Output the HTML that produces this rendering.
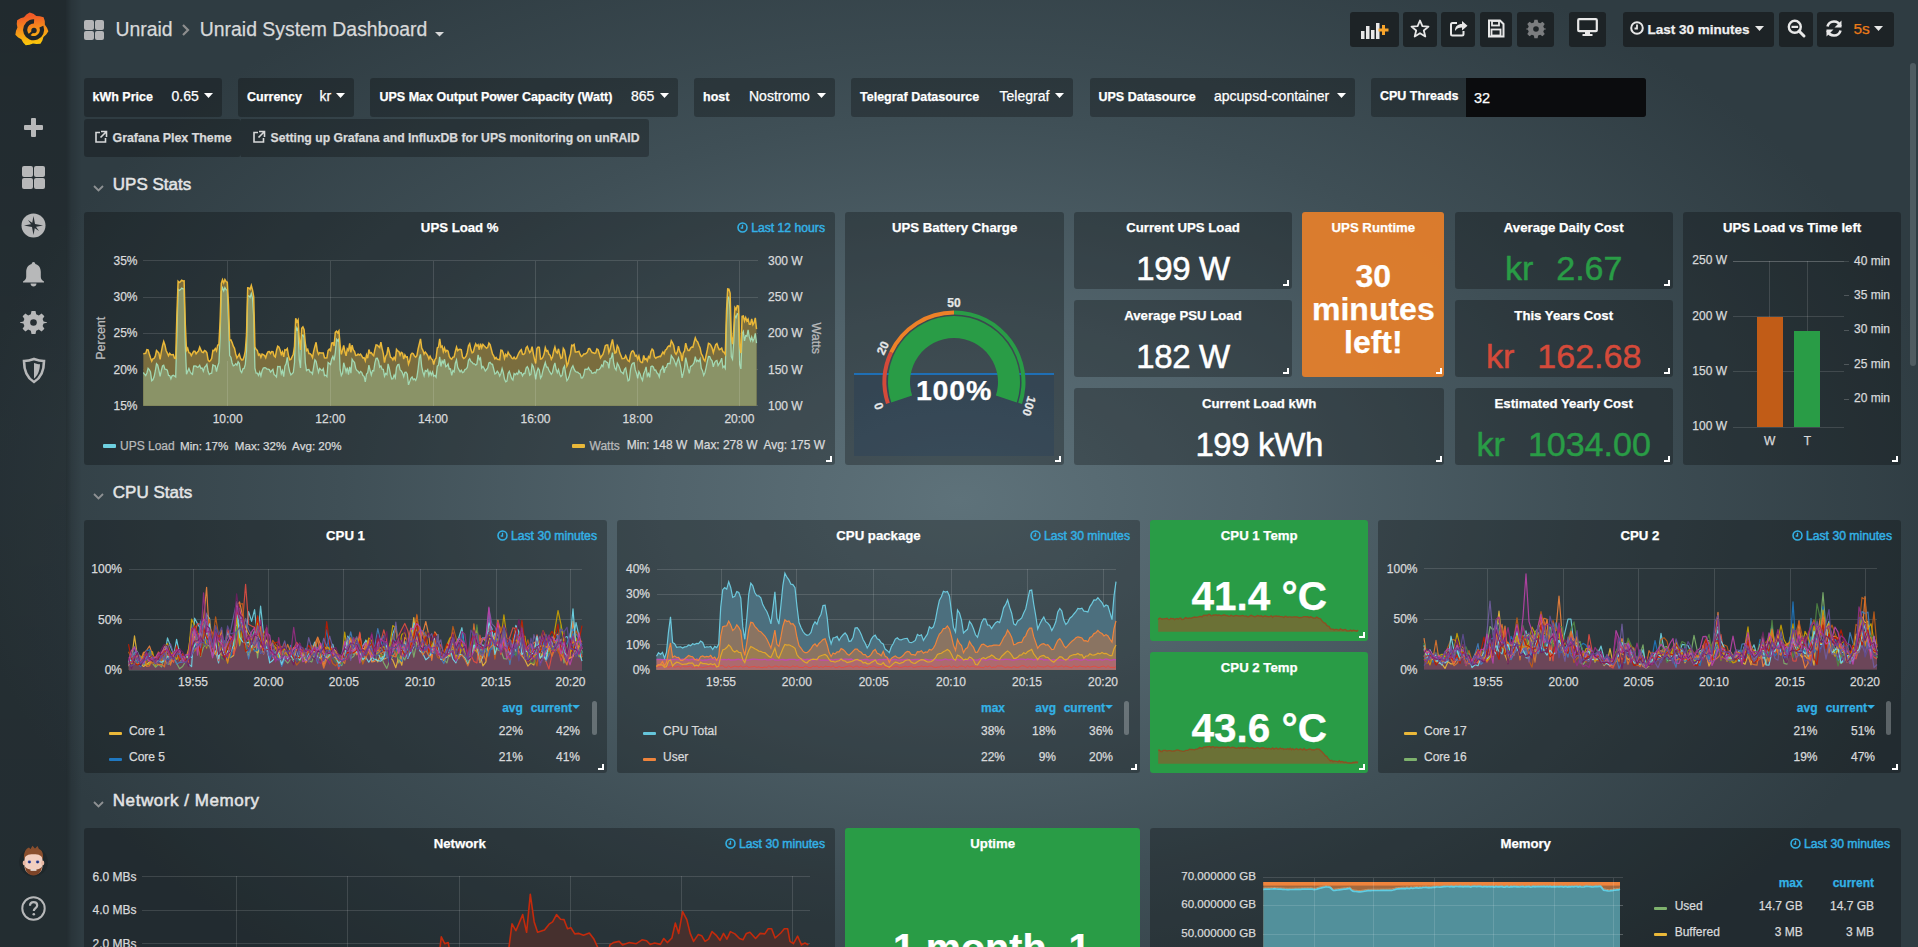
<!DOCTYPE html><html><head><meta charset="utf-8"><title>Unraid System Dashboard</title><style>
*{margin:0;padding:0;box-sizing:border-box}
html,body{width:1918px;height:947px;overflow:hidden}
body{font-family:"Liberation Sans",sans-serif;position:relative;
background:#2b353b;}
.bg{position:absolute;left:0;top:0;width:1918px;height:947px;
background:radial-gradient(ellipse 1000px 620px at 960px 500px,#5e727a 0%,#51636b 30%,#3f4f56 62%,#2f3c42 100%);}
.t{position:absolute;white-space:pre;line-height:1;-webkit-text-stroke:0.25px currentColor}
.b{position:absolute}
.p{position:absolute;border-radius:3px}
.rh{position:absolute;width:6px;height:6px;border-right:2px solid #fff;border-bottom:2px solid #fff}
svg{position:absolute;overflow:visible}
</style></head><body>
<div class="bg"></div>
<div class="b" style="left:0;top:0;width:66px;height:947px;background:linear-gradient(180deg,rgba(0,0,0,0.3) 0%,rgba(0,0,0,0.22) 45%,rgba(0,0,0,0.26) 100%)"></div>
<div class="b" style="left:66px;top:0;width:16px;height:947px;background:linear-gradient(90deg,rgba(0,0,0,0.28) 0%,rgba(0,0,0,0.12) 35%,rgba(0,0,0,0) 100%)"></div>
<svg style="left:0;top:0" width="66" height="60" viewBox="0 0 66 60">
<defs><linearGradient id="glg" x1="0" y1="0" x2="0" y2="1"><stop offset="0.1" stop-color="#f05a28"/><stop offset="1" stop-color="#fbca0a"/></linearGradient></defs>
<g transform="rotate(-6 31.5 29.5)"><path fill="url(#glg)" d="M31.5,12.3 L35.0,14.1 L37.7,16.5 L41.2,17.1 L44.8,18.7 L45.6,22.5 L45.3,26.1 L47.1,29.3 L48.1,33.1 L45.6,36.1 L42.6,38.2 L41.2,41.5 L38.9,44.6 L35.0,44.5 L31.5,43.5 L28.0,44.5 L24.1,44.6 L21.8,41.5 L20.4,38.2 L17.4,36.1 L14.9,33.1 L15.9,29.3 L17.7,26.1 L17.4,22.5 L18.2,18.7 L21.8,17.1 L25.3,16.5 L28.0,14.1Z"/></g>
<circle cx="33.6" cy="29.8" r="8.4" fill="none" stroke="#1f2529" stroke-width="4.2" stroke-dasharray="43 10" transform="rotate(-22 33.6 29.8)"/>
<circle cx="34" cy="30.5" r="2.7" fill="#1f2529"/>
<path d="M33,31.5 L29,35" stroke="#1f2529" stroke-width="2.2"/>
</svg>
<div class="b" style="left:24px;top:125px;width:19px;height:5px;background:#b7b8b9;border-radius:1px"></div>
<div class="b" style="left:31px;top:118px;width:5px;height:19px;background:#b7b8b9;border-radius:1px"></div>
<div class="b" style="left:22px;top:166px;width:11px;height:11px;background:#b7b8b9;border-radius:2px"></div>
<div class="b" style="left:22px;top:178px;width:11px;height:11px;background:#b7b8b9;border-radius:2px"></div>
<div class="b" style="left:34px;top:166px;width:11px;height:11px;background:#b7b8b9;border-radius:2px"></div>
<div class="b" style="left:34px;top:178px;width:11px;height:11px;background:#b7b8b9;border-radius:2px"></div>
<svg style="left:21px;top:213px" width="25" height="25" viewBox="0 0 25 25"><circle cx="12.5" cy="12.5" r="12" fill="#b7b8b9"/>
<path fill="#262e33" d="M12.5,3 L14,11 L22,12.5 L14,14 L12.5,22 L11,14 L3,12.5 L11,11 Z"/>
<path fill="#262e33" d="M7,7 L13,11 L18,18 L12,14 Z"/></svg>
<svg style="left:22px;top:261px" width="23" height="26" viewBox="0 0 23 26"><path fill="#b7b8b9" d="M11.5,1 C12.8,1 13.3,2 13.3,3 C17.3,4 18.8,7.5 18.8,11 L18.8,16 C18.8,18 20.5,19.5 22,20.5 L22,21.5 L1,21.5 L1,20.5 C2.5,19.5 4.2,18 4.2,16 L4.2,11 C4.2,7.5 5.7,4 9.7,3 C9.7,2 10.2,1 11.5,1 Z"/><path fill="#b7b8b9" d="M8.5,22.5 L14.5,22.5 C14.5,24.5 13,25.5 11.5,25.5 C10,25.5 8.5,24.5 8.5,22.5Z"/></svg>
<svg style="left:21px;top:310px" width="25" height="25" viewBox="0 0 25 25"><path fill="#b7b8b9" d="M10.5,1 L14.5,1 L15.2,4.3 L17.8,5.4 L20.6,3.5 L23.4,6.3 L21.6,9.1 L22.6,11.6 L26,12.3 L26,12.7 L22.6,13.4 L21.6,15.9 L23.4,18.7 L20.6,21.5 L17.8,19.6 L15.2,20.7 L14.5,24 L10.5,24 L9.8,20.7 L7.2,19.6 L4.4,21.5 L1.6,18.7 L3.4,15.9 L2.4,13.4 L-1,12.7 L-1,12.3 L2.4,11.6 L3.4,9.1 L1.6,6.3 L4.4,3.5 L7.2,5.4 L9.8,4.3 Z" transform="translate(0,0) scale(1)"/><circle cx="12.5" cy="12.5" r="3.3" fill="#262e33"/></svg>
<svg style="left:22px;top:357px" width="24" height="27" viewBox="0 0 24 27"><path fill="none" stroke="#b7b8b9" stroke-width="2.6" d="M12,2 C16,3.5 19.5,4 22,4 C22,14 18,21.5 12,25 C6,21.5 2,14 2,4 C4.5,4 8,3.5 12,2 Z"/><path fill="#b7b8b9" d="M12,6 C14.5,7 16.5,7.3 18,7.3 C17.8,14 15.5,19 12,21.5 Z"/></svg>
<svg style="left:13px;top:840px" width="41" height="44" viewBox="0 0 41 44">
<circle cx="20.5" cy="22" r="14.5" fill="rgba(0,0,0,0.13)"/>
<path fill="#f2cfc0" d="M11.5,20 C11.5,13 15,10.5 20.5,10.5 C26,10.5 29.5,13 29.5,20 L29.5,26 C29.5,31 26,34.5 20.5,34.5 C15,34.5 11.5,31 11.5,26 Z"/>
<ellipse cx="11.3" cy="23" rx="1.6" ry="2.4" fill="#e8b8a4"/><ellipse cx="29.7" cy="23" rx="1.6" ry="2.4" fill="#e8b8a4"/>
<path fill="#8a4f2e" d="M11,19.5 C10.5,12 13,8.5 16,7.5 L17.5,9 L19.5,5.8 L22,8.5 L24.5,6 L26,9 C29,10 30.5,13 30,19.5 C28.5,15.5 26.5,14.2 20.5,14.2 C14.5,14.2 12.5,15.5 11,19.5Z"/>
<path fill="#7d4428" d="M12,26.5 C12.5,32 15.5,35.5 20.5,35.5 C25.5,35.5 28.5,32 29,26.5 C27.5,29 25,29.5 20.5,29.5 C16,29.5 13.5,29 12,26.5Z"/>
<rect x="17.5" y="29.2" width="6" height="1.6" rx="0.6" fill="#f4f0ee"/>
<ellipse cx="16.4" cy="22" rx="1.7" ry="1.4" fill="#3a4fa8"/><ellipse cx="24.6" cy="22" rx="1.7" ry="1.4" fill="#3a4fa8"/>
<circle cx="16.4" cy="22" r="0.6" fill="#111"/><circle cx="24.6" cy="22" r="0.6" fill="#111"/>
</svg>
<svg style="left:21px;top:896px" width="25" height="25" viewBox="0 0 25 25"><circle cx="12.5" cy="12.5" r="11.2" fill="none" stroke="#b7b8b9" stroke-width="2"/>
<path fill="none" stroke="#b7b8b9" stroke-width="2.2" d="M9,9.8 C9,7.3 10.8,6.2 12.6,6.2 C14.6,6.2 16.2,7.5 16.2,9.4 C16.2,12 12.8,12.2 12.8,15"/><circle cx="12.8" cy="18.3" r="1.3" fill="#b7b8b9"/></svg>
<div class="b" style="left:1910px;top:63px;width:6px;height:303px;background:rgba(120,130,135,0.45);border-radius:3px"></div>
<div class="b" style="left:84.0px;top:20.0px;width:9.5px;height:9.5px;background:#b4b5b7;border-radius:2px"></div>
<div class="b" style="left:84.0px;top:30.5px;width:9.5px;height:9.5px;background:#b4b5b7;border-radius:2px"></div>
<div class="b" style="left:94.5px;top:20.0px;width:9.5px;height:9.5px;background:#b4b5b7;border-radius:2px"></div>
<div class="b" style="left:94.5px;top:30.5px;width:9.5px;height:9.5px;background:#b4b5b7;border-radius:2px"></div>
<div class="t" style="top:20.28px;font-size:19.4px;color:#d8d9da;left:115.50px;">Unraid</div>
<svg style="left:181px;top:23px" width="10" height="14" viewBox="0 0 10 14"><path d="M2,2 L7,7 L2,12" fill="none" stroke="#8e8e8e" stroke-width="2.2"/></svg>
<div class="t" style="top:20.28px;font-size:19.4px;color:#d8d9da;left:199.80px;">Unraid System Dashboard</div>
<svg style="left:435px;top:32px" width="9" height="5" viewBox="0 0 9 5"><path d="M0,0 L9,0 L4.5,4.5Z" fill="#d8d9da"/></svg>
<div class="b" style="left:1350px;top:12px;width:49px;height:34.5px;background:#1d2326;border-radius:3px;"></div>
<div class="b" style="left:1403px;top:12px;width:34px;height:34.5px;background:#1d2326;border-radius:3px;"></div>
<div class="b" style="left:1441px;top:12px;width:34px;height:34.5px;background:#1d2326;border-radius:3px;"></div>
<div class="b" style="left:1480px;top:12px;width:32px;height:34.5px;background:#1d2326;border-radius:3px;"></div>
<div class="b" style="left:1517px;top:12px;width:37px;height:34.5px;background:#1d2326;border-radius:3px;"></div>
<div class="b" style="left:1569px;top:12px;width:37px;height:34.5px;background:#1d2326;border-radius:3px;"></div>
<div class="b" style="left:1623px;top:12px;width:151px;height:34.5px;background:#1d2326;border-radius:3px;"></div>
<div class="b" style="left:1779px;top:12px;width:34px;height:34.5px;background:#1d2326;border-radius:3px;"></div>
<div class="b" style="left:1817px;top:12px;width:77px;height:34.5px;background:#1d2326;border-radius:3px;"></div>
<svg style="left:1360px;top:20px" width="30" height="20" viewBox="0 0 30 20">
<rect x="1" y="11" width="3.5" height="8" fill="#e8e8e8"/><rect x="6" y="6" width="3.5" height="13" fill="#e8e8e8"/><rect x="11" y="10" width="3.5" height="9" fill="#e8e8e8"/><rect x="16" y="3" width="3.5" height="16" fill="#e8e8e8"/>
<rect x="18.5" y="8.5" width="10" height="3" fill="#f7a42b"/><rect x="22" y="5" width="3" height="10" fill="#f7a42b"/></svg>
<svg style="left:1410px;top:19px" width="20" height="20" viewBox="0 0 20 20"><path d="M10,1.5 L12.4,7.2 L18.5,7.6 L13.8,11.5 L15.3,17.5 L10,14.2 L4.7,17.5 L6.2,11.5 L1.5,7.6 L7.6,7.2Z" fill="none" stroke="#e8e8e8" stroke-width="1.8" stroke-linejoin="round"/></svg>
<svg style="left:1449px;top:18px" width="20" height="20" viewBox="0 0 20 20"><path d="M8,5 L3.5,5 C2.5,5 2,5.5 2,6.5 L2,16 C2,17 2.5,17.5 3.5,17.5 L13,17.5 C14,17.5 14.5,17 14.5,16 L14.5,13" fill="none" stroke="#e8e8e8" stroke-width="2"/><path d="M6,13 C6,8 9,6 13,6 L13,3 L18.5,7.8 L13,12.5 L13,9.5 C10,9.5 7.5,10.5 6,13Z" fill="#e8e8e8"/></svg>
<svg style="left:1487px;top:19px" width="18" height="19" viewBox="0 0 18 19"><path d="M2,1.5 L13,1.5 L16.5,5 L16.5,17.5 L2,17.5Z" fill="none" stroke="#e8e8e8" stroke-width="2"/><rect x="5" y="2" width="7" height="4.5" fill="none" stroke="#e8e8e8" stroke-width="1.8"/><rect x="4.5" y="10.5" width="9" height="6" fill="none" stroke="#e8e8e8" stroke-width="1.8"/></svg>
<svg style="left:1526px;top:19px" width="20" height="20" viewBox="0 0 25 25"><path fill="#7b7d7f" d="M10.5,1 L14.5,1 L15.2,4.3 L17.8,5.4 L20.6,3.5 L23.4,6.3 L21.6,9.1 L22.6,11.6 L25,12.3 L25,12.7 L22.6,13.4 L21.6,15.9 L23.4,18.7 L20.6,21.5 L17.8,19.6 L15.2,20.7 L14.5,24 L10.5,24 L9.8,20.7 L7.2,19.6 L4.4,21.5 L1.6,18.7 L3.4,15.9 L2.4,13.4 L0,12.7 L0,12.3 L2.4,11.6 L3.4,9.1 L1.6,6.3 L4.4,3.5 L7.2,5.4 L9.8,4.3 Z"/><circle cx="12.5" cy="12.5" r="3.5" fill="#1d2326"/></svg>
<svg style="left:1577px;top:18px" width="21" height="19" viewBox="0 0 21 19"><rect x="1.2" y="1.2" width="18.6" height="12" rx="1" fill="none" stroke="#e8e8e8" stroke-width="2.2"/><rect x="8" y="14" width="5" height="2.5" fill="#e8e8e8"/><rect x="5.5" y="16" width="10" height="2" fill="#e8e8e8"/></svg>
<svg style="left:1630px;top:21px" width="14" height="14" viewBox="0 0 14 14"><circle cx="7" cy="7" r="5.8" fill="none" stroke="#e8e8e8" stroke-width="2"/><path d="M7,3.5 L7,7.5 L4.5,7.5" fill="none" stroke="#e8e8e8" stroke-width="1.8"/></svg>
<div class="t" style="top:22.57px;font-size:13.5px;color:#f0f0f0;font-weight:700;left:1647.50px;">Last 30 minutes</div>
<svg style="left:1755px;top:26px" width="9" height="6" viewBox="0 0 9 6"><path d="M0,0 L9,0 L4.5,5Z" fill="#e8e8e8"/></svg>
<svg style="left:1787px;top:19px" width="19" height="19" viewBox="0 0 19 19"><circle cx="7.8" cy="7.8" r="6" fill="none" stroke="#e8e8e8" stroke-width="2.4"/><path d="M12,12 L17,17" stroke="#e8e8e8" stroke-width="3" stroke-linecap="round"/><rect x="4.5" y="6.8" width="6.6" height="2.2" fill="#e8e8e8"/></svg>
<svg style="left:1825px;top:19px" width="18" height="19" viewBox="0 0 18 19"><path d="M15.5,7.5 C14.5,4.3 12,2.5 9,2.5 C5.5,2.5 3,5 2.5,7.5" fill="none" stroke="#e8e8e8" stroke-width="2.6"/><path d="M16.5,1.5 L16.5,8.5 L9.5,8.5Z" fill="#e8e8e8"/><path d="M2.5,11.5 C3.5,14.7 6,16.5 9,16.5 C12.5,16.5 15,14 15.5,11.5" fill="none" stroke="#e8e8e8" stroke-width="2.6"/><path d="M1.5,17.5 L1.5,10.5 L8.5,10.5Z" fill="#e8e8e8"/></svg>
<div class="t" style="top:20.88px;font-size:15.5px;color:#eb7b18;left:1853.50px;">5s</div>
<svg style="left:1874px;top:26px" width="9" height="6" viewBox="0 0 9 6"><path d="M0,0 L9,0 L4.5,5Z" fill="#e8e8e8"/></svg>
<div class="b" style="left:84px;top:78px;width:138px;height:38.5px;background:rgba(0,0,0,0.27);border-radius:3px;"></div>
<div class="t" style="top:90.92px;font-size:12.5px;color:#ffffff;font-weight:700;left:92.50px;">kWh Price</div>
<div class="t" style="top:88.75px;font-size:14px;color:#ffffff;left:171.50px;">0.65</div>
<svg style="left:204px;top:93px" width="9" height="6" viewBox="0 0 9 6"><path d="M0,0 L9,0 L4.5,5Z" fill="#ffffff"/></svg>
<div class="b" style="left:238px;top:78px;width:116px;height:38.5px;background:rgba(0,0,0,0.27);border-radius:3px;"></div>
<div class="t" style="top:90.92px;font-size:12.5px;color:#ffffff;font-weight:700;left:247.00px;">Currency</div>
<div class="t" style="top:88.75px;font-size:14px;color:#ffffff;left:319.50px;">kr</div>
<svg style="left:336px;top:93px" width="9" height="6" viewBox="0 0 9 6"><path d="M0,0 L9,0 L4.5,5Z" fill="#ffffff"/></svg>
<div class="b" style="left:370px;top:78px;width:308px;height:38.5px;background:rgba(0,0,0,0.27);border-radius:3px;"></div>
<div class="t" style="top:90.92px;font-size:12.5px;color:#ffffff;font-weight:700;left:379.50px;">UPS Max Output Power Capacity (Watt)</div>
<div class="t" style="top:88.75px;font-size:14px;color:#ffffff;left:631.00px;">865</div>
<svg style="left:660px;top:93px" width="9" height="6" viewBox="0 0 9 6"><path d="M0,0 L9,0 L4.5,5Z" fill="#ffffff"/></svg>
<div class="b" style="left:694px;top:78px;width:141px;height:38.5px;background:rgba(0,0,0,0.27);border-radius:3px;"></div>
<div class="t" style="top:90.92px;font-size:12.5px;color:#ffffff;font-weight:700;left:703.00px;">host</div>
<div class="t" style="top:88.75px;font-size:14px;color:#ffffff;left:749.00px;">Nostromo</div>
<svg style="left:817px;top:93px" width="9" height="6" viewBox="0 0 9 6"><path d="M0,0 L9,0 L4.5,5Z" fill="#ffffff"/></svg>
<div class="b" style="left:851px;top:78px;width:222px;height:38.5px;background:rgba(0,0,0,0.27);border-radius:3px;"></div>
<div class="t" style="top:90.92px;font-size:12.5px;color:#ffffff;font-weight:700;left:860.00px;">Telegraf Datasource</div>
<div class="t" style="top:88.75px;font-size:14px;color:#ffffff;left:999.50px;">Telegraf</div>
<svg style="left:1055px;top:93px" width="9" height="6" viewBox="0 0 9 6"><path d="M0,0 L9,0 L4.5,5Z" fill="#ffffff"/></svg>
<div class="b" style="left:1090px;top:78px;width:265px;height:38.5px;background:rgba(0,0,0,0.27);border-radius:3px;"></div>
<div class="t" style="top:90.92px;font-size:12.5px;color:#ffffff;font-weight:700;left:1098.50px;">UPS Datasource</div>
<div class="t" style="top:88.75px;font-size:14px;color:#ffffff;left:1214.00px;">apcupsd-container</div>
<svg style="left:1337px;top:93px" width="9" height="6" viewBox="0 0 9 6"><path d="M0,0 L9,0 L4.5,5Z" fill="#ffffff"/></svg>
<div class="b" style="left:1371px;top:78px;width:275px;height:38.5px;background:rgba(0,0,0,0.27);border-radius:3px;"></div>
<div class="b" style="left:1466px;top:78px;width:180px;height:38.5px;background:#0b0c0e;border-radius:0px;border-radius:0 3px 3px 0"></div>
<div class="t" style="top:90.42px;font-size:12.5px;color:#ffffff;font-weight:700;left:1380.00px;">CPU Threads</div>
<div class="t" style="top:90.73px;font-size:14.5px;color:#ffffff;left:1474.00px;">32</div>
<div class="b" style="left:84px;top:119px;width:157px;height:37.5px;background:rgba(0,0,0,0.27);border-radius:3px;"></div>
<div class="b" style="left:241px;top:119px;width:408px;height:37.5px;background:rgba(0,0,0,0.27);border-radius:0px;border-radius:0 3px 3px 0"></div>
<svg style="left:94px;top:130px" width="14" height="14" viewBox="0 0 14 14"><path d="M6,2.5 L2,2.5 L2,12 L11.5,12 L11.5,8" fill="none" stroke="#d8d9da" stroke-width="1.6"/><path d="M7,1.5 L12.5,1.5 L12.5,7 M12.5,1.5 L6.5,7.5" fill="none" stroke="#d8d9da" stroke-width="1.6"/></svg>
<div class="t" style="top:131.80px;font-size:12.4px;color:#d8d9da;font-weight:700;left:112.50px;">Grafana Plex Theme</div>
<svg style="left:252px;top:130px" width="14" height="14" viewBox="0 0 14 14"><path d="M6,2.5 L2,2.5 L2,12 L11.5,12 L11.5,8" fill="none" stroke="#d8d9da" stroke-width="1.6"/><path d="M7,1.5 L12.5,1.5 L12.5,7 M12.5,1.5 L6.5,7.5" fill="none" stroke="#d8d9da" stroke-width="1.6"/></svg>
<div class="t" style="top:131.97px;font-size:12.2px;color:#d8d9da;font-weight:700;left:270.50px;">Setting up Grafana and InfluxDB for UPS monitoring on unRAID</div>
<svg style="left:93px;top:184.8px" width="11" height="7" viewBox="0 0 11 7"><path d="M1,1 L5.5,5.5 L10,1" fill="none" stroke="#8e9193" stroke-width="1.8"/></svg>
<div class="t" style="top:176.41px;font-size:17px;color:#e3e4e5;letter-spacing:0px;left:112.80px;-webkit-text-stroke:0.5px #e3e4e5">UPS Stats</div>
<svg style="left:93px;top:492.8px" width="11" height="7" viewBox="0 0 11 7"><path d="M1,1 L5.5,5.5 L10,1" fill="none" stroke="#8e9193" stroke-width="1.8"/></svg>
<div class="t" style="top:484.41px;font-size:17px;color:#e3e4e5;letter-spacing:0px;left:112.80px;-webkit-text-stroke:0.5px #e3e4e5">CPU Stats</div>
<svg style="left:93px;top:800.8px" width="11" height="7" viewBox="0 0 11 7"><path d="M1,1 L5.5,5.5 L10,1" fill="none" stroke="#8e9193" stroke-width="1.8"/></svg>
<div class="t" style="top:792.41px;font-size:17px;color:#e3e4e5;letter-spacing:0.55px;left:112.80px;-webkit-text-stroke:0.5px #e3e4e5">Network / Memory</div>
<div class="p" style="left:1073.8px;top:212px;width:218.4px;height:76.6px;background:rgba(0,0,0,0.27)"></div>
<div class="t" style="top:221.13px;font-size:13.2px;color:#ffffff;font-weight:700;left:583.00px;width:1200px;text-align:center;">Current UPS Load</div>
<div class="t" style="top:252.07px;font-size:33px;color:#ffffff;letter-spacing:-0.4px;left:583.00px;width:1200px;text-align:center;-webkit-text-stroke:0.5px #fff">199 W</div>
<div class="rh" style="left:1283.2px;top:279.6px"></div>
<div class="p" style="left:1073.8px;top:300px;width:218.4px;height:76.6px;background:rgba(0,0,0,0.27)"></div>
<div class="t" style="top:309.13px;font-size:13.2px;color:#ffffff;font-weight:700;left:583.00px;width:1200px;text-align:center;">Average PSU Load</div>
<div class="t" style="top:340.07px;font-size:33px;color:#ffffff;letter-spacing:-0.4px;left:583.00px;width:1200px;text-align:center;-webkit-text-stroke:0.5px #fff">182 W</div>
<div class="rh" style="left:1283.2px;top:367.6px"></div>
<div class="p" style="left:1073.8px;top:388px;width:370.7px;height:76.6px;background:rgba(0,0,0,0.27)"></div>
<div class="t" style="top:397.13px;font-size:13.2px;color:#ffffff;font-weight:700;left:659.15px;width:1200px;text-align:center;">Current Load kWh</div>
<div class="t" style="top:428.07px;font-size:33px;color:#ffffff;letter-spacing:-0.4px;left:659.15px;width:1200px;text-align:center;-webkit-text-stroke:0.5px #fff">199 kWh</div>
<div class="rh" style="left:1435.5px;top:455.6px"></div>
<div class="p" style="left:1302.2px;top:212px;width:142.3px;height:164.6px;background:rgba(237,129,40,0.89)"></div>
<div class="t" style="top:221.13px;font-size:13.2px;color:#ffffff;font-weight:700;left:773.35px;width:1200px;text-align:center;">UPS Runtime</div>
<div class="t" style="top:259.91px;font-size:32px;color:#ffffff;font-weight:700;left:773.35px;width:1200px;text-align:center;">30</div>
<div class="t" style="top:292.91px;font-size:32px;color:#ffffff;font-weight:700;left:773.35px;width:1200px;text-align:center;">minutes</div>
<div class="t" style="top:325.91px;font-size:32px;color:#ffffff;font-weight:700;left:773.35px;width:1200px;text-align:center;">left!</div>
<div class="rh" style="left:1435.5px;top:367.6px"></div>
<div class="p" style="left:1454.5px;top:212px;width:218.4px;height:76.6px;background:rgba(0,0,0,0.27)"></div>
<div class="t" style="top:221.13px;font-size:13.2px;color:#ffffff;font-weight:700;left:963.70px;width:1200px;text-align:center;">Average Daily Cost</div>
<div class="t" style="left:963.7px;top:251.22px;width:1200px;text-align:center;font-size:34px;color:#299c46;-webkit-text-stroke:0.5px #299c46">kr<span style="display:inline-block;width:23px"></span>2.67</div>
<div class="rh" style="left:1663.9px;top:279.6px"></div>
<div class="p" style="left:1454.5px;top:300px;width:218.4px;height:76.6px;background:rgba(0,0,0,0.27)"></div>
<div class="t" style="top:309.13px;font-size:13.2px;color:#ffffff;font-weight:700;left:963.70px;width:1200px;text-align:center;">This Years Cost</div>
<div class="t" style="left:963.7px;top:339.22px;width:1200px;text-align:center;font-size:34px;color:#d44a3a;-webkit-text-stroke:0.5px #d44a3a">kr<span style="display:inline-block;width:23px"></span>162.68</div>
<div class="rh" style="left:1663.9px;top:367.6px"></div>
<div class="p" style="left:1454.5px;top:388px;width:218.4px;height:76.6px;background:rgba(0,0,0,0.27)"></div>
<div class="t" style="top:397.13px;font-size:13.2px;color:#ffffff;font-weight:700;left:963.70px;width:1200px;text-align:center;">Estimated Yearly Cost</div>
<div class="t" style="left:963.7px;top:427.22px;width:1200px;text-align:center;font-size:34px;color:#299c46;-webkit-text-stroke:0.5px #299c46">kr<span style="display:inline-block;width:23px"></span>1034.00</div>
<div class="rh" style="left:1663.9px;top:455.6px"></div>
<div class="p" style="left:84.0px;top:212px;width:751.4px;height:252.6px;background:rgba(0,0,0,0.27)"></div>
<div class="t" style="top:221.13px;font-size:13.2px;color:#ffffff;font-weight:700;left:-140.30px;width:1200px;text-align:center;">UPS Load %</div>
<div class="t" style="left:425.0px;top:221.87px;width:400px;text-align:right;font-size:12.2px;color:#33b1e5;-webkit-text-stroke:0.45px #33b1e5"><svg style="position:relative;display:inline-block;vertical-align:-1px;margin-right:3px" width="11" height="11" viewBox="0 0 12 12"><circle cx="6" cy="6" r="4.9" fill="none" stroke="#33b1e5" stroke-width="1.7"/><path d="M6,3 L6,6.6 L4,6.6" fill="none" stroke="#33b1e5" stroke-width="1.5"/></svg>Last 12 hours</div>
<div class="b" style="left:143.3px;top:260.2px;width:614.7px;height:1px;background:rgba(255,255,255,0.13)"></div>
<div class="b" style="left:143.3px;top:296.5px;width:614.7px;height:1px;background:rgba(255,255,255,0.13)"></div>
<div class="b" style="left:143.3px;top:332.8px;width:614.7px;height:1px;background:rgba(255,255,255,0.13)"></div>
<div class="b" style="left:143.3px;top:369.0px;width:614.7px;height:1px;background:rgba(255,255,255,0.13)"></div>
<div class="b" style="left:143.3px;top:405.3px;width:614.7px;height:1px;background:rgba(255,255,255,0.13)"></div>
<div class="b" style="left:227.2px;top:260.7px;width:1px;height:145.1px;background:rgba(255,255,255,0.13)"></div>
<div class="b" style="left:329.8px;top:260.7px;width:1px;height:145.1px;background:rgba(255,255,255,0.13)"></div>
<div class="b" style="left:432.5px;top:260.7px;width:1px;height:145.1px;background:rgba(255,255,255,0.13)"></div>
<div class="b" style="left:535.0px;top:260.7px;width:1px;height:145.1px;background:rgba(255,255,255,0.13)"></div>
<div class="b" style="left:637.1px;top:260.7px;width:1px;height:145.1px;background:rgba(255,255,255,0.13)"></div>
<div class="b" style="left:738.9px;top:260.7px;width:1px;height:145.1px;background:rgba(255,255,255,0.13)"></div>
<div class="t" style="top:254.84px;font-size:12px;color:#d8d9da;left:-1062.50px;width:1200px;text-align:right;">35%</div>
<div class="t" style="top:291.12px;font-size:12px;color:#d8d9da;left:-1062.50px;width:1200px;text-align:right;">30%</div>
<div class="t" style="top:327.39px;font-size:12px;color:#d8d9da;left:-1062.50px;width:1200px;text-align:right;">25%</div>
<div class="t" style="top:363.67px;font-size:12px;color:#d8d9da;left:-1062.50px;width:1200px;text-align:right;">20%</div>
<div class="t" style="top:399.94px;font-size:12px;color:#d8d9da;left:-1062.50px;width:1200px;text-align:right;">15%</div>
<div class="t" style="top:254.84px;font-size:12px;color:#d8d9da;left:768.00px;">300 W</div>
<div class="t" style="top:291.12px;font-size:12px;color:#d8d9da;left:768.00px;">250 W</div>
<div class="t" style="top:327.39px;font-size:12px;color:#d8d9da;left:768.00px;">200 W</div>
<div class="t" style="top:363.67px;font-size:12px;color:#d8d9da;left:768.00px;">150 W</div>
<div class="t" style="top:399.94px;font-size:12px;color:#d8d9da;left:768.00px;">100 W</div>
<div class="t" style="top:412.84px;font-size:12px;color:#d8d9da;left:-372.30px;width:1200px;text-align:center;">10:00</div>
<div class="t" style="top:412.84px;font-size:12px;color:#d8d9da;left:-269.70px;width:1200px;text-align:center;">12:00</div>
<div class="t" style="top:412.84px;font-size:12px;color:#d8d9da;left:-167.00px;width:1200px;text-align:center;">14:00</div>
<div class="t" style="top:412.84px;font-size:12px;color:#d8d9da;left:-64.50px;width:1200px;text-align:center;">16:00</div>
<div class="t" style="top:412.84px;font-size:12px;color:#d8d9da;left:37.60px;width:1200px;text-align:center;">18:00</div>
<div class="t" style="top:412.84px;font-size:12px;color:#d8d9da;left:139.40px;width:1200px;text-align:center;">20:00</div>
<div class="t" style="left:61px;top:332px;width:80px;text-align:center;font-size:12.5px;color:#b9babb;transform:rotate(-90deg)">Percent</div>
<div class="t" style="left:776px;top:332px;width:80px;text-align:center;font-size:12.5px;color:#b9babb;transform:rotate(90deg)">Watts</div>
<svg style="left:0;top:0" width="1918" height="947"><path d="M143.3,405.8 L143.3,353.8 L144.5,353.6 L145.7,353.4 L146.9,349.6 L148.1,349.8 L149.3,354.0 L150.5,357.8 L151.7,361.2 L152.9,358.8 L154.1,358.4 L155.3,356.2 L156.5,350.5 L157.7,351.8 L158.9,353.2 L160.1,359.3 L161.3,351.9 L162.5,345.9 L163.7,341.5 L164.9,344.9 L166.1,350.5 L167.3,353.0 L168.5,355.7 L169.7,353.3 L170.9,354.8 L172.1,354.8 L173.3,354.6 L174.5,358.2 L175.7,358.5 L176.9,314.6 L178.1,281.3 L179.3,282.5 L180.5,281.6 L181.7,280.2 L182.9,280.9 L184.1,280.8 L185.3,324.6 L186.5,350.4 L187.7,348.3 L188.9,352.6 L190.1,353.1 L191.3,355.6 L192.5,353.3 L193.7,351.3 L194.9,351.3 L196.1,353.8 L197.3,352.3 L198.5,351.0 L199.7,347.2 L200.9,349.9 L202.1,352.2 L203.3,352.6 L204.5,350.5 L205.7,351.2 L206.9,352.7 L208.1,359.9 L209.3,361.4 L210.5,360.6 L211.7,358.3 L212.9,350.4 L214.1,350.6 L215.3,348.6 L216.5,350.8 L217.7,345.3 L218.9,344.4 L220.1,321.5 L221.3,283.5 L222.5,279.8 L223.7,282.9 L224.9,279.6 L226.1,281.7 L227.3,282.2 L228.5,305.0 L229.7,340.3 L230.9,339.9 L232.1,342.6 L233.3,346.2 L234.5,348.3 L235.7,353.9 L236.9,358.0 L238.1,356.1 L239.3,354.1 L240.5,358.2 L241.7,359.9 L242.9,359.8 L244.1,356.9 L245.3,350.8 L246.5,334.9 L247.7,287.8 L248.9,287.9 L250.1,289.4 L251.3,285.5 L252.5,290.0 L253.7,296.5 L254.9,346.8 L256.1,349.3 L257.3,350.3 L258.5,355.2 L259.7,354.1 L260.9,357.4 L262.1,354.1 L263.3,354.6 L264.5,355.4 L265.7,357.7 L266.9,353.9 L268.1,351.6 L269.3,351.5 L270.5,353.5 L271.7,351.5 L272.9,351.6 L274.1,355.9 L275.3,357.0 L276.5,350.5 L277.7,346.2 L278.9,347.0 L280.1,350.0 L281.3,354.4 L282.5,352.0 L283.7,356.9 L284.9,349.7 L286.1,350.2 L287.3,348.6 L288.5,355.6 L289.7,359.8 L290.9,359.4 L292.1,356.7 L293.3,354.2 L294.5,346.3 L295.7,318.3 L296.9,322.0 L298.1,319.9 L299.3,339.0 L300.5,349.9 L301.7,328.2 L302.9,326.9 L304.1,329.7 L305.3,343.1 L306.5,350.5 L307.7,349.2 L308.9,353.5 L310.1,353.7 L311.3,354.9 L312.5,357.6 L313.7,351.1 L314.9,346.5 L316.1,342.3 L317.3,350.8 L318.5,354.4 L319.7,352.6 L320.9,353.1 L322.1,353.1 L323.3,353.0 L324.5,357.8 L325.7,357.9 L326.9,357.8 L328.1,350.6 L329.3,349.2 L330.5,350.6 L331.7,343.0 L332.9,342.7 L334.1,345.9 L335.3,332.3 L336.5,331.2 L337.7,332.9 L338.9,330.9 L340.1,344.9 L341.3,354.3 L342.5,350.4 L343.7,345.4 L344.9,351.8 L346.1,355.8 L347.3,348.9 L348.5,350.5 L349.7,343.3 L350.9,352.4 L352.1,345.1 L353.3,350.0 L354.5,351.3 L355.7,355.4 L356.9,355.3 L358.1,354.1 L359.3,355.0 L360.5,354.0 L361.7,355.8 L362.9,358.0 L364.1,357.7 L365.3,360.9 L366.5,354.9 L367.7,358.2 L368.9,349.6 L370.1,353.2 L371.3,352.6 L372.5,354.5 L373.7,355.7 L374.9,349.7 L376.1,344.8 L377.3,345.1 L378.5,346.4 L379.7,347.5 L380.9,342.2 L382.1,348.6 L383.3,353.7 L384.5,362.7 L385.7,356.3 L386.9,354.3 L388.1,347.2 L389.3,352.0 L390.5,357.2 L391.7,357.8 L392.9,359.9 L394.1,357.4 L395.3,359.6 L396.5,349.4 L397.7,350.9 L398.9,351.5 L400.1,355.1 L401.3,352.3 L402.5,353.2 L403.7,359.1 L404.9,354.9 L406.1,357.1 L407.3,356.9 L408.5,364.1 L409.7,360.8 L410.9,354.5 L412.1,353.2 L413.3,353.9 L414.5,356.0 L415.7,357.1 L416.9,355.7 L418.1,349.0 L419.3,343.9 L420.5,338.8 L421.7,348.1 L422.9,350.3 L424.1,354.1 L425.3,352.0 L426.5,353.6 L427.7,355.5 L428.9,358.9 L430.1,356.3 L431.3,358.8 L432.5,359.6 L433.7,364.5 L434.9,359.7 L436.1,357.9 L437.3,348.0 L438.5,347.0 L439.7,338.9 L440.9,347.1 L442.1,346.1 L443.3,351.6 L444.5,348.0 L445.7,351.7 L446.9,350.2 L448.1,351.1 L449.3,356.5 L450.5,358.4 L451.7,359.2 L452.9,357.2 L454.1,356.9 L455.3,351.7 L456.5,347.1 L457.7,350.6 L458.9,349.4 L460.1,349.3 L461.3,349.7 L462.5,356.9 L463.7,358.5 L464.9,357.8 L466.1,356.1 L467.3,352.5 L468.5,345.7 L469.7,343.7 L470.9,349.6 L472.1,352.9 L473.3,352.0 L474.5,347.2 L475.7,343.9 L476.9,346.0 L478.1,344.8 L479.3,349.7 L480.5,343.6 L481.7,347.8 L482.9,344.5 L484.1,345.8 L485.3,347.0 L486.5,348.2 L487.7,347.4 L488.9,343.1 L490.1,344.7 L491.3,349.3 L492.5,354.0 L493.7,355.9 L494.9,358.8 L496.1,357.4 L497.3,359.3 L498.5,359.4 L499.7,359.8 L500.9,350.1 L502.1,350.4 L503.3,353.2 L504.5,358.3 L505.7,354.5 L506.9,356.3 L508.1,352.2 L509.3,354.6 L510.5,355.7 L511.7,358.0 L512.9,358.8 L514.1,357.0 L515.3,358.8 L516.5,358.4 L517.7,355.5 L518.9,352.9 L520.1,351.0 L521.3,349.7 L522.5,354.3 L523.7,354.4 L524.9,353.2 L526.1,347.9 L527.3,346.4 L528.5,349.7 L529.7,352.6 L530.9,351.2 L532.1,346.6 L533.3,353.6 L534.5,359.1 L535.7,363.5 L536.9,348.5 L538.1,347.1 L539.3,347.3 L540.5,359.1 L541.7,358.8 L542.9,357.2 L544.1,354.1 L545.3,347.6 L546.5,351.1 L547.7,350.5 L548.9,354.3 L550.1,355.1 L551.3,359.3 L552.5,356.9 L553.7,350.9 L554.9,347.1 L556.1,351.8 L557.3,353.0 L558.5,348.8 L559.7,354.3 L560.9,358.4 L562.1,357.8 L563.3,348.4 L564.5,350.3 L565.7,356.5 L566.9,366.1 L568.1,363.4 L569.3,357.8 L570.5,353.9 L571.7,345.3 L572.9,345.6 L574.1,344.5 L575.3,351.9 L576.5,351.9 L577.7,351.8 L578.9,351.2 L580.1,354.5 L581.3,356.5 L582.5,355.8 L583.7,354.0 L584.9,354.0 L586.1,353.4 L587.3,352.2 L588.5,348.7 L589.7,348.5 L590.9,350.6 L592.1,352.5 L593.3,352.8 L594.5,353.5 L595.7,352.9 L596.9,348.9 L598.1,349.8 L599.3,353.8 L600.5,357.9 L601.7,356.0 L602.9,354.5 L604.1,350.6 L605.3,345.7 L606.5,344.9 L607.7,344.9 L608.9,352.3 L610.1,349.2 L611.3,344.0 L612.5,339.4 L613.7,346.6 L614.9,353.1 L616.1,352.5 L617.3,345.7 L618.5,347.7 L619.7,352.8 L620.9,355.6 L622.1,358.7 L623.3,358.6 L624.5,358.4 L625.7,355.7 L626.9,358.6 L628.1,360.8 L629.3,361.5 L630.5,354.5 L631.7,351.5 L632.9,350.8 L634.1,352.5 L635.3,356.2 L636.5,355.4 L637.7,359.4 L638.9,355.9 L640.1,361.2 L641.3,362.4 L642.5,362.4 L643.7,355.5 L644.9,359.5 L646.1,358.7 L647.3,361.0 L648.5,356.6 L649.7,357.9 L650.9,351.8 L652.1,349.1 L653.3,350.4 L654.5,356.8 L655.7,358.3 L656.9,357.3 L658.1,357.1 L659.3,356.3 L660.5,356.6 L661.7,354.3 L662.9,352.0 L664.1,353.8 L665.3,350.2 L666.5,349.3 L667.7,346.9 L668.9,345.9 L670.1,346.5 L671.3,340.8 L672.5,342.8 L673.7,345.5 L674.9,352.4 L676.1,354.3 L677.3,351.8 L678.5,346.1 L679.7,351.5 L680.9,353.5 L682.1,361.1 L683.3,353.0 L684.5,351.0 L685.7,343.1 L686.9,347.8 L688.1,350.6 L689.3,350.6 L690.5,348.3 L691.7,347.0 L692.9,347.2 L694.1,342.2 L695.3,337.8 L696.5,340.7 L697.7,342.0 L698.9,345.3 L700.1,348.0 L701.3,353.8 L702.5,355.8 L703.7,359.5 L704.9,361.1 L706.1,355.5 L707.3,349.9 L708.5,343.4 L709.7,343.9 L710.9,345.4 L712.1,348.1 L713.3,352.7 L714.5,348.5 L715.7,344.6 L716.9,343.6 L718.1,347.1 L719.3,349.7 L720.5,349.2 L721.7,348.1 L722.9,351.7 L724.1,352.3 L725.3,354.3 L726.5,311.1 L727.7,289.0 L728.9,289.2 L730.1,293.1 L731.3,336.7 L732.5,344.1 L733.7,329.8 L734.9,307.6 L736.1,309.5 L737.3,305.7 L738.5,306.1 L739.7,345.2 L740.9,353.1 L742.1,316.3 L743.3,316.0 L744.5,321.0 L745.7,317.5 L746.9,321.0 L748.1,319.1 L749.3,324.2 L750.5,324.2 L751.7,318.9 L752.9,324.7 L754.1,322.6 L755.3,317.9 L756.5,329.1 L756.5,405.8 Z" fill="#7a6d3e"/><path d="M143.3,405.8 L143.3,372.5 L144.5,374.1 L145.7,375.5 L146.9,373.0 L148.1,368.3 L149.3,369.6 L150.5,371.9 L151.7,380.7 L152.9,379.8 L154.1,376.8 L155.3,371.0 L156.5,363.7 L157.7,365.0 L158.9,370.2 L160.1,376.3 L161.3,370.7 L162.5,366.0 L163.7,365.2 L164.9,369.2 L166.1,369.3 L167.3,370.2 L168.5,375.5 L169.7,375.6 L170.9,378.8 L172.1,375.7 L173.3,375.3 L174.5,376.0 L175.7,377.0 L176.9,334.6 L178.1,289.3 L179.3,290.5 L180.5,289.6 L181.7,288.2 L182.9,288.9 L184.1,288.8 L185.3,346.5 L186.5,374.2 L187.7,371.2 L188.9,368.4 L190.1,371.5 L191.3,373.5 L192.5,374.3 L193.7,366.1 L194.9,365.9 L196.1,366.2 L197.3,367.2 L198.5,366.9 L199.7,365.3 L200.9,368.4 L202.1,368.1 L203.3,371.3 L204.5,367.3 L205.7,366.1 L206.9,364.3 L208.1,371.3 L209.3,374.4 L210.5,373.3 L211.7,373.2 L212.9,364.9 L214.1,365.6 L215.3,365.8 L216.5,371.7 L217.7,366.2 L218.9,362.7 L220.1,338.2 L221.3,291.5 L222.5,287.8 L223.7,290.9 L224.9,287.6 L226.1,289.7 L227.3,290.2 L228.5,321.5 L229.7,355.6 L230.9,357.2 L232.1,363.0 L233.3,365.8 L234.5,365.3 L235.7,363.7 L236.9,365.1 L238.1,361.7 L239.3,363.3 L240.5,370.9 L241.7,372.6 L242.9,368.8 L244.1,368.5 L245.3,364.5 L246.5,350.8 L247.7,295.8 L248.9,295.9 L250.1,297.4 L251.3,293.5 L252.5,298.0 L253.7,316.3 L254.9,368.1 L256.1,373.1 L257.3,373.2 L258.5,375.4 L259.7,372.0 L260.9,376.0 L262.1,370.8 L263.3,368.1 L264.5,367.7 L265.7,367.9 L266.9,369.1 L268.1,369.1 L269.3,369.6 L270.5,372.0 L271.7,370.7 L272.9,369.4 L274.1,374.6 L275.3,375.5 L276.5,376.9 L277.7,366.5 L278.9,366.7 L280.1,366.5 L281.3,373.7 L282.5,370.6 L283.7,376.7 L284.9,366.1 L286.1,363.8 L287.3,357.4 L288.5,366.2 L289.7,371.7 L290.9,374.8 L292.1,373.7 L293.3,372.5 L294.5,362.5 L295.7,326.3 L296.9,330.0 L298.1,327.9 L299.3,359.6 L300.5,368.0 L301.7,336.2 L302.9,334.9 L304.1,337.7 L305.3,362.5 L306.5,370.6 L307.7,369.7 L308.9,369.4 L310.1,372.1 L311.3,372.1 L312.5,373.9 L313.7,366.7 L314.9,359.9 L316.1,361.4 L317.3,367.2 L318.5,372.3 L319.7,368.5 L320.9,369.7 L322.1,370.5 L323.3,368.7 L324.5,375.6 L325.7,375.2 L326.9,376.6 L328.1,362.5 L329.3,363.4 L330.5,364.5 L331.7,358.9 L332.9,356.4 L334.1,360.4 L335.3,352.6 L336.5,339.2 L337.7,340.9 L338.9,338.9 L340.1,369.5 L341.3,375.5 L342.5,373.3 L343.7,362.7 L344.9,367.2 L346.1,372.0 L347.3,367.7 L348.5,374.6 L349.7,366.9 L350.9,373.1 L352.1,359.3 L353.3,361.2 L354.5,362.4 L355.7,368.2 L356.9,370.5 L358.1,371.3 L359.3,373.3 L360.5,371.5 L361.7,372.3 L362.9,375.5 L364.1,376.3 L365.3,381.8 L366.5,374.0 L367.7,372.7 L368.9,365.1 L370.1,370.3 L371.3,374.9 L372.5,370.6 L373.7,371.0 L374.9,362.8 L376.1,358.3 L377.3,358.2 L378.5,360.9 L379.7,367.1 L380.9,365.9 L382.1,369.2 L383.3,369.4 L384.5,376.2 L385.7,373.4 L386.9,374.6 L388.1,363.9 L389.3,368.4 L390.5,374.7 L391.7,379.0 L392.9,378.7 L394.1,375.1 L395.3,377.8 L396.5,367.5 L397.7,364.7 L398.9,364.4 L400.1,370.0 L401.3,371.0 L402.5,373.0 L403.7,376.7 L404.9,372.4 L406.1,372.2 L407.3,374.2 L408.5,384.9 L409.7,381.6 L410.9,378.3 L412.1,376.9 L413.3,379.7 L414.5,378.8 L415.7,380.4 L416.9,377.1 L418.1,368.9 L419.3,358.1 L420.5,354.4 L421.7,366.6 L422.9,372.0 L424.1,375.7 L425.3,370.5 L426.5,371.3 L427.7,369.6 L428.9,375.5 L430.1,371.8 L431.3,374.9 L432.5,372.0 L433.7,376.1 L434.9,375.3 L436.1,377.1 L437.3,366.2 L438.5,365.2 L439.7,356.8 L440.9,366.5 L442.1,360.8 L443.3,363.0 L444.5,359.3 L445.7,366.6 L446.9,365.9 L448.1,364.0 L449.3,369.2 L450.5,368.8 L451.7,375.4 L452.9,370.6 L454.1,371.9 L455.3,363.2 L456.5,359.9 L457.7,367.4 L458.9,369.6 L460.1,371.8 L461.3,370.2 L462.5,372.6 L463.7,372.0 L464.9,369.6 L466.1,369.0 L467.3,367.5 L468.5,360.3 L469.7,358.8 L470.9,361.6 L472.1,362.3 L473.3,363.9 L474.5,363.9 L475.7,365.1 L476.9,364.1 L478.1,354.8 L479.3,359.7 L480.5,358.0 L481.7,368.1 L482.9,366.4 L484.1,368.2 L485.3,371.0 L486.5,369.5 L487.7,367.9 L488.9,362.9 L490.1,362.3 L491.3,364.0 L492.5,364.3 L493.7,369.0 L494.9,373.9 L496.1,373.2 L497.3,371.2 L498.5,372.8 L499.7,376.0 L500.9,373.4 L502.1,368.5 L503.3,372.6 L504.5,379.0 L505.7,381.8 L506.9,381.0 L508.1,373.4 L509.3,371.4 L510.5,375.0 L511.7,378.7 L512.9,380.0 L514.1,373.5 L515.3,374.7 L516.5,373.2 L517.7,374.3 L518.9,370.7 L520.1,373.0 L521.3,372.7 L522.5,375.9 L523.7,373.4 L524.9,373.5 L526.1,368.1 L527.3,366.7 L528.5,368.9 L529.7,375.3 L530.9,374.2 L532.1,364.5 L533.3,366.5 L534.5,371.5 L535.7,379.3 L536.9,371.9 L538.1,368.2 L539.3,369.9 L540.5,378.2 L541.7,376.2 L542.9,370.7 L544.1,366.5 L545.3,362.4 L546.5,367.1 L547.7,367.2 L548.9,370.3 L550.1,372.3 L551.3,374.3 L552.5,372.5 L553.7,366.6 L554.9,362.9 L556.1,369.3 L557.3,372.6 L558.5,369.6 L559.7,374.2 L560.9,376.6 L562.1,375.3 L563.3,368.3 L564.5,366.1 L565.7,374.3 L566.9,380.7 L568.1,379.0 L569.3,375.7 L570.5,371.1 L571.7,367.7 L572.9,365.7 L574.1,369.2 L575.3,371.2 L576.5,372.2 L577.7,372.2 L578.9,373.3 L580.1,373.9 L581.3,378.0 L582.5,377.8 L583.7,375.4 L584.9,369.3 L586.1,369.2 L587.3,369.5 L588.5,367.6 L589.7,370.0 L590.9,370.8 L592.1,373.2 L593.3,373.1 L594.5,372.3 L595.7,372.9 L596.9,369.6 L598.1,369.9 L599.3,369.5 L600.5,367.9 L601.7,365.1 L602.9,366.6 L604.1,361.1 L605.3,360.9 L606.5,362.1 L607.7,362.6 L608.9,368.4 L610.1,358.5 L611.3,358.1 L612.5,352.6 L613.7,363.2 L614.9,368.2 L616.1,370.1 L617.3,363.2 L618.5,365.2 L619.7,368.1 L620.9,371.8 L622.1,372.5 L623.3,373.7 L624.5,369.3 L625.7,368.0 L626.9,374.6 L628.1,380.9 L629.3,380.0 L630.5,369.6 L631.7,364.6 L632.9,363.1 L634.1,362.8 L635.3,369.9 L636.5,373.2 L637.7,378.4 L638.9,371.6 L640.1,373.9 L641.3,378.1 L642.5,380.4 L643.7,373.7 L644.9,370.9 L646.1,366.9 L647.3,376.0 L648.5,373.5 L649.7,377.4 L650.9,366.7 L652.1,366.0 L653.3,367.0 L654.5,370.2 L655.7,369.9 L656.9,372.8 L658.1,373.9 L659.3,376.9 L660.5,370.4 L661.7,369.1 L662.9,365.6 L664.1,372.9 L665.3,367.6 L666.5,367.3 L667.7,363.6 L668.9,363.4 L670.1,363.7 L671.3,355.5 L672.5,357.4 L673.7,359.1 L674.9,362.4 L676.1,365.6 L677.3,361.2 L678.5,357.9 L679.7,362.7 L680.9,368.2 L682.1,377.9 L683.3,373.2 L684.5,367.4 L685.7,357.7 L686.9,363.0 L688.1,368.9 L689.3,373.4 L690.5,366.4 L691.7,365.9 L692.9,364.6 L694.1,362.7 L695.3,356.6 L696.5,361.5 L697.7,360.2 L698.9,361.5 L700.1,358.8 L701.3,368.3 L702.5,370.7 L703.7,375.3 L704.9,372.7 L706.1,367.6 L707.3,361.6 L708.5,356.4 L709.7,356.5 L710.9,359.4 L712.1,360.8 L713.3,366.8 L714.5,362.7 L715.7,361.0 L716.9,360.4 L718.1,365.5 L719.3,363.5 L720.5,361.4 L721.7,358.1 L722.9,367.5 L724.1,366.1 L725.3,368.3 L726.5,322.9 L727.7,297.0 L728.9,297.2 L730.1,310.6 L731.3,356.7 L732.5,359.2 L733.7,342.2 L734.9,315.6 L736.1,317.5 L737.3,313.7 L738.5,314.1 L739.7,364.4 L740.9,368.9 L742.1,333.7 L743.3,331.4 L744.5,340.8 L745.7,335.6 L746.9,336.2 L748.1,329.8 L749.3,336.9 L750.5,340.7 L751.7,337.0 L752.9,341.2 L754.1,338.5 L755.3,333.4 L756.5,343.2 L756.5,405.8 Z" fill="#8a9367"/><path d="M143.3,372.5 L144.5,374.1 L145.7,375.5 L146.9,373.0 L148.1,368.3 L149.3,369.6 L150.5,371.9 L151.7,380.7 L152.9,379.8 L154.1,376.8 L155.3,371.0 L156.5,363.7 L157.7,365.0 L158.9,370.2 L160.1,376.3 L161.3,370.7 L162.5,366.0 L163.7,365.2 L164.9,369.2 L166.1,369.3 L167.3,370.2 L168.5,375.5 L169.7,375.6 L170.9,378.8 L172.1,375.7 L173.3,375.3 L174.5,376.0 L175.7,377.0 L176.9,334.6 L178.1,289.3 L179.3,290.5 L180.5,289.6 L181.7,288.2 L182.9,288.9 L184.1,288.8 L185.3,346.5 L186.5,374.2 L187.7,371.2 L188.9,368.4 L190.1,371.5 L191.3,373.5 L192.5,374.3 L193.7,366.1 L194.9,365.9 L196.1,366.2 L197.3,367.2 L198.5,366.9 L199.7,365.3 L200.9,368.4 L202.1,368.1 L203.3,371.3 L204.5,367.3 L205.7,366.1 L206.9,364.3 L208.1,371.3 L209.3,374.4 L210.5,373.3 L211.7,373.2 L212.9,364.9 L214.1,365.6 L215.3,365.8 L216.5,371.7 L217.7,366.2 L218.9,362.7 L220.1,338.2 L221.3,291.5 L222.5,287.8 L223.7,290.9 L224.9,287.6 L226.1,289.7 L227.3,290.2 L228.5,321.5 L229.7,355.6 L230.9,357.2 L232.1,363.0 L233.3,365.8 L234.5,365.3 L235.7,363.7 L236.9,365.1 L238.1,361.7 L239.3,363.3 L240.5,370.9 L241.7,372.6 L242.9,368.8 L244.1,368.5 L245.3,364.5 L246.5,350.8 L247.7,295.8 L248.9,295.9 L250.1,297.4 L251.3,293.5 L252.5,298.0 L253.7,316.3 L254.9,368.1 L256.1,373.1 L257.3,373.2 L258.5,375.4 L259.7,372.0 L260.9,376.0 L262.1,370.8 L263.3,368.1 L264.5,367.7 L265.7,367.9 L266.9,369.1 L268.1,369.1 L269.3,369.6 L270.5,372.0 L271.7,370.7 L272.9,369.4 L274.1,374.6 L275.3,375.5 L276.5,376.9 L277.7,366.5 L278.9,366.7 L280.1,366.5 L281.3,373.7 L282.5,370.6 L283.7,376.7 L284.9,366.1 L286.1,363.8 L287.3,357.4 L288.5,366.2 L289.7,371.7 L290.9,374.8 L292.1,373.7 L293.3,372.5 L294.5,362.5 L295.7,326.3 L296.9,330.0 L298.1,327.9 L299.3,359.6 L300.5,368.0 L301.7,336.2 L302.9,334.9 L304.1,337.7 L305.3,362.5 L306.5,370.6 L307.7,369.7 L308.9,369.4 L310.1,372.1 L311.3,372.1 L312.5,373.9 L313.7,366.7 L314.9,359.9 L316.1,361.4 L317.3,367.2 L318.5,372.3 L319.7,368.5 L320.9,369.7 L322.1,370.5 L323.3,368.7 L324.5,375.6 L325.7,375.2 L326.9,376.6 L328.1,362.5 L329.3,363.4 L330.5,364.5 L331.7,358.9 L332.9,356.4 L334.1,360.4 L335.3,352.6 L336.5,339.2 L337.7,340.9 L338.9,338.9 L340.1,369.5 L341.3,375.5 L342.5,373.3 L343.7,362.7 L344.9,367.2 L346.1,372.0 L347.3,367.7 L348.5,374.6 L349.7,366.9 L350.9,373.1 L352.1,359.3 L353.3,361.2 L354.5,362.4 L355.7,368.2 L356.9,370.5 L358.1,371.3 L359.3,373.3 L360.5,371.5 L361.7,372.3 L362.9,375.5 L364.1,376.3 L365.3,381.8 L366.5,374.0 L367.7,372.7 L368.9,365.1 L370.1,370.3 L371.3,374.9 L372.5,370.6 L373.7,371.0 L374.9,362.8 L376.1,358.3 L377.3,358.2 L378.5,360.9 L379.7,367.1 L380.9,365.9 L382.1,369.2 L383.3,369.4 L384.5,376.2 L385.7,373.4 L386.9,374.6 L388.1,363.9 L389.3,368.4 L390.5,374.7 L391.7,379.0 L392.9,378.7 L394.1,375.1 L395.3,377.8 L396.5,367.5 L397.7,364.7 L398.9,364.4 L400.1,370.0 L401.3,371.0 L402.5,373.0 L403.7,376.7 L404.9,372.4 L406.1,372.2 L407.3,374.2 L408.5,384.9 L409.7,381.6 L410.9,378.3 L412.1,376.9 L413.3,379.7 L414.5,378.8 L415.7,380.4 L416.9,377.1 L418.1,368.9 L419.3,358.1 L420.5,354.4 L421.7,366.6 L422.9,372.0 L424.1,375.7 L425.3,370.5 L426.5,371.3 L427.7,369.6 L428.9,375.5 L430.1,371.8 L431.3,374.9 L432.5,372.0 L433.7,376.1 L434.9,375.3 L436.1,377.1 L437.3,366.2 L438.5,365.2 L439.7,356.8 L440.9,366.5 L442.1,360.8 L443.3,363.0 L444.5,359.3 L445.7,366.6 L446.9,365.9 L448.1,364.0 L449.3,369.2 L450.5,368.8 L451.7,375.4 L452.9,370.6 L454.1,371.9 L455.3,363.2 L456.5,359.9 L457.7,367.4 L458.9,369.6 L460.1,371.8 L461.3,370.2 L462.5,372.6 L463.7,372.0 L464.9,369.6 L466.1,369.0 L467.3,367.5 L468.5,360.3 L469.7,358.8 L470.9,361.6 L472.1,362.3 L473.3,363.9 L474.5,363.9 L475.7,365.1 L476.9,364.1 L478.1,354.8 L479.3,359.7 L480.5,358.0 L481.7,368.1 L482.9,366.4 L484.1,368.2 L485.3,371.0 L486.5,369.5 L487.7,367.9 L488.9,362.9 L490.1,362.3 L491.3,364.0 L492.5,364.3 L493.7,369.0 L494.9,373.9 L496.1,373.2 L497.3,371.2 L498.5,372.8 L499.7,376.0 L500.9,373.4 L502.1,368.5 L503.3,372.6 L504.5,379.0 L505.7,381.8 L506.9,381.0 L508.1,373.4 L509.3,371.4 L510.5,375.0 L511.7,378.7 L512.9,380.0 L514.1,373.5 L515.3,374.7 L516.5,373.2 L517.7,374.3 L518.9,370.7 L520.1,373.0 L521.3,372.7 L522.5,375.9 L523.7,373.4 L524.9,373.5 L526.1,368.1 L527.3,366.7 L528.5,368.9 L529.7,375.3 L530.9,374.2 L532.1,364.5 L533.3,366.5 L534.5,371.5 L535.7,379.3 L536.9,371.9 L538.1,368.2 L539.3,369.9 L540.5,378.2 L541.7,376.2 L542.9,370.7 L544.1,366.5 L545.3,362.4 L546.5,367.1 L547.7,367.2 L548.9,370.3 L550.1,372.3 L551.3,374.3 L552.5,372.5 L553.7,366.6 L554.9,362.9 L556.1,369.3 L557.3,372.6 L558.5,369.6 L559.7,374.2 L560.9,376.6 L562.1,375.3 L563.3,368.3 L564.5,366.1 L565.7,374.3 L566.9,380.7 L568.1,379.0 L569.3,375.7 L570.5,371.1 L571.7,367.7 L572.9,365.7 L574.1,369.2 L575.3,371.2 L576.5,372.2 L577.7,372.2 L578.9,373.3 L580.1,373.9 L581.3,378.0 L582.5,377.8 L583.7,375.4 L584.9,369.3 L586.1,369.2 L587.3,369.5 L588.5,367.6 L589.7,370.0 L590.9,370.8 L592.1,373.2 L593.3,373.1 L594.5,372.3 L595.7,372.9 L596.9,369.6 L598.1,369.9 L599.3,369.5 L600.5,367.9 L601.7,365.1 L602.9,366.6 L604.1,361.1 L605.3,360.9 L606.5,362.1 L607.7,362.6 L608.9,368.4 L610.1,358.5 L611.3,358.1 L612.5,352.6 L613.7,363.2 L614.9,368.2 L616.1,370.1 L617.3,363.2 L618.5,365.2 L619.7,368.1 L620.9,371.8 L622.1,372.5 L623.3,373.7 L624.5,369.3 L625.7,368.0 L626.9,374.6 L628.1,380.9 L629.3,380.0 L630.5,369.6 L631.7,364.6 L632.9,363.1 L634.1,362.8 L635.3,369.9 L636.5,373.2 L637.7,378.4 L638.9,371.6 L640.1,373.9 L641.3,378.1 L642.5,380.4 L643.7,373.7 L644.9,370.9 L646.1,366.9 L647.3,376.0 L648.5,373.5 L649.7,377.4 L650.9,366.7 L652.1,366.0 L653.3,367.0 L654.5,370.2 L655.7,369.9 L656.9,372.8 L658.1,373.9 L659.3,376.9 L660.5,370.4 L661.7,369.1 L662.9,365.6 L664.1,372.9 L665.3,367.6 L666.5,367.3 L667.7,363.6 L668.9,363.4 L670.1,363.7 L671.3,355.5 L672.5,357.4 L673.7,359.1 L674.9,362.4 L676.1,365.6 L677.3,361.2 L678.5,357.9 L679.7,362.7 L680.9,368.2 L682.1,377.9 L683.3,373.2 L684.5,367.4 L685.7,357.7 L686.9,363.0 L688.1,368.9 L689.3,373.4 L690.5,366.4 L691.7,365.9 L692.9,364.6 L694.1,362.7 L695.3,356.6 L696.5,361.5 L697.7,360.2 L698.9,361.5 L700.1,358.8 L701.3,368.3 L702.5,370.7 L703.7,375.3 L704.9,372.7 L706.1,367.6 L707.3,361.6 L708.5,356.4 L709.7,356.5 L710.9,359.4 L712.1,360.8 L713.3,366.8 L714.5,362.7 L715.7,361.0 L716.9,360.4 L718.1,365.5 L719.3,363.5 L720.5,361.4 L721.7,358.1 L722.9,367.5 L724.1,366.1 L725.3,368.3 L726.5,322.9 L727.7,297.0 L728.9,297.2 L730.1,310.6 L731.3,356.7 L732.5,359.2 L733.7,342.2 L734.9,315.6 L736.1,317.5 L737.3,313.7 L738.5,314.1 L739.7,364.4 L740.9,368.9 L742.1,333.7 L743.3,331.4 L744.5,340.8 L745.7,335.6 L746.9,336.2 L748.1,329.8 L749.3,336.9 L750.5,340.7 L751.7,337.0 L752.9,341.2 L754.1,338.5 L755.3,333.4 L756.5,343.2" fill="none" stroke="#a2d8b2" stroke-width="1.3"/><path d="M143.3,353.8 L144.5,353.6 L145.7,353.4 L146.9,349.6 L148.1,349.8 L149.3,354.0 L150.5,357.8 L151.7,361.2 L152.9,358.8 L154.1,358.4 L155.3,356.2 L156.5,350.5 L157.7,351.8 L158.9,353.2 L160.1,359.3 L161.3,351.9 L162.5,345.9 L163.7,341.5 L164.9,344.9 L166.1,350.5 L167.3,353.0 L168.5,355.7 L169.7,353.3 L170.9,354.8 L172.1,354.8 L173.3,354.6 L174.5,358.2 L175.7,358.5 L176.9,314.6 L178.1,281.3 L179.3,282.5 L180.5,281.6 L181.7,280.2 L182.9,280.9 L184.1,280.8 L185.3,324.6 L186.5,350.4 L187.7,348.3 L188.9,352.6 L190.1,353.1 L191.3,355.6 L192.5,353.3 L193.7,351.3 L194.9,351.3 L196.1,353.8 L197.3,352.3 L198.5,351.0 L199.7,347.2 L200.9,349.9 L202.1,352.2 L203.3,352.6 L204.5,350.5 L205.7,351.2 L206.9,352.7 L208.1,359.9 L209.3,361.4 L210.5,360.6 L211.7,358.3 L212.9,350.4 L214.1,350.6 L215.3,348.6 L216.5,350.8 L217.7,345.3 L218.9,344.4 L220.1,321.5 L221.3,283.5 L222.5,279.8 L223.7,282.9 L224.9,279.6 L226.1,281.7 L227.3,282.2 L228.5,305.0 L229.7,340.3 L230.9,339.9 L232.1,342.6 L233.3,346.2 L234.5,348.3 L235.7,353.9 L236.9,358.0 L238.1,356.1 L239.3,354.1 L240.5,358.2 L241.7,359.9 L242.9,359.8 L244.1,356.9 L245.3,350.8 L246.5,334.9 L247.7,287.8 L248.9,287.9 L250.1,289.4 L251.3,285.5 L252.5,290.0 L253.7,296.5 L254.9,346.8 L256.1,349.3 L257.3,350.3 L258.5,355.2 L259.7,354.1 L260.9,357.4 L262.1,354.1 L263.3,354.6 L264.5,355.4 L265.7,357.7 L266.9,353.9 L268.1,351.6 L269.3,351.5 L270.5,353.5 L271.7,351.5 L272.9,351.6 L274.1,355.9 L275.3,357.0 L276.5,350.5 L277.7,346.2 L278.9,347.0 L280.1,350.0 L281.3,354.4 L282.5,352.0 L283.7,356.9 L284.9,349.7 L286.1,350.2 L287.3,348.6 L288.5,355.6 L289.7,359.8 L290.9,359.4 L292.1,356.7 L293.3,354.2 L294.5,346.3 L295.7,318.3 L296.9,322.0 L298.1,319.9 L299.3,339.0 L300.5,349.9 L301.7,328.2 L302.9,326.9 L304.1,329.7 L305.3,343.1 L306.5,350.5 L307.7,349.2 L308.9,353.5 L310.1,353.7 L311.3,354.9 L312.5,357.6 L313.7,351.1 L314.9,346.5 L316.1,342.3 L317.3,350.8 L318.5,354.4 L319.7,352.6 L320.9,353.1 L322.1,353.1 L323.3,353.0 L324.5,357.8 L325.7,357.9 L326.9,357.8 L328.1,350.6 L329.3,349.2 L330.5,350.6 L331.7,343.0 L332.9,342.7 L334.1,345.9 L335.3,332.3 L336.5,331.2 L337.7,332.9 L338.9,330.9 L340.1,344.9 L341.3,354.3 L342.5,350.4 L343.7,345.4 L344.9,351.8 L346.1,355.8 L347.3,348.9 L348.5,350.5 L349.7,343.3 L350.9,352.4 L352.1,345.1 L353.3,350.0 L354.5,351.3 L355.7,355.4 L356.9,355.3 L358.1,354.1 L359.3,355.0 L360.5,354.0 L361.7,355.8 L362.9,358.0 L364.1,357.7 L365.3,360.9 L366.5,354.9 L367.7,358.2 L368.9,349.6 L370.1,353.2 L371.3,352.6 L372.5,354.5 L373.7,355.7 L374.9,349.7 L376.1,344.8 L377.3,345.1 L378.5,346.4 L379.7,347.5 L380.9,342.2 L382.1,348.6 L383.3,353.7 L384.5,362.7 L385.7,356.3 L386.9,354.3 L388.1,347.2 L389.3,352.0 L390.5,357.2 L391.7,357.8 L392.9,359.9 L394.1,357.4 L395.3,359.6 L396.5,349.4 L397.7,350.9 L398.9,351.5 L400.1,355.1 L401.3,352.3 L402.5,353.2 L403.7,359.1 L404.9,354.9 L406.1,357.1 L407.3,356.9 L408.5,364.1 L409.7,360.8 L410.9,354.5 L412.1,353.2 L413.3,353.9 L414.5,356.0 L415.7,357.1 L416.9,355.7 L418.1,349.0 L419.3,343.9 L420.5,338.8 L421.7,348.1 L422.9,350.3 L424.1,354.1 L425.3,352.0 L426.5,353.6 L427.7,355.5 L428.9,358.9 L430.1,356.3 L431.3,358.8 L432.5,359.6 L433.7,364.5 L434.9,359.7 L436.1,357.9 L437.3,348.0 L438.5,347.0 L439.7,338.9 L440.9,347.1 L442.1,346.1 L443.3,351.6 L444.5,348.0 L445.7,351.7 L446.9,350.2 L448.1,351.1 L449.3,356.5 L450.5,358.4 L451.7,359.2 L452.9,357.2 L454.1,356.9 L455.3,351.7 L456.5,347.1 L457.7,350.6 L458.9,349.4 L460.1,349.3 L461.3,349.7 L462.5,356.9 L463.7,358.5 L464.9,357.8 L466.1,356.1 L467.3,352.5 L468.5,345.7 L469.7,343.7 L470.9,349.6 L472.1,352.9 L473.3,352.0 L474.5,347.2 L475.7,343.9 L476.9,346.0 L478.1,344.8 L479.3,349.7 L480.5,343.6 L481.7,347.8 L482.9,344.5 L484.1,345.8 L485.3,347.0 L486.5,348.2 L487.7,347.4 L488.9,343.1 L490.1,344.7 L491.3,349.3 L492.5,354.0 L493.7,355.9 L494.9,358.8 L496.1,357.4 L497.3,359.3 L498.5,359.4 L499.7,359.8 L500.9,350.1 L502.1,350.4 L503.3,353.2 L504.5,358.3 L505.7,354.5 L506.9,356.3 L508.1,352.2 L509.3,354.6 L510.5,355.7 L511.7,358.0 L512.9,358.8 L514.1,357.0 L515.3,358.8 L516.5,358.4 L517.7,355.5 L518.9,352.9 L520.1,351.0 L521.3,349.7 L522.5,354.3 L523.7,354.4 L524.9,353.2 L526.1,347.9 L527.3,346.4 L528.5,349.7 L529.7,352.6 L530.9,351.2 L532.1,346.6 L533.3,353.6 L534.5,359.1 L535.7,363.5 L536.9,348.5 L538.1,347.1 L539.3,347.3 L540.5,359.1 L541.7,358.8 L542.9,357.2 L544.1,354.1 L545.3,347.6 L546.5,351.1 L547.7,350.5 L548.9,354.3 L550.1,355.1 L551.3,359.3 L552.5,356.9 L553.7,350.9 L554.9,347.1 L556.1,351.8 L557.3,353.0 L558.5,348.8 L559.7,354.3 L560.9,358.4 L562.1,357.8 L563.3,348.4 L564.5,350.3 L565.7,356.5 L566.9,366.1 L568.1,363.4 L569.3,357.8 L570.5,353.9 L571.7,345.3 L572.9,345.6 L574.1,344.5 L575.3,351.9 L576.5,351.9 L577.7,351.8 L578.9,351.2 L580.1,354.5 L581.3,356.5 L582.5,355.8 L583.7,354.0 L584.9,354.0 L586.1,353.4 L587.3,352.2 L588.5,348.7 L589.7,348.5 L590.9,350.6 L592.1,352.5 L593.3,352.8 L594.5,353.5 L595.7,352.9 L596.9,348.9 L598.1,349.8 L599.3,353.8 L600.5,357.9 L601.7,356.0 L602.9,354.5 L604.1,350.6 L605.3,345.7 L606.5,344.9 L607.7,344.9 L608.9,352.3 L610.1,349.2 L611.3,344.0 L612.5,339.4 L613.7,346.6 L614.9,353.1 L616.1,352.5 L617.3,345.7 L618.5,347.7 L619.7,352.8 L620.9,355.6 L622.1,358.7 L623.3,358.6 L624.5,358.4 L625.7,355.7 L626.9,358.6 L628.1,360.8 L629.3,361.5 L630.5,354.5 L631.7,351.5 L632.9,350.8 L634.1,352.5 L635.3,356.2 L636.5,355.4 L637.7,359.4 L638.9,355.9 L640.1,361.2 L641.3,362.4 L642.5,362.4 L643.7,355.5 L644.9,359.5 L646.1,358.7 L647.3,361.0 L648.5,356.6 L649.7,357.9 L650.9,351.8 L652.1,349.1 L653.3,350.4 L654.5,356.8 L655.7,358.3 L656.9,357.3 L658.1,357.1 L659.3,356.3 L660.5,356.6 L661.7,354.3 L662.9,352.0 L664.1,353.8 L665.3,350.2 L666.5,349.3 L667.7,346.9 L668.9,345.9 L670.1,346.5 L671.3,340.8 L672.5,342.8 L673.7,345.5 L674.9,352.4 L676.1,354.3 L677.3,351.8 L678.5,346.1 L679.7,351.5 L680.9,353.5 L682.1,361.1 L683.3,353.0 L684.5,351.0 L685.7,343.1 L686.9,347.8 L688.1,350.6 L689.3,350.6 L690.5,348.3 L691.7,347.0 L692.9,347.2 L694.1,342.2 L695.3,337.8 L696.5,340.7 L697.7,342.0 L698.9,345.3 L700.1,348.0 L701.3,353.8 L702.5,355.8 L703.7,359.5 L704.9,361.1 L706.1,355.5 L707.3,349.9 L708.5,343.4 L709.7,343.9 L710.9,345.4 L712.1,348.1 L713.3,352.7 L714.5,348.5 L715.7,344.6 L716.9,343.6 L718.1,347.1 L719.3,349.7 L720.5,349.2 L721.7,348.1 L722.9,351.7 L724.1,352.3 L725.3,354.3 L726.5,311.1 L727.7,289.0 L728.9,289.2 L730.1,293.1 L731.3,336.7 L732.5,344.1 L733.7,329.8 L734.9,307.6 L736.1,309.5 L737.3,305.7 L738.5,306.1 L739.7,345.2 L740.9,353.1 L742.1,316.3 L743.3,316.0 L744.5,321.0 L745.7,317.5 L746.9,321.0 L748.1,319.1 L749.3,324.2 L750.5,324.2 L751.7,318.9 L752.9,324.7 L754.1,322.6 L755.3,317.9 L756.5,329.1" fill="none" stroke="#eab839" stroke-width="1.5"/></svg>
<div class="b" style="left:227.2px;top:360.7px;width:1px;height:45.1px;background:rgba(255,255,255,0.13)"></div>
<div class="b" style="left:329.8px;top:360.7px;width:1px;height:45.1px;background:rgba(255,255,255,0.13)"></div>
<div class="b" style="left:432.5px;top:360.7px;width:1px;height:45.1px;background:rgba(255,255,255,0.13)"></div>
<div class="b" style="left:535.0px;top:360.7px;width:1px;height:45.1px;background:rgba(255,255,255,0.13)"></div>
<div class="b" style="left:637.1px;top:360.7px;width:1px;height:45.1px;background:rgba(255,255,255,0.13)"></div>
<div class="b" style="left:738.9px;top:360.7px;width:1px;height:45.1px;background:rgba(255,255,255,0.13)"></div>
<div class="b" style="left:103px;top:444.3px;width:13px;height:3.4px;background:#6ed0e0;border-radius:1px"></div>
<div class="t" style="top:440.14px;font-size:12px;color:#b9babb;left:120.00px;">UPS Load</div>
<div class="t" style="top:440.48px;font-size:11.6px;color:#d8d9da;left:180.00px;">Min: 17%  Max: 32%  Avg: 20%</div>
<div class="b" style="left:571.5px;top:444.3px;width:13px;height:3.4px;background:#eab839;border-radius:1px"></div>
<div class="t" style="top:440.14px;font-size:12px;color:#b9babb;left:589.50px;">Watts</div>
<div class="t" style="top:440.18px;font-size:11.95px;color:#d8d9da;left:626.80px;">Min: 148 W  Max: 278 W  Avg: 175 W</div>
<div class="rh" style="left:826.4px;top:455.6px"></div>
<div class="p" style="left:845.4px;top:212px;width:218.4px;height:252.6px;background:rgba(0,0,0,0.27)"></div>
<div class="t" style="top:221.13px;font-size:13.2px;color:#ffffff;font-weight:700;left:354.60px;width:1200px;text-align:center;">UPS Battery Charge</div>
<div class="b" style="left:854px;top:374px;width:200px;height:81.5px;background:rgba(0,40,100,0.15)"></div>
<div class="b" style="left:854px;top:373.3px;width:200px;height:1.6px;background:#1f6fb5"></div>
<svg style="left:0;top:0" width="1918" height="947"><path d="M891.23,402.40 A66,66 0 1 1 1016.77,402.40 L995.85,395.60 A44,44 0 1 0 912.15,395.60 Z" fill="#299c46"/><path d="M886.00,404.09 A71.5,71.5 0 0 1 889.30,351.56 L892.92,353.26 A67.5,67.5 0 0 0 889.80,402.86 Z" fill="#d44a3a"/><path d="M889.30,351.56 A71.5,71.5 0 0 1 954.00,310.50 L954.00,314.50 A67.5,67.5 0 0 0 892.92,353.26 Z" fill="#ed8128"/><path d="M954.00,310.50 A71.5,71.5 0 0 1 1022.00,404.09 L1018.20,402.86 A67.5,67.5 0 0 0 954.00,314.50 Z" fill="#299c46"/></svg>
<div class="t" style="left:858.9px;top:400.4px;width:40px;text-align:center;font-size:12px;font-weight:700;color:#e6e7e8;transform:rotate(-108.0deg)">0</div>
<div class="t" style="left:862.5px;top:342.4px;width:40px;text-align:center;font-size:12px;font-weight:700;color:#e6e7e8;transform:rotate(-64.8deg)">20</div>
<div class="t" style="left:934.0px;top:297.0px;width:40px;text-align:center;font-size:12px;font-weight:700;color:#e6e7e8;transform:rotate(0.0deg)">50</div>
<div class="t" style="left:1009.1px;top:400.4px;width:40px;text-align:center;font-size:12px;font-weight:700;color:#e6e7e8;transform:rotate(108.0deg)">100</div>
<div class="t" style="top:376.37px;font-size:28.5px;color:#ffffff;font-weight:700;letter-spacing:0.8px;left:354.00px;width:1200px;text-align:center;">100%</div>
<div class="rh" style="left:1054.8px;top:455.6px"></div>
<div class="p" style="left:1682.9px;top:212px;width:218.4px;height:252.6px;background:rgba(0,0,0,0.27)"></div>
<div class="t" style="top:221.13px;font-size:13.2px;color:#ffffff;font-weight:700;left:1192.10px;width:1200px;text-align:center;">UPS Load vs Time left</div>
<div class="b" style="left:1733px;top:260.9px;width:111.0px;height:1px;background:rgba(255,255,255,0.13)"></div>
<div class="b" style="left:1733px;top:316.0px;width:111.0px;height:1px;background:rgba(255,255,255,0.13)"></div>
<div class="b" style="left:1733px;top:371.0px;width:111.0px;height:1px;background:rgba(255,255,255,0.13)"></div>
<div class="b" style="left:1733px;top:426.5px;width:111.0px;height:1px;background:rgba(255,255,255,0.13)"></div>
<div class="b" style="left:1733px;top:260.9px;width:116px;height:1px;background:rgba(255,255,255,0.13)"></div>
<div class="b" style="left:1769.2px;top:261.4px;width:1px;height:165.6px;background:rgba(255,255,255,0.13)"></div>
<div class="b" style="left:1806.8px;top:261.4px;width:1px;height:165.6px;background:rgba(255,255,255,0.13)"></div>
<div class="t" style="top:254.44px;font-size:12px;color:#d8d9da;left:527.00px;width:1200px;text-align:right;">250 W</div>
<div class="t" style="top:309.54px;font-size:12px;color:#d8d9da;left:527.00px;width:1200px;text-align:right;">200 W</div>
<div class="t" style="top:364.54px;font-size:12px;color:#d8d9da;left:527.00px;width:1200px;text-align:right;">150 W</div>
<div class="t" style="top:420.04px;font-size:12px;color:#d8d9da;left:527.00px;width:1200px;text-align:right;">100 W</div>
<div class="t" style="top:254.54px;font-size:12px;color:#d8d9da;left:1854.00px;">40 min</div>
<div class="t" style="top:288.94px;font-size:12px;color:#d8d9da;left:1854.00px;">35 min</div>
<div class="b" style="left:1844px;top:295.3px;width:5px;height:1px;background:rgba(255,255,255,0.2)"></div>
<div class="t" style="top:323.34px;font-size:12px;color:#d8d9da;left:1854.00px;">30 min</div>
<div class="b" style="left:1844px;top:329.7px;width:5px;height:1px;background:rgba(255,255,255,0.2)"></div>
<div class="t" style="top:357.74px;font-size:12px;color:#d8d9da;left:1854.00px;">25 min</div>
<div class="b" style="left:1844px;top:364.1px;width:5px;height:1px;background:rgba(255,255,255,0.2)"></div>
<div class="t" style="top:392.14px;font-size:12px;color:#d8d9da;left:1854.00px;">20 min</div>
<div class="b" style="left:1844px;top:398.5px;width:5px;height:1px;background:rgba(255,255,255,0.2)"></div>
<div class="b" style="left:1756.6px;top:317px;width:26.200000000000045px;height:110px;background:#c15c17;border-radius:0px;"></div>
<div class="b" style="left:1794px;top:330.6px;width:26.200000000000045px;height:96.39999999999998px;background:#299c46;border-radius:0px;"></div>
<div class="t" style="top:434.84px;font-size:12px;color:#d8d9da;left:1169.70px;width:1200px;text-align:center;">W</div>
<div class="t" style="top:434.84px;font-size:12px;color:#d8d9da;left:1207.30px;width:1200px;text-align:center;">T</div>
<div class="rh" style="left:1892.3px;top:455.6px"></div>
<div class="p" style="left:84.0px;top:520px;width:523.0px;height:252.6px;background:rgba(0,0,0,0.27)"></div>
<div class="t" style="top:529.13px;font-size:13.2px;color:#ffffff;font-weight:700;left:-254.50px;width:1200px;text-align:center;">CPU 1</div>
<div class="t" style="left:197.0px;top:529.87px;width:400px;text-align:right;font-size:12.2px;color:#33b1e5;-webkit-text-stroke:0.45px #33b1e5"><svg style="position:relative;display:inline-block;vertical-align:-1px;margin-right:3px" width="11" height="11" viewBox="0 0 12 12"><circle cx="6" cy="6" r="4.9" fill="none" stroke="#33b1e5" stroke-width="1.7"/><path d="M6,3 L6,6.6 L4,6.6" fill="none" stroke="#33b1e5" stroke-width="1.5"/></svg>Last 30 minutes</div>
<div class="b" style="left:128.5px;top:568.8px;width:453.5px;height:1px;background:rgba(255,255,255,0.13)"></div>
<div class="b" style="left:128.5px;top:619.1px;width:453.5px;height:1px;background:rgba(255,255,255,0.13)"></div>
<div class="b" style="left:128.5px;top:669.5px;width:453.5px;height:1px;background:rgba(255,255,255,0.13)"></div>
<div class="b" style="left:192.5px;top:569.3px;width:1px;height:100.7px;background:rgba(255,255,255,0.13)"></div>
<div class="b" style="left:268.0px;top:569.3px;width:1px;height:100.7px;background:rgba(255,255,255,0.13)"></div>
<div class="b" style="left:343.3px;top:569.3px;width:1px;height:100.7px;background:rgba(255,255,255,0.13)"></div>
<div class="b" style="left:419.5px;top:569.3px;width:1px;height:100.7px;background:rgba(255,255,255,0.13)"></div>
<div class="b" style="left:495.5px;top:569.3px;width:1px;height:100.7px;background:rgba(255,255,255,0.13)"></div>
<div class="b" style="left:570.0px;top:569.3px;width:1px;height:100.7px;background:rgba(255,255,255,0.13)"></div>
<div class="t" style="top:563.44px;font-size:12px;color:#d8d9da;left:-1078.00px;width:1200px;text-align:right;">100%</div>
<div class="t" style="top:613.79px;font-size:12px;color:#d8d9da;left:-1078.00px;width:1200px;text-align:right;">50%</div>
<div class="t" style="top:664.14px;font-size:12px;color:#d8d9da;left:-1078.00px;width:1200px;text-align:right;">0%</div>
<svg style="left:0;top:0" width="1918" height="947"><path d="M128.5,670.0 L128.5,663.3 L131.5,661.9 L134.5,661.5 L137.5,660.1 L140.5,663.1 L143.5,662.0 L146.5,660.8 L149.5,659.9 L152.5,661.3 L155.5,663.3 L158.5,661.1 L161.5,660.1 L164.5,658.1 L167.5,656.0 L170.5,658.2 L173.5,658.7 L176.6,652.8 L179.6,659.0 L182.6,661.2 L185.6,661.3 L188.6,659.0 L191.6,652.9 L194.6,645.2 L197.6,642.3 L200.6,644.5 L203.6,637.6 L206.6,637.6 L209.6,639.7 L212.6,652.2 L215.6,641.4 L218.6,654.5 L221.6,651.4 L224.6,655.2 L227.6,654.0 L230.6,650.1 L233.6,645.2 L236.6,623.9 L239.6,624.6 L242.6,632.9 L245.6,643.4 L248.6,649.1 L251.6,643.0 L254.6,644.3 L257.6,643.1 L260.6,643.1 L263.6,650.0 L266.7,646.3 L269.7,654.8 L272.7,654.7 L275.7,658.1 L278.7,656.0 L281.7,656.9 L284.7,654.9 L287.7,657.2 L290.7,654.7 L293.7,659.0 L296.7,656.4 L299.7,657.1 L302.7,655.0 L305.7,657.8 L308.7,658.6 L311.7,655.4 L314.7,653.0 L317.7,657.4 L320.7,654.0 L323.7,660.1 L326.7,655.7 L329.7,654.6 L332.7,656.1 L335.7,657.7 L338.7,661.6 L341.7,661.4 L344.7,658.3 L347.7,651.3 L350.7,650.1 L353.7,651.1 L356.8,650.3 L359.8,653.1 L362.8,657.0 L365.8,655.2 L368.8,646.4 L371.8,653.8 L374.8,658.4 L377.8,653.5 L380.8,653.6 L383.8,654.5 L386.8,652.8 L389.8,657.0 L392.8,650.2 L395.8,648.5 L398.8,652.4 L401.8,650.5 L404.8,650.3 L407.8,654.4 L410.8,651.4 L413.8,643.9 L416.8,636.9 L419.8,645.3 L422.8,647.7 L425.8,646.4 L428.8,652.9 L431.8,652.2 L434.8,648.0 L437.8,651.3 L440.8,658.0 L443.8,658.3 L446.9,654.6 L449.9,651.3 L452.9,645.2 L455.9,654.5 L458.9,654.1 L461.9,648.6 L464.9,652.2 L467.9,660.5 L470.9,655.9 L473.9,645.3 L476.9,647.0 L479.9,653.3 L482.9,654.3 L485.9,648.8 L488.9,638.0 L491.9,640.1 L494.9,645.5 L497.9,643.9 L500.9,649.4 L503.9,638.2 L506.9,651.2 L509.9,651.9 L512.9,647.7 L515.9,647.6 L518.9,644.9 L521.9,644.2 L524.9,652.7 L527.9,658.6 L530.9,657.5 L533.9,656.0 L537.0,652.8 L540.0,651.6 L543.0,652.7 L546.0,651.8 L549.0,650.3 L552.0,648.8 L555.0,649.3 L558.0,644.1 L561.0,649.0 L564.0,652.1 L567.0,657.8 L570.0,648.5 L573.0,649.1 L576.0,647.1 L579.0,650.9 L582.0,653.3 L582.0,670.0 Z" fill="#553052"/><path d="M128.5,670.0 L128.5,662.3 L131.5,660.5 L134.5,657.8 L137.5,660.3 L140.5,663.1 L143.5,663.9 L146.5,665.5 L149.5,661.5 L152.5,663.4 L155.5,667.2 L158.5,664.4 L161.5,666.9 L164.5,657.2 L167.5,664.4 L170.5,663.7 L173.5,658.1 L176.6,663.2 L179.6,668.8 L182.6,666.5 L185.6,661.3 L188.6,657.4 L191.6,631.3 L194.6,650.9 L197.6,645.4 L200.6,656.6 L203.6,646.7 L206.6,644.4 L209.6,646.3 L212.6,655.2 L215.6,652.4 L218.6,654.7 L221.6,653.1 L224.6,645.9 L227.6,652.3 L230.6,652.5 L233.6,643.0 L236.6,614.1 L239.6,645.8 L242.6,632.9 L245.6,639.4 L248.6,653.0 L251.6,638.1 L254.6,630.4 L257.6,658.0 L260.6,630.8 L263.6,643.3 L266.7,650.7 L269.7,650.2 L272.7,657.0 L275.7,658.3 L278.7,656.0 L281.7,656.5 L284.7,659.7 L287.7,663.1 L290.7,658.9 L293.7,660.5 L296.7,650.9 L299.7,653.5 L302.7,656.3 L305.7,656.0 L308.7,660.6 L311.7,662.0 L314.7,653.4 L317.7,657.4 L320.7,652.8 L323.7,651.1 L326.7,658.5 L329.7,653.2 L332.7,651.3 L335.7,658.4 L338.7,661.4 L341.7,665.7 L344.7,657.5 L347.7,643.0 L350.7,658.5 L353.7,656.2 L356.8,650.8 L359.8,656.2 L362.8,662.9 L365.8,639.9 L368.8,642.9 L371.8,649.5 L374.8,655.7 L377.8,654.0 L380.8,655.7 L383.8,663.1 L386.8,668.4 L389.8,660.4 L392.8,656.5 L395.8,651.4 L398.8,663.0 L401.8,655.6 L404.8,660.0 L407.8,648.3 L410.8,639.5 L413.8,657.2 L416.8,642.6 L419.8,635.5 L422.8,631.5 L425.8,639.6 L428.8,649.5 L431.8,656.6 L434.8,643.2 L437.8,648.0 L440.8,655.5 L443.8,659.3 L446.9,662.9 L449.9,651.3 L452.9,649.0 L455.9,651.1 L458.9,637.4 L461.9,641.4 L464.9,651.6 L467.9,662.9 L470.9,648.9 L473.9,635.6 L476.9,642.5 L479.9,647.9 L482.9,656.1 L485.9,649.2 L488.9,638.9 L491.9,634.4 L494.9,640.1 L497.9,650.1 L500.9,650.5 L503.9,658.7 L506.9,658.8 L509.9,643.8 L512.9,643.7 L515.9,645.6 L518.9,646.0 L521.9,644.2 L524.9,654.9 L527.9,657.9 L530.9,653.5 L533.9,654.3 L537.0,647.4 L540.0,651.5 L543.0,657.9 L546.0,651.8 L549.0,650.3 L552.0,648.8 L555.0,651.2 L558.0,648.3 L561.0,640.2 L564.0,662.9 L567.0,648.5 L570.0,635.6 L573.0,642.4 L576.0,639.2 L579.0,648.6 L582.0,654.7 L582.0,670.0 Z" fill="#7eb26d" fill-opacity="0.035"/><path d="M128.5,670.0 L128.5,666.1 L131.5,660.6 L134.5,635.8 L137.5,656.6 L140.5,663.2 L143.5,666.5 L146.5,664.5 L149.5,661.9 L152.5,662.4 L155.5,658.8 L158.5,656.9 L161.5,661.0 L164.5,659.3 L167.5,663.6 L170.5,660.1 L173.5,661.1 L176.6,650.3 L179.6,656.2 L182.6,658.9 L185.6,656.2 L188.6,658.1 L191.6,652.9 L194.6,636.0 L197.6,641.1 L200.6,638.9 L203.6,637.6 L206.6,634.6 L209.6,627.5 L212.6,649.9 L215.6,639.8 L218.6,656.5 L221.6,652.1 L224.6,647.1 L227.6,646.0 L230.6,657.6 L233.6,655.4 L236.6,623.9 L239.6,624.6 L242.6,634.4 L245.6,647.7 L248.6,656.2 L251.6,647.0 L254.6,650.4 L257.6,652.9 L260.6,645.8 L263.6,648.0 L266.7,640.1 L269.7,649.0 L272.7,652.8 L275.7,658.5 L278.7,648.9 L281.7,651.6 L284.7,650.4 L287.7,657.5 L290.7,656.4 L293.7,661.6 L296.7,658.0 L299.7,657.1 L302.7,656.2 L305.7,657.8 L308.7,661.7 L311.7,655.4 L314.7,657.2 L317.7,659.3 L320.7,645.7 L323.7,652.4 L326.7,647.9 L329.7,647.9 L332.7,655.9 L335.7,656.0 L338.7,663.2 L341.7,663.0 L344.7,658.1 L347.7,639.3 L350.7,646.4 L353.7,649.6 L356.8,653.4 L359.8,654.7 L362.8,648.7 L365.8,647.8 L368.8,653.0 L371.8,651.1 L374.8,656.7 L377.8,661.9 L380.8,653.6 L383.8,659.2 L386.8,657.7 L389.8,657.0 L392.8,660.2 L395.8,667.7 L398.8,656.8 L401.8,665.2 L404.8,643.9 L407.8,644.5 L410.8,641.2 L413.8,617.6 L416.8,642.4 L419.8,647.3 L422.8,645.4 L425.8,644.0 L428.8,652.9 L431.8,647.4 L434.8,649.3 L437.8,649.9 L440.8,650.9 L443.8,660.5 L446.9,654.6 L449.9,656.3 L452.9,635.5 L455.9,655.1 L458.9,656.8 L461.9,647.7 L464.9,649.0 L467.9,656.6 L470.9,648.4 L473.9,650.7 L476.9,627.9 L479.9,654.2 L482.9,665.9 L485.9,661.8 L488.9,638.0 L491.9,640.1 L494.9,637.2 L497.9,634.0 L500.9,648.0 L503.9,646.2 L506.9,650.2 L509.9,648.5 L512.9,647.0 L515.9,651.5 L518.9,651.3 L521.9,655.7 L524.9,659.8 L527.9,666.2 L530.9,663.0 L533.9,665.0 L537.0,642.9 L540.0,658.4 L543.0,653.1 L546.0,661.3 L549.0,648.1 L552.0,640.8 L555.0,642.7 L558.0,639.0 L561.0,645.5 L564.0,649.5 L567.0,659.7 L570.0,657.9 L573.0,656.6 L576.0,647.1 L579.0,646.5 L582.0,651.6 L582.0,670.0 Z" fill="#eab839" fill-opacity="0.035"/><path d="M128.5,670.0 L128.5,662.5 L131.5,660.4 L134.5,653.0 L137.5,651.9 L140.5,658.5 L143.5,661.9 L146.5,655.2 L149.5,656.1 L152.5,661.7 L155.5,661.9 L158.5,656.7 L161.5,659.8 L164.5,656.6 L167.5,637.9 L170.5,646.3 L173.5,654.1 L176.6,650.9 L179.6,660.8 L182.6,660.4 L185.6,658.9 L188.6,663.9 L191.6,666.6 L194.6,618.2 L197.6,623.9 L200.6,628.6 L203.6,633.1 L206.6,614.5 L209.6,618.7 L212.6,655.7 L215.6,650.8 L218.6,663.0 L221.6,639.0 L224.6,646.6 L227.6,632.2 L230.6,638.9 L233.6,644.2 L236.6,625.1 L239.6,615.7 L242.6,625.5 L245.6,637.9 L248.6,611.6 L251.6,621.4 L254.6,609.6 L257.6,639.8 L260.6,606.1 L263.6,634.7 L266.7,643.8 L269.7,656.1 L272.7,654.2 L275.7,651.9 L278.7,652.5 L281.7,651.1 L284.7,644.7 L287.7,655.6 L290.7,651.5 L293.7,655.8 L296.7,655.5 L299.7,660.5 L302.7,651.7 L305.7,660.7 L308.7,653.5 L311.7,650.5 L314.7,642.1 L317.7,653.9 L320.7,651.3 L323.7,661.6 L326.7,655.9 L329.7,653.3 L332.7,644.2 L335.7,654.1 L338.7,654.5 L341.7,655.9 L344.7,649.6 L347.7,643.7 L350.7,642.7 L353.7,654.2 L356.8,643.4 L359.8,651.9 L362.8,645.7 L365.8,640.5 L368.8,645.5 L371.8,661.4 L374.8,659.1 L377.8,652.6 L380.8,659.3 L383.8,655.9 L386.8,654.8 L389.8,651.6 L392.8,633.6 L395.8,626.0 L398.8,648.0 L401.8,647.8 L404.8,641.3 L407.8,655.3 L410.8,651.4 L413.8,623.0 L416.8,625.6 L419.8,640.8 L422.8,640.4 L425.8,640.6 L428.8,651.7 L431.8,652.2 L434.8,653.2 L437.8,634.6 L440.8,657.4 L443.8,656.3 L446.9,648.6 L449.9,640.0 L452.9,644.8 L455.9,642.6 L458.9,637.3 L461.9,627.7 L464.9,650.7 L467.9,656.2 L470.9,648.7 L473.9,649.2 L476.9,636.4 L479.9,652.4 L482.9,644.7 L485.9,650.7 L488.9,630.8 L491.9,642.3 L494.9,633.0 L497.9,643.7 L500.9,648.1 L503.9,625.8 L506.9,650.8 L509.9,647.0 L512.9,646.9 L515.9,650.5 L518.9,648.2 L521.9,640.1 L524.9,644.5 L527.9,651.9 L530.9,650.7 L533.9,654.8 L537.0,644.3 L540.0,648.6 L543.0,652.7 L546.0,653.9 L549.0,649.9 L552.0,643.7 L555.0,648.5 L558.0,636.1 L561.0,627.4 L564.0,637.7 L567.0,636.5 L570.0,642.2 L573.0,642.0 L576.0,622.5 L579.0,636.2 L582.0,653.3 L582.0,670.0 Z" fill="#6ed0e0" fill-opacity="0.035"/><path d="M128.5,670.0 L128.5,658.4 L131.5,657.1 L134.5,653.5 L137.5,657.8 L140.5,663.0 L143.5,653.2 L146.5,650.5 L149.5,646.0 L152.5,654.6 L155.5,659.2 L158.5,655.3 L161.5,652.4 L164.5,649.4 L167.5,655.9 L170.5,658.2 L173.5,658.7 L176.6,652.9 L179.6,657.8 L182.6,653.8 L185.6,659.3 L188.6,648.7 L191.6,629.3 L194.6,633.1 L197.6,638.8 L200.6,633.8 L203.6,618.9 L206.6,587.4 L209.6,640.4 L212.6,646.1 L215.6,645.7 L218.6,642.8 L221.6,630.1 L224.6,652.0 L227.6,655.5 L230.6,640.8 L233.6,648.9 L236.6,605.7 L239.6,601.9 L242.6,615.9 L245.6,627.3 L248.6,634.0 L251.6,638.9 L254.6,647.5 L257.6,643.1 L260.6,639.8 L263.6,653.9 L266.7,642.6 L269.7,651.5 L272.7,654.7 L275.7,653.9 L278.7,646.7 L281.7,655.5 L284.7,651.7 L287.7,652.3 L290.7,653.7 L293.7,647.6 L296.7,650.1 L299.7,651.6 L302.7,652.2 L305.7,653.0 L308.7,651.0 L311.7,653.2 L314.7,644.4 L317.7,637.0 L320.7,645.2 L323.7,665.8 L326.7,655.7 L329.7,654.6 L332.7,649.5 L335.7,650.5 L338.7,655.5 L341.7,655.6 L344.7,652.9 L347.7,652.7 L350.7,648.3 L353.7,639.0 L356.8,654.9 L359.8,633.6 L362.8,653.0 L365.8,644.1 L368.8,648.1 L371.8,662.0 L374.8,661.3 L377.8,647.7 L380.8,647.9 L383.8,651.4 L386.8,651.8 L389.8,655.3 L392.8,651.5 L395.8,642.5 L398.8,652.4 L401.8,660.1 L404.8,637.3 L407.8,640.6 L410.8,636.6 L413.8,634.5 L416.8,615.7 L419.8,638.9 L422.8,632.8 L425.8,621.5 L428.8,634.8 L431.8,660.3 L434.8,631.8 L437.8,636.3 L440.8,654.6 L443.8,655.5 L446.9,647.5 L449.9,644.7 L452.9,643.1 L455.9,642.8 L458.9,647.6 L461.9,650.3 L464.9,645.4 L467.9,655.5 L470.9,652.8 L473.9,633.7 L476.9,638.7 L479.9,640.3 L482.9,637.8 L485.9,641.5 L488.9,623.8 L491.9,635.9 L494.9,638.1 L497.9,620.0 L500.9,633.1 L503.9,637.2 L506.9,651.2 L509.9,645.7 L512.9,646.7 L515.9,628.1 L518.9,644.1 L521.9,635.7 L524.9,650.5 L527.9,649.0 L530.9,646.0 L533.9,642.7 L537.0,641.8 L540.0,646.7 L543.0,633.0 L546.0,636.3 L549.0,650.4 L552.0,649.9 L555.0,635.3 L558.0,634.4 L561.0,643.0 L564.0,632.8 L567.0,659.0 L570.0,658.0 L573.0,621.3 L576.0,641.4 L579.0,650.9 L582.0,647.8 L582.0,670.0 Z" fill="#ef843c" fill-opacity="0.035"/><path d="M128.5,670.0 L128.5,665.0 L131.5,654.1 L134.5,657.4 L137.5,658.0 L140.5,659.6 L143.5,656.8 L146.5,655.9 L149.5,653.3 L152.5,658.1 L155.5,657.8 L158.5,659.1 L161.5,660.1 L164.5,656.1 L167.5,648.4 L170.5,655.0 L173.5,662.5 L176.6,650.4 L179.6,656.4 L182.6,661.1 L185.6,661.8 L188.6,659.0 L191.6,641.3 L194.6,632.9 L197.6,623.6 L200.6,624.4 L203.6,623.3 L206.6,644.7 L209.6,626.7 L212.6,633.0 L215.6,645.9 L218.6,660.6 L221.6,647.1 L224.6,649.7 L227.6,628.6 L230.6,639.2 L233.6,654.7 L236.6,645.7 L239.6,622.3 L242.6,621.2 L245.6,584.4 L248.6,624.2 L251.6,626.0 L254.6,627.4 L257.6,631.5 L260.6,640.7 L263.6,649.6 L266.7,628.4 L269.7,647.2 L272.7,651.2 L275.7,647.0 L278.7,650.6 L281.7,652.1 L284.7,654.1 L287.7,652.7 L290.7,652.0 L293.7,648.7 L296.7,642.3 L299.7,648.6 L302.7,650.4 L305.7,657.4 L308.7,649.4 L311.7,652.5 L314.7,648.4 L317.7,651.2 L320.7,654.0 L323.7,654.9 L326.7,655.4 L329.7,649.8 L332.7,647.8 L335.7,656.1 L338.7,669.0 L341.7,659.4 L344.7,659.3 L347.7,649.7 L350.7,639.7 L353.7,641.0 L356.8,648.2 L359.8,632.2 L362.8,656.2 L365.8,646.2 L368.8,639.0 L371.8,647.6 L374.8,658.2 L377.8,638.8 L380.8,641.8 L383.8,629.9 L386.8,641.0 L389.8,660.4 L392.8,642.4 L395.8,656.2 L398.8,635.5 L401.8,629.3 L404.8,623.5 L407.8,630.5 L410.8,643.9 L413.8,631.9 L416.8,641.1 L419.8,627.5 L422.8,635.0 L425.8,643.1 L428.8,648.8 L431.8,650.3 L434.8,645.8 L437.8,651.3 L440.8,644.6 L443.8,652.8 L446.9,652.7 L449.9,639.9 L452.9,632.0 L455.9,650.5 L458.9,641.6 L461.9,643.2 L464.9,655.5 L467.9,656.0 L470.9,654.7 L473.9,661.4 L476.9,663.0 L479.9,635.2 L482.9,652.1 L485.9,640.7 L488.9,616.4 L491.9,645.0 L494.9,647.2 L497.9,640.4 L500.9,654.6 L503.9,635.0 L506.9,642.2 L509.9,637.1 L512.9,627.8 L515.9,628.7 L518.9,653.9 L521.9,656.1 L524.9,645.3 L527.9,650.2 L530.9,645.1 L533.9,649.0 L537.0,634.9 L540.0,643.8 L543.0,652.3 L546.0,661.2 L549.0,669.0 L552.0,654.5 L555.0,646.3 L558.0,646.6 L561.0,661.0 L564.0,652.9 L567.0,654.2 L570.0,642.7 L573.0,642.4 L576.0,640.5 L579.0,642.2 L582.0,657.0 L582.0,670.0 Z" fill="#e24d42" fill-opacity="0.035"/><path d="M128.5,670.0 L128.5,663.3 L131.5,660.0 L134.5,653.9 L137.5,663.3 L140.5,666.7 L143.5,659.8 L146.5,651.0 L149.5,649.7 L152.5,656.5 L155.5,664.4 L158.5,661.1 L161.5,659.1 L164.5,658.6 L167.5,659.2 L170.5,658.0 L173.5,657.9 L176.6,651.9 L179.6,655.6 L182.6,660.9 L185.6,661.2 L188.6,658.3 L191.6,651.9 L194.6,640.4 L197.6,634.0 L200.6,646.5 L203.6,634.5 L206.6,642.8 L209.6,627.5 L212.6,650.8 L215.6,626.9 L218.6,650.1 L221.6,654.2 L224.6,655.2 L227.6,657.8 L230.6,656.9 L233.6,645.2 L236.6,632.2 L239.6,621.5 L242.6,635.7 L245.6,644.6 L248.6,651.7 L251.6,639.9 L254.6,651.3 L257.6,650.0 L260.6,638.1 L263.6,644.3 L266.7,648.7 L269.7,659.8 L272.7,650.2 L275.7,656.1 L278.7,659.4 L281.7,657.6 L284.7,644.3 L287.7,657.4 L290.7,652.8 L293.7,661.3 L296.7,651.6 L299.7,652.0 L302.7,652.8 L305.7,648.3 L308.7,650.2 L311.7,650.8 L314.7,647.3 L317.7,649.7 L320.7,653.7 L323.7,646.8 L326.7,629.9 L329.7,651.2 L332.7,654.2 L335.7,658.3 L338.7,661.8 L341.7,660.6 L344.7,659.3 L347.7,654.3 L350.7,647.7 L353.7,647.2 L356.8,651.0 L359.8,647.2 L362.8,658.6 L365.8,653.0 L368.8,641.3 L371.8,646.7 L374.8,659.3 L377.8,653.5 L380.8,640.5 L383.8,652.2 L386.8,652.8 L389.8,663.4 L392.8,650.2 L395.8,647.8 L398.8,658.2 L401.8,661.4 L404.8,649.0 L407.8,650.3 L410.8,652.6 L413.8,639.1 L416.8,629.0 L419.8,644.1 L422.8,653.5 L425.8,646.2 L428.8,656.5 L431.8,647.5 L434.8,653.8 L437.8,650.8 L440.8,654.5 L443.8,656.2 L446.9,653.9 L449.9,649.6 L452.9,651.3 L455.9,654.1 L458.9,648.3 L461.9,633.2 L464.9,646.9 L467.9,660.5 L470.9,655.9 L473.9,636.4 L476.9,651.6 L479.9,653.3 L482.9,650.9 L485.9,649.0 L488.9,656.1 L491.9,642.4 L494.9,648.6 L497.9,647.5 L500.9,651.8 L503.9,638.2 L506.9,650.0 L509.9,653.8 L512.9,655.3 L515.9,653.8 L518.9,631.1 L521.9,640.8 L524.9,647.8 L527.9,653.4 L530.9,645.4 L533.9,653.0 L537.0,658.8 L540.0,650.7 L543.0,650.6 L546.0,648.2 L549.0,648.0 L552.0,647.7 L555.0,650.5 L558.0,647.3 L561.0,642.3 L564.0,650.5 L567.0,660.2 L570.0,643.5 L573.0,633.9 L576.0,649.9 L579.0,657.1 L582.0,651.2 L582.0,670.0 Z" fill="#1f78c1" fill-opacity="0.035"/><path d="M128.5,670.0 L128.5,664.5 L131.5,656.0 L134.5,652.0 L137.5,653.0 L140.5,658.8 L143.5,656.3 L146.5,660.0 L149.5,651.9 L152.5,661.8 L155.5,663.6 L158.5,659.5 L161.5,659.8 L164.5,657.8 L167.5,656.0 L170.5,661.1 L173.5,654.1 L176.6,664.1 L179.6,662.4 L182.6,662.3 L185.6,661.3 L188.6,659.1 L191.6,624.4 L194.6,645.2 L197.6,645.0 L200.6,620.8 L203.6,632.4 L206.6,625.0 L209.6,638.0 L212.6,649.7 L215.6,641.4 L218.6,634.0 L221.6,649.5 L224.6,641.8 L227.6,644.1 L230.6,646.4 L233.6,632.6 L236.6,621.2 L239.6,618.0 L242.6,634.4 L245.6,641.8 L248.6,659.0 L251.6,642.9 L254.6,631.0 L257.6,644.6 L260.6,653.3 L263.6,650.0 L266.7,643.8 L269.7,651.7 L272.7,650.5 L275.7,658.1 L278.7,656.1 L281.7,666.3 L284.7,658.7 L287.7,654.7 L290.7,645.3 L293.7,654.9 L296.7,645.6 L299.7,645.5 L302.7,655.0 L305.7,649.1 L308.7,649.7 L311.7,651.1 L314.7,653.3 L317.7,663.3 L320.7,649.7 L323.7,648.1 L326.7,655.1 L329.7,648.9 L332.7,657.0 L335.7,654.2 L338.7,666.7 L341.7,663.8 L344.7,657.8 L347.7,645.5 L350.7,631.9 L353.7,645.2 L356.8,646.5 L359.8,648.9 L362.8,653.9 L365.8,658.4 L368.8,641.6 L371.8,646.2 L374.8,646.2 L377.8,628.6 L380.8,641.8 L383.8,654.5 L386.8,642.0 L389.8,663.1 L392.8,635.9 L395.8,642.5 L398.8,648.0 L401.8,644.8 L404.8,652.6 L407.8,654.4 L410.8,652.6 L413.8,640.7 L416.8,630.6 L419.8,631.1 L422.8,645.8 L425.8,638.3 L428.8,653.1 L431.8,648.4 L434.8,643.4 L437.8,642.1 L440.8,658.3 L443.8,663.5 L446.9,654.4 L449.9,654.1 L452.9,636.5 L455.9,648.9 L458.9,643.0 L461.9,644.6 L464.9,646.5 L467.9,661.3 L470.9,653.4 L473.9,628.9 L476.9,635.7 L479.9,648.0 L482.9,637.5 L485.9,638.1 L488.9,614.5 L491.9,649.5 L494.9,641.7 L497.9,640.1 L500.9,642.2 L503.9,631.4 L506.9,646.6 L509.9,664.4 L512.9,645.5 L515.9,634.3 L518.9,635.0 L521.9,633.2 L524.9,649.9 L527.9,649.6 L530.9,659.6 L533.9,657.8 L537.0,643.9 L540.0,644.6 L543.0,640.4 L546.0,660.9 L549.0,655.3 L552.0,639.5 L555.0,632.3 L558.0,637.8 L561.0,649.0 L564.0,646.1 L567.0,643.2 L570.0,633.3 L573.0,629.0 L576.0,634.2 L579.0,637.8 L582.0,648.6 L582.0,670.0 Z" fill="#447ebc" fill-opacity="0.035"/><path d="M128.5,670.0 L128.5,651.8 L131.5,658.8 L134.5,656.4 L137.5,653.4 L140.5,661.8 L143.5,661.8 L146.5,661.7 L149.5,658.8 L152.5,663.7 L155.5,657.9 L158.5,651.8 L161.5,661.2 L164.5,650.8 L167.5,652.6 L170.5,654.8 L173.5,651.8 L176.6,648.9 L179.6,652.3 L182.6,661.3 L185.6,662.5 L188.6,657.0 L191.6,639.8 L194.6,651.0 L197.6,648.1 L200.6,650.7 L203.6,636.5 L206.6,631.3 L209.6,619.3 L212.6,642.3 L215.6,616.8 L218.6,635.2 L221.6,644.7 L224.6,643.6 L227.6,644.3 L230.6,641.2 L233.6,647.5 L236.6,615.1 L239.6,604.3 L242.6,603.6 L245.6,643.0 L248.6,636.4 L251.6,651.0 L254.6,644.3 L257.6,616.2 L260.6,644.7 L263.6,634.1 L266.7,627.7 L269.7,653.6 L272.7,640.4 L275.7,644.7 L278.7,647.3 L281.7,646.6 L284.7,651.7 L287.7,657.2 L290.7,647.5 L293.7,659.0 L296.7,665.1 L299.7,661.3 L302.7,650.7 L305.7,655.5 L308.7,652.3 L311.7,645.3 L314.7,651.8 L317.7,654.3 L320.7,657.6 L323.7,660.3 L326.7,644.8 L329.7,655.7 L332.7,663.5 L335.7,665.8 L338.7,661.6 L341.7,654.3 L344.7,649.1 L347.7,653.4 L350.7,650.1 L353.7,644.3 L356.8,648.7 L359.8,647.1 L362.8,664.1 L365.8,656.6 L368.8,653.0 L371.8,650.4 L374.8,651.0 L377.8,641.3 L380.8,656.3 L383.8,653.7 L386.8,649.8 L389.8,649.1 L392.8,638.7 L395.8,628.8 L398.8,649.1 L401.8,648.2 L404.8,651.4 L407.8,640.2 L410.8,650.3 L413.8,639.4 L416.8,614.3 L419.8,638.4 L422.8,646.4 L425.8,631.8 L428.8,654.2 L431.8,644.1 L434.8,650.0 L437.8,657.6 L440.8,658.4 L443.8,659.3 L446.9,651.1 L449.9,648.0 L452.9,626.3 L455.9,637.4 L458.9,650.3 L461.9,650.1 L464.9,650.9 L467.9,656.8 L470.9,654.4 L473.9,636.7 L476.9,635.4 L479.9,657.1 L482.9,658.6 L485.9,648.3 L488.9,644.5 L491.9,638.0 L494.9,659.1 L497.9,641.1 L500.9,626.8 L503.9,647.1 L506.9,653.4 L509.9,659.9 L512.9,638.1 L515.9,641.1 L518.9,644.3 L521.9,648.2 L524.9,649.3 L527.9,639.8 L530.9,652.1 L533.9,656.0 L537.0,666.0 L540.0,640.7 L543.0,630.6 L546.0,636.6 L549.0,651.8 L552.0,640.9 L555.0,642.1 L558.0,651.5 L561.0,656.5 L564.0,652.8 L567.0,652.9 L570.0,648.5 L573.0,640.1 L576.0,630.8 L579.0,637.2 L582.0,642.2 L582.0,670.0 Z" fill="#c15c17" fill-opacity="0.035"/><path d="M128.5,670.0 L128.5,661.4 L131.5,662.7 L134.5,663.1 L137.5,660.1 L140.5,660.5 L143.5,661.1 L146.5,660.8 L149.5,651.8 L152.5,661.3 L155.5,661.7 L158.5,656.0 L161.5,656.7 L164.5,658.1 L167.5,647.6 L170.5,654.5 L173.5,656.5 L176.6,652.5 L179.6,659.6 L182.6,654.5 L185.6,659.7 L188.6,658.5 L191.6,655.8 L194.6,645.2 L197.6,634.0 L200.6,633.0 L203.6,646.3 L206.6,634.6 L209.6,629.2 L212.6,642.0 L215.6,640.1 L218.6,642.8 L221.6,658.1 L224.6,660.1 L227.6,641.6 L230.6,644.2 L233.6,646.4 L236.6,626.6 L239.6,637.4 L242.6,626.8 L245.6,651.6 L248.6,640.6 L251.6,636.1 L254.6,638.7 L257.6,624.3 L260.6,638.0 L263.6,641.7 L266.7,647.4 L269.7,651.3 L272.7,655.8 L275.7,654.9 L278.7,655.1 L281.7,655.9 L284.7,654.9 L287.7,655.9 L290.7,658.4 L293.7,657.8 L296.7,659.4 L299.7,660.6 L302.7,660.9 L305.7,657.8 L308.7,660.8 L311.7,657.8 L314.7,652.7 L317.7,654.7 L320.7,652.7 L323.7,660.1 L326.7,650.7 L329.7,660.2 L332.7,657.1 L335.7,662.2 L338.7,654.1 L341.7,664.2 L344.7,655.4 L347.7,650.1 L350.7,655.7 L353.7,652.8 L356.8,649.8 L359.8,643.1 L362.8,658.8 L365.8,649.6 L368.8,642.1 L371.8,653.8 L374.8,658.9 L377.8,653.4 L380.8,654.9 L383.8,655.6 L386.8,656.2 L389.8,643.5 L392.8,649.8 L395.8,651.3 L398.8,659.1 L401.8,638.2 L404.8,648.5 L407.8,654.7 L410.8,649.9 L413.8,647.1 L416.8,628.5 L419.8,637.7 L422.8,641.5 L425.8,646.4 L428.8,649.3 L431.8,640.8 L434.8,635.8 L437.8,646.0 L440.8,657.0 L443.8,652.5 L446.9,648.7 L449.9,650.2 L452.9,646.9 L455.9,654.5 L458.9,655.4 L461.9,639.4 L464.9,652.2 L467.9,663.9 L470.9,656.7 L473.9,645.3 L476.9,624.9 L479.9,651.9 L482.9,654.3 L485.9,648.8 L488.9,636.5 L491.9,634.2 L494.9,649.0 L497.9,646.0 L500.9,635.7 L503.9,629.3 L506.9,658.0 L509.9,651.6 L512.9,647.3 L515.9,655.9 L518.9,644.9 L521.9,622.3 L524.9,655.9 L527.9,654.2 L530.9,662.7 L533.9,663.0 L537.0,653.7 L540.0,648.2 L543.0,648.4 L546.0,651.1 L549.0,653.0 L552.0,647.1 L555.0,652.3 L558.0,640.1 L561.0,624.8 L564.0,643.1 L567.0,657.8 L570.0,639.9 L573.0,648.8 L576.0,638.8 L579.0,645.2 L582.0,653.5 L582.0,670.0 Z" fill="#508642" fill-opacity="0.035"/><path d="M128.5,670.0 L128.5,659.8 L131.5,663.3 L134.5,664.0 L137.5,655.5 L140.5,656.0 L143.5,658.3 L146.5,664.5 L149.5,664.4 L152.5,651.6 L155.5,665.8 L158.5,657.4 L161.5,656.6 L164.5,646.7 L167.5,643.7 L170.5,653.4 L173.5,652.8 L176.6,659.5 L179.6,653.4 L182.6,661.2 L185.6,657.6 L188.6,652.6 L191.6,619.1 L194.6,625.7 L197.6,633.3 L200.6,635.8 L203.6,634.2 L206.6,648.1 L209.6,633.2 L212.6,651.4 L215.6,634.1 L218.6,645.6 L221.6,651.4 L224.6,647.9 L227.6,663.1 L230.6,649.4 L233.6,638.8 L236.6,618.2 L239.6,644.1 L242.6,625.8 L245.6,638.8 L248.6,634.1 L251.6,646.5 L254.6,643.3 L257.6,623.1 L260.6,628.6 L263.6,640.5 L266.7,631.9 L269.7,645.9 L272.7,643.2 L275.7,648.3 L278.7,657.3 L281.7,657.5 L284.7,648.8 L287.7,655.2 L290.7,653.1 L293.7,654.2 L296.7,656.4 L299.7,656.7 L302.7,649.3 L305.7,651.0 L308.7,650.2 L311.7,655.8 L314.7,647.6 L317.7,657.4 L320.7,658.3 L323.7,649.7 L326.7,646.3 L329.7,649.3 L332.7,650.1 L335.7,652.6 L338.7,656.9 L341.7,661.0 L344.7,632.2 L347.7,651.3 L350.7,646.5 L353.7,644.3 L356.8,638.0 L359.8,641.7 L362.8,650.0 L365.8,650.5 L368.8,637.9 L371.8,640.6 L374.8,654.8 L377.8,653.7 L380.8,650.5 L383.8,646.3 L386.8,651.7 L389.8,644.7 L392.8,625.5 L395.8,628.0 L398.8,648.1 L401.8,634.6 L404.8,632.5 L407.8,642.7 L410.8,628.8 L413.8,639.0 L416.8,636.9 L419.8,632.9 L422.8,647.2 L425.8,636.2 L428.8,650.7 L431.8,645.7 L434.8,638.5 L437.8,653.2 L440.8,658.6 L443.8,655.0 L446.9,645.1 L449.9,638.1 L452.9,636.5 L455.9,656.6 L458.9,658.8 L461.9,643.4 L464.9,653.5 L467.9,655.4 L470.9,641.9 L473.9,648.9 L476.9,652.0 L479.9,643.8 L482.9,639.4 L485.9,637.1 L488.9,635.3 L491.9,635.6 L494.9,639.0 L497.9,639.0 L500.9,640.5 L503.9,614.8 L506.9,637.8 L509.9,640.7 L512.9,641.5 L515.9,639.8 L518.9,642.3 L521.9,637.0 L524.9,636.2 L527.9,658.6 L530.9,654.5 L533.9,650.8 L537.0,638.4 L540.0,646.2 L543.0,645.7 L546.0,646.0 L549.0,649.5 L552.0,647.0 L555.0,628.9 L558.0,610.5 L561.0,624.3 L564.0,643.0 L567.0,649.8 L570.0,651.9 L573.0,649.6 L576.0,638.0 L579.0,656.1 L582.0,657.5 L582.0,670.0 Z" fill="#cca300" fill-opacity="0.035"/><path d="M128.5,670.0 L128.5,661.5 L131.5,659.8 L134.5,661.7 L137.5,659.9 L140.5,662.4 L143.5,663.7 L146.5,656.8 L149.5,656.6 L152.5,659.2 L155.5,662.0 L158.5,661.1 L161.5,662.3 L164.5,660.6 L167.5,656.6 L170.5,656.7 L173.5,657.5 L176.6,639.4 L179.6,653.8 L182.6,656.3 L185.6,657.6 L188.6,656.2 L191.6,657.4 L194.6,645.3 L197.6,641.1 L200.6,633.0 L203.6,641.4 L206.6,635.0 L209.6,623.9 L212.6,653.6 L215.6,640.8 L218.6,658.7 L221.6,647.8 L224.6,656.0 L227.6,650.9 L230.6,651.8 L233.6,644.9 L236.6,603.9 L239.6,637.1 L242.6,641.8 L245.6,643.4 L248.6,642.2 L251.6,647.2 L254.6,631.5 L257.6,636.7 L260.6,640.1 L263.6,650.6 L266.7,646.3 L269.7,662.8 L272.7,660.5 L275.7,656.2 L278.7,652.8 L281.7,664.3 L284.7,655.7 L287.7,659.2 L290.7,655.6 L293.7,659.1 L296.7,651.8 L299.7,659.9 L302.7,654.3 L305.7,661.5 L308.7,658.6 L311.7,652.6 L314.7,650.9 L317.7,657.2 L320.7,657.6 L323.7,653.4 L326.7,659.8 L329.7,654.6 L332.7,656.1 L335.7,657.7 L338.7,663.1 L341.7,660.6 L344.7,658.3 L347.7,636.0 L350.7,641.1 L353.7,647.3 L356.8,652.3 L359.8,653.1 L362.8,659.6 L365.8,657.3 L368.8,662.2 L371.8,657.5 L374.8,659.0 L377.8,660.6 L380.8,661.2 L383.8,658.0 L386.8,645.3 L389.8,653.8 L392.8,647.0 L395.8,648.5 L398.8,648.8 L401.8,650.5 L404.8,649.7 L407.8,658.5 L410.8,651.7 L413.8,646.8 L416.8,631.5 L419.8,650.7 L422.8,653.6 L425.8,659.8 L428.8,657.4 L431.8,652.6 L434.8,638.6 L437.8,642.6 L440.8,659.4 L443.8,658.3 L446.9,657.3 L449.9,648.5 L452.9,659.2 L455.9,662.8 L458.9,654.4 L461.9,654.9 L464.9,658.0 L467.9,664.6 L470.9,656.3 L473.9,645.0 L476.9,647.0 L479.9,662.7 L482.9,656.2 L485.9,643.6 L488.9,622.9 L491.9,628.4 L494.9,654.4 L497.9,644.4 L500.9,649.4 L503.9,633.9 L506.9,650.0 L509.9,654.7 L512.9,647.7 L515.9,625.4 L518.9,632.1 L521.9,654.6 L524.9,651.2 L527.9,651.7 L530.9,652.9 L533.9,654.0 L537.0,636.2 L540.0,658.1 L543.0,655.4 L546.0,659.4 L549.0,642.3 L552.0,641.9 L555.0,649.9 L558.0,644.9 L561.0,639.7 L564.0,652.1 L567.0,655.5 L570.0,640.8 L573.0,608.8 L576.0,648.5 L579.0,651.1 L582.0,661.2 L582.0,670.0 Z" fill="#70dbed" fill-opacity="0.035"/><path d="M128.5,670.0 L128.5,663.3 L131.5,661.9 L134.5,661.5 L137.5,664.6 L140.5,661.5 L143.5,652.2 L146.5,666.3 L149.5,665.8 L152.5,658.4 L155.5,662.6 L158.5,664.7 L161.5,664.3 L164.5,666.8 L167.5,646.2 L170.5,665.1 L173.5,653.8 L176.6,652.8 L179.6,659.0 L182.6,658.0 L185.6,659.7 L188.6,662.6 L191.6,631.4 L194.6,641.1 L197.6,642.3 L200.6,644.5 L203.6,630.1 L206.6,636.4 L209.6,639.7 L212.6,647.0 L215.6,654.6 L218.6,647.4 L221.6,655.1 L224.6,655.6 L227.6,661.7 L230.6,650.1 L233.6,638.6 L236.6,602.8 L239.6,611.1 L242.6,618.8 L245.6,644.5 L248.6,646.9 L251.6,636.9 L254.6,647.5 L257.6,632.8 L260.6,626.6 L263.6,654.4 L266.7,641.9 L269.7,652.8 L272.7,652.4 L275.7,658.2 L278.7,650.2 L281.7,656.0 L284.7,653.6 L287.7,644.4 L290.7,652.8 L293.7,655.7 L296.7,649.3 L299.7,649.1 L302.7,654.2 L305.7,662.9 L308.7,658.9 L311.7,653.9 L314.7,651.9 L317.7,638.6 L320.7,657.1 L323.7,668.2 L326.7,659.2 L329.7,656.4 L332.7,653.6 L335.7,658.7 L338.7,660.3 L341.7,659.5 L344.7,663.5 L347.7,647.4 L350.7,637.7 L353.7,653.4 L356.8,645.9 L359.8,649.0 L362.8,650.1 L365.8,659.3 L368.8,640.7 L371.8,654.6 L374.8,654.4 L377.8,649.3 L380.8,653.6 L383.8,651.4 L386.8,648.0 L389.8,655.0 L392.8,655.9 L395.8,656.9 L398.8,649.0 L401.8,647.7 L404.8,647.6 L407.8,655.7 L410.8,644.3 L413.8,643.9 L416.8,629.8 L419.8,645.3 L422.8,655.0 L425.8,650.0 L428.8,655.9 L431.8,657.6 L434.8,640.2 L437.8,654.3 L440.8,657.3 L443.8,659.0 L446.9,655.6 L449.9,652.5 L452.9,645.2 L455.9,659.6 L458.9,657.2 L461.9,655.0 L464.9,659.6 L467.9,665.9 L470.9,657.8 L473.9,623.8 L476.9,650.9 L479.9,662.3 L482.9,652.3 L485.9,660.5 L488.9,649.2 L491.9,645.7 L494.9,643.7 L497.9,643.9 L500.9,638.4 L503.9,642.7 L506.9,651.3 L509.9,646.2 L512.9,640.6 L515.9,644.9 L518.9,638.9 L521.9,642.8 L524.9,652.7 L527.9,661.5 L530.9,659.0 L533.9,656.1 L537.0,654.0 L540.0,651.6 L543.0,646.5 L546.0,647.1 L549.0,647.1 L552.0,656.3 L555.0,648.0 L558.0,641.2 L561.0,654.0 L564.0,658.6 L567.0,665.0 L570.0,645.5 L573.0,642.2 L576.0,644.6 L579.0,646.0 L582.0,648.7 L582.0,670.0 Z" fill="#e0752d" fill-opacity="0.035"/><path d="M128.5,670.0 L128.5,644.1 L131.5,659.1 L134.5,663.0 L137.5,664.9 L140.5,664.2 L143.5,662.0 L146.5,654.0 L149.5,658.3 L152.5,655.4 L155.5,661.4 L158.5,658.0 L161.5,654.2 L164.5,651.6 L167.5,649.2 L170.5,653.8 L173.5,659.4 L176.6,645.5 L179.6,661.0 L182.6,654.1 L185.6,660.9 L188.6,659.8 L191.6,632.2 L194.6,625.7 L197.6,633.1 L200.6,655.8 L203.6,627.6 L206.6,637.6 L209.6,641.8 L212.6,652.2 L215.6,640.7 L218.6,632.6 L221.6,650.8 L224.6,657.8 L227.6,646.8 L230.6,640.9 L233.6,633.9 L236.6,610.0 L239.6,619.6 L242.6,634.8 L245.6,651.3 L248.6,649.1 L251.6,643.0 L254.6,634.8 L257.6,616.1 L260.6,639.3 L263.6,650.5 L266.7,649.5 L269.7,649.9 L272.7,644.7 L275.7,642.6 L278.7,641.7 L281.7,651.1 L284.7,643.4 L287.7,652.5 L290.7,649.9 L293.7,658.3 L296.7,657.0 L299.7,658.1 L302.7,647.5 L305.7,651.2 L308.7,645.3 L311.7,650.9 L314.7,650.1 L317.7,650.4 L320.7,651.7 L323.7,654.6 L326.7,621.7 L329.7,644.2 L332.7,657.2 L335.7,654.2 L338.7,659.9 L341.7,654.4 L344.7,657.8 L347.7,652.0 L350.7,653.6 L353.7,652.4 L356.8,650.3 L359.8,640.6 L362.8,652.1 L365.8,655.5 L368.8,646.4 L371.8,644.0 L374.8,653.2 L377.8,636.6 L380.8,644.5 L383.8,650.7 L386.8,650.6 L389.8,651.2 L392.8,645.8 L395.8,648.5 L398.8,643.0 L401.8,649.4 L404.8,655.2 L407.8,651.5 L410.8,645.9 L413.8,636.4 L416.8,622.6 L419.8,643.6 L422.8,644.3 L425.8,636.8 L428.8,652.0 L431.8,638.7 L434.8,633.4 L437.8,651.9 L440.8,656.0 L443.8,651.9 L446.9,643.8 L449.9,648.4 L452.9,639.1 L455.9,653.3 L458.9,649.6 L461.9,641.0 L464.9,644.6 L467.9,652.2 L470.9,640.6 L473.9,634.3 L476.9,643.1 L479.9,648.2 L482.9,648.0 L485.9,645.6 L488.9,632.4 L491.9,630.5 L494.9,632.3 L497.9,621.8 L500.9,648.0 L503.9,633.3 L506.9,642.3 L509.9,651.9 L512.9,638.2 L515.9,627.5 L518.9,640.3 L521.9,620.3 L524.9,642.5 L527.9,651.3 L530.9,653.7 L533.9,649.9 L537.0,647.1 L540.0,652.8 L543.0,641.4 L546.0,637.6 L549.0,636.5 L552.0,631.3 L555.0,637.5 L558.0,624.2 L561.0,652.4 L564.0,641.4 L567.0,654.9 L570.0,640.3 L573.0,651.7 L576.0,641.9 L579.0,640.2 L582.0,625.6 L582.0,670.0 Z" fill="#bf1b00" fill-opacity="0.035"/><path d="M128.5,670.0 L128.5,660.4 L131.5,657.1 L134.5,646.7 L137.5,653.0 L140.5,658.5 L143.5,663.7 L146.5,656.4 L149.5,659.9 L152.5,657.5 L155.5,659.9 L158.5,661.7 L161.5,655.2 L164.5,660.5 L167.5,648.0 L170.5,643.9 L173.5,653.7 L176.6,652.3 L179.6,655.1 L182.6,657.1 L185.6,655.2 L188.6,655.6 L191.6,633.7 L194.6,628.4 L197.6,638.7 L200.6,647.8 L203.6,625.0 L206.6,613.2 L209.6,643.4 L212.6,657.3 L215.6,633.7 L218.6,652.6 L221.6,637.3 L224.6,641.6 L227.6,637.9 L230.6,630.8 L233.6,616.3 L236.6,601.6 L239.6,618.3 L242.6,631.3 L245.6,618.3 L248.6,629.5 L251.6,634.8 L254.6,643.9 L257.6,625.7 L260.6,633.9 L263.6,645.4 L266.7,651.1 L269.7,657.2 L272.7,643.1 L275.7,655.1 L278.7,650.5 L281.7,648.9 L284.7,640.9 L287.7,653.9 L290.7,654.7 L293.7,653.2 L296.7,644.7 L299.7,654.4 L302.7,657.7 L305.7,655.7 L308.7,637.6 L311.7,648.4 L314.7,658.1 L317.7,647.2 L320.7,652.0 L323.7,638.3 L326.7,646.7 L329.7,636.2 L332.7,647.4 L335.7,655.9 L338.7,659.3 L341.7,653.6 L344.7,643.7 L347.7,637.2 L350.7,660.5 L353.7,641.6 L356.8,636.7 L359.8,656.9 L362.8,653.7 L365.8,650.7 L368.8,645.4 L371.8,649.9 L374.8,658.4 L377.8,643.7 L380.8,641.3 L383.8,635.6 L386.8,658.1 L389.8,648.7 L392.8,648.7 L395.8,622.0 L398.8,651.4 L401.8,647.9 L404.8,650.3 L407.8,638.2 L410.8,641.9 L413.8,640.4 L416.8,635.2 L419.8,629.9 L422.8,630.9 L425.8,635.2 L428.8,637.3 L431.8,633.6 L434.8,644.7 L437.8,646.1 L440.8,639.8 L443.8,657.0 L446.9,649.6 L449.9,649.0 L452.9,638.6 L455.9,645.5 L458.9,638.1 L461.9,640.9 L464.9,649.6 L467.9,657.6 L470.9,649.1 L473.9,639.5 L476.9,636.5 L479.9,654.0 L482.9,655.6 L485.9,642.1 L488.9,608.4 L491.9,623.9 L494.9,626.9 L497.9,635.2 L500.9,651.8 L503.9,631.9 L506.9,648.9 L509.9,639.0 L512.9,648.6 L515.9,632.9 L518.9,637.2 L521.9,644.6 L524.9,659.1 L527.9,659.4 L530.9,657.7 L533.9,634.6 L537.0,644.4 L540.0,636.1 L543.0,650.5 L546.0,644.7 L549.0,635.0 L552.0,644.8 L555.0,645.8 L558.0,635.3 L561.0,644.1 L564.0,644.3 L567.0,652.7 L570.0,643.4 L573.0,646.4 L576.0,641.9 L579.0,641.4 L582.0,645.1 L582.0,670.0 Z" fill="#705da0" fill-opacity="0.035"/><path d="M128.5,670.0 L128.5,661.1 L131.5,650.3 L134.5,647.3 L137.5,658.2 L140.5,661.4 L143.5,662.4 L146.5,658.6 L149.5,661.4 L152.5,658.1 L155.5,657.4 L158.5,652.9 L161.5,653.1 L164.5,646.8 L167.5,649.6 L170.5,654.3 L173.5,655.1 L176.6,651.0 L179.6,648.9 L182.6,662.5 L185.6,655.0 L188.6,654.2 L191.6,653.8 L194.6,628.6 L197.6,655.1 L200.6,626.5 L203.6,618.9 L206.6,621.7 L209.6,643.1 L212.6,657.8 L215.6,636.9 L218.6,641.0 L221.6,643.4 L224.6,650.7 L227.6,642.3 L230.6,636.2 L233.6,639.6 L236.6,605.7 L239.6,608.8 L242.6,623.5 L245.6,632.3 L248.6,640.0 L251.6,631.8 L254.6,627.5 L257.6,647.9 L260.6,648.1 L263.6,644.9 L266.7,632.9 L269.7,635.2 L272.7,656.6 L275.7,659.9 L278.7,659.3 L281.7,656.9 L284.7,658.3 L287.7,656.8 L290.7,654.4 L293.7,648.7 L296.7,647.1 L299.7,643.2 L302.7,661.7 L305.7,660.3 L308.7,657.4 L311.7,651.0 L314.7,647.2 L317.7,650.7 L320.7,643.2 L323.7,653.9 L326.7,653.8 L329.7,651.9 L332.7,653.1 L335.7,655.2 L338.7,657.5 L341.7,661.4 L344.7,641.6 L347.7,651.2 L350.7,650.5 L353.7,651.1 L356.8,645.8 L359.8,662.8 L362.8,646.4 L365.8,642.8 L368.8,649.8 L371.8,657.4 L374.8,651.9 L377.8,643.0 L380.8,638.8 L383.8,641.6 L386.8,641.8 L389.8,654.7 L392.8,651.3 L395.8,641.0 L398.8,653.3 L401.8,640.6 L404.8,649.8 L407.8,646.9 L410.8,628.1 L413.8,629.5 L416.8,623.6 L419.8,626.7 L422.8,647.7 L425.8,647.7 L428.8,647.1 L431.8,652.1 L434.8,648.0 L437.8,651.1 L440.8,658.0 L443.8,656.2 L446.9,650.6 L449.9,644.3 L452.9,637.2 L455.9,645.5 L458.9,638.8 L461.9,641.0 L464.9,644.1 L467.9,659.8 L470.9,657.1 L473.9,651.3 L476.9,642.9 L479.9,645.9 L482.9,638.9 L485.9,637.6 L488.9,607.0 L491.9,637.6 L494.9,643.8 L497.9,622.3 L500.9,648.4 L503.9,638.2 L506.9,658.9 L509.9,651.9 L512.9,644.5 L515.9,647.7 L518.9,638.1 L521.9,633.6 L524.9,651.3 L527.9,646.5 L530.9,643.5 L533.9,653.8 L537.0,652.8 L540.0,663.5 L543.0,658.2 L546.0,651.3 L549.0,645.3 L552.0,636.8 L555.0,640.8 L558.0,639.6 L561.0,653.8 L564.0,642.0 L567.0,656.7 L570.0,664.8 L573.0,654.6 L576.0,653.5 L579.0,632.9 L582.0,648.9 L582.0,670.0 Z" fill="#ba43a9" fill-opacity="0.035"/><path d="M128.5,670.0 L128.5,657.8 L131.5,668.7 L134.5,658.8 L137.5,652.3 L140.5,665.4 L143.5,660.6 L146.5,651.2 L149.5,659.0 L152.5,661.3 L155.5,658.8 L158.5,659.4 L161.5,648.8 L164.5,644.4 L167.5,646.1 L170.5,654.2 L173.5,659.8 L176.6,652.3 L179.6,649.1 L182.6,651.9 L185.6,656.7 L188.6,666.1 L191.6,648.2 L194.6,641.0 L197.6,640.8 L200.6,637.3 L203.6,642.6 L206.6,625.6 L209.6,628.3 L212.6,642.4 L215.6,630.2 L218.6,654.5 L221.6,650.3 L224.6,659.8 L227.6,654.0 L230.6,651.5 L233.6,633.8 L236.6,593.8 L239.6,614.1 L242.6,617.4 L245.6,641.3 L248.6,634.8 L251.6,644.6 L254.6,634.8 L257.6,636.2 L260.6,643.1 L263.6,647.4 L266.7,625.2 L269.7,649.6 L272.7,652.7 L275.7,655.7 L278.7,648.8 L281.7,649.1 L284.7,647.1 L287.7,652.6 L290.7,658.4 L293.7,664.8 L296.7,652.8 L299.7,643.2 L302.7,648.9 L305.7,651.5 L308.7,649.6 L311.7,657.0 L314.7,659.1 L317.7,651.2 L320.7,651.9 L323.7,647.5 L326.7,652.6 L329.7,653.7 L332.7,649.5 L335.7,647.4 L338.7,654.7 L341.7,654.7 L344.7,648.5 L347.7,650.9 L350.7,643.0 L353.7,644.0 L356.8,644.4 L359.8,650.9 L362.8,649.8 L365.8,652.0 L368.8,646.3 L371.8,632.6 L374.8,657.9 L377.8,634.6 L380.8,646.0 L383.8,645.2 L386.8,631.7 L389.8,663.7 L392.8,640.1 L395.8,642.7 L398.8,636.0 L401.8,645.3 L404.8,627.8 L407.8,641.7 L410.8,651.5 L413.8,644.8 L416.8,631.6 L419.8,645.6 L422.8,650.5 L425.8,639.4 L428.8,632.8 L431.8,640.5 L434.8,636.0 L437.8,644.0 L440.8,651.6 L443.8,652.8 L446.9,655.5 L449.9,644.0 L452.9,634.4 L455.9,648.5 L458.9,642.4 L461.9,648.6 L464.9,646.4 L467.9,659.5 L470.9,657.2 L473.9,630.1 L476.9,642.9 L479.9,645.0 L482.9,647.0 L485.9,648.0 L488.9,636.8 L491.9,638.0 L494.9,644.5 L497.9,647.3 L500.9,635.0 L503.9,625.2 L506.9,632.6 L509.9,647.7 L512.9,649.6 L515.9,636.8 L518.9,619.5 L521.9,637.2 L524.9,652.7 L527.9,661.3 L530.9,657.5 L533.9,653.3 L537.0,646.6 L540.0,645.0 L543.0,631.1 L546.0,644.0 L549.0,636.0 L552.0,638.7 L555.0,649.3 L558.0,642.3 L561.0,643.9 L564.0,633.0 L567.0,653.4 L570.0,637.9 L573.0,649.8 L576.0,649.1 L579.0,653.5 L582.0,646.5 L582.0,670.0 Z" fill="#6d1f62" fill-opacity="0.035"/><path d="M128.5,670.0 L128.5,663.6 L131.5,662.3 L134.5,655.5 L137.5,660.4 L140.5,661.8 L143.5,658.8 L146.5,653.0 L149.5,658.7 L152.5,659.0 L155.5,663.3 L158.5,654.2 L161.5,657.6 L164.5,650.4 L167.5,650.0 L170.5,658.4 L173.5,653.2 L176.6,649.3 L179.6,652.2 L182.6,657.0 L185.6,662.1 L188.6,658.8 L191.6,628.3 L194.6,628.3 L197.6,634.2 L200.6,642.0 L203.6,592.9 L206.6,632.3 L209.6,631.4 L212.6,647.7 L215.6,631.7 L218.6,639.8 L221.6,635.1 L224.6,653.2 L227.6,656.6 L230.6,641.3 L233.6,638.2 L236.6,607.7 L239.6,619.0 L242.6,620.3 L245.6,638.5 L248.6,637.5 L251.6,637.8 L254.6,633.6 L257.6,634.6 L260.6,620.0 L263.6,647.2 L266.7,627.5 L269.7,655.1 L272.7,651.2 L275.7,662.0 L278.7,637.6 L281.7,656.8 L284.7,655.2 L287.7,661.4 L290.7,654.1 L293.7,627.3 L296.7,648.0 L299.7,650.1 L302.7,651.6 L305.7,650.9 L308.7,650.0 L311.7,653.6 L314.7,647.3 L317.7,660.8 L320.7,663.5 L323.7,657.5 L326.7,658.9 L329.7,664.0 L332.7,649.5 L335.7,654.0 L338.7,654.8 L341.7,661.7 L344.7,659.6 L347.7,659.1 L350.7,649.8 L353.7,637.4 L356.8,648.4 L359.8,656.9 L362.8,657.0 L365.8,650.2 L368.8,645.3 L371.8,634.4 L374.8,651.5 L377.8,648.7 L380.8,640.4 L383.8,641.3 L386.8,642.7 L389.8,653.1 L392.8,644.3 L395.8,643.5 L398.8,641.0 L401.8,655.7 L404.8,656.5 L407.8,643.7 L410.8,651.9 L413.8,641.5 L416.8,640.4 L419.8,649.3 L422.8,650.1 L425.8,650.3 L428.8,646.3 L431.8,648.1 L434.8,647.2 L437.8,655.2 L440.8,653.2 L443.8,657.4 L446.9,655.1 L449.9,653.0 L452.9,650.8 L455.9,661.3 L458.9,654.1 L461.9,631.5 L464.9,634.1 L467.9,657.9 L470.9,646.6 L473.9,632.6 L476.9,648.0 L479.9,648.2 L482.9,648.7 L485.9,644.9 L488.9,646.0 L491.9,637.7 L494.9,645.5 L497.9,641.8 L500.9,652.4 L503.9,646.6 L506.9,648.6 L509.9,658.5 L512.9,649.3 L515.9,647.6 L518.9,644.8 L521.9,627.9 L524.9,645.1 L527.9,650.4 L530.9,656.2 L533.9,659.1 L537.0,657.5 L540.0,643.7 L543.0,637.3 L546.0,645.5 L549.0,636.1 L552.0,650.2 L555.0,651.9 L558.0,644.1 L561.0,642.0 L564.0,653.5 L567.0,661.0 L570.0,648.6 L573.0,635.8 L576.0,646.2 L579.0,654.6 L582.0,646.6 L582.0,670.0 Z" fill="#962d82" fill-opacity="0.035"/><path d="M128.5,670.0 L128.5,665.4 L131.5,666.1 L134.5,664.0 L137.5,657.2 L140.5,663.4 L143.5,661.0 L146.5,659.3 L149.5,653.1 L152.5,656.5 L155.5,663.9 L158.5,662.1 L161.5,655.9 L164.5,653.4 L167.5,664.5 L170.5,656.4 L173.5,659.1 L176.6,654.3 L179.6,653.9 L182.6,662.2 L185.6,662.6 L188.6,658.6 L191.6,655.7 L194.6,648.0 L197.6,645.7 L200.6,642.4 L203.6,642.6 L206.6,646.0 L209.6,636.7 L212.6,647.8 L215.6,625.6 L218.6,634.7 L221.6,627.4 L224.6,646.7 L227.6,625.9 L230.6,633.9 L233.6,632.9 L236.6,632.2 L239.6,627.0 L242.6,631.2 L245.6,641.4 L248.6,650.5 L251.6,641.8 L254.6,646.2 L257.6,638.4 L260.6,652.5 L263.6,654.0 L266.7,642.5 L269.7,654.8 L272.7,656.2 L275.7,655.5 L278.7,660.5 L281.7,659.0 L284.7,650.6 L287.7,652.2 L290.7,650.1 L293.7,655.2 L296.7,661.3 L299.7,646.4 L302.7,648.0 L305.7,654.2 L308.7,662.6 L311.7,656.2 L314.7,653.0 L317.7,660.3 L320.7,649.5 L323.7,660.8 L326.7,650.2 L329.7,651.6 L332.7,658.0 L335.7,654.1 L338.7,659.8 L341.7,661.0 L344.7,658.3 L347.7,646.5 L350.7,644.1 L353.7,648.1 L356.8,640.9 L359.8,647.3 L362.8,655.7 L365.8,655.2 L368.8,645.8 L371.8,651.4 L374.8,655.6 L377.8,654.9 L380.8,651.6 L383.8,642.0 L386.8,651.8 L389.8,647.0 L392.8,647.5 L395.8,647.5 L398.8,644.0 L401.8,645.0 L404.8,644.6 L407.8,657.9 L410.8,632.2 L413.8,644.3 L416.8,649.2 L419.8,646.8 L422.8,639.7 L425.8,648.1 L428.8,644.3 L431.8,653.3 L434.8,653.5 L437.8,634.7 L440.8,658.2 L443.8,658.2 L446.9,648.6 L449.9,652.1 L452.9,637.5 L455.9,654.3 L458.9,644.7 L461.9,648.9 L464.9,654.6 L467.9,659.4 L470.9,630.0 L473.9,635.4 L476.9,633.5 L479.9,650.6 L482.9,653.8 L485.9,640.7 L488.9,632.3 L491.9,639.0 L494.9,645.1 L497.9,627.9 L500.9,643.3 L503.9,626.9 L506.9,644.4 L509.9,641.1 L512.9,657.2 L515.9,642.9 L518.9,660.8 L521.9,637.3 L524.9,651.4 L527.9,659.7 L530.9,638.0 L533.9,648.6 L537.0,647.4 L540.0,665.7 L543.0,658.1 L546.0,634.3 L549.0,643.6 L552.0,649.2 L555.0,646.6 L558.0,644.0 L561.0,628.9 L564.0,631.9 L567.0,627.2 L570.0,648.3 L573.0,649.1 L576.0,656.8 L579.0,649.7 L582.0,644.0 L582.0,670.0 Z" fill="#614d93" fill-opacity="0.035"/><path d="M128.5,662.3 L131.5,660.5 L134.5,657.8 L137.5,660.3 L140.5,663.1 L143.5,663.9 L146.5,665.5 L149.5,661.5 L152.5,663.4 L155.5,667.2 L158.5,664.4 L161.5,666.9 L164.5,657.2 L167.5,664.4 L170.5,663.7 L173.5,658.1 L176.6,663.2 L179.6,668.8 L182.6,666.5 L185.6,661.3 L188.6,657.4 L191.6,631.3 L194.6,650.9 L197.6,645.4 L200.6,656.6 L203.6,646.7 L206.6,644.4 L209.6,646.3 L212.6,655.2 L215.6,652.4 L218.6,654.7 L221.6,653.1 L224.6,645.9 L227.6,652.3 L230.6,652.5 L233.6,643.0 L236.6,614.1 L239.6,645.8 L242.6,632.9 L245.6,639.4 L248.6,653.0 L251.6,638.1 L254.6,630.4 L257.6,658.0 L260.6,630.8 L263.6,643.3 L266.7,650.7 L269.7,650.2 L272.7,657.0 L275.7,658.3 L278.7,656.0 L281.7,656.5 L284.7,659.7 L287.7,663.1 L290.7,658.9 L293.7,660.5 L296.7,650.9 L299.7,653.5 L302.7,656.3 L305.7,656.0 L308.7,660.6 L311.7,662.0 L314.7,653.4 L317.7,657.4 L320.7,652.8 L323.7,651.1 L326.7,658.5 L329.7,653.2 L332.7,651.3 L335.7,658.4 L338.7,661.4 L341.7,665.7 L344.7,657.5 L347.7,643.0 L350.7,658.5 L353.7,656.2 L356.8,650.8 L359.8,656.2 L362.8,662.9 L365.8,639.9 L368.8,642.9 L371.8,649.5 L374.8,655.7 L377.8,654.0 L380.8,655.7 L383.8,663.1 L386.8,668.4 L389.8,660.4 L392.8,656.5 L395.8,651.4 L398.8,663.0 L401.8,655.6 L404.8,660.0 L407.8,648.3 L410.8,639.5 L413.8,657.2 L416.8,642.6 L419.8,635.5 L422.8,631.5 L425.8,639.6 L428.8,649.5 L431.8,656.6 L434.8,643.2 L437.8,648.0 L440.8,655.5 L443.8,659.3 L446.9,662.9 L449.9,651.3 L452.9,649.0 L455.9,651.1 L458.9,637.4 L461.9,641.4 L464.9,651.6 L467.9,662.9 L470.9,648.9 L473.9,635.6 L476.9,642.5 L479.9,647.9 L482.9,656.1 L485.9,649.2 L488.9,638.9 L491.9,634.4 L494.9,640.1 L497.9,650.1 L500.9,650.5 L503.9,658.7 L506.9,658.8 L509.9,643.8 L512.9,643.7 L515.9,645.6 L518.9,646.0 L521.9,644.2 L524.9,654.9 L527.9,657.9 L530.9,653.5 L533.9,654.3 L537.0,647.4 L540.0,651.5 L543.0,657.9 L546.0,651.8 L549.0,650.3 L552.0,648.8 L555.0,651.2 L558.0,648.3 L561.0,640.2 L564.0,662.9 L567.0,648.5 L570.0,635.6 L573.0,642.4 L576.0,639.2 L579.0,648.6 L582.0,654.7" fill="none" stroke="#7eb26d" stroke-width="1.2" stroke-opacity="0.9" stroke-linejoin="round"/><path d="M128.5,666.1 L131.5,660.6 L134.5,635.8 L137.5,656.6 L140.5,663.2 L143.5,666.5 L146.5,664.5 L149.5,661.9 L152.5,662.4 L155.5,658.8 L158.5,656.9 L161.5,661.0 L164.5,659.3 L167.5,663.6 L170.5,660.1 L173.5,661.1 L176.6,650.3 L179.6,656.2 L182.6,658.9 L185.6,656.2 L188.6,658.1 L191.6,652.9 L194.6,636.0 L197.6,641.1 L200.6,638.9 L203.6,637.6 L206.6,634.6 L209.6,627.5 L212.6,649.9 L215.6,639.8 L218.6,656.5 L221.6,652.1 L224.6,647.1 L227.6,646.0 L230.6,657.6 L233.6,655.4 L236.6,623.9 L239.6,624.6 L242.6,634.4 L245.6,647.7 L248.6,656.2 L251.6,647.0 L254.6,650.4 L257.6,652.9 L260.6,645.8 L263.6,648.0 L266.7,640.1 L269.7,649.0 L272.7,652.8 L275.7,658.5 L278.7,648.9 L281.7,651.6 L284.7,650.4 L287.7,657.5 L290.7,656.4 L293.7,661.6 L296.7,658.0 L299.7,657.1 L302.7,656.2 L305.7,657.8 L308.7,661.7 L311.7,655.4 L314.7,657.2 L317.7,659.3 L320.7,645.7 L323.7,652.4 L326.7,647.9 L329.7,647.9 L332.7,655.9 L335.7,656.0 L338.7,663.2 L341.7,663.0 L344.7,658.1 L347.7,639.3 L350.7,646.4 L353.7,649.6 L356.8,653.4 L359.8,654.7 L362.8,648.7 L365.8,647.8 L368.8,653.0 L371.8,651.1 L374.8,656.7 L377.8,661.9 L380.8,653.6 L383.8,659.2 L386.8,657.7 L389.8,657.0 L392.8,660.2 L395.8,667.7 L398.8,656.8 L401.8,665.2 L404.8,643.9 L407.8,644.5 L410.8,641.2 L413.8,617.6 L416.8,642.4 L419.8,647.3 L422.8,645.4 L425.8,644.0 L428.8,652.9 L431.8,647.4 L434.8,649.3 L437.8,649.9 L440.8,650.9 L443.8,660.5 L446.9,654.6 L449.9,656.3 L452.9,635.5 L455.9,655.1 L458.9,656.8 L461.9,647.7 L464.9,649.0 L467.9,656.6 L470.9,648.4 L473.9,650.7 L476.9,627.9 L479.9,654.2 L482.9,665.9 L485.9,661.8 L488.9,638.0 L491.9,640.1 L494.9,637.2 L497.9,634.0 L500.9,648.0 L503.9,646.2 L506.9,650.2 L509.9,648.5 L512.9,647.0 L515.9,651.5 L518.9,651.3 L521.9,655.7 L524.9,659.8 L527.9,666.2 L530.9,663.0 L533.9,665.0 L537.0,642.9 L540.0,658.4 L543.0,653.1 L546.0,661.3 L549.0,648.1 L552.0,640.8 L555.0,642.7 L558.0,639.0 L561.0,645.5 L564.0,649.5 L567.0,659.7 L570.0,657.9 L573.0,656.6 L576.0,647.1 L579.0,646.5 L582.0,651.6" fill="none" stroke="#eab839" stroke-width="1.2" stroke-opacity="0.9" stroke-linejoin="round"/><path d="M128.5,662.5 L131.5,660.4 L134.5,653.0 L137.5,651.9 L140.5,658.5 L143.5,661.9 L146.5,655.2 L149.5,656.1 L152.5,661.7 L155.5,661.9 L158.5,656.7 L161.5,659.8 L164.5,656.6 L167.5,637.9 L170.5,646.3 L173.5,654.1 L176.6,650.9 L179.6,660.8 L182.6,660.4 L185.6,658.9 L188.6,663.9 L191.6,666.6 L194.6,618.2 L197.6,623.9 L200.6,628.6 L203.6,633.1 L206.6,614.5 L209.6,618.7 L212.6,655.7 L215.6,650.8 L218.6,663.0 L221.6,639.0 L224.6,646.6 L227.6,632.2 L230.6,638.9 L233.6,644.2 L236.6,625.1 L239.6,615.7 L242.6,625.5 L245.6,637.9 L248.6,611.6 L251.6,621.4 L254.6,609.6 L257.6,639.8 L260.6,606.1 L263.6,634.7 L266.7,643.8 L269.7,656.1 L272.7,654.2 L275.7,651.9 L278.7,652.5 L281.7,651.1 L284.7,644.7 L287.7,655.6 L290.7,651.5 L293.7,655.8 L296.7,655.5 L299.7,660.5 L302.7,651.7 L305.7,660.7 L308.7,653.5 L311.7,650.5 L314.7,642.1 L317.7,653.9 L320.7,651.3 L323.7,661.6 L326.7,655.9 L329.7,653.3 L332.7,644.2 L335.7,654.1 L338.7,654.5 L341.7,655.9 L344.7,649.6 L347.7,643.7 L350.7,642.7 L353.7,654.2 L356.8,643.4 L359.8,651.9 L362.8,645.7 L365.8,640.5 L368.8,645.5 L371.8,661.4 L374.8,659.1 L377.8,652.6 L380.8,659.3 L383.8,655.9 L386.8,654.8 L389.8,651.6 L392.8,633.6 L395.8,626.0 L398.8,648.0 L401.8,647.8 L404.8,641.3 L407.8,655.3 L410.8,651.4 L413.8,623.0 L416.8,625.6 L419.8,640.8 L422.8,640.4 L425.8,640.6 L428.8,651.7 L431.8,652.2 L434.8,653.2 L437.8,634.6 L440.8,657.4 L443.8,656.3 L446.9,648.6 L449.9,640.0 L452.9,644.8 L455.9,642.6 L458.9,637.3 L461.9,627.7 L464.9,650.7 L467.9,656.2 L470.9,648.7 L473.9,649.2 L476.9,636.4 L479.9,652.4 L482.9,644.7 L485.9,650.7 L488.9,630.8 L491.9,642.3 L494.9,633.0 L497.9,643.7 L500.9,648.1 L503.9,625.8 L506.9,650.8 L509.9,647.0 L512.9,646.9 L515.9,650.5 L518.9,648.2 L521.9,640.1 L524.9,644.5 L527.9,651.9 L530.9,650.7 L533.9,654.8 L537.0,644.3 L540.0,648.6 L543.0,652.7 L546.0,653.9 L549.0,649.9 L552.0,643.7 L555.0,648.5 L558.0,636.1 L561.0,627.4 L564.0,637.7 L567.0,636.5 L570.0,642.2 L573.0,642.0 L576.0,622.5 L579.0,636.2 L582.0,653.3" fill="none" stroke="#6ed0e0" stroke-width="1.2" stroke-opacity="0.9" stroke-linejoin="round"/><path d="M128.5,658.4 L131.5,657.1 L134.5,653.5 L137.5,657.8 L140.5,663.0 L143.5,653.2 L146.5,650.5 L149.5,646.0 L152.5,654.6 L155.5,659.2 L158.5,655.3 L161.5,652.4 L164.5,649.4 L167.5,655.9 L170.5,658.2 L173.5,658.7 L176.6,652.9 L179.6,657.8 L182.6,653.8 L185.6,659.3 L188.6,648.7 L191.6,629.3 L194.6,633.1 L197.6,638.8 L200.6,633.8 L203.6,618.9 L206.6,587.4 L209.6,640.4 L212.6,646.1 L215.6,645.7 L218.6,642.8 L221.6,630.1 L224.6,652.0 L227.6,655.5 L230.6,640.8 L233.6,648.9 L236.6,605.7 L239.6,601.9 L242.6,615.9 L245.6,627.3 L248.6,634.0 L251.6,638.9 L254.6,647.5 L257.6,643.1 L260.6,639.8 L263.6,653.9 L266.7,642.6 L269.7,651.5 L272.7,654.7 L275.7,653.9 L278.7,646.7 L281.7,655.5 L284.7,651.7 L287.7,652.3 L290.7,653.7 L293.7,647.6 L296.7,650.1 L299.7,651.6 L302.7,652.2 L305.7,653.0 L308.7,651.0 L311.7,653.2 L314.7,644.4 L317.7,637.0 L320.7,645.2 L323.7,665.8 L326.7,655.7 L329.7,654.6 L332.7,649.5 L335.7,650.5 L338.7,655.5 L341.7,655.6 L344.7,652.9 L347.7,652.7 L350.7,648.3 L353.7,639.0 L356.8,654.9 L359.8,633.6 L362.8,653.0 L365.8,644.1 L368.8,648.1 L371.8,662.0 L374.8,661.3 L377.8,647.7 L380.8,647.9 L383.8,651.4 L386.8,651.8 L389.8,655.3 L392.8,651.5 L395.8,642.5 L398.8,652.4 L401.8,660.1 L404.8,637.3 L407.8,640.6 L410.8,636.6 L413.8,634.5 L416.8,615.7 L419.8,638.9 L422.8,632.8 L425.8,621.5 L428.8,634.8 L431.8,660.3 L434.8,631.8 L437.8,636.3 L440.8,654.6 L443.8,655.5 L446.9,647.5 L449.9,644.7 L452.9,643.1 L455.9,642.8 L458.9,647.6 L461.9,650.3 L464.9,645.4 L467.9,655.5 L470.9,652.8 L473.9,633.7 L476.9,638.7 L479.9,640.3 L482.9,637.8 L485.9,641.5 L488.9,623.8 L491.9,635.9 L494.9,638.1 L497.9,620.0 L500.9,633.1 L503.9,637.2 L506.9,651.2 L509.9,645.7 L512.9,646.7 L515.9,628.1 L518.9,644.1 L521.9,635.7 L524.9,650.5 L527.9,649.0 L530.9,646.0 L533.9,642.7 L537.0,641.8 L540.0,646.7 L543.0,633.0 L546.0,636.3 L549.0,650.4 L552.0,649.9 L555.0,635.3 L558.0,634.4 L561.0,643.0 L564.0,632.8 L567.0,659.0 L570.0,658.0 L573.0,621.3 L576.0,641.4 L579.0,650.9 L582.0,647.8" fill="none" stroke="#ef843c" stroke-width="1.2" stroke-opacity="0.9" stroke-linejoin="round"/><path d="M128.5,665.0 L131.5,654.1 L134.5,657.4 L137.5,658.0 L140.5,659.6 L143.5,656.8 L146.5,655.9 L149.5,653.3 L152.5,658.1 L155.5,657.8 L158.5,659.1 L161.5,660.1 L164.5,656.1 L167.5,648.4 L170.5,655.0 L173.5,662.5 L176.6,650.4 L179.6,656.4 L182.6,661.1 L185.6,661.8 L188.6,659.0 L191.6,641.3 L194.6,632.9 L197.6,623.6 L200.6,624.4 L203.6,623.3 L206.6,644.7 L209.6,626.7 L212.6,633.0 L215.6,645.9 L218.6,660.6 L221.6,647.1 L224.6,649.7 L227.6,628.6 L230.6,639.2 L233.6,654.7 L236.6,645.7 L239.6,622.3 L242.6,621.2 L245.6,584.4 L248.6,624.2 L251.6,626.0 L254.6,627.4 L257.6,631.5 L260.6,640.7 L263.6,649.6 L266.7,628.4 L269.7,647.2 L272.7,651.2 L275.7,647.0 L278.7,650.6 L281.7,652.1 L284.7,654.1 L287.7,652.7 L290.7,652.0 L293.7,648.7 L296.7,642.3 L299.7,648.6 L302.7,650.4 L305.7,657.4 L308.7,649.4 L311.7,652.5 L314.7,648.4 L317.7,651.2 L320.7,654.0 L323.7,654.9 L326.7,655.4 L329.7,649.8 L332.7,647.8 L335.7,656.1 L338.7,669.0 L341.7,659.4 L344.7,659.3 L347.7,649.7 L350.7,639.7 L353.7,641.0 L356.8,648.2 L359.8,632.2 L362.8,656.2 L365.8,646.2 L368.8,639.0 L371.8,647.6 L374.8,658.2 L377.8,638.8 L380.8,641.8 L383.8,629.9 L386.8,641.0 L389.8,660.4 L392.8,642.4 L395.8,656.2 L398.8,635.5 L401.8,629.3 L404.8,623.5 L407.8,630.5 L410.8,643.9 L413.8,631.9 L416.8,641.1 L419.8,627.5 L422.8,635.0 L425.8,643.1 L428.8,648.8 L431.8,650.3 L434.8,645.8 L437.8,651.3 L440.8,644.6 L443.8,652.8 L446.9,652.7 L449.9,639.9 L452.9,632.0 L455.9,650.5 L458.9,641.6 L461.9,643.2 L464.9,655.5 L467.9,656.0 L470.9,654.7 L473.9,661.4 L476.9,663.0 L479.9,635.2 L482.9,652.1 L485.9,640.7 L488.9,616.4 L491.9,645.0 L494.9,647.2 L497.9,640.4 L500.9,654.6 L503.9,635.0 L506.9,642.2 L509.9,637.1 L512.9,627.8 L515.9,628.7 L518.9,653.9 L521.9,656.1 L524.9,645.3 L527.9,650.2 L530.9,645.1 L533.9,649.0 L537.0,634.9 L540.0,643.8 L543.0,652.3 L546.0,661.2 L549.0,669.0 L552.0,654.5 L555.0,646.3 L558.0,646.6 L561.0,661.0 L564.0,652.9 L567.0,654.2 L570.0,642.7 L573.0,642.4 L576.0,640.5 L579.0,642.2 L582.0,657.0" fill="none" stroke="#e24d42" stroke-width="1.2" stroke-opacity="0.9" stroke-linejoin="round"/><path d="M128.5,663.3 L131.5,660.0 L134.5,653.9 L137.5,663.3 L140.5,666.7 L143.5,659.8 L146.5,651.0 L149.5,649.7 L152.5,656.5 L155.5,664.4 L158.5,661.1 L161.5,659.1 L164.5,658.6 L167.5,659.2 L170.5,658.0 L173.5,657.9 L176.6,651.9 L179.6,655.6 L182.6,660.9 L185.6,661.2 L188.6,658.3 L191.6,651.9 L194.6,640.4 L197.6,634.0 L200.6,646.5 L203.6,634.5 L206.6,642.8 L209.6,627.5 L212.6,650.8 L215.6,626.9 L218.6,650.1 L221.6,654.2 L224.6,655.2 L227.6,657.8 L230.6,656.9 L233.6,645.2 L236.6,632.2 L239.6,621.5 L242.6,635.7 L245.6,644.6 L248.6,651.7 L251.6,639.9 L254.6,651.3 L257.6,650.0 L260.6,638.1 L263.6,644.3 L266.7,648.7 L269.7,659.8 L272.7,650.2 L275.7,656.1 L278.7,659.4 L281.7,657.6 L284.7,644.3 L287.7,657.4 L290.7,652.8 L293.7,661.3 L296.7,651.6 L299.7,652.0 L302.7,652.8 L305.7,648.3 L308.7,650.2 L311.7,650.8 L314.7,647.3 L317.7,649.7 L320.7,653.7 L323.7,646.8 L326.7,629.9 L329.7,651.2 L332.7,654.2 L335.7,658.3 L338.7,661.8 L341.7,660.6 L344.7,659.3 L347.7,654.3 L350.7,647.7 L353.7,647.2 L356.8,651.0 L359.8,647.2 L362.8,658.6 L365.8,653.0 L368.8,641.3 L371.8,646.7 L374.8,659.3 L377.8,653.5 L380.8,640.5 L383.8,652.2 L386.8,652.8 L389.8,663.4 L392.8,650.2 L395.8,647.8 L398.8,658.2 L401.8,661.4 L404.8,649.0 L407.8,650.3 L410.8,652.6 L413.8,639.1 L416.8,629.0 L419.8,644.1 L422.8,653.5 L425.8,646.2 L428.8,656.5 L431.8,647.5 L434.8,653.8 L437.8,650.8 L440.8,654.5 L443.8,656.2 L446.9,653.9 L449.9,649.6 L452.9,651.3 L455.9,654.1 L458.9,648.3 L461.9,633.2 L464.9,646.9 L467.9,660.5 L470.9,655.9 L473.9,636.4 L476.9,651.6 L479.9,653.3 L482.9,650.9 L485.9,649.0 L488.9,656.1 L491.9,642.4 L494.9,648.6 L497.9,647.5 L500.9,651.8 L503.9,638.2 L506.9,650.0 L509.9,653.8 L512.9,655.3 L515.9,653.8 L518.9,631.1 L521.9,640.8 L524.9,647.8 L527.9,653.4 L530.9,645.4 L533.9,653.0 L537.0,658.8 L540.0,650.7 L543.0,650.6 L546.0,648.2 L549.0,648.0 L552.0,647.7 L555.0,650.5 L558.0,647.3 L561.0,642.3 L564.0,650.5 L567.0,660.2 L570.0,643.5 L573.0,633.9 L576.0,649.9 L579.0,657.1 L582.0,651.2" fill="none" stroke="#1f78c1" stroke-width="1.2" stroke-opacity="0.9" stroke-linejoin="round"/><path d="M128.5,664.5 L131.5,656.0 L134.5,652.0 L137.5,653.0 L140.5,658.8 L143.5,656.3 L146.5,660.0 L149.5,651.9 L152.5,661.8 L155.5,663.6 L158.5,659.5 L161.5,659.8 L164.5,657.8 L167.5,656.0 L170.5,661.1 L173.5,654.1 L176.6,664.1 L179.6,662.4 L182.6,662.3 L185.6,661.3 L188.6,659.1 L191.6,624.4 L194.6,645.2 L197.6,645.0 L200.6,620.8 L203.6,632.4 L206.6,625.0 L209.6,638.0 L212.6,649.7 L215.6,641.4 L218.6,634.0 L221.6,649.5 L224.6,641.8 L227.6,644.1 L230.6,646.4 L233.6,632.6 L236.6,621.2 L239.6,618.0 L242.6,634.4 L245.6,641.8 L248.6,659.0 L251.6,642.9 L254.6,631.0 L257.6,644.6 L260.6,653.3 L263.6,650.0 L266.7,643.8 L269.7,651.7 L272.7,650.5 L275.7,658.1 L278.7,656.1 L281.7,666.3 L284.7,658.7 L287.7,654.7 L290.7,645.3 L293.7,654.9 L296.7,645.6 L299.7,645.5 L302.7,655.0 L305.7,649.1 L308.7,649.7 L311.7,651.1 L314.7,653.3 L317.7,663.3 L320.7,649.7 L323.7,648.1 L326.7,655.1 L329.7,648.9 L332.7,657.0 L335.7,654.2 L338.7,666.7 L341.7,663.8 L344.7,657.8 L347.7,645.5 L350.7,631.9 L353.7,645.2 L356.8,646.5 L359.8,648.9 L362.8,653.9 L365.8,658.4 L368.8,641.6 L371.8,646.2 L374.8,646.2 L377.8,628.6 L380.8,641.8 L383.8,654.5 L386.8,642.0 L389.8,663.1 L392.8,635.9 L395.8,642.5 L398.8,648.0 L401.8,644.8 L404.8,652.6 L407.8,654.4 L410.8,652.6 L413.8,640.7 L416.8,630.6 L419.8,631.1 L422.8,645.8 L425.8,638.3 L428.8,653.1 L431.8,648.4 L434.8,643.4 L437.8,642.1 L440.8,658.3 L443.8,663.5 L446.9,654.4 L449.9,654.1 L452.9,636.5 L455.9,648.9 L458.9,643.0 L461.9,644.6 L464.9,646.5 L467.9,661.3 L470.9,653.4 L473.9,628.9 L476.9,635.7 L479.9,648.0 L482.9,637.5 L485.9,638.1 L488.9,614.5 L491.9,649.5 L494.9,641.7 L497.9,640.1 L500.9,642.2 L503.9,631.4 L506.9,646.6 L509.9,664.4 L512.9,645.5 L515.9,634.3 L518.9,635.0 L521.9,633.2 L524.9,649.9 L527.9,649.6 L530.9,659.6 L533.9,657.8 L537.0,643.9 L540.0,644.6 L543.0,640.4 L546.0,660.9 L549.0,655.3 L552.0,639.5 L555.0,632.3 L558.0,637.8 L561.0,649.0 L564.0,646.1 L567.0,643.2 L570.0,633.3 L573.0,629.0 L576.0,634.2 L579.0,637.8 L582.0,648.6" fill="none" stroke="#447ebc" stroke-width="1.2" stroke-opacity="0.9" stroke-linejoin="round"/><path d="M128.5,651.8 L131.5,658.8 L134.5,656.4 L137.5,653.4 L140.5,661.8 L143.5,661.8 L146.5,661.7 L149.5,658.8 L152.5,663.7 L155.5,657.9 L158.5,651.8 L161.5,661.2 L164.5,650.8 L167.5,652.6 L170.5,654.8 L173.5,651.8 L176.6,648.9 L179.6,652.3 L182.6,661.3 L185.6,662.5 L188.6,657.0 L191.6,639.8 L194.6,651.0 L197.6,648.1 L200.6,650.7 L203.6,636.5 L206.6,631.3 L209.6,619.3 L212.6,642.3 L215.6,616.8 L218.6,635.2 L221.6,644.7 L224.6,643.6 L227.6,644.3 L230.6,641.2 L233.6,647.5 L236.6,615.1 L239.6,604.3 L242.6,603.6 L245.6,643.0 L248.6,636.4 L251.6,651.0 L254.6,644.3 L257.6,616.2 L260.6,644.7 L263.6,634.1 L266.7,627.7 L269.7,653.6 L272.7,640.4 L275.7,644.7 L278.7,647.3 L281.7,646.6 L284.7,651.7 L287.7,657.2 L290.7,647.5 L293.7,659.0 L296.7,665.1 L299.7,661.3 L302.7,650.7 L305.7,655.5 L308.7,652.3 L311.7,645.3 L314.7,651.8 L317.7,654.3 L320.7,657.6 L323.7,660.3 L326.7,644.8 L329.7,655.7 L332.7,663.5 L335.7,665.8 L338.7,661.6 L341.7,654.3 L344.7,649.1 L347.7,653.4 L350.7,650.1 L353.7,644.3 L356.8,648.7 L359.8,647.1 L362.8,664.1 L365.8,656.6 L368.8,653.0 L371.8,650.4 L374.8,651.0 L377.8,641.3 L380.8,656.3 L383.8,653.7 L386.8,649.8 L389.8,649.1 L392.8,638.7 L395.8,628.8 L398.8,649.1 L401.8,648.2 L404.8,651.4 L407.8,640.2 L410.8,650.3 L413.8,639.4 L416.8,614.3 L419.8,638.4 L422.8,646.4 L425.8,631.8 L428.8,654.2 L431.8,644.1 L434.8,650.0 L437.8,657.6 L440.8,658.4 L443.8,659.3 L446.9,651.1 L449.9,648.0 L452.9,626.3 L455.9,637.4 L458.9,650.3 L461.9,650.1 L464.9,650.9 L467.9,656.8 L470.9,654.4 L473.9,636.7 L476.9,635.4 L479.9,657.1 L482.9,658.6 L485.9,648.3 L488.9,644.5 L491.9,638.0 L494.9,659.1 L497.9,641.1 L500.9,626.8 L503.9,647.1 L506.9,653.4 L509.9,659.9 L512.9,638.1 L515.9,641.1 L518.9,644.3 L521.9,648.2 L524.9,649.3 L527.9,639.8 L530.9,652.1 L533.9,656.0 L537.0,666.0 L540.0,640.7 L543.0,630.6 L546.0,636.6 L549.0,651.8 L552.0,640.9 L555.0,642.1 L558.0,651.5 L561.0,656.5 L564.0,652.8 L567.0,652.9 L570.0,648.5 L573.0,640.1 L576.0,630.8 L579.0,637.2 L582.0,642.2" fill="none" stroke="#c15c17" stroke-width="1.2" stroke-opacity="0.9" stroke-linejoin="round"/><path d="M128.5,661.4 L131.5,662.7 L134.5,663.1 L137.5,660.1 L140.5,660.5 L143.5,661.1 L146.5,660.8 L149.5,651.8 L152.5,661.3 L155.5,661.7 L158.5,656.0 L161.5,656.7 L164.5,658.1 L167.5,647.6 L170.5,654.5 L173.5,656.5 L176.6,652.5 L179.6,659.6 L182.6,654.5 L185.6,659.7 L188.6,658.5 L191.6,655.8 L194.6,645.2 L197.6,634.0 L200.6,633.0 L203.6,646.3 L206.6,634.6 L209.6,629.2 L212.6,642.0 L215.6,640.1 L218.6,642.8 L221.6,658.1 L224.6,660.1 L227.6,641.6 L230.6,644.2 L233.6,646.4 L236.6,626.6 L239.6,637.4 L242.6,626.8 L245.6,651.6 L248.6,640.6 L251.6,636.1 L254.6,638.7 L257.6,624.3 L260.6,638.0 L263.6,641.7 L266.7,647.4 L269.7,651.3 L272.7,655.8 L275.7,654.9 L278.7,655.1 L281.7,655.9 L284.7,654.9 L287.7,655.9 L290.7,658.4 L293.7,657.8 L296.7,659.4 L299.7,660.6 L302.7,660.9 L305.7,657.8 L308.7,660.8 L311.7,657.8 L314.7,652.7 L317.7,654.7 L320.7,652.7 L323.7,660.1 L326.7,650.7 L329.7,660.2 L332.7,657.1 L335.7,662.2 L338.7,654.1 L341.7,664.2 L344.7,655.4 L347.7,650.1 L350.7,655.7 L353.7,652.8 L356.8,649.8 L359.8,643.1 L362.8,658.8 L365.8,649.6 L368.8,642.1 L371.8,653.8 L374.8,658.9 L377.8,653.4 L380.8,654.9 L383.8,655.6 L386.8,656.2 L389.8,643.5 L392.8,649.8 L395.8,651.3 L398.8,659.1 L401.8,638.2 L404.8,648.5 L407.8,654.7 L410.8,649.9 L413.8,647.1 L416.8,628.5 L419.8,637.7 L422.8,641.5 L425.8,646.4 L428.8,649.3 L431.8,640.8 L434.8,635.8 L437.8,646.0 L440.8,657.0 L443.8,652.5 L446.9,648.7 L449.9,650.2 L452.9,646.9 L455.9,654.5 L458.9,655.4 L461.9,639.4 L464.9,652.2 L467.9,663.9 L470.9,656.7 L473.9,645.3 L476.9,624.9 L479.9,651.9 L482.9,654.3 L485.9,648.8 L488.9,636.5 L491.9,634.2 L494.9,649.0 L497.9,646.0 L500.9,635.7 L503.9,629.3 L506.9,658.0 L509.9,651.6 L512.9,647.3 L515.9,655.9 L518.9,644.9 L521.9,622.3 L524.9,655.9 L527.9,654.2 L530.9,662.7 L533.9,663.0 L537.0,653.7 L540.0,648.2 L543.0,648.4 L546.0,651.1 L549.0,653.0 L552.0,647.1 L555.0,652.3 L558.0,640.1 L561.0,624.8 L564.0,643.1 L567.0,657.8 L570.0,639.9 L573.0,648.8 L576.0,638.8 L579.0,645.2 L582.0,653.5" fill="none" stroke="#508642" stroke-width="1.2" stroke-opacity="0.9" stroke-linejoin="round"/><path d="M128.5,659.8 L131.5,663.3 L134.5,664.0 L137.5,655.5 L140.5,656.0 L143.5,658.3 L146.5,664.5 L149.5,664.4 L152.5,651.6 L155.5,665.8 L158.5,657.4 L161.5,656.6 L164.5,646.7 L167.5,643.7 L170.5,653.4 L173.5,652.8 L176.6,659.5 L179.6,653.4 L182.6,661.2 L185.6,657.6 L188.6,652.6 L191.6,619.1 L194.6,625.7 L197.6,633.3 L200.6,635.8 L203.6,634.2 L206.6,648.1 L209.6,633.2 L212.6,651.4 L215.6,634.1 L218.6,645.6 L221.6,651.4 L224.6,647.9 L227.6,663.1 L230.6,649.4 L233.6,638.8 L236.6,618.2 L239.6,644.1 L242.6,625.8 L245.6,638.8 L248.6,634.1 L251.6,646.5 L254.6,643.3 L257.6,623.1 L260.6,628.6 L263.6,640.5 L266.7,631.9 L269.7,645.9 L272.7,643.2 L275.7,648.3 L278.7,657.3 L281.7,657.5 L284.7,648.8 L287.7,655.2 L290.7,653.1 L293.7,654.2 L296.7,656.4 L299.7,656.7 L302.7,649.3 L305.7,651.0 L308.7,650.2 L311.7,655.8 L314.7,647.6 L317.7,657.4 L320.7,658.3 L323.7,649.7 L326.7,646.3 L329.7,649.3 L332.7,650.1 L335.7,652.6 L338.7,656.9 L341.7,661.0 L344.7,632.2 L347.7,651.3 L350.7,646.5 L353.7,644.3 L356.8,638.0 L359.8,641.7 L362.8,650.0 L365.8,650.5 L368.8,637.9 L371.8,640.6 L374.8,654.8 L377.8,653.7 L380.8,650.5 L383.8,646.3 L386.8,651.7 L389.8,644.7 L392.8,625.5 L395.8,628.0 L398.8,648.1 L401.8,634.6 L404.8,632.5 L407.8,642.7 L410.8,628.8 L413.8,639.0 L416.8,636.9 L419.8,632.9 L422.8,647.2 L425.8,636.2 L428.8,650.7 L431.8,645.7 L434.8,638.5 L437.8,653.2 L440.8,658.6 L443.8,655.0 L446.9,645.1 L449.9,638.1 L452.9,636.5 L455.9,656.6 L458.9,658.8 L461.9,643.4 L464.9,653.5 L467.9,655.4 L470.9,641.9 L473.9,648.9 L476.9,652.0 L479.9,643.8 L482.9,639.4 L485.9,637.1 L488.9,635.3 L491.9,635.6 L494.9,639.0 L497.9,639.0 L500.9,640.5 L503.9,614.8 L506.9,637.8 L509.9,640.7 L512.9,641.5 L515.9,639.8 L518.9,642.3 L521.9,637.0 L524.9,636.2 L527.9,658.6 L530.9,654.5 L533.9,650.8 L537.0,638.4 L540.0,646.2 L543.0,645.7 L546.0,646.0 L549.0,649.5 L552.0,647.0 L555.0,628.9 L558.0,610.5 L561.0,624.3 L564.0,643.0 L567.0,649.8 L570.0,651.9 L573.0,649.6 L576.0,638.0 L579.0,656.1 L582.0,657.5" fill="none" stroke="#cca300" stroke-width="1.2" stroke-opacity="0.9" stroke-linejoin="round"/><path d="M128.5,661.5 L131.5,659.8 L134.5,661.7 L137.5,659.9 L140.5,662.4 L143.5,663.7 L146.5,656.8 L149.5,656.6 L152.5,659.2 L155.5,662.0 L158.5,661.1 L161.5,662.3 L164.5,660.6 L167.5,656.6 L170.5,656.7 L173.5,657.5 L176.6,639.4 L179.6,653.8 L182.6,656.3 L185.6,657.6 L188.6,656.2 L191.6,657.4 L194.6,645.3 L197.6,641.1 L200.6,633.0 L203.6,641.4 L206.6,635.0 L209.6,623.9 L212.6,653.6 L215.6,640.8 L218.6,658.7 L221.6,647.8 L224.6,656.0 L227.6,650.9 L230.6,651.8 L233.6,644.9 L236.6,603.9 L239.6,637.1 L242.6,641.8 L245.6,643.4 L248.6,642.2 L251.6,647.2 L254.6,631.5 L257.6,636.7 L260.6,640.1 L263.6,650.6 L266.7,646.3 L269.7,662.8 L272.7,660.5 L275.7,656.2 L278.7,652.8 L281.7,664.3 L284.7,655.7 L287.7,659.2 L290.7,655.6 L293.7,659.1 L296.7,651.8 L299.7,659.9 L302.7,654.3 L305.7,661.5 L308.7,658.6 L311.7,652.6 L314.7,650.9 L317.7,657.2 L320.7,657.6 L323.7,653.4 L326.7,659.8 L329.7,654.6 L332.7,656.1 L335.7,657.7 L338.7,663.1 L341.7,660.6 L344.7,658.3 L347.7,636.0 L350.7,641.1 L353.7,647.3 L356.8,652.3 L359.8,653.1 L362.8,659.6 L365.8,657.3 L368.8,662.2 L371.8,657.5 L374.8,659.0 L377.8,660.6 L380.8,661.2 L383.8,658.0 L386.8,645.3 L389.8,653.8 L392.8,647.0 L395.8,648.5 L398.8,648.8 L401.8,650.5 L404.8,649.7 L407.8,658.5 L410.8,651.7 L413.8,646.8 L416.8,631.5 L419.8,650.7 L422.8,653.6 L425.8,659.8 L428.8,657.4 L431.8,652.6 L434.8,638.6 L437.8,642.6 L440.8,659.4 L443.8,658.3 L446.9,657.3 L449.9,648.5 L452.9,659.2 L455.9,662.8 L458.9,654.4 L461.9,654.9 L464.9,658.0 L467.9,664.6 L470.9,656.3 L473.9,645.0 L476.9,647.0 L479.9,662.7 L482.9,656.2 L485.9,643.6 L488.9,622.9 L491.9,628.4 L494.9,654.4 L497.9,644.4 L500.9,649.4 L503.9,633.9 L506.9,650.0 L509.9,654.7 L512.9,647.7 L515.9,625.4 L518.9,632.1 L521.9,654.6 L524.9,651.2 L527.9,651.7 L530.9,652.9 L533.9,654.0 L537.0,636.2 L540.0,658.1 L543.0,655.4 L546.0,659.4 L549.0,642.3 L552.0,641.9 L555.0,649.9 L558.0,644.9 L561.0,639.7 L564.0,652.1 L567.0,655.5 L570.0,640.8 L573.0,608.8 L576.0,648.5 L579.0,651.1 L582.0,661.2" fill="none" stroke="#70dbed" stroke-width="1.2" stroke-opacity="0.9" stroke-linejoin="round"/><path d="M128.5,663.3 L131.5,661.9 L134.5,661.5 L137.5,664.6 L140.5,661.5 L143.5,652.2 L146.5,666.3 L149.5,665.8 L152.5,658.4 L155.5,662.6 L158.5,664.7 L161.5,664.3 L164.5,666.8 L167.5,646.2 L170.5,665.1 L173.5,653.8 L176.6,652.8 L179.6,659.0 L182.6,658.0 L185.6,659.7 L188.6,662.6 L191.6,631.4 L194.6,641.1 L197.6,642.3 L200.6,644.5 L203.6,630.1 L206.6,636.4 L209.6,639.7 L212.6,647.0 L215.6,654.6 L218.6,647.4 L221.6,655.1 L224.6,655.6 L227.6,661.7 L230.6,650.1 L233.6,638.6 L236.6,602.8 L239.6,611.1 L242.6,618.8 L245.6,644.5 L248.6,646.9 L251.6,636.9 L254.6,647.5 L257.6,632.8 L260.6,626.6 L263.6,654.4 L266.7,641.9 L269.7,652.8 L272.7,652.4 L275.7,658.2 L278.7,650.2 L281.7,656.0 L284.7,653.6 L287.7,644.4 L290.7,652.8 L293.7,655.7 L296.7,649.3 L299.7,649.1 L302.7,654.2 L305.7,662.9 L308.7,658.9 L311.7,653.9 L314.7,651.9 L317.7,638.6 L320.7,657.1 L323.7,668.2 L326.7,659.2 L329.7,656.4 L332.7,653.6 L335.7,658.7 L338.7,660.3 L341.7,659.5 L344.7,663.5 L347.7,647.4 L350.7,637.7 L353.7,653.4 L356.8,645.9 L359.8,649.0 L362.8,650.1 L365.8,659.3 L368.8,640.7 L371.8,654.6 L374.8,654.4 L377.8,649.3 L380.8,653.6 L383.8,651.4 L386.8,648.0 L389.8,655.0 L392.8,655.9 L395.8,656.9 L398.8,649.0 L401.8,647.7 L404.8,647.6 L407.8,655.7 L410.8,644.3 L413.8,643.9 L416.8,629.8 L419.8,645.3 L422.8,655.0 L425.8,650.0 L428.8,655.9 L431.8,657.6 L434.8,640.2 L437.8,654.3 L440.8,657.3 L443.8,659.0 L446.9,655.6 L449.9,652.5 L452.9,645.2 L455.9,659.6 L458.9,657.2 L461.9,655.0 L464.9,659.6 L467.9,665.9 L470.9,657.8 L473.9,623.8 L476.9,650.9 L479.9,662.3 L482.9,652.3 L485.9,660.5 L488.9,649.2 L491.9,645.7 L494.9,643.7 L497.9,643.9 L500.9,638.4 L503.9,642.7 L506.9,651.3 L509.9,646.2 L512.9,640.6 L515.9,644.9 L518.9,638.9 L521.9,642.8 L524.9,652.7 L527.9,661.5 L530.9,659.0 L533.9,656.1 L537.0,654.0 L540.0,651.6 L543.0,646.5 L546.0,647.1 L549.0,647.1 L552.0,656.3 L555.0,648.0 L558.0,641.2 L561.0,654.0 L564.0,658.6 L567.0,665.0 L570.0,645.5 L573.0,642.2 L576.0,644.6 L579.0,646.0 L582.0,648.7" fill="none" stroke="#e0752d" stroke-width="1.2" stroke-opacity="0.9" stroke-linejoin="round"/><path d="M128.5,644.1 L131.5,659.1 L134.5,663.0 L137.5,664.9 L140.5,664.2 L143.5,662.0 L146.5,654.0 L149.5,658.3 L152.5,655.4 L155.5,661.4 L158.5,658.0 L161.5,654.2 L164.5,651.6 L167.5,649.2 L170.5,653.8 L173.5,659.4 L176.6,645.5 L179.6,661.0 L182.6,654.1 L185.6,660.9 L188.6,659.8 L191.6,632.2 L194.6,625.7 L197.6,633.1 L200.6,655.8 L203.6,627.6 L206.6,637.6 L209.6,641.8 L212.6,652.2 L215.6,640.7 L218.6,632.6 L221.6,650.8 L224.6,657.8 L227.6,646.8 L230.6,640.9 L233.6,633.9 L236.6,610.0 L239.6,619.6 L242.6,634.8 L245.6,651.3 L248.6,649.1 L251.6,643.0 L254.6,634.8 L257.6,616.1 L260.6,639.3 L263.6,650.5 L266.7,649.5 L269.7,649.9 L272.7,644.7 L275.7,642.6 L278.7,641.7 L281.7,651.1 L284.7,643.4 L287.7,652.5 L290.7,649.9 L293.7,658.3 L296.7,657.0 L299.7,658.1 L302.7,647.5 L305.7,651.2 L308.7,645.3 L311.7,650.9 L314.7,650.1 L317.7,650.4 L320.7,651.7 L323.7,654.6 L326.7,621.7 L329.7,644.2 L332.7,657.2 L335.7,654.2 L338.7,659.9 L341.7,654.4 L344.7,657.8 L347.7,652.0 L350.7,653.6 L353.7,652.4 L356.8,650.3 L359.8,640.6 L362.8,652.1 L365.8,655.5 L368.8,646.4 L371.8,644.0 L374.8,653.2 L377.8,636.6 L380.8,644.5 L383.8,650.7 L386.8,650.6 L389.8,651.2 L392.8,645.8 L395.8,648.5 L398.8,643.0 L401.8,649.4 L404.8,655.2 L407.8,651.5 L410.8,645.9 L413.8,636.4 L416.8,622.6 L419.8,643.6 L422.8,644.3 L425.8,636.8 L428.8,652.0 L431.8,638.7 L434.8,633.4 L437.8,651.9 L440.8,656.0 L443.8,651.9 L446.9,643.8 L449.9,648.4 L452.9,639.1 L455.9,653.3 L458.9,649.6 L461.9,641.0 L464.9,644.6 L467.9,652.2 L470.9,640.6 L473.9,634.3 L476.9,643.1 L479.9,648.2 L482.9,648.0 L485.9,645.6 L488.9,632.4 L491.9,630.5 L494.9,632.3 L497.9,621.8 L500.9,648.0 L503.9,633.3 L506.9,642.3 L509.9,651.9 L512.9,638.2 L515.9,627.5 L518.9,640.3 L521.9,620.3 L524.9,642.5 L527.9,651.3 L530.9,653.7 L533.9,649.9 L537.0,647.1 L540.0,652.8 L543.0,641.4 L546.0,637.6 L549.0,636.5 L552.0,631.3 L555.0,637.5 L558.0,624.2 L561.0,652.4 L564.0,641.4 L567.0,654.9 L570.0,640.3 L573.0,651.7 L576.0,641.9 L579.0,640.2 L582.0,625.6" fill="none" stroke="#bf1b00" stroke-width="1.2" stroke-opacity="0.9" stroke-linejoin="round"/><path d="M128.5,660.4 L131.5,657.1 L134.5,646.7 L137.5,653.0 L140.5,658.5 L143.5,663.7 L146.5,656.4 L149.5,659.9 L152.5,657.5 L155.5,659.9 L158.5,661.7 L161.5,655.2 L164.5,660.5 L167.5,648.0 L170.5,643.9 L173.5,653.7 L176.6,652.3 L179.6,655.1 L182.6,657.1 L185.6,655.2 L188.6,655.6 L191.6,633.7 L194.6,628.4 L197.6,638.7 L200.6,647.8 L203.6,625.0 L206.6,613.2 L209.6,643.4 L212.6,657.3 L215.6,633.7 L218.6,652.6 L221.6,637.3 L224.6,641.6 L227.6,637.9 L230.6,630.8 L233.6,616.3 L236.6,601.6 L239.6,618.3 L242.6,631.3 L245.6,618.3 L248.6,629.5 L251.6,634.8 L254.6,643.9 L257.6,625.7 L260.6,633.9 L263.6,645.4 L266.7,651.1 L269.7,657.2 L272.7,643.1 L275.7,655.1 L278.7,650.5 L281.7,648.9 L284.7,640.9 L287.7,653.9 L290.7,654.7 L293.7,653.2 L296.7,644.7 L299.7,654.4 L302.7,657.7 L305.7,655.7 L308.7,637.6 L311.7,648.4 L314.7,658.1 L317.7,647.2 L320.7,652.0 L323.7,638.3 L326.7,646.7 L329.7,636.2 L332.7,647.4 L335.7,655.9 L338.7,659.3 L341.7,653.6 L344.7,643.7 L347.7,637.2 L350.7,660.5 L353.7,641.6 L356.8,636.7 L359.8,656.9 L362.8,653.7 L365.8,650.7 L368.8,645.4 L371.8,649.9 L374.8,658.4 L377.8,643.7 L380.8,641.3 L383.8,635.6 L386.8,658.1 L389.8,648.7 L392.8,648.7 L395.8,622.0 L398.8,651.4 L401.8,647.9 L404.8,650.3 L407.8,638.2 L410.8,641.9 L413.8,640.4 L416.8,635.2 L419.8,629.9 L422.8,630.9 L425.8,635.2 L428.8,637.3 L431.8,633.6 L434.8,644.7 L437.8,646.1 L440.8,639.8 L443.8,657.0 L446.9,649.6 L449.9,649.0 L452.9,638.6 L455.9,645.5 L458.9,638.1 L461.9,640.9 L464.9,649.6 L467.9,657.6 L470.9,649.1 L473.9,639.5 L476.9,636.5 L479.9,654.0 L482.9,655.6 L485.9,642.1 L488.9,608.4 L491.9,623.9 L494.9,626.9 L497.9,635.2 L500.9,651.8 L503.9,631.9 L506.9,648.9 L509.9,639.0 L512.9,648.6 L515.9,632.9 L518.9,637.2 L521.9,644.6 L524.9,659.1 L527.9,659.4 L530.9,657.7 L533.9,634.6 L537.0,644.4 L540.0,636.1 L543.0,650.5 L546.0,644.7 L549.0,635.0 L552.0,644.8 L555.0,645.8 L558.0,635.3 L561.0,644.1 L564.0,644.3 L567.0,652.7 L570.0,643.4 L573.0,646.4 L576.0,641.9 L579.0,641.4 L582.0,645.1" fill="none" stroke="#705da0" stroke-width="1.2" stroke-opacity="0.9" stroke-linejoin="round"/><path d="M128.5,661.1 L131.5,650.3 L134.5,647.3 L137.5,658.2 L140.5,661.4 L143.5,662.4 L146.5,658.6 L149.5,661.4 L152.5,658.1 L155.5,657.4 L158.5,652.9 L161.5,653.1 L164.5,646.8 L167.5,649.6 L170.5,654.3 L173.5,655.1 L176.6,651.0 L179.6,648.9 L182.6,662.5 L185.6,655.0 L188.6,654.2 L191.6,653.8 L194.6,628.6 L197.6,655.1 L200.6,626.5 L203.6,618.9 L206.6,621.7 L209.6,643.1 L212.6,657.8 L215.6,636.9 L218.6,641.0 L221.6,643.4 L224.6,650.7 L227.6,642.3 L230.6,636.2 L233.6,639.6 L236.6,605.7 L239.6,608.8 L242.6,623.5 L245.6,632.3 L248.6,640.0 L251.6,631.8 L254.6,627.5 L257.6,647.9 L260.6,648.1 L263.6,644.9 L266.7,632.9 L269.7,635.2 L272.7,656.6 L275.7,659.9 L278.7,659.3 L281.7,656.9 L284.7,658.3 L287.7,656.8 L290.7,654.4 L293.7,648.7 L296.7,647.1 L299.7,643.2 L302.7,661.7 L305.7,660.3 L308.7,657.4 L311.7,651.0 L314.7,647.2 L317.7,650.7 L320.7,643.2 L323.7,653.9 L326.7,653.8 L329.7,651.9 L332.7,653.1 L335.7,655.2 L338.7,657.5 L341.7,661.4 L344.7,641.6 L347.7,651.2 L350.7,650.5 L353.7,651.1 L356.8,645.8 L359.8,662.8 L362.8,646.4 L365.8,642.8 L368.8,649.8 L371.8,657.4 L374.8,651.9 L377.8,643.0 L380.8,638.8 L383.8,641.6 L386.8,641.8 L389.8,654.7 L392.8,651.3 L395.8,641.0 L398.8,653.3 L401.8,640.6 L404.8,649.8 L407.8,646.9 L410.8,628.1 L413.8,629.5 L416.8,623.6 L419.8,626.7 L422.8,647.7 L425.8,647.7 L428.8,647.1 L431.8,652.1 L434.8,648.0 L437.8,651.1 L440.8,658.0 L443.8,656.2 L446.9,650.6 L449.9,644.3 L452.9,637.2 L455.9,645.5 L458.9,638.8 L461.9,641.0 L464.9,644.1 L467.9,659.8 L470.9,657.1 L473.9,651.3 L476.9,642.9 L479.9,645.9 L482.9,638.9 L485.9,637.6 L488.9,607.0 L491.9,637.6 L494.9,643.8 L497.9,622.3 L500.9,648.4 L503.9,638.2 L506.9,658.9 L509.9,651.9 L512.9,644.5 L515.9,647.7 L518.9,638.1 L521.9,633.6 L524.9,651.3 L527.9,646.5 L530.9,643.5 L533.9,653.8 L537.0,652.8 L540.0,663.5 L543.0,658.2 L546.0,651.3 L549.0,645.3 L552.0,636.8 L555.0,640.8 L558.0,639.6 L561.0,653.8 L564.0,642.0 L567.0,656.7 L570.0,664.8 L573.0,654.6 L576.0,653.5 L579.0,632.9 L582.0,648.9" fill="none" stroke="#ba43a9" stroke-width="1.2" stroke-opacity="0.9" stroke-linejoin="round"/><path d="M128.5,657.8 L131.5,668.7 L134.5,658.8 L137.5,652.3 L140.5,665.4 L143.5,660.6 L146.5,651.2 L149.5,659.0 L152.5,661.3 L155.5,658.8 L158.5,659.4 L161.5,648.8 L164.5,644.4 L167.5,646.1 L170.5,654.2 L173.5,659.8 L176.6,652.3 L179.6,649.1 L182.6,651.9 L185.6,656.7 L188.6,666.1 L191.6,648.2 L194.6,641.0 L197.6,640.8 L200.6,637.3 L203.6,642.6 L206.6,625.6 L209.6,628.3 L212.6,642.4 L215.6,630.2 L218.6,654.5 L221.6,650.3 L224.6,659.8 L227.6,654.0 L230.6,651.5 L233.6,633.8 L236.6,593.8 L239.6,614.1 L242.6,617.4 L245.6,641.3 L248.6,634.8 L251.6,644.6 L254.6,634.8 L257.6,636.2 L260.6,643.1 L263.6,647.4 L266.7,625.2 L269.7,649.6 L272.7,652.7 L275.7,655.7 L278.7,648.8 L281.7,649.1 L284.7,647.1 L287.7,652.6 L290.7,658.4 L293.7,664.8 L296.7,652.8 L299.7,643.2 L302.7,648.9 L305.7,651.5 L308.7,649.6 L311.7,657.0 L314.7,659.1 L317.7,651.2 L320.7,651.9 L323.7,647.5 L326.7,652.6 L329.7,653.7 L332.7,649.5 L335.7,647.4 L338.7,654.7 L341.7,654.7 L344.7,648.5 L347.7,650.9 L350.7,643.0 L353.7,644.0 L356.8,644.4 L359.8,650.9 L362.8,649.8 L365.8,652.0 L368.8,646.3 L371.8,632.6 L374.8,657.9 L377.8,634.6 L380.8,646.0 L383.8,645.2 L386.8,631.7 L389.8,663.7 L392.8,640.1 L395.8,642.7 L398.8,636.0 L401.8,645.3 L404.8,627.8 L407.8,641.7 L410.8,651.5 L413.8,644.8 L416.8,631.6 L419.8,645.6 L422.8,650.5 L425.8,639.4 L428.8,632.8 L431.8,640.5 L434.8,636.0 L437.8,644.0 L440.8,651.6 L443.8,652.8 L446.9,655.5 L449.9,644.0 L452.9,634.4 L455.9,648.5 L458.9,642.4 L461.9,648.6 L464.9,646.4 L467.9,659.5 L470.9,657.2 L473.9,630.1 L476.9,642.9 L479.9,645.0 L482.9,647.0 L485.9,648.0 L488.9,636.8 L491.9,638.0 L494.9,644.5 L497.9,647.3 L500.9,635.0 L503.9,625.2 L506.9,632.6 L509.9,647.7 L512.9,649.6 L515.9,636.8 L518.9,619.5 L521.9,637.2 L524.9,652.7 L527.9,661.3 L530.9,657.5 L533.9,653.3 L537.0,646.6 L540.0,645.0 L543.0,631.1 L546.0,644.0 L549.0,636.0 L552.0,638.7 L555.0,649.3 L558.0,642.3 L561.0,643.9 L564.0,633.0 L567.0,653.4 L570.0,637.9 L573.0,649.8 L576.0,649.1 L579.0,653.5 L582.0,646.5" fill="none" stroke="#6d1f62" stroke-width="1.2" stroke-opacity="0.9" stroke-linejoin="round"/><path d="M128.5,663.6 L131.5,662.3 L134.5,655.5 L137.5,660.4 L140.5,661.8 L143.5,658.8 L146.5,653.0 L149.5,658.7 L152.5,659.0 L155.5,663.3 L158.5,654.2 L161.5,657.6 L164.5,650.4 L167.5,650.0 L170.5,658.4 L173.5,653.2 L176.6,649.3 L179.6,652.2 L182.6,657.0 L185.6,662.1 L188.6,658.8 L191.6,628.3 L194.6,628.3 L197.6,634.2 L200.6,642.0 L203.6,592.9 L206.6,632.3 L209.6,631.4 L212.6,647.7 L215.6,631.7 L218.6,639.8 L221.6,635.1 L224.6,653.2 L227.6,656.6 L230.6,641.3 L233.6,638.2 L236.6,607.7 L239.6,619.0 L242.6,620.3 L245.6,638.5 L248.6,637.5 L251.6,637.8 L254.6,633.6 L257.6,634.6 L260.6,620.0 L263.6,647.2 L266.7,627.5 L269.7,655.1 L272.7,651.2 L275.7,662.0 L278.7,637.6 L281.7,656.8 L284.7,655.2 L287.7,661.4 L290.7,654.1 L293.7,627.3 L296.7,648.0 L299.7,650.1 L302.7,651.6 L305.7,650.9 L308.7,650.0 L311.7,653.6 L314.7,647.3 L317.7,660.8 L320.7,663.5 L323.7,657.5 L326.7,658.9 L329.7,664.0 L332.7,649.5 L335.7,654.0 L338.7,654.8 L341.7,661.7 L344.7,659.6 L347.7,659.1 L350.7,649.8 L353.7,637.4 L356.8,648.4 L359.8,656.9 L362.8,657.0 L365.8,650.2 L368.8,645.3 L371.8,634.4 L374.8,651.5 L377.8,648.7 L380.8,640.4 L383.8,641.3 L386.8,642.7 L389.8,653.1 L392.8,644.3 L395.8,643.5 L398.8,641.0 L401.8,655.7 L404.8,656.5 L407.8,643.7 L410.8,651.9 L413.8,641.5 L416.8,640.4 L419.8,649.3 L422.8,650.1 L425.8,650.3 L428.8,646.3 L431.8,648.1 L434.8,647.2 L437.8,655.2 L440.8,653.2 L443.8,657.4 L446.9,655.1 L449.9,653.0 L452.9,650.8 L455.9,661.3 L458.9,654.1 L461.9,631.5 L464.9,634.1 L467.9,657.9 L470.9,646.6 L473.9,632.6 L476.9,648.0 L479.9,648.2 L482.9,648.7 L485.9,644.9 L488.9,646.0 L491.9,637.7 L494.9,645.5 L497.9,641.8 L500.9,652.4 L503.9,646.6 L506.9,648.6 L509.9,658.5 L512.9,649.3 L515.9,647.6 L518.9,644.8 L521.9,627.9 L524.9,645.1 L527.9,650.4 L530.9,656.2 L533.9,659.1 L537.0,657.5 L540.0,643.7 L543.0,637.3 L546.0,645.5 L549.0,636.1 L552.0,650.2 L555.0,651.9 L558.0,644.1 L561.0,642.0 L564.0,653.5 L567.0,661.0 L570.0,648.6 L573.0,635.8 L576.0,646.2 L579.0,654.6 L582.0,646.6" fill="none" stroke="#962d82" stroke-width="1.2" stroke-opacity="0.9" stroke-linejoin="round"/><path d="M128.5,665.4 L131.5,666.1 L134.5,664.0 L137.5,657.2 L140.5,663.4 L143.5,661.0 L146.5,659.3 L149.5,653.1 L152.5,656.5 L155.5,663.9 L158.5,662.1 L161.5,655.9 L164.5,653.4 L167.5,664.5 L170.5,656.4 L173.5,659.1 L176.6,654.3 L179.6,653.9 L182.6,662.2 L185.6,662.6 L188.6,658.6 L191.6,655.7 L194.6,648.0 L197.6,645.7 L200.6,642.4 L203.6,642.6 L206.6,646.0 L209.6,636.7 L212.6,647.8 L215.6,625.6 L218.6,634.7 L221.6,627.4 L224.6,646.7 L227.6,625.9 L230.6,633.9 L233.6,632.9 L236.6,632.2 L239.6,627.0 L242.6,631.2 L245.6,641.4 L248.6,650.5 L251.6,641.8 L254.6,646.2 L257.6,638.4 L260.6,652.5 L263.6,654.0 L266.7,642.5 L269.7,654.8 L272.7,656.2 L275.7,655.5 L278.7,660.5 L281.7,659.0 L284.7,650.6 L287.7,652.2 L290.7,650.1 L293.7,655.2 L296.7,661.3 L299.7,646.4 L302.7,648.0 L305.7,654.2 L308.7,662.6 L311.7,656.2 L314.7,653.0 L317.7,660.3 L320.7,649.5 L323.7,660.8 L326.7,650.2 L329.7,651.6 L332.7,658.0 L335.7,654.1 L338.7,659.8 L341.7,661.0 L344.7,658.3 L347.7,646.5 L350.7,644.1 L353.7,648.1 L356.8,640.9 L359.8,647.3 L362.8,655.7 L365.8,655.2 L368.8,645.8 L371.8,651.4 L374.8,655.6 L377.8,654.9 L380.8,651.6 L383.8,642.0 L386.8,651.8 L389.8,647.0 L392.8,647.5 L395.8,647.5 L398.8,644.0 L401.8,645.0 L404.8,644.6 L407.8,657.9 L410.8,632.2 L413.8,644.3 L416.8,649.2 L419.8,646.8 L422.8,639.7 L425.8,648.1 L428.8,644.3 L431.8,653.3 L434.8,653.5 L437.8,634.7 L440.8,658.2 L443.8,658.2 L446.9,648.6 L449.9,652.1 L452.9,637.5 L455.9,654.3 L458.9,644.7 L461.9,648.9 L464.9,654.6 L467.9,659.4 L470.9,630.0 L473.9,635.4 L476.9,633.5 L479.9,650.6 L482.9,653.8 L485.9,640.7 L488.9,632.3 L491.9,639.0 L494.9,645.1 L497.9,627.9 L500.9,643.3 L503.9,626.9 L506.9,644.4 L509.9,641.1 L512.9,657.2 L515.9,642.9 L518.9,660.8 L521.9,637.3 L524.9,651.4 L527.9,659.7 L530.9,638.0 L533.9,648.6 L537.0,647.4 L540.0,665.7 L543.0,658.1 L546.0,634.3 L549.0,643.6 L552.0,649.2 L555.0,646.6 L558.0,644.0 L561.0,628.9 L564.0,631.9 L567.0,627.2 L570.0,648.3 L573.0,649.1 L576.0,656.8 L579.0,649.7 L582.0,644.0" fill="none" stroke="#614d93" stroke-width="1.2" stroke-opacity="0.9" stroke-linejoin="round"/></svg>
<div class="t" style="top:676.34px;font-size:12px;color:#d8d9da;left:-407.00px;width:1200px;text-align:center;">19:55</div>
<div class="t" style="top:676.34px;font-size:12px;color:#d8d9da;left:-331.50px;width:1200px;text-align:center;">20:00</div>
<div class="t" style="top:676.34px;font-size:12px;color:#d8d9da;left:-256.20px;width:1200px;text-align:center;">20:05</div>
<div class="t" style="top:676.34px;font-size:12px;color:#d8d9da;left:-180.00px;width:1200px;text-align:center;">20:10</div>
<div class="t" style="top:676.34px;font-size:12px;color:#d8d9da;left:-104.00px;width:1200px;text-align:center;">20:15</div>
<div class="t" style="top:676.34px;font-size:12px;color:#d8d9da;left:-29.50px;width:1200px;text-align:center;">20:20</div>
<div class="t" style="top:701.84px;font-size:12px;color:#33b1e5;font-weight:700;left:-677.20px;width:1200px;text-align:right;">avg</div>
<div class="t" style="top:701.84px;font-size:12px;color:#33b1e5;font-weight:700;left:-628.00px;width:1200px;text-align:right;">current</div>
<svg style="left:572px;top:705px" width="8" height="5" viewBox="0 0 8 5"><path d="M0,0 L8,0 L4,4Z" fill="#33b1e5"/></svg>
<div class="b" style="left:109px;top:731.7px;width:13px;height:3.4px;background:#eab839;border-radius:1px"></div>
<div class="t" style="top:724.84px;font-size:12px;color:#d8d9da;left:129.00px;">Core 1</div>
<div class="t" style="top:724.84px;font-size:12px;color:#d8d9da;left:-677.20px;width:1200px;text-align:right;">22%</div>
<div class="t" style="top:724.84px;font-size:12px;color:#d8d9da;left:-620.00px;width:1200px;text-align:right;">42%</div>
<div class="b" style="left:109px;top:757.7px;width:13px;height:3.4px;background:#1f78c1;border-radius:1px"></div>
<div class="t" style="top:750.84px;font-size:12px;color:#d8d9da;left:129.00px;">Core 5</div>
<div class="t" style="top:750.84px;font-size:12px;color:#d8d9da;left:-677.20px;width:1200px;text-align:right;">21%</div>
<div class="t" style="top:750.84px;font-size:12px;color:#d8d9da;left:-620.00px;width:1200px;text-align:right;">41%</div>
<div class="b" style="left:592px;top:701px;width:5px;height:34px;background:rgba(200,205,210,0.35);border-radius:3px"></div>
<div class="rh" style="left:598.0px;top:763.6px"></div>
<div class="p" style="left:617.0px;top:520px;width:523.0px;height:252.6px;background:rgba(0,0,0,0.27)"></div>
<div class="t" style="top:529.13px;font-size:13.2px;color:#ffffff;font-weight:700;left:278.50px;width:1200px;text-align:center;">CPU package</div>
<div class="t" style="left:730.0px;top:529.87px;width:400px;text-align:right;font-size:12.2px;color:#33b1e5;-webkit-text-stroke:0.45px #33b1e5"><svg style="position:relative;display:inline-block;vertical-align:-1px;margin-right:3px" width="11" height="11" viewBox="0 0 12 12"><circle cx="6" cy="6" r="4.9" fill="none" stroke="#33b1e5" stroke-width="1.7"/><path d="M6,3 L6,6.6 L4,6.6" fill="none" stroke="#33b1e5" stroke-width="1.5"/></svg>Last 30 minutes</div>
<div class="b" style="left:656.5px;top:568.5px;width:459.5px;height:1px;background:rgba(255,255,255,0.13)"></div>
<div class="b" style="left:656.5px;top:593.7px;width:459.5px;height:1px;background:rgba(255,255,255,0.13)"></div>
<div class="b" style="left:656.5px;top:618.9px;width:459.5px;height:1px;background:rgba(255,255,255,0.13)"></div>
<div class="b" style="left:656.5px;top:644.0px;width:459.5px;height:1px;background:rgba(255,255,255,0.13)"></div>
<div class="b" style="left:656.5px;top:669.2px;width:459.5px;height:1px;background:rgba(255,255,255,0.13)"></div>
<div class="b" style="left:720.5px;top:569px;width:1px;height:100.7px;background:rgba(255,255,255,0.13)"></div>
<div class="b" style="left:796.3px;top:569px;width:1px;height:100.7px;background:rgba(255,255,255,0.13)"></div>
<div class="b" style="left:873.2px;top:569px;width:1px;height:100.7px;background:rgba(255,255,255,0.13)"></div>
<div class="b" style="left:950.5px;top:569px;width:1px;height:100.7px;background:rgba(255,255,255,0.13)"></div>
<div class="b" style="left:1026.5px;top:569px;width:1px;height:100.7px;background:rgba(255,255,255,0.13)"></div>
<div class="b" style="left:1102.5px;top:569px;width:1px;height:100.7px;background:rgba(255,255,255,0.13)"></div>
<div class="t" style="top:563.14px;font-size:12px;color:#d8d9da;left:-550.00px;width:1200px;text-align:right;">40%</div>
<div class="t" style="top:588.32px;font-size:12px;color:#d8d9da;left:-550.00px;width:1200px;text-align:right;">30%</div>
<div class="t" style="top:613.49px;font-size:12px;color:#d8d9da;left:-550.00px;width:1200px;text-align:right;">20%</div>
<div class="t" style="top:638.67px;font-size:12px;color:#d8d9da;left:-550.00px;width:1200px;text-align:right;">10%</div>
<div class="t" style="top:663.84px;font-size:12px;color:#d8d9da;left:-550.00px;width:1200px;text-align:right;">0%</div>
<svg style="left:0;top:0" width="1918" height="947"><path d="M656.5,669.7 L656.5,656.2 L658.5,652.6 L660.5,654.5 L662.5,652.4 L664.5,658.1 L666.5,652.1 L668.5,631.8 L670.5,616.9 L672.6,642.4 L674.6,643.7 L676.6,647.3 L678.6,647.0 L680.6,646.8 L682.6,648.0 L684.6,646.9 L686.6,646.6 L688.6,645.0 L690.6,645.8 L692.6,643.8 L694.6,644.6 L696.6,643.3 L698.6,643.6 L700.6,641.1 L702.7,642.5 L704.7,647.5 L706.7,646.8 L708.7,647.0 L710.7,646.5 L712.7,649.5 L714.7,646.4 L716.7,647.6 L718.7,644.2 L720.7,607.4 L722.7,589.7 L724.7,587.5 L726.7,589.1 L728.7,581.7 L730.7,587.5 L732.7,597.3 L734.8,596.3 L736.8,591.5 L738.8,592.5 L740.8,598.2 L742.8,626.9 L744.8,639.3 L746.8,618.3 L748.8,593.8 L750.8,583.1 L752.8,585.8 L754.8,592.5 L756.8,595.7 L758.8,595.8 L760.8,597.9 L762.8,604.6 L764.9,608.5 L766.9,611.8 L768.9,616.9 L770.9,623.8 L772.9,608.6 L774.9,591.8 L776.9,618.3 L778.9,624.1 L780.9,605.4 L782.9,585.3 L784.9,573.1 L786.9,577.2 L788.9,579.9 L790.9,584.2 L792.9,584.6 L795.0,587.6 L797.0,606.8 L799.0,622.6 L801.0,627.5 L803.0,631.5 L805.0,634.0 L807.0,635.3 L809.0,634.8 L811.0,632.5 L813.0,625.4 L815.0,621.8 L817.0,624.2 L819.0,617.9 L821.0,614.2 L823.0,605.5 L825.1,605.1 L827.1,617.0 L829.1,636.5 L831.1,644.0 L833.1,638.0 L835.1,637.5 L837.1,636.4 L839.1,640.4 L841.1,637.0 L843.1,634.8 L845.1,633.0 L847.1,635.6 L849.1,641.5 L851.1,640.9 L853.1,637.2 L855.1,628.1 L857.2,627.6 L859.2,630.3 L861.2,634.4 L863.2,639.8 L865.2,643.3 L867.2,647.9 L869.2,644.8 L871.2,639.4 L873.2,636.5 L875.2,635.2 L877.2,638.8 L879.2,639.8 L881.2,642.9 L883.2,644.0 L885.2,649.1 L887.3,650.7 L889.3,652.7 L891.3,646.8 L893.3,643.5 L895.3,639.1 L897.3,637.8 L899.3,639.6 L901.3,639.8 L903.3,639.0 L905.3,638.5 L907.3,638.4 L909.3,642.3 L911.3,642.7 L913.3,641.8 L915.3,640.4 L917.4,634.5 L919.4,635.7 L921.4,634.9 L923.4,640.4 L925.4,637.1 L927.4,634.2 L929.4,626.8 L931.4,628.4 L933.4,626.8 L935.4,620.2 L937.4,609.4 L939.4,600.3 L941.4,596.8 L943.4,591.3 L945.4,592.0 L947.4,591.4 L949.5,596.2 L951.5,612.4 L953.5,627.5 L955.5,631.9 L957.5,610.0 L959.5,613.1 L961.5,620.1 L963.5,633.0 L965.5,631.0 L967.5,629.3 L969.5,621.4 L971.5,624.1 L973.5,628.8 L975.5,634.8 L977.5,637.2 L979.6,629.8 L981.6,622.4 L983.6,618.9 L985.6,619.1 L987.6,624.9 L989.6,625.2 L991.6,628.5 L993.6,625.4 L995.6,622.7 L997.6,621.5 L999.6,622.6 L1001.6,616.3 L1003.6,607.8 L1005.6,604.7 L1007.6,599.9 L1009.7,607.5 L1011.7,613.3 L1013.7,623.8 L1015.7,625.2 L1017.7,620.9 L1019.7,619.7 L1021.7,617.9 L1023.7,613.1 L1025.7,608.9 L1027.7,599.4 L1029.7,590.6 L1031.7,590.1 L1033.7,604.0 L1035.7,615.5 L1037.7,629.0 L1039.8,623.9 L1041.8,620.1 L1043.8,617.0 L1045.8,621.7 L1047.8,623.1 L1049.8,625.6 L1051.8,630.6 L1053.8,626.8 L1055.8,621.8 L1057.8,611.9 L1059.8,608.5 L1061.8,611.0 L1063.8,620.1 L1065.8,624.5 L1067.8,622.3 L1069.8,618.2 L1071.9,616.5 L1073.9,614.0 L1075.9,611.7 L1077.9,608.4 L1079.9,608.8 L1081.9,608.2 L1083.9,611.1 L1085.9,611.4 L1087.9,612.0 L1089.9,606.6 L1091.9,603.6 L1093.9,599.9 L1095.9,600.2 L1097.9,597.7 L1099.9,600.1 L1102.0,602.5 L1104.0,606.8 L1106.0,605.0 L1108.0,606.0 L1110.0,612.9 L1112.0,619.6 L1114.0,596.0 L1116.0,581.6 L1116.0,669.7 Z" fill="#4c6f7e"/><path d="M656.5,669.7 L656.5,665.9 L658.5,664.6 L660.5,664.3 L662.5,661.4 L664.5,665.9 L666.5,662.4 L668.5,651.4 L670.5,643.0 L672.6,657.3 L674.6,655.9 L676.6,657.5 L678.6,657.4 L680.6,660.4 L682.6,660.3 L684.6,659.0 L686.6,657.3 L688.6,655.5 L690.6,656.4 L692.6,656.7 L694.6,659.4 L696.6,659.8 L698.6,660.3 L700.6,656.8 L702.7,655.9 L704.7,657.0 L706.7,656.4 L708.7,656.9 L710.7,655.3 L712.7,658.4 L714.7,657.1 L716.7,660.4 L718.7,656.8 L720.7,636.1 L722.7,626.7 L724.7,626.2 L726.7,625.8 L728.7,621.1 L730.7,625.0 L732.7,630.4 L734.8,628.7 L736.8,624.8 L738.8,627.3 L740.8,631.1 L742.8,647.6 L744.8,655.4 L746.8,642.9 L748.8,629.7 L750.8,622.3 L752.8,622.7 L754.8,626.4 L756.8,628.5 L758.8,631.0 L760.8,631.7 L762.8,633.8 L764.9,636.0 L766.9,639.2 L768.9,643.6 L770.9,648.2 L772.9,640.0 L774.9,630.0 L776.9,644.3 L778.9,646.3 L780.9,636.9 L782.9,626.2 L784.9,619.7 L786.9,621.5 L788.9,621.0 L790.9,624.0 L792.9,623.7 L795.0,626.6 L797.0,637.5 L799.0,645.7 L801.0,648.2 L803.0,651.2 L805.0,652.7 L807.0,652.6 L809.0,651.0 L811.0,648.6 L813.0,645.5 L815.0,643.9 L817.0,646.4 L819.0,643.5 L821.0,641.6 L823.0,639.6 L825.1,638.8 L827.1,644.7 L829.1,652.6 L831.1,656.5 L833.1,653.0 L835.1,654.0 L837.1,651.9 L839.1,651.8 L841.1,648.6 L843.1,649.6 L845.1,651.4 L847.1,654.0 L849.1,655.2 L851.1,653.3 L853.1,651.2 L855.1,649.2 L857.2,649.2 L859.2,651.3 L861.2,652.3 L863.2,654.6 L865.2,654.5 L867.2,657.0 L869.2,656.4 L871.2,654.3 L873.2,650.9 L875.2,649.5 L877.2,653.2 L879.2,654.0 L881.2,655.8 L883.2,651.4 L885.2,656.3 L887.3,657.5 L889.3,662.5 L891.3,658.4 L893.3,657.1 L895.3,655.9 L897.3,657.5 L899.3,658.0 L901.3,657.1 L903.3,655.3 L905.3,652.7 L907.3,651.4 L909.3,651.8 L911.3,654.7 L913.3,654.7 L915.3,655.2 L917.4,651.7 L919.4,651.9 L921.4,650.7 L923.4,653.2 L925.4,651.9 L927.4,652.4 L929.4,649.5 L931.4,650.1 L933.4,648.1 L935.4,644.5 L937.4,638.6 L939.4,634.1 L941.4,632.1 L943.4,628.6 L945.4,628.4 L947.4,625.9 L949.5,628.9 L951.5,636.6 L953.5,645.2 L955.5,650.4 L957.5,639.3 L959.5,643.4 L961.5,645.6 L963.5,652.7 L965.5,649.0 L967.5,647.6 L969.5,641.5 L971.5,644.8 L973.5,647.4 L975.5,652.3 L977.5,652.1 L979.6,648.0 L981.6,644.6 L983.6,644.1 L985.6,645.5 L987.6,646.8 L989.6,645.9 L991.6,645.8 L993.6,645.1 L995.6,645.0 L997.6,645.2 L999.6,645.3 L1001.6,642.0 L1003.6,637.7 L1005.6,635.2 L1007.6,630.1 L1009.7,633.3 L1011.7,637.5 L1013.7,644.7 L1015.7,644.3 L1017.7,642.9 L1019.7,642.4 L1021.7,642.4 L1023.7,637.8 L1025.7,635.8 L1027.7,630.8 L1029.7,628.0 L1031.7,628.1 L1033.7,636.7 L1035.7,642.4 L1037.7,648.3 L1039.8,645.5 L1041.8,644.1 L1043.8,643.7 L1045.8,645.2 L1047.8,644.6 L1049.8,646.9 L1051.8,649.6 L1053.8,649.3 L1055.8,644.5 L1057.8,640.4 L1059.8,638.7 L1061.8,641.5 L1063.8,645.6 L1065.8,647.9 L1067.8,645.7 L1069.8,643.3 L1071.9,641.3 L1073.9,639.8 L1075.9,637.8 L1077.9,636.8 L1079.9,637.3 L1081.9,637.9 L1083.9,640.8 L1085.9,640.6 L1087.9,641.7 L1089.9,637.4 L1091.9,636.5 L1093.9,633.6 L1095.9,632.7 L1097.9,630.4 L1099.9,632.6 L1102.0,633.5 L1104.0,635.9 L1106.0,634.6 L1108.0,635.9 L1110.0,639.3 L1112.0,642.2 L1114.0,628.5 L1116.0,620.8 L1116.0,669.7 Z" fill="#8a7462"/><path d="M656.5,669.7 L656.5,666.6 L658.5,664.9 L660.5,664.6 L662.5,665.0 L664.5,667.2 L666.5,666.5 L668.5,661.1 L670.5,659.8 L672.6,666.0 L674.6,663.7 L676.6,662.2 L678.6,662.6 L680.6,663.8 L682.6,664.5 L684.6,664.0 L686.6,664.1 L688.6,663.1 L690.6,663.1 L692.6,663.0 L694.6,665.9 L696.6,665.1 L698.6,666.0 L700.6,662.4 L702.7,663.6 L704.7,663.6 L706.7,663.9 L708.7,664.6 L710.7,663.7 L712.7,664.7 L714.7,663.7 L716.7,667.0 L718.7,666.1 L720.7,656.0 L722.7,650.0 L724.7,649.3 L726.7,647.5 L728.7,644.9 L730.7,646.9 L732.7,650.5 L734.8,652.0 L736.8,650.6 L738.8,652.5 L740.8,652.5 L742.8,659.5 L744.8,662.5 L746.8,655.9 L748.8,650.2 L750.8,646.6 L752.8,647.5 L754.8,648.8 L756.8,649.8 L758.8,651.1 L760.8,651.3 L762.8,652.5 L764.9,652.7 L766.9,654.5 L768.9,656.4 L770.9,657.5 L772.9,653.1 L774.9,648.2 L776.9,656.0 L778.9,658.1 L780.9,653.4 L782.9,648.5 L784.9,644.4 L786.9,645.1 L788.9,644.8 L790.9,645.8 L792.9,646.7 L795.0,648.3 L797.0,654.8 L799.0,657.4 L801.0,658.8 L803.0,660.8 L805.0,662.2 L807.0,663.0 L809.0,660.7 L811.0,659.8 L813.0,659.1 L815.0,659.3 L817.0,659.5 L819.0,656.5 L821.0,655.7 L823.0,655.0 L825.1,654.5 L827.1,655.9 L829.1,659.5 L831.1,661.5 L833.1,661.4 L835.1,662.2 L837.1,661.3 L839.1,660.7 L841.1,659.1 L843.1,660.6 L845.1,661.0 L847.1,662.6 L849.1,662.1 L851.1,661.7 L853.1,660.9 L855.1,659.9 L857.2,659.4 L859.2,660.4 L861.2,660.8 L863.2,663.0 L865.2,662.4 L867.2,663.8 L869.2,663.9 L871.2,662.4 L873.2,661.4 L875.2,659.8 L877.2,663.2 L879.2,664.1 L881.2,664.6 L883.2,662.6 L885.2,665.2 L887.3,666.3 L889.3,667.2 L891.3,665.6 L893.3,663.6 L895.3,662.2 L897.3,662.6 L899.3,663.7 L901.3,662.9 L903.3,662.3 L905.3,660.5 L907.3,660.0 L909.3,659.9 L911.3,662.2 L913.3,663.1 L915.3,663.3 L917.4,661.7 L919.4,660.5 L921.4,659.6 L923.4,659.8 L925.4,660.9 L927.4,662.0 L929.4,661.9 L931.4,661.5 L933.4,660.0 L935.4,658.0 L937.4,654.4 L939.4,653.7 L941.4,653.3 L943.4,651.7 L945.4,650.8 L947.4,649.4 L949.5,650.9 L951.5,654.5 L953.5,658.9 L955.5,660.2 L957.5,655.1 L959.5,656.0 L961.5,657.7 L963.5,660.1 L965.5,659.1 L967.5,659.5 L969.5,656.9 L971.5,657.9 L973.5,660.1 L975.5,664.5 L977.5,664.9 L979.6,661.7 L981.6,658.5 L983.6,657.6 L985.6,658.7 L987.6,657.3 L989.6,656.6 L991.6,655.0 L993.6,656.3 L995.6,658.2 L997.6,659.0 L999.6,659.6 L1001.6,656.3 L1003.6,654.5 L1005.6,652.5 L1007.6,650.9 L1009.7,652.6 L1011.7,655.1 L1013.7,658.4 L1015.7,658.3 L1017.7,657.2 L1019.7,655.2 L1021.7,655.0 L1023.7,652.7 L1025.7,653.8 L1027.7,651.6 L1029.7,650.5 L1031.7,649.4 L1033.7,653.9 L1035.7,656.5 L1037.7,659.6 L1039.8,656.7 L1041.8,655.8 L1043.8,655.4 L1045.8,657.2 L1047.8,657.4 L1049.8,659.4 L1051.8,661.0 L1053.8,662.2 L1055.8,660.3 L1057.8,658.6 L1059.8,656.6 L1061.8,657.0 L1063.8,659.0 L1065.8,660.1 L1067.8,658.9 L1069.8,656.2 L1071.9,655.2 L1073.9,654.7 L1075.9,654.6 L1077.9,653.4 L1079.9,654.8 L1081.9,654.7 L1083.9,658.2 L1085.9,656.0 L1087.9,656.0 L1089.9,653.8 L1091.9,654.9 L1093.9,655.1 L1095.9,654.4 L1097.9,653.2 L1099.9,653.9 L1102.0,652.5 L1104.0,653.7 L1106.0,653.3 L1108.0,654.6 L1110.0,655.7 L1112.0,655.7 L1114.0,648.8 L1116.0,644.9 L1116.0,669.7 Z" fill="#9a7d52"/><path d="M656.5,669.7 L656.5,659.5 L658.5,659.3 L660.5,659.4 L662.5,659.9 L664.5,659.1 L666.5,659.9 L668.5,659.4 L670.5,660.2 L672.6,659.3 L674.6,659.4 L676.6,659.1 L678.6,659.1 L680.6,659.4 L682.6,659.2 L684.6,659.3 L686.6,659.5 L688.6,660.0 L690.6,659.6 L692.6,659.1 L694.6,660.0 L696.6,659.0 L698.6,659.6 L700.6,659.8 L702.7,660.3 L704.7,659.8 L706.7,660.0 L708.7,659.4 L710.7,659.1 L712.7,659.1 L714.7,659.5 L716.7,659.8 L718.7,660.1 L720.7,659.4 L722.7,659.6 L724.7,659.4 L726.7,659.8 L728.7,659.1 L730.7,660.0 L732.7,659.9 L734.8,659.9 L736.8,659.5 L738.8,659.1 L740.8,660.0 L742.8,659.5 L744.8,659.3 L746.8,660.0 L748.8,660.2 L750.8,659.5 L752.8,659.2 L754.8,659.2 L756.8,659.3 L758.8,659.7 L760.8,659.7 L762.8,659.6 L764.9,659.1 L766.9,659.9 L768.9,659.9 L770.9,659.5 L772.9,659.0 L774.9,660.0 L776.9,660.2 L778.9,660.1 L780.9,659.6 L782.9,659.5 L784.9,660.0 L786.9,660.0 L788.9,659.5 L790.9,659.4 L792.9,659.4 L795.0,659.3 L797.0,660.2 L799.0,659.6 L801.0,659.2 L803.0,659.1 L805.0,659.9 L807.0,659.2 L809.0,659.4 L811.0,659.1 L813.0,660.0 L815.0,659.4 L817.0,659.2 L819.0,659.7 L821.0,660.1 L823.0,660.0 L825.1,660.1 L827.1,660.1 L829.1,660.1 L831.1,659.5 L833.1,660.1 L835.1,659.3 L837.1,659.3 L839.1,659.2 L841.1,659.2 L843.1,659.4 L845.1,659.1 L847.1,659.1 L849.1,659.5 L851.1,659.0 L853.1,660.1 L855.1,660.1 L857.2,660.2 L859.2,660.0 L861.2,659.8 L863.2,659.7 L865.2,659.4 L867.2,659.3 L869.2,660.2 L871.2,659.8 L873.2,659.6 L875.2,659.8 L877.2,660.1 L879.2,659.5 L881.2,659.8 L883.2,659.4 L885.2,659.6 L887.3,659.0 L889.3,659.1 L891.3,660.2 L893.3,659.3 L895.3,659.4 L897.3,659.9 L899.3,660.1 L901.3,659.7 L903.3,659.8 L905.3,659.3 L907.3,659.1 L909.3,659.8 L911.3,659.9 L913.3,659.6 L915.3,659.4 L917.4,659.3 L919.4,659.5 L921.4,659.9 L923.4,659.8 L925.4,659.2 L927.4,659.6 L929.4,660.2 L931.4,659.7 L933.4,660.0 L935.4,659.4 L937.4,660.2 L939.4,659.9 L941.4,660.1 L943.4,659.7 L945.4,659.0 L947.4,659.6 L949.5,659.8 L951.5,659.1 L953.5,660.1 L955.5,659.8 L957.5,659.2 L959.5,660.3 L961.5,659.3 L963.5,659.8 L965.5,660.2 L967.5,659.9 L969.5,659.7 L971.5,659.8 L973.5,659.6 L975.5,660.2 L977.5,660.0 L979.6,659.0 L981.6,659.7 L983.6,659.7 L985.6,660.2 L987.6,659.9 L989.6,659.1 L991.6,659.4 L993.6,659.6 L995.6,660.2 L997.6,659.8 L999.6,659.3 L1001.6,659.7 L1003.6,659.5 L1005.6,659.1 L1007.6,659.4 L1009.7,659.5 L1011.7,660.2 L1013.7,660.2 L1015.7,659.3 L1017.7,659.7 L1019.7,659.2 L1021.7,659.2 L1023.7,659.1 L1025.7,659.8 L1027.7,659.0 L1029.7,659.3 L1031.7,659.1 L1033.7,660.1 L1035.7,659.3 L1037.7,659.7 L1039.8,659.0 L1041.8,659.0 L1043.8,660.0 L1045.8,659.7 L1047.8,659.9 L1049.8,659.7 L1051.8,659.9 L1053.8,659.4 L1055.8,660.1 L1057.8,660.0 L1059.8,659.7 L1061.8,660.2 L1063.8,659.8 L1065.8,659.1 L1067.8,659.1 L1069.8,660.0 L1071.9,660.2 L1073.9,659.2 L1075.9,659.0 L1077.9,659.5 L1079.9,660.1 L1081.9,660.0 L1083.9,659.1 L1085.9,659.1 L1087.9,660.2 L1089.9,660.0 L1091.9,659.7 L1093.9,659.9 L1095.9,659.3 L1097.9,659.8 L1099.9,659.3 L1102.0,660.1 L1104.0,659.6 L1106.0,659.0 L1108.0,659.4 L1110.0,660.1 L1112.0,660.1 L1114.0,659.4 L1116.0,659.8 L1116.0,669.7 Z" fill="#ad6a6f"/><path d="M656.5,666.9 L658.5,666.7 L660.5,666.5 L662.5,665.7 L664.5,667.2 L666.5,666.5 L668.5,667.2 L670.5,666.6 L672.6,666.2 L674.6,667.4 L676.6,666.7 L678.6,666.3 L680.6,667.7 L682.6,666.1 L684.6,666.8 L686.6,666.7 L688.6,666.5 L690.6,666.1 L692.6,667.6 L694.6,666.7 L696.6,667.6 L698.6,666.9 L700.6,667.0 L702.7,667.6 L704.7,667.1 L706.7,666.8 L708.7,666.4 L710.7,665.8 L712.7,666.9 L714.7,666.6 L716.7,666.2 L718.7,665.8 L720.7,665.8 L722.7,665.7 L724.7,667.1 L726.7,667.4 L728.7,665.8 L730.7,667.5 L732.7,666.8 L734.8,666.2 L736.8,666.6 L738.8,666.9 L740.8,665.8 L742.8,667.1 L744.8,666.6 L746.8,666.0 L748.8,667.4 L750.8,667.0 L752.8,666.7 L754.8,666.5 L756.8,667.3 L758.8,666.8 L760.8,667.6 L762.8,667.5 L764.9,667.0 L766.9,667.4 L768.9,665.7 L770.9,667.2 L772.9,667.1 L774.9,666.1 L776.9,666.2 L778.9,667.2 L780.9,666.0 L782.9,666.4 L784.9,666.9 L786.9,666.4 L788.9,667.2 L790.9,667.2 L792.9,665.9 L795.0,666.8 L797.0,665.9 L799.0,667.3 L801.0,667.4 L803.0,667.6 L805.0,666.2 L807.0,666.6 L809.0,667.7 L811.0,667.6 L813.0,666.0 L815.0,666.7 L817.0,665.9 L819.0,667.6 L821.0,666.5 L823.0,667.4 L825.1,666.2 L827.1,666.5 L829.1,666.5 L831.1,667.2 L833.1,665.8 L835.1,667.5 L837.1,667.6 L839.1,666.3 L841.1,667.5 L843.1,667.6 L845.1,666.8 L847.1,666.4 L849.1,665.9 L851.1,666.2 L853.1,667.5 L855.1,666.4 L857.2,666.0 L859.2,667.4 L861.2,666.2 L863.2,667.2 L865.2,667.1 L867.2,667.7 L869.2,666.2 L871.2,666.6 L873.2,665.9 L875.2,666.7 L877.2,667.4 L879.2,667.3 L881.2,667.2 L883.2,665.8 L885.2,667.3 L887.3,667.5 L889.3,667.0 L891.3,667.5 L893.3,666.8 L895.3,666.4 L897.3,666.4 L899.3,667.3 L901.3,667.4 L903.3,666.7 L905.3,666.3 L907.3,666.8 L909.3,666.5 L911.3,665.8 L913.3,667.4 L915.3,667.1 L917.4,666.7 L919.4,666.6 L921.4,665.9 L923.4,666.6 L925.4,666.4 L927.4,666.8 L929.4,666.1 L931.4,666.0 L933.4,667.1 L935.4,667.5 L937.4,667.2 L939.4,667.0 L941.4,665.9 L943.4,667.2 L945.4,666.4 L947.4,666.4 L949.5,665.8 L951.5,667.5 L953.5,666.1 L955.5,667.0 L957.5,667.5 L959.5,666.4 L961.5,666.0 L963.5,666.5 L965.5,667.6 L967.5,665.7 L969.5,666.9 L971.5,666.4 L973.5,666.2 L975.5,667.2 L977.5,666.9 L979.6,667.0 L981.6,667.5 L983.6,667.6 L985.6,666.2 L987.6,666.9 L989.6,665.9 L991.6,667.6 L993.6,667.1 L995.6,667.3 L997.6,665.8 L999.6,666.1 L1001.6,665.9 L1003.6,666.7 L1005.6,667.5 L1007.6,666.8 L1009.7,667.2 L1011.7,667.6 L1013.7,666.5 L1015.7,667.1 L1017.7,667.5 L1019.7,666.7 L1021.7,665.8 L1023.7,665.8 L1025.7,666.7 L1027.7,667.5 L1029.7,666.1 L1031.7,667.5 L1033.7,666.6 L1035.7,667.5 L1037.7,665.7 L1039.8,666.6 L1041.8,666.8 L1043.8,667.1 L1045.8,666.6 L1047.8,665.7 L1049.8,666.8 L1051.8,667.3 L1053.8,666.6 L1055.8,665.8 L1057.8,666.9 L1059.8,666.4 L1061.8,665.8 L1063.8,667.0 L1065.8,666.1 L1067.8,666.6 L1069.8,667.4 L1071.9,667.6 L1073.9,665.8 L1075.9,666.7 L1077.9,666.8 L1079.9,665.8 L1081.9,666.5 L1083.9,666.7 L1085.9,667.1 L1087.9,666.2 L1089.9,667.2 L1091.9,666.7 L1093.9,666.2 L1095.9,666.5 L1097.9,667.4 L1099.9,667.3 L1102.0,666.3 L1104.0,666.2 L1106.0,667.5 L1108.0,665.7 L1110.0,667.4 L1112.0,667.3 L1114.0,667.5 L1116.0,666.8" fill="none" stroke="#e24d42" stroke-width="1"/><path d="M656.5,659.5 L658.5,659.3 L660.5,659.4 L662.5,659.9 L664.5,659.1 L666.5,659.9 L668.5,659.4 L670.5,660.2 L672.6,659.3 L674.6,659.4 L676.6,659.1 L678.6,659.1 L680.6,659.4 L682.6,659.2 L684.6,659.3 L686.6,659.5 L688.6,660.0 L690.6,659.6 L692.6,659.1 L694.6,660.0 L696.6,659.0 L698.6,659.6 L700.6,659.8 L702.7,660.3 L704.7,659.8 L706.7,660.0 L708.7,659.4 L710.7,659.1 L712.7,659.1 L714.7,659.5 L716.7,659.8 L718.7,660.1 L720.7,659.4 L722.7,659.6 L724.7,659.4 L726.7,659.8 L728.7,659.1 L730.7,660.0 L732.7,659.9 L734.8,659.9 L736.8,659.5 L738.8,659.1 L740.8,660.0 L742.8,659.5 L744.8,659.3 L746.8,660.0 L748.8,660.2 L750.8,659.5 L752.8,659.2 L754.8,659.2 L756.8,659.3 L758.8,659.7 L760.8,659.7 L762.8,659.6 L764.9,659.1 L766.9,659.9 L768.9,659.9 L770.9,659.5 L772.9,659.0 L774.9,660.0 L776.9,660.2 L778.9,660.1 L780.9,659.6 L782.9,659.5 L784.9,660.0 L786.9,660.0 L788.9,659.5 L790.9,659.4 L792.9,659.4 L795.0,659.3 L797.0,660.2 L799.0,659.6 L801.0,659.2 L803.0,659.1 L805.0,659.9 L807.0,659.2 L809.0,659.4 L811.0,659.1 L813.0,660.0 L815.0,659.4 L817.0,659.2 L819.0,659.7 L821.0,660.1 L823.0,660.0 L825.1,660.1 L827.1,660.1 L829.1,660.1 L831.1,659.5 L833.1,660.1 L835.1,659.3 L837.1,659.3 L839.1,659.2 L841.1,659.2 L843.1,659.4 L845.1,659.1 L847.1,659.1 L849.1,659.5 L851.1,659.0 L853.1,660.1 L855.1,660.1 L857.2,660.2 L859.2,660.0 L861.2,659.8 L863.2,659.7 L865.2,659.4 L867.2,659.3 L869.2,660.2 L871.2,659.8 L873.2,659.6 L875.2,659.8 L877.2,660.1 L879.2,659.5 L881.2,659.8 L883.2,659.4 L885.2,659.6 L887.3,659.0 L889.3,659.1 L891.3,660.2 L893.3,659.3 L895.3,659.4 L897.3,659.9 L899.3,660.1 L901.3,659.7 L903.3,659.8 L905.3,659.3 L907.3,659.1 L909.3,659.8 L911.3,659.9 L913.3,659.6 L915.3,659.4 L917.4,659.3 L919.4,659.5 L921.4,659.9 L923.4,659.8 L925.4,659.2 L927.4,659.6 L929.4,660.2 L931.4,659.7 L933.4,660.0 L935.4,659.4 L937.4,660.2 L939.4,659.9 L941.4,660.1 L943.4,659.7 L945.4,659.0 L947.4,659.6 L949.5,659.8 L951.5,659.1 L953.5,660.1 L955.5,659.8 L957.5,659.2 L959.5,660.3 L961.5,659.3 L963.5,659.8 L965.5,660.2 L967.5,659.9 L969.5,659.7 L971.5,659.8 L973.5,659.6 L975.5,660.2 L977.5,660.0 L979.6,659.0 L981.6,659.7 L983.6,659.7 L985.6,660.2 L987.6,659.9 L989.6,659.1 L991.6,659.4 L993.6,659.6 L995.6,660.2 L997.6,659.8 L999.6,659.3 L1001.6,659.7 L1003.6,659.5 L1005.6,659.1 L1007.6,659.4 L1009.7,659.5 L1011.7,660.2 L1013.7,660.2 L1015.7,659.3 L1017.7,659.7 L1019.7,659.2 L1021.7,659.2 L1023.7,659.1 L1025.7,659.8 L1027.7,659.0 L1029.7,659.3 L1031.7,659.1 L1033.7,660.1 L1035.7,659.3 L1037.7,659.7 L1039.8,659.0 L1041.8,659.0 L1043.8,660.0 L1045.8,659.7 L1047.8,659.9 L1049.8,659.7 L1051.8,659.9 L1053.8,659.4 L1055.8,660.1 L1057.8,660.0 L1059.8,659.7 L1061.8,660.2 L1063.8,659.8 L1065.8,659.1 L1067.8,659.1 L1069.8,660.0 L1071.9,660.2 L1073.9,659.2 L1075.9,659.0 L1077.9,659.5 L1079.9,660.1 L1081.9,660.0 L1083.9,659.1 L1085.9,659.1 L1087.9,660.2 L1089.9,660.0 L1091.9,659.7 L1093.9,659.9 L1095.9,659.3 L1097.9,659.8 L1099.9,659.3 L1102.0,660.1 L1104.0,659.6 L1106.0,659.0 L1108.0,659.4 L1110.0,660.1 L1112.0,660.1 L1114.0,659.4 L1116.0,659.8" fill="none" stroke="#c24bb0" stroke-width="1.3"/><path d="M656.5,666.6 L658.5,664.9 L660.5,664.6 L662.5,665.0 L664.5,667.2 L666.5,666.5 L668.5,661.1 L670.5,659.8 L672.6,666.0 L674.6,663.7 L676.6,662.2 L678.6,662.6 L680.6,663.8 L682.6,664.5 L684.6,664.0 L686.6,664.1 L688.6,663.1 L690.6,663.1 L692.6,663.0 L694.6,665.9 L696.6,665.1 L698.6,666.0 L700.6,662.4 L702.7,663.6 L704.7,663.6 L706.7,663.9 L708.7,664.6 L710.7,663.7 L712.7,664.7 L714.7,663.7 L716.7,667.0 L718.7,666.1 L720.7,656.0 L722.7,650.0 L724.7,649.3 L726.7,647.5 L728.7,644.9 L730.7,646.9 L732.7,650.5 L734.8,652.0 L736.8,650.6 L738.8,652.5 L740.8,652.5 L742.8,659.5 L744.8,662.5 L746.8,655.9 L748.8,650.2 L750.8,646.6 L752.8,647.5 L754.8,648.8 L756.8,649.8 L758.8,651.1 L760.8,651.3 L762.8,652.5 L764.9,652.7 L766.9,654.5 L768.9,656.4 L770.9,657.5 L772.9,653.1 L774.9,648.2 L776.9,656.0 L778.9,658.1 L780.9,653.4 L782.9,648.5 L784.9,644.4 L786.9,645.1 L788.9,644.8 L790.9,645.8 L792.9,646.7 L795.0,648.3 L797.0,654.8 L799.0,657.4 L801.0,658.8 L803.0,660.8 L805.0,662.2 L807.0,663.0 L809.0,660.7 L811.0,659.8 L813.0,659.1 L815.0,659.3 L817.0,659.5 L819.0,656.5 L821.0,655.7 L823.0,655.0 L825.1,654.5 L827.1,655.9 L829.1,659.5 L831.1,661.5 L833.1,661.4 L835.1,662.2 L837.1,661.3 L839.1,660.7 L841.1,659.1 L843.1,660.6 L845.1,661.0 L847.1,662.6 L849.1,662.1 L851.1,661.7 L853.1,660.9 L855.1,659.9 L857.2,659.4 L859.2,660.4 L861.2,660.8 L863.2,663.0 L865.2,662.4 L867.2,663.8 L869.2,663.9 L871.2,662.4 L873.2,661.4 L875.2,659.8 L877.2,663.2 L879.2,664.1 L881.2,664.6 L883.2,662.6 L885.2,665.2 L887.3,666.3 L889.3,667.2 L891.3,665.6 L893.3,663.6 L895.3,662.2 L897.3,662.6 L899.3,663.7 L901.3,662.9 L903.3,662.3 L905.3,660.5 L907.3,660.0 L909.3,659.9 L911.3,662.2 L913.3,663.1 L915.3,663.3 L917.4,661.7 L919.4,660.5 L921.4,659.6 L923.4,659.8 L925.4,660.9 L927.4,662.0 L929.4,661.9 L931.4,661.5 L933.4,660.0 L935.4,658.0 L937.4,654.4 L939.4,653.7 L941.4,653.3 L943.4,651.7 L945.4,650.8 L947.4,649.4 L949.5,650.9 L951.5,654.5 L953.5,658.9 L955.5,660.2 L957.5,655.1 L959.5,656.0 L961.5,657.7 L963.5,660.1 L965.5,659.1 L967.5,659.5 L969.5,656.9 L971.5,657.9 L973.5,660.1 L975.5,664.5 L977.5,664.9 L979.6,661.7 L981.6,658.5 L983.6,657.6 L985.6,658.7 L987.6,657.3 L989.6,656.6 L991.6,655.0 L993.6,656.3 L995.6,658.2 L997.6,659.0 L999.6,659.6 L1001.6,656.3 L1003.6,654.5 L1005.6,652.5 L1007.6,650.9 L1009.7,652.6 L1011.7,655.1 L1013.7,658.4 L1015.7,658.3 L1017.7,657.2 L1019.7,655.2 L1021.7,655.0 L1023.7,652.7 L1025.7,653.8 L1027.7,651.6 L1029.7,650.5 L1031.7,649.4 L1033.7,653.9 L1035.7,656.5 L1037.7,659.6 L1039.8,656.7 L1041.8,655.8 L1043.8,655.4 L1045.8,657.2 L1047.8,657.4 L1049.8,659.4 L1051.8,661.0 L1053.8,662.2 L1055.8,660.3 L1057.8,658.6 L1059.8,656.6 L1061.8,657.0 L1063.8,659.0 L1065.8,660.1 L1067.8,658.9 L1069.8,656.2 L1071.9,655.2 L1073.9,654.7 L1075.9,654.6 L1077.9,653.4 L1079.9,654.8 L1081.9,654.7 L1083.9,658.2 L1085.9,656.0 L1087.9,656.0 L1089.9,653.8 L1091.9,654.9 L1093.9,655.1 L1095.9,654.4 L1097.9,653.2 L1099.9,653.9 L1102.0,652.5 L1104.0,653.7 L1106.0,653.3 L1108.0,654.6 L1110.0,655.7 L1112.0,655.7 L1114.0,648.8 L1116.0,644.9" fill="none" stroke="#e0a52c" stroke-width="1.2"/><path d="M656.5,665.9 L658.5,664.6 L660.5,664.3 L662.5,661.4 L664.5,665.9 L666.5,662.4 L668.5,651.4 L670.5,643.0 L672.6,657.3 L674.6,655.9 L676.6,657.5 L678.6,657.4 L680.6,660.4 L682.6,660.3 L684.6,659.0 L686.6,657.3 L688.6,655.5 L690.6,656.4 L692.6,656.7 L694.6,659.4 L696.6,659.8 L698.6,660.3 L700.6,656.8 L702.7,655.9 L704.7,657.0 L706.7,656.4 L708.7,656.9 L710.7,655.3 L712.7,658.4 L714.7,657.1 L716.7,660.4 L718.7,656.8 L720.7,636.1 L722.7,626.7 L724.7,626.2 L726.7,625.8 L728.7,621.1 L730.7,625.0 L732.7,630.4 L734.8,628.7 L736.8,624.8 L738.8,627.3 L740.8,631.1 L742.8,647.6 L744.8,655.4 L746.8,642.9 L748.8,629.7 L750.8,622.3 L752.8,622.7 L754.8,626.4 L756.8,628.5 L758.8,631.0 L760.8,631.7 L762.8,633.8 L764.9,636.0 L766.9,639.2 L768.9,643.6 L770.9,648.2 L772.9,640.0 L774.9,630.0 L776.9,644.3 L778.9,646.3 L780.9,636.9 L782.9,626.2 L784.9,619.7 L786.9,621.5 L788.9,621.0 L790.9,624.0 L792.9,623.7 L795.0,626.6 L797.0,637.5 L799.0,645.7 L801.0,648.2 L803.0,651.2 L805.0,652.7 L807.0,652.6 L809.0,651.0 L811.0,648.6 L813.0,645.5 L815.0,643.9 L817.0,646.4 L819.0,643.5 L821.0,641.6 L823.0,639.6 L825.1,638.8 L827.1,644.7 L829.1,652.6 L831.1,656.5 L833.1,653.0 L835.1,654.0 L837.1,651.9 L839.1,651.8 L841.1,648.6 L843.1,649.6 L845.1,651.4 L847.1,654.0 L849.1,655.2 L851.1,653.3 L853.1,651.2 L855.1,649.2 L857.2,649.2 L859.2,651.3 L861.2,652.3 L863.2,654.6 L865.2,654.5 L867.2,657.0 L869.2,656.4 L871.2,654.3 L873.2,650.9 L875.2,649.5 L877.2,653.2 L879.2,654.0 L881.2,655.8 L883.2,651.4 L885.2,656.3 L887.3,657.5 L889.3,662.5 L891.3,658.4 L893.3,657.1 L895.3,655.9 L897.3,657.5 L899.3,658.0 L901.3,657.1 L903.3,655.3 L905.3,652.7 L907.3,651.4 L909.3,651.8 L911.3,654.7 L913.3,654.7 L915.3,655.2 L917.4,651.7 L919.4,651.9 L921.4,650.7 L923.4,653.2 L925.4,651.9 L927.4,652.4 L929.4,649.5 L931.4,650.1 L933.4,648.1 L935.4,644.5 L937.4,638.6 L939.4,634.1 L941.4,632.1 L943.4,628.6 L945.4,628.4 L947.4,625.9 L949.5,628.9 L951.5,636.6 L953.5,645.2 L955.5,650.4 L957.5,639.3 L959.5,643.4 L961.5,645.6 L963.5,652.7 L965.5,649.0 L967.5,647.6 L969.5,641.5 L971.5,644.8 L973.5,647.4 L975.5,652.3 L977.5,652.1 L979.6,648.0 L981.6,644.6 L983.6,644.1 L985.6,645.5 L987.6,646.8 L989.6,645.9 L991.6,645.8 L993.6,645.1 L995.6,645.0 L997.6,645.2 L999.6,645.3 L1001.6,642.0 L1003.6,637.7 L1005.6,635.2 L1007.6,630.1 L1009.7,633.3 L1011.7,637.5 L1013.7,644.7 L1015.7,644.3 L1017.7,642.9 L1019.7,642.4 L1021.7,642.4 L1023.7,637.8 L1025.7,635.8 L1027.7,630.8 L1029.7,628.0 L1031.7,628.1 L1033.7,636.7 L1035.7,642.4 L1037.7,648.3 L1039.8,645.5 L1041.8,644.1 L1043.8,643.7 L1045.8,645.2 L1047.8,644.6 L1049.8,646.9 L1051.8,649.6 L1053.8,649.3 L1055.8,644.5 L1057.8,640.4 L1059.8,638.7 L1061.8,641.5 L1063.8,645.6 L1065.8,647.9 L1067.8,645.7 L1069.8,643.3 L1071.9,641.3 L1073.9,639.8 L1075.9,637.8 L1077.9,636.8 L1079.9,637.3 L1081.9,637.9 L1083.9,640.8 L1085.9,640.6 L1087.9,641.7 L1089.9,637.4 L1091.9,636.5 L1093.9,633.6 L1095.9,632.7 L1097.9,630.4 L1099.9,632.6 L1102.0,633.5 L1104.0,635.9 L1106.0,634.6 L1108.0,635.9 L1110.0,639.3 L1112.0,642.2 L1114.0,628.5 L1116.0,620.8" fill="none" stroke="#ef843c" stroke-width="1.2"/><path d="M656.5,656.2 L658.5,652.6 L660.5,654.5 L662.5,652.4 L664.5,658.1 L666.5,652.1 L668.5,631.8 L670.5,616.9 L672.6,642.4 L674.6,643.7 L676.6,647.3 L678.6,647.0 L680.6,646.8 L682.6,648.0 L684.6,646.9 L686.6,646.6 L688.6,645.0 L690.6,645.8 L692.6,643.8 L694.6,644.6 L696.6,643.3 L698.6,643.6 L700.6,641.1 L702.7,642.5 L704.7,647.5 L706.7,646.8 L708.7,647.0 L710.7,646.5 L712.7,649.5 L714.7,646.4 L716.7,647.6 L718.7,644.2 L720.7,607.4 L722.7,589.7 L724.7,587.5 L726.7,589.1 L728.7,581.7 L730.7,587.5 L732.7,597.3 L734.8,596.3 L736.8,591.5 L738.8,592.5 L740.8,598.2 L742.8,626.9 L744.8,639.3 L746.8,618.3 L748.8,593.8 L750.8,583.1 L752.8,585.8 L754.8,592.5 L756.8,595.7 L758.8,595.8 L760.8,597.9 L762.8,604.6 L764.9,608.5 L766.9,611.8 L768.9,616.9 L770.9,623.8 L772.9,608.6 L774.9,591.8 L776.9,618.3 L778.9,624.1 L780.9,605.4 L782.9,585.3 L784.9,573.1 L786.9,577.2 L788.9,579.9 L790.9,584.2 L792.9,584.6 L795.0,587.6 L797.0,606.8 L799.0,622.6 L801.0,627.5 L803.0,631.5 L805.0,634.0 L807.0,635.3 L809.0,634.8 L811.0,632.5 L813.0,625.4 L815.0,621.8 L817.0,624.2 L819.0,617.9 L821.0,614.2 L823.0,605.5 L825.1,605.1 L827.1,617.0 L829.1,636.5 L831.1,644.0 L833.1,638.0 L835.1,637.5 L837.1,636.4 L839.1,640.4 L841.1,637.0 L843.1,634.8 L845.1,633.0 L847.1,635.6 L849.1,641.5 L851.1,640.9 L853.1,637.2 L855.1,628.1 L857.2,627.6 L859.2,630.3 L861.2,634.4 L863.2,639.8 L865.2,643.3 L867.2,647.9 L869.2,644.8 L871.2,639.4 L873.2,636.5 L875.2,635.2 L877.2,638.8 L879.2,639.8 L881.2,642.9 L883.2,644.0 L885.2,649.1 L887.3,650.7 L889.3,652.7 L891.3,646.8 L893.3,643.5 L895.3,639.1 L897.3,637.8 L899.3,639.6 L901.3,639.8 L903.3,639.0 L905.3,638.5 L907.3,638.4 L909.3,642.3 L911.3,642.7 L913.3,641.8 L915.3,640.4 L917.4,634.5 L919.4,635.7 L921.4,634.9 L923.4,640.4 L925.4,637.1 L927.4,634.2 L929.4,626.8 L931.4,628.4 L933.4,626.8 L935.4,620.2 L937.4,609.4 L939.4,600.3 L941.4,596.8 L943.4,591.3 L945.4,592.0 L947.4,591.4 L949.5,596.2 L951.5,612.4 L953.5,627.5 L955.5,631.9 L957.5,610.0 L959.5,613.1 L961.5,620.1 L963.5,633.0 L965.5,631.0 L967.5,629.3 L969.5,621.4 L971.5,624.1 L973.5,628.8 L975.5,634.8 L977.5,637.2 L979.6,629.8 L981.6,622.4 L983.6,618.9 L985.6,619.1 L987.6,624.9 L989.6,625.2 L991.6,628.5 L993.6,625.4 L995.6,622.7 L997.6,621.5 L999.6,622.6 L1001.6,616.3 L1003.6,607.8 L1005.6,604.7 L1007.6,599.9 L1009.7,607.5 L1011.7,613.3 L1013.7,623.8 L1015.7,625.2 L1017.7,620.9 L1019.7,619.7 L1021.7,617.9 L1023.7,613.1 L1025.7,608.9 L1027.7,599.4 L1029.7,590.6 L1031.7,590.1 L1033.7,604.0 L1035.7,615.5 L1037.7,629.0 L1039.8,623.9 L1041.8,620.1 L1043.8,617.0 L1045.8,621.7 L1047.8,623.1 L1049.8,625.6 L1051.8,630.6 L1053.8,626.8 L1055.8,621.8 L1057.8,611.9 L1059.8,608.5 L1061.8,611.0 L1063.8,620.1 L1065.8,624.5 L1067.8,622.3 L1069.8,618.2 L1071.9,616.5 L1073.9,614.0 L1075.9,611.7 L1077.9,608.4 L1079.9,608.8 L1081.9,608.2 L1083.9,611.1 L1085.9,611.4 L1087.9,612.0 L1089.9,606.6 L1091.9,603.6 L1093.9,599.9 L1095.9,600.2 L1097.9,597.7 L1099.9,600.1 L1102.0,602.5 L1104.0,606.8 L1106.0,605.0 L1108.0,606.0 L1110.0,612.9 L1112.0,619.6 L1114.0,596.0 L1116.0,581.6" fill="none" stroke="#6cc8dc" stroke-width="1.2"/></svg>
<div class="t" style="top:676.34px;font-size:12px;color:#d8d9da;left:121.00px;width:1200px;text-align:center;">19:55</div>
<div class="t" style="top:676.34px;font-size:12px;color:#d8d9da;left:196.80px;width:1200px;text-align:center;">20:00</div>
<div class="t" style="top:676.34px;font-size:12px;color:#d8d9da;left:273.70px;width:1200px;text-align:center;">20:05</div>
<div class="t" style="top:676.34px;font-size:12px;color:#d8d9da;left:351.00px;width:1200px;text-align:center;">20:10</div>
<div class="t" style="top:676.34px;font-size:12px;color:#d8d9da;left:427.00px;width:1200px;text-align:center;">20:15</div>
<div class="t" style="top:676.34px;font-size:12px;color:#d8d9da;left:503.00px;width:1200px;text-align:center;">20:20</div>
<div class="t" style="top:701.84px;font-size:12px;color:#33b1e5;font-weight:700;left:-195.00px;width:1200px;text-align:right;">max</div>
<div class="t" style="top:701.84px;font-size:12px;color:#33b1e5;font-weight:700;left:-144.00px;width:1200px;text-align:right;">avg</div>
<div class="t" style="top:701.84px;font-size:12px;color:#33b1e5;font-weight:700;left:-95.00px;width:1200px;text-align:right;">current</div>
<svg style="left:1105px;top:705px" width="8" height="5" viewBox="0 0 8 5"><path d="M0,0 L8,0 L4,4Z" fill="#33b1e5"/></svg>
<div class="b" style="left:643px;top:731.7px;width:13px;height:3.4px;background:#65c5db;border-radius:1px"></div>
<div class="t" style="top:724.84px;font-size:12px;color:#d8d9da;left:663.00px;">CPU Total</div>
<div class="t" style="top:724.84px;font-size:12px;color:#d8d9da;left:-195.00px;width:1200px;text-align:right;">38%</div>
<div class="t" style="top:724.84px;font-size:12px;color:#d8d9da;left:-144.00px;width:1200px;text-align:right;">18%</div>
<div class="t" style="top:724.84px;font-size:12px;color:#d8d9da;left:-87.00px;width:1200px;text-align:right;">36%</div>
<div class="b" style="left:643px;top:757.7px;width:13px;height:3.4px;background:#ef843c;border-radius:1px"></div>
<div class="t" style="top:750.84px;font-size:12px;color:#d8d9da;left:663.00px;">User</div>
<div class="t" style="top:750.84px;font-size:12px;color:#d8d9da;left:-195.00px;width:1200px;text-align:right;">22%</div>
<div class="t" style="top:750.84px;font-size:12px;color:#d8d9da;left:-144.00px;width:1200px;text-align:right;">9%</div>
<div class="t" style="top:750.84px;font-size:12px;color:#d8d9da;left:-87.00px;width:1200px;text-align:right;">20%</div>
<div class="b" style="left:1124px;top:701px;width:5px;height:34px;background:rgba(200,205,210,0.35);border-radius:3px"></div>
<div class="rh" style="left:1131.0px;top:763.6px"></div>
<div class="p" style="left:1150.0px;top:520px;width:218.4px;height:120.6px;background:#299c46"></div>
<div class="t" style="top:529.13px;font-size:13.2px;color:#ffffff;font-weight:700;left:659.20px;width:1200px;text-align:center;">CPU 1 Temp</div>
<svg style="left:0;top:0" width="1918" height="947"><path d="M1158.2,631.8 L1158.2,619.4 L1159.5,618.2 L1160.7,618.4 L1162.0,619.2 L1163.2,618.8 L1164.5,618.9 L1165.7,618.6 L1167.0,618.3 L1168.3,619.4 L1169.5,619.6 L1170.8,618.3 L1172.0,618.9 L1173.3,618.4 L1174.5,619.6 L1175.8,618.9 L1177.1,618.4 L1178.3,619.2 L1179.6,618.1 L1180.8,618.2 L1182.1,619.6 L1183.3,619.4 L1184.6,618.4 L1185.9,617.6 L1187.1,618.3 L1188.4,618.4 L1189.6,617.9 L1190.9,618.3 L1192.1,617.8 L1193.4,617.3 L1194.7,617.0 L1195.9,617.3 L1197.2,617.1 L1198.4,616.9 L1199.7,616.4 L1200.9,616.5 L1202.2,616.7 L1203.5,615.2 L1204.7,615.5 L1206.0,615.2 L1207.2,615.7 L1208.5,614.3 L1209.7,614.3 L1211.0,615.9 L1212.3,615.6 L1213.5,615.0 L1214.8,615.1 L1216.0,614.7 L1217.3,615.6 L1218.5,614.9 L1219.8,615.2 L1221.1,615.8 L1222.3,615.4 L1223.6,615.0 L1224.8,615.0 L1226.1,615.6 L1227.3,615.5 L1228.6,616.4 L1229.9,616.1 L1231.1,615.2 L1232.4,615.9 L1233.6,616.3 L1234.9,615.7 L1236.1,615.5 L1237.4,615.6 L1238.7,616.1 L1239.9,616.0 L1241.2,615.9 L1242.4,615.5 L1243.7,615.9 L1244.9,616.2 L1246.2,616.0 L1247.5,616.8 L1248.7,616.8 L1250.0,615.8 L1251.2,615.3 L1252.5,616.0 L1253.7,616.3 L1255.0,616.7 L1256.3,616.2 L1257.5,615.5 L1258.8,615.8 L1260.0,616.2 L1261.3,615.7 L1262.6,616.8 L1263.8,616.4 L1265.1,615.7 L1266.3,616.3 L1267.6,616.5 L1268.8,616.8 L1270.1,616.4 L1271.4,615.8 L1272.6,617.3 L1273.9,616.1 L1275.1,616.1 L1276.4,616.0 L1277.6,616.3 L1278.9,616.2 L1280.2,616.7 L1281.4,616.6 L1282.7,616.9 L1283.9,617.5 L1285.2,616.2 L1286.4,616.7 L1287.7,617.3 L1289.0,616.9 L1290.2,616.9 L1291.5,617.2 L1292.7,617.2 L1294.0,616.9 L1295.2,616.8 L1296.5,616.8 L1297.8,617.1 L1299.0,617.8 L1300.3,617.5 L1301.5,617.6 L1302.8,617.0 L1304.0,616.6 L1305.3,616.7 L1306.6,616.8 L1307.8,616.7 L1309.1,617.7 L1310.3,616.8 L1311.6,617.1 L1312.8,618.0 L1314.1,618.2 L1315.4,618.2 L1316.6,617.0 L1317.9,617.9 L1319.1,618.3 L1320.4,618.7 L1321.6,620.3 L1322.9,621.9 L1324.2,622.9 L1325.4,623.4 L1326.7,625.2 L1327.9,626.2 L1329.2,626.6 L1330.4,628.9 L1331.7,629.2 L1333.0,629.1 L1334.2,629.9 L1335.5,629.4 L1336.7,629.4 L1338.0,629.9 L1339.2,630.1 L1340.5,628.9 L1341.8,629.7 L1343.0,630.2 L1344.3,629.7 L1345.5,629.4 L1346.8,630.8 L1348.0,630.9 L1349.3,630.8 L1350.6,630.0 L1351.8,631.0 L1353.1,630.2 L1354.3,630.3 L1355.6,630.6 L1356.8,631.3 L1358.1,630.1 L1358.1,631.8 Z" fill="#6b7136"/><path d="M1158.2,619.4 L1159.5,618.2 L1160.7,618.4 L1162.0,619.2 L1163.2,618.8 L1164.5,618.9 L1165.7,618.6 L1167.0,618.3 L1168.3,619.4 L1169.5,619.6 L1170.8,618.3 L1172.0,618.9 L1173.3,618.4 L1174.5,619.6 L1175.8,618.9 L1177.1,618.4 L1178.3,619.2 L1179.6,618.1 L1180.8,618.2 L1182.1,619.6 L1183.3,619.4 L1184.6,618.4 L1185.9,617.6 L1187.1,618.3 L1188.4,618.4 L1189.6,617.9 L1190.9,618.3 L1192.1,617.8 L1193.4,617.3 L1194.7,617.0 L1195.9,617.3 L1197.2,617.1 L1198.4,616.9 L1199.7,616.4 L1200.9,616.5 L1202.2,616.7 L1203.5,615.2 L1204.7,615.5 L1206.0,615.2 L1207.2,615.7 L1208.5,614.3 L1209.7,614.3 L1211.0,615.9 L1212.3,615.6 L1213.5,615.0 L1214.8,615.1 L1216.0,614.7 L1217.3,615.6 L1218.5,614.9 L1219.8,615.2 L1221.1,615.8 L1222.3,615.4 L1223.6,615.0 L1224.8,615.0 L1226.1,615.6 L1227.3,615.5 L1228.6,616.4 L1229.9,616.1 L1231.1,615.2 L1232.4,615.9 L1233.6,616.3 L1234.9,615.7 L1236.1,615.5 L1237.4,615.6 L1238.7,616.1 L1239.9,616.0 L1241.2,615.9 L1242.4,615.5 L1243.7,615.9 L1244.9,616.2 L1246.2,616.0 L1247.5,616.8 L1248.7,616.8 L1250.0,615.8 L1251.2,615.3 L1252.5,616.0 L1253.7,616.3 L1255.0,616.7 L1256.3,616.2 L1257.5,615.5 L1258.8,615.8 L1260.0,616.2 L1261.3,615.7 L1262.6,616.8 L1263.8,616.4 L1265.1,615.7 L1266.3,616.3 L1267.6,616.5 L1268.8,616.8 L1270.1,616.4 L1271.4,615.8 L1272.6,617.3 L1273.9,616.1 L1275.1,616.1 L1276.4,616.0 L1277.6,616.3 L1278.9,616.2 L1280.2,616.7 L1281.4,616.6 L1282.7,616.9 L1283.9,617.5 L1285.2,616.2 L1286.4,616.7 L1287.7,617.3 L1289.0,616.9 L1290.2,616.9 L1291.5,617.2 L1292.7,617.2 L1294.0,616.9 L1295.2,616.8 L1296.5,616.8 L1297.8,617.1 L1299.0,617.8 L1300.3,617.5 L1301.5,617.6 L1302.8,617.0 L1304.0,616.6 L1305.3,616.7 L1306.6,616.8 L1307.8,616.7 L1309.1,617.7 L1310.3,616.8 L1311.6,617.1 L1312.8,618.0 L1314.1,618.2 L1315.4,618.2 L1316.6,617.0 L1317.9,617.9 L1319.1,618.3 L1320.4,618.7 L1321.6,620.3 L1322.9,621.9 L1324.2,622.9 L1325.4,623.4 L1326.7,625.2 L1327.9,626.2 L1329.2,626.6 L1330.4,628.9 L1331.7,629.2 L1333.0,629.1 L1334.2,629.9 L1335.5,629.4 L1336.7,629.4 L1338.0,629.9 L1339.2,630.1 L1340.5,628.9 L1341.8,629.7 L1343.0,630.2 L1344.3,629.7 L1345.5,629.4 L1346.8,630.8 L1348.0,630.9 L1349.3,630.8 L1350.6,630.0 L1351.8,631.0 L1353.1,630.2 L1354.3,630.3 L1355.6,630.6 L1356.8,631.3 L1358.1,630.1" fill="none" stroke="#8e4f22" stroke-width="1.3"/></svg>
<div class="t" style="top:575.52px;font-size:40.5px;color:#ffffff;font-weight:700;left:659.20px;width:1200px;text-align:center;">41.4 °C</div>
<div class="rh" style="left:1359.4px;top:631.6px"></div>
<div class="p" style="left:1150.0px;top:652px;width:218.4px;height:120.6px;background:#299c46"></div>
<div class="t" style="top:661.13px;font-size:13.2px;color:#ffffff;font-weight:700;left:659.20px;width:1200px;text-align:center;">CPU 2 Temp</div>
<svg style="left:0;top:0" width="1918" height="947"><path d="M1158.2,763.8 L1158.2,750.1 L1159.5,750.1 L1160.7,751.5 L1162.0,751.5 L1163.2,750.3 L1164.5,750.4 L1165.7,750.5 L1167.0,751.1 L1168.3,750.6 L1169.5,750.6 L1170.8,750.7 L1172.0,751.3 L1173.3,750.9 L1174.5,751.0 L1175.8,750.4 L1177.1,750.0 L1178.3,750.1 L1179.6,750.7 L1180.8,750.9 L1182.1,751.2 L1183.3,751.4 L1184.6,751.2 L1185.9,750.3 L1187.1,750.4 L1188.4,750.1 L1189.6,749.1 L1190.9,749.5 L1192.1,749.3 L1193.4,749.6 L1194.7,749.8 L1195.9,749.1 L1197.2,749.2 L1198.4,748.5 L1199.7,747.5 L1200.9,747.8 L1202.2,748.4 L1203.5,747.1 L1204.7,747.1 L1206.0,747.0 L1207.2,746.6 L1208.5,746.6 L1209.7,746.4 L1211.0,747.6 L1212.3,746.6 L1213.5,746.6 L1214.8,747.9 L1216.0,747.0 L1217.3,747.1 L1218.5,747.5 L1219.8,747.4 L1221.1,747.5 L1222.3,746.9 L1223.6,747.6 L1224.8,747.1 L1226.1,747.9 L1227.3,747.0 L1228.6,747.0 L1229.9,747.8 L1231.1,747.6 L1232.4,747.1 L1233.6,747.4 L1234.9,747.8 L1236.1,748.3 L1237.4,748.1 L1238.7,747.6 L1239.9,748.4 L1241.2,747.3 L1242.4,748.3 L1243.7,747.3 L1244.9,748.3 L1246.2,747.3 L1247.5,747.7 L1248.7,748.1 L1250.0,748.1 L1251.2,747.9 L1252.5,748.0 L1253.7,748.5 L1255.0,748.7 L1256.3,748.2 L1257.5,747.6 L1258.8,748.1 L1260.0,749.0 L1261.3,747.8 L1262.6,748.0 L1263.8,747.7 L1265.1,748.9 L1266.3,748.0 L1267.6,749.2 L1268.8,748.2 L1270.1,748.9 L1271.4,749.0 L1272.6,747.9 L1273.9,749.2 L1275.1,748.6 L1276.4,748.1 L1277.6,749.1 L1278.9,749.1 L1280.2,748.1 L1281.4,748.8 L1282.7,748.4 L1283.9,749.5 L1285.2,749.0 L1286.4,749.4 L1287.7,748.6 L1289.0,749.5 L1290.2,748.2 L1291.5,749.7 L1292.7,748.6 L1294.0,749.7 L1295.2,749.4 L1296.5,748.5 L1297.8,749.6 L1299.0,749.6 L1300.3,748.8 L1301.5,749.3 L1302.8,749.9 L1304.0,748.4 L1305.3,749.8 L1306.6,750.0 L1307.8,749.5 L1309.1,749.1 L1310.3,748.9 L1311.6,749.9 L1312.8,749.6 L1314.1,750.1 L1315.4,749.5 L1316.6,749.0 L1317.9,749.1 L1319.1,749.1 L1320.4,750.5 L1321.6,751.4 L1322.9,752.9 L1324.2,754.4 L1325.4,755.9 L1326.7,756.4 L1327.9,758.1 L1329.2,759.6 L1330.4,760.9 L1331.7,760.3 L1333.0,761.6 L1334.2,761.0 L1335.5,761.4 L1336.7,761.3 L1338.0,762.0 L1339.2,760.7 L1340.5,762.0 L1341.8,761.5 L1343.0,761.9 L1344.3,762.6 L1345.5,761.9 L1346.8,762.6 L1348.0,762.9 L1349.3,763.0 L1350.6,762.9 L1351.8,763.1 L1353.1,762.3 L1354.3,762.6 L1355.6,761.9 L1356.8,762.1 L1358.1,762.1 L1358.1,763.8 Z" fill="#6b7136"/><path d="M1158.2,750.1 L1159.5,750.1 L1160.7,751.5 L1162.0,751.5 L1163.2,750.3 L1164.5,750.4 L1165.7,750.5 L1167.0,751.1 L1168.3,750.6 L1169.5,750.6 L1170.8,750.7 L1172.0,751.3 L1173.3,750.9 L1174.5,751.0 L1175.8,750.4 L1177.1,750.0 L1178.3,750.1 L1179.6,750.7 L1180.8,750.9 L1182.1,751.2 L1183.3,751.4 L1184.6,751.2 L1185.9,750.3 L1187.1,750.4 L1188.4,750.1 L1189.6,749.1 L1190.9,749.5 L1192.1,749.3 L1193.4,749.6 L1194.7,749.8 L1195.9,749.1 L1197.2,749.2 L1198.4,748.5 L1199.7,747.5 L1200.9,747.8 L1202.2,748.4 L1203.5,747.1 L1204.7,747.1 L1206.0,747.0 L1207.2,746.6 L1208.5,746.6 L1209.7,746.4 L1211.0,747.6 L1212.3,746.6 L1213.5,746.6 L1214.8,747.9 L1216.0,747.0 L1217.3,747.1 L1218.5,747.5 L1219.8,747.4 L1221.1,747.5 L1222.3,746.9 L1223.6,747.6 L1224.8,747.1 L1226.1,747.9 L1227.3,747.0 L1228.6,747.0 L1229.9,747.8 L1231.1,747.6 L1232.4,747.1 L1233.6,747.4 L1234.9,747.8 L1236.1,748.3 L1237.4,748.1 L1238.7,747.6 L1239.9,748.4 L1241.2,747.3 L1242.4,748.3 L1243.7,747.3 L1244.9,748.3 L1246.2,747.3 L1247.5,747.7 L1248.7,748.1 L1250.0,748.1 L1251.2,747.9 L1252.5,748.0 L1253.7,748.5 L1255.0,748.7 L1256.3,748.2 L1257.5,747.6 L1258.8,748.1 L1260.0,749.0 L1261.3,747.8 L1262.6,748.0 L1263.8,747.7 L1265.1,748.9 L1266.3,748.0 L1267.6,749.2 L1268.8,748.2 L1270.1,748.9 L1271.4,749.0 L1272.6,747.9 L1273.9,749.2 L1275.1,748.6 L1276.4,748.1 L1277.6,749.1 L1278.9,749.1 L1280.2,748.1 L1281.4,748.8 L1282.7,748.4 L1283.9,749.5 L1285.2,749.0 L1286.4,749.4 L1287.7,748.6 L1289.0,749.5 L1290.2,748.2 L1291.5,749.7 L1292.7,748.6 L1294.0,749.7 L1295.2,749.4 L1296.5,748.5 L1297.8,749.6 L1299.0,749.6 L1300.3,748.8 L1301.5,749.3 L1302.8,749.9 L1304.0,748.4 L1305.3,749.8 L1306.6,750.0 L1307.8,749.5 L1309.1,749.1 L1310.3,748.9 L1311.6,749.9 L1312.8,749.6 L1314.1,750.1 L1315.4,749.5 L1316.6,749.0 L1317.9,749.1 L1319.1,749.1 L1320.4,750.5 L1321.6,751.4 L1322.9,752.9 L1324.2,754.4 L1325.4,755.9 L1326.7,756.4 L1327.9,758.1 L1329.2,759.6 L1330.4,760.9 L1331.7,760.3 L1333.0,761.6 L1334.2,761.0 L1335.5,761.4 L1336.7,761.3 L1338.0,762.0 L1339.2,760.7 L1340.5,762.0 L1341.8,761.5 L1343.0,761.9 L1344.3,762.6 L1345.5,761.9 L1346.8,762.6 L1348.0,762.9 L1349.3,763.0 L1350.6,762.9 L1351.8,763.1 L1353.1,762.3 L1354.3,762.6 L1355.6,761.9 L1356.8,762.1 L1358.1,762.1" fill="none" stroke="#8e4f22" stroke-width="1.3"/></svg>
<div class="t" style="top:707.52px;font-size:40.5px;color:#ffffff;font-weight:700;left:659.20px;width:1200px;text-align:center;">43.6 °C</div>
<div class="rh" style="left:1359.4px;top:763.6px"></div>
<div class="p" style="left:1378.4px;top:520px;width:523.0px;height:252.6px;background:rgba(0,0,0,0.27)"></div>
<div class="t" style="top:529.13px;font-size:13.2px;color:#ffffff;font-weight:700;left:1039.90px;width:1200px;text-align:center;">CPU 2</div>
<div class="t" style="left:1492.0px;top:529.87px;width:400px;text-align:right;font-size:12.2px;color:#33b1e5;-webkit-text-stroke:0.45px #33b1e5"><svg style="position:relative;display:inline-block;vertical-align:-1px;margin-right:3px" width="11" height="11" viewBox="0 0 12 12"><circle cx="6" cy="6" r="4.9" fill="none" stroke="#33b1e5" stroke-width="1.7"/><path d="M6,3 L6,6.6 L4,6.6" fill="none" stroke="#33b1e5" stroke-width="1.5"/></svg>Last 30 minutes</div>
<div class="b" style="left:1424px;top:568.3px;width:453.0px;height:1px;background:rgba(255,255,255,0.13)"></div>
<div class="b" style="left:1424px;top:618.6px;width:453.0px;height:1px;background:rgba(255,255,255,0.13)"></div>
<div class="b" style="left:1424px;top:668.9px;width:453.0px;height:1px;background:rgba(255,255,255,0.13)"></div>
<div class="b" style="left:1487.2px;top:568.8px;width:1px;height:100.6px;background:rgba(255,255,255,0.13)"></div>
<div class="b" style="left:1563.0px;top:568.8px;width:1px;height:100.6px;background:rgba(255,255,255,0.13)"></div>
<div class="b" style="left:1638.1px;top:568.8px;width:1px;height:100.6px;background:rgba(255,255,255,0.13)"></div>
<div class="b" style="left:1713.5px;top:568.8px;width:1px;height:100.6px;background:rgba(255,255,255,0.13)"></div>
<div class="b" style="left:1789.5px;top:568.8px;width:1px;height:100.6px;background:rgba(255,255,255,0.13)"></div>
<div class="b" style="left:1864.5px;top:568.8px;width:1px;height:100.6px;background:rgba(255,255,255,0.13)"></div>
<div class="t" style="top:562.94px;font-size:12px;color:#d8d9da;left:217.50px;width:1200px;text-align:right;">100%</div>
<div class="t" style="top:613.24px;font-size:12px;color:#d8d9da;left:217.50px;width:1200px;text-align:right;">50%</div>
<div class="t" style="top:663.54px;font-size:12px;color:#d8d9da;left:217.50px;width:1200px;text-align:right;">0%</div>
<svg style="left:0;top:0" width="1918" height="947"><path d="M1424.0,669.4 L1424.0,656.4 L1427.0,659.2 L1430.0,656.2 L1433.0,658.2 L1436.0,659.2 L1439.0,661.4 L1442.0,659.8 L1445.0,660.3 L1448.0,659.0 L1451.0,657.7 L1454.0,658.8 L1457.0,655.4 L1460.0,657.9 L1463.0,655.7 L1466.0,657.3 L1469.0,660.7 L1472.0,662.5 L1475.0,661.1 L1478.0,658.6 L1481.0,658.7 L1484.0,658.1 L1487.0,656.4 L1490.0,647.7 L1493.0,654.4 L1496.0,637.3 L1499.0,640.9 L1502.0,645.3 L1505.0,647.4 L1508.0,655.5 L1511.0,654.0 L1514.0,651.6 L1517.0,643.6 L1520.0,654.8 L1523.0,648.9 L1526.0,647.6 L1529.0,649.1 L1532.0,649.2 L1535.0,649.3 L1538.0,643.8 L1541.0,645.9 L1544.0,643.0 L1547.0,643.1 L1550.0,642.7 L1553.0,640.0 L1556.0,641.3 L1559.0,640.3 L1562.0,647.9 L1565.0,653.1 L1568.0,648.3 L1571.0,640.5 L1574.0,648.3 L1577.0,651.0 L1580.0,657.8 L1583.0,659.3 L1586.0,658.9 L1589.0,656.3 L1592.0,655.7 L1595.0,659.4 L1598.0,657.4 L1601.0,659.3 L1604.0,662.8 L1607.0,662.2 L1610.0,664.4 L1613.0,664.0 L1616.0,658.4 L1619.0,653.0 L1622.0,653.2 L1625.0,654.2 L1628.0,649.7 L1631.0,656.4 L1634.0,660.3 L1637.0,663.6 L1640.0,659.6 L1643.0,662.2 L1646.0,667.6 L1649.0,664.3 L1652.0,661.1 L1655.0,660.0 L1658.0,656.5 L1661.0,655.5 L1664.0,655.9 L1667.0,656.2 L1670.0,658.7 L1673.0,659.4 L1676.0,655.7 L1679.0,656.2 L1682.0,658.7 L1685.0,658.4 L1688.0,658.7 L1691.0,653.4 L1694.0,663.0 L1697.0,660.6 L1700.0,658.6 L1703.0,654.0 L1706.0,653.5 L1709.0,654.0 L1712.0,659.2 L1715.0,649.6 L1718.0,645.3 L1721.0,653.5 L1724.0,653.6 L1727.0,658.0 L1730.0,656.2 L1733.0,658.8 L1736.0,658.6 L1739.0,658.1 L1742.0,657.9 L1745.0,651.8 L1748.0,651.9 L1751.0,655.1 L1754.0,661.5 L1757.0,657.8 L1760.0,652.0 L1763.0,651.5 L1766.0,658.4 L1769.0,652.3 L1772.0,645.8 L1775.0,650.3 L1778.0,648.7 L1781.0,650.7 L1784.0,656.6 L1787.0,656.1 L1790.0,650.7 L1793.0,646.3 L1796.0,650.9 L1799.0,649.7 L1802.0,650.3 L1805.0,652.8 L1808.0,654.5 L1811.0,651.6 L1814.0,647.8 L1817.0,641.1 L1820.0,641.4 L1823.0,641.3 L1826.0,638.2 L1829.0,642.1 L1832.0,646.2 L1835.0,649.8 L1838.0,648.9 L1841.0,653.5 L1844.0,654.2 L1847.0,657.0 L1850.0,658.8 L1853.0,655.7 L1856.0,651.8 L1859.0,638.5 L1862.0,636.0 L1865.0,640.7 L1868.0,642.0 L1871.0,649.6 L1874.0,651.0 L1877.0,655.1 L1877.0,669.4 Z" fill="#553052"/><path d="M1424.0,669.4 L1424.0,651.3 L1427.0,652.8 L1430.0,650.2 L1433.0,655.7 L1436.0,656.7 L1439.0,661.5 L1442.0,659.8 L1445.0,656.4 L1448.0,652.3 L1451.0,656.5 L1454.0,650.5 L1457.0,646.1 L1460.0,651.7 L1463.0,644.9 L1466.0,654.0 L1469.0,658.8 L1472.0,662.5 L1475.0,658.1 L1478.0,658.0 L1481.0,660.2 L1484.0,648.3 L1487.0,645.7 L1490.0,626.5 L1493.0,630.0 L1496.0,625.2 L1499.0,623.0 L1502.0,647.6 L1505.0,651.6 L1508.0,655.5 L1511.0,652.7 L1514.0,642.2 L1517.0,642.8 L1520.0,654.8 L1523.0,651.2 L1526.0,654.8 L1529.0,640.6 L1532.0,648.9 L1535.0,631.8 L1538.0,628.7 L1541.0,623.2 L1544.0,622.0 L1547.0,635.6 L1550.0,642.7 L1553.0,640.0 L1556.0,639.3 L1559.0,627.6 L1562.0,650.4 L1565.0,647.2 L1568.0,650.6 L1571.0,640.1 L1574.0,638.7 L1577.0,647.6 L1580.0,662.0 L1583.0,664.7 L1586.0,660.4 L1589.0,655.6 L1592.0,655.7 L1595.0,658.8 L1598.0,649.9 L1601.0,656.9 L1604.0,662.6 L1607.0,659.2 L1610.0,665.1 L1613.0,664.9 L1616.0,652.2 L1619.0,644.3 L1622.0,650.9 L1625.0,644.4 L1628.0,649.7 L1631.0,651.9 L1634.0,656.4 L1637.0,661.0 L1640.0,654.6 L1643.0,644.9 L1646.0,668.4 L1649.0,666.0 L1652.0,655.9 L1655.0,660.0 L1658.0,652.3 L1661.0,654.6 L1664.0,647.1 L1667.0,646.7 L1670.0,657.4 L1673.0,659.1 L1676.0,640.2 L1679.0,652.7 L1682.0,654.1 L1685.0,660.8 L1688.0,655.9 L1691.0,652.4 L1694.0,635.4 L1697.0,649.6 L1700.0,657.7 L1703.0,654.1 L1706.0,640.5 L1709.0,640.5 L1712.0,661.5 L1715.0,647.7 L1718.0,634.3 L1721.0,648.1 L1724.0,648.0 L1727.0,655.6 L1730.0,652.7 L1733.0,657.1 L1736.0,658.6 L1739.0,659.1 L1742.0,660.8 L1745.0,651.8 L1748.0,645.2 L1751.0,661.6 L1754.0,657.9 L1757.0,661.5 L1760.0,645.1 L1763.0,637.0 L1766.0,664.7 L1769.0,649.8 L1772.0,645.8 L1775.0,643.1 L1778.0,639.8 L1781.0,638.4 L1784.0,663.3 L1787.0,664.1 L1790.0,648.4 L1793.0,632.9 L1796.0,648.9 L1799.0,645.8 L1802.0,646.7 L1805.0,654.3 L1808.0,649.3 L1811.0,637.4 L1814.0,647.8 L1817.0,629.0 L1820.0,627.7 L1823.0,592.7 L1826.0,629.0 L1829.0,649.0 L1832.0,644.3 L1835.0,654.5 L1838.0,659.6 L1841.0,663.5 L1844.0,661.0 L1847.0,657.0 L1850.0,660.2 L1853.0,658.8 L1856.0,654.0 L1859.0,652.1 L1862.0,636.6 L1865.0,633.1 L1868.0,624.5 L1871.0,637.5 L1874.0,638.6 L1877.0,658.1 L1877.0,669.4 Z" fill="#7eb26d" fill-opacity="0.035"/><path d="M1424.0,669.4 L1424.0,656.1 L1427.0,660.4 L1430.0,656.2 L1433.0,659.7 L1436.0,661.4 L1439.0,662.8 L1442.0,664.1 L1445.0,668.4 L1448.0,661.8 L1451.0,663.9 L1454.0,663.8 L1457.0,659.0 L1460.0,659.4 L1463.0,655.5 L1466.0,656.2 L1469.0,659.5 L1472.0,661.6 L1475.0,662.1 L1478.0,662.3 L1481.0,655.7 L1484.0,657.4 L1487.0,661.5 L1490.0,644.2 L1493.0,655.9 L1496.0,637.3 L1499.0,611.1 L1502.0,640.2 L1505.0,655.1 L1508.0,662.3 L1511.0,653.2 L1514.0,653.1 L1517.0,643.6 L1520.0,651.3 L1523.0,644.5 L1526.0,635.7 L1529.0,634.4 L1532.0,642.5 L1535.0,651.6 L1538.0,651.7 L1541.0,649.1 L1544.0,628.9 L1547.0,639.4 L1550.0,638.4 L1553.0,645.0 L1556.0,640.1 L1559.0,630.0 L1562.0,646.5 L1565.0,649.4 L1568.0,643.7 L1571.0,640.5 L1574.0,644.4 L1577.0,637.5 L1580.0,658.5 L1583.0,657.9 L1586.0,656.9 L1589.0,658.9 L1592.0,655.5 L1595.0,659.8 L1598.0,657.4 L1601.0,658.5 L1604.0,665.6 L1607.0,662.9 L1610.0,648.7 L1613.0,663.1 L1616.0,657.0 L1619.0,652.1 L1622.0,653.8 L1625.0,655.2 L1628.0,659.5 L1631.0,658.1 L1634.0,657.5 L1637.0,665.4 L1640.0,656.8 L1643.0,665.5 L1646.0,668.0 L1649.0,665.5 L1652.0,661.1 L1655.0,656.0 L1658.0,658.4 L1661.0,655.0 L1664.0,655.8 L1667.0,654.0 L1670.0,659.1 L1673.0,656.7 L1676.0,647.3 L1679.0,654.8 L1682.0,653.1 L1685.0,662.8 L1688.0,657.0 L1691.0,652.1 L1694.0,658.8 L1697.0,660.3 L1700.0,654.9 L1703.0,658.5 L1706.0,653.5 L1709.0,666.1 L1712.0,659.6 L1715.0,650.2 L1718.0,645.3 L1721.0,651.6 L1724.0,648.0 L1727.0,657.3 L1730.0,654.1 L1733.0,655.7 L1736.0,660.5 L1739.0,657.2 L1742.0,662.2 L1745.0,664.2 L1748.0,655.0 L1751.0,664.8 L1754.0,649.6 L1757.0,654.1 L1760.0,644.1 L1763.0,652.0 L1766.0,645.1 L1769.0,643.1 L1772.0,645.7 L1775.0,645.2 L1778.0,650.8 L1781.0,647.4 L1784.0,657.1 L1787.0,650.5 L1790.0,652.2 L1793.0,641.5 L1796.0,650.0 L1799.0,653.0 L1802.0,657.2 L1805.0,655.6 L1808.0,659.5 L1811.0,654.2 L1814.0,665.1 L1817.0,626.1 L1820.0,643.1 L1823.0,644.3 L1826.0,634.5 L1829.0,633.3 L1832.0,646.2 L1835.0,653.7 L1838.0,649.6 L1841.0,657.9 L1844.0,654.2 L1847.0,662.4 L1850.0,660.1 L1853.0,653.1 L1856.0,634.0 L1859.0,636.2 L1862.0,616.9 L1865.0,622.8 L1868.0,621.3 L1871.0,655.7 L1874.0,640.6 L1877.0,651.9 L1877.0,669.4 Z" fill="#eab839" fill-opacity="0.035"/><path d="M1424.0,669.4 L1424.0,648.5 L1427.0,651.7 L1430.0,650.0 L1433.0,658.2 L1436.0,660.1 L1439.0,661.6 L1442.0,665.2 L1445.0,655.2 L1448.0,650.9 L1451.0,658.4 L1454.0,657.9 L1457.0,659.9 L1460.0,646.9 L1463.0,655.3 L1466.0,653.5 L1469.0,653.1 L1472.0,662.5 L1475.0,654.2 L1478.0,658.3 L1481.0,657.4 L1484.0,656.4 L1487.0,658.9 L1490.0,656.3 L1493.0,651.6 L1496.0,645.5 L1499.0,651.4 L1502.0,653.9 L1505.0,641.1 L1508.0,647.2 L1511.0,643.8 L1514.0,647.9 L1517.0,631.2 L1520.0,651.1 L1523.0,639.3 L1526.0,630.8 L1529.0,647.0 L1532.0,649.2 L1535.0,650.7 L1538.0,632.3 L1541.0,649.5 L1544.0,635.7 L1547.0,648.7 L1550.0,626.9 L1553.0,637.9 L1556.0,644.9 L1559.0,640.3 L1562.0,644.3 L1565.0,631.9 L1568.0,619.1 L1571.0,619.2 L1574.0,645.5 L1577.0,642.5 L1580.0,641.9 L1583.0,652.6 L1586.0,657.5 L1589.0,659.7 L1592.0,655.7 L1595.0,656.5 L1598.0,653.4 L1601.0,646.0 L1604.0,658.3 L1607.0,658.9 L1610.0,661.6 L1613.0,663.6 L1616.0,658.4 L1619.0,645.5 L1622.0,643.1 L1625.0,644.3 L1628.0,642.9 L1631.0,647.0 L1634.0,649.3 L1637.0,663.1 L1640.0,658.0 L1643.0,649.7 L1646.0,666.4 L1649.0,662.6 L1652.0,658.2 L1655.0,659.8 L1658.0,656.4 L1661.0,633.3 L1664.0,649.4 L1667.0,660.7 L1670.0,660.5 L1673.0,659.4 L1676.0,645.4 L1679.0,656.2 L1682.0,644.3 L1685.0,644.9 L1688.0,645.5 L1691.0,652.1 L1694.0,663.0 L1697.0,658.6 L1700.0,650.5 L1703.0,649.9 L1706.0,645.9 L1709.0,653.0 L1712.0,651.1 L1715.0,633.9 L1718.0,626.5 L1721.0,652.2 L1724.0,651.2 L1727.0,659.2 L1730.0,656.2 L1733.0,658.8 L1736.0,656.4 L1739.0,650.2 L1742.0,657.1 L1745.0,645.3 L1748.0,641.6 L1751.0,650.5 L1754.0,644.9 L1757.0,655.3 L1760.0,647.5 L1763.0,658.7 L1766.0,646.7 L1769.0,639.7 L1772.0,625.9 L1775.0,646.0 L1778.0,647.5 L1781.0,650.7 L1784.0,657.3 L1787.0,654.0 L1790.0,651.2 L1793.0,637.8 L1796.0,648.1 L1799.0,646.6 L1802.0,641.6 L1805.0,649.6 L1808.0,656.6 L1811.0,653.6 L1814.0,644.7 L1817.0,628.2 L1820.0,641.4 L1823.0,627.0 L1826.0,629.3 L1829.0,621.2 L1832.0,643.5 L1835.0,649.1 L1838.0,646.2 L1841.0,653.4 L1844.0,651.3 L1847.0,655.8 L1850.0,663.1 L1853.0,657.1 L1856.0,649.2 L1859.0,638.5 L1862.0,640.8 L1865.0,643.5 L1868.0,642.0 L1871.0,649.6 L1874.0,652.0 L1877.0,652.0 L1877.0,669.4 Z" fill="#6ed0e0" fill-opacity="0.035"/><path d="M1424.0,669.4 L1424.0,638.1 L1427.0,657.9 L1430.0,657.7 L1433.0,658.2 L1436.0,656.0 L1439.0,658.4 L1442.0,659.9 L1445.0,660.1 L1448.0,658.1 L1451.0,654.2 L1454.0,655.9 L1457.0,646.2 L1460.0,646.7 L1463.0,647.0 L1466.0,656.0 L1469.0,663.9 L1472.0,661.8 L1475.0,655.2 L1478.0,651.2 L1481.0,653.0 L1484.0,653.2 L1487.0,655.2 L1490.0,638.7 L1493.0,655.8 L1496.0,640.0 L1499.0,636.5 L1502.0,647.9 L1505.0,626.0 L1508.0,657.1 L1511.0,653.6 L1514.0,655.3 L1517.0,640.4 L1520.0,644.3 L1523.0,650.4 L1526.0,634.5 L1529.0,648.6 L1532.0,635.2 L1535.0,649.3 L1538.0,640.6 L1541.0,626.6 L1544.0,630.0 L1547.0,619.9 L1550.0,660.5 L1553.0,639.2 L1556.0,629.0 L1559.0,596.0 L1562.0,632.7 L1565.0,655.4 L1568.0,645.5 L1571.0,636.0 L1574.0,647.8 L1577.0,641.9 L1580.0,655.0 L1583.0,654.8 L1586.0,651.8 L1589.0,650.9 L1592.0,652.9 L1595.0,662.5 L1598.0,654.8 L1601.0,659.4 L1604.0,660.6 L1607.0,662.2 L1610.0,666.4 L1613.0,660.6 L1616.0,661.1 L1619.0,650.2 L1622.0,638.5 L1625.0,648.0 L1628.0,645.2 L1631.0,646.2 L1634.0,661.1 L1637.0,663.4 L1640.0,659.6 L1643.0,666.5 L1646.0,667.6 L1649.0,663.4 L1652.0,654.1 L1655.0,659.3 L1658.0,659.7 L1661.0,653.4 L1664.0,655.2 L1667.0,658.2 L1670.0,656.4 L1673.0,660.6 L1676.0,655.7 L1679.0,652.4 L1682.0,656.9 L1685.0,656.2 L1688.0,658.8 L1691.0,653.4 L1694.0,658.8 L1697.0,656.9 L1700.0,662.7 L1703.0,645.7 L1706.0,655.1 L1709.0,664.0 L1712.0,644.8 L1715.0,637.3 L1718.0,612.4 L1721.0,651.1 L1724.0,658.0 L1727.0,659.3 L1730.0,650.7 L1733.0,658.0 L1736.0,650.5 L1739.0,660.0 L1742.0,660.9 L1745.0,649.6 L1748.0,649.6 L1751.0,653.8 L1754.0,659.6 L1757.0,656.9 L1760.0,646.9 L1763.0,666.5 L1766.0,661.1 L1769.0,644.6 L1772.0,643.5 L1775.0,649.3 L1778.0,634.1 L1781.0,653.4 L1784.0,653.3 L1787.0,648.5 L1790.0,644.8 L1793.0,632.5 L1796.0,651.9 L1799.0,620.7 L1802.0,655.7 L1805.0,668.2 L1808.0,663.4 L1811.0,651.6 L1814.0,646.0 L1817.0,641.1 L1820.0,618.7 L1823.0,624.5 L1826.0,640.1 L1829.0,623.0 L1832.0,636.9 L1835.0,636.1 L1838.0,638.2 L1841.0,652.1 L1844.0,645.4 L1847.0,646.6 L1850.0,653.9 L1853.0,647.9 L1856.0,651.6 L1859.0,633.4 L1862.0,637.6 L1865.0,596.6 L1868.0,636.2 L1871.0,644.9 L1874.0,646.1 L1877.0,655.1 L1877.0,669.4 Z" fill="#ef843c" fill-opacity="0.035"/><path d="M1424.0,669.4 L1424.0,656.4 L1427.0,652.2 L1430.0,653.1 L1433.0,654.3 L1436.0,655.1 L1439.0,659.3 L1442.0,657.4 L1445.0,657.9 L1448.0,659.7 L1451.0,654.5 L1454.0,663.2 L1457.0,655.4 L1460.0,653.7 L1463.0,655.7 L1466.0,662.4 L1469.0,660.7 L1472.0,662.1 L1475.0,657.5 L1478.0,663.3 L1481.0,658.4 L1484.0,656.7 L1487.0,662.3 L1490.0,657.4 L1493.0,650.8 L1496.0,633.4 L1499.0,642.9 L1502.0,645.3 L1505.0,628.8 L1508.0,651.2 L1511.0,648.9 L1514.0,650.2 L1517.0,646.2 L1520.0,656.7 L1523.0,646.1 L1526.0,645.0 L1529.0,654.1 L1532.0,647.0 L1535.0,646.8 L1538.0,653.2 L1541.0,617.1 L1544.0,620.8 L1547.0,637.1 L1550.0,646.2 L1553.0,660.9 L1556.0,635.6 L1559.0,638.0 L1562.0,640.4 L1565.0,644.3 L1568.0,639.7 L1571.0,630.8 L1574.0,641.2 L1577.0,639.1 L1580.0,652.2 L1583.0,657.9 L1586.0,660.7 L1589.0,634.5 L1592.0,650.4 L1595.0,658.8 L1598.0,658.9 L1601.0,662.1 L1604.0,663.5 L1607.0,658.1 L1610.0,666.3 L1613.0,668.1 L1616.0,660.9 L1619.0,653.3 L1622.0,659.6 L1625.0,656.4 L1628.0,648.2 L1631.0,645.4 L1634.0,657.1 L1637.0,661.4 L1640.0,654.7 L1643.0,662.3 L1646.0,666.9 L1649.0,660.1 L1652.0,653.3 L1655.0,658.4 L1658.0,650.7 L1661.0,650.6 L1664.0,649.6 L1667.0,648.9 L1670.0,660.2 L1673.0,655.1 L1676.0,640.5 L1679.0,658.5 L1682.0,651.9 L1685.0,651.9 L1688.0,660.6 L1691.0,654.9 L1694.0,665.3 L1697.0,660.9 L1700.0,657.0 L1703.0,646.1 L1706.0,639.1 L1709.0,651.7 L1712.0,648.9 L1715.0,638.1 L1718.0,649.3 L1721.0,634.6 L1724.0,654.9 L1727.0,652.3 L1730.0,651.9 L1733.0,656.2 L1736.0,657.5 L1739.0,655.6 L1742.0,653.9 L1745.0,648.5 L1748.0,641.0 L1751.0,649.0 L1754.0,659.0 L1757.0,661.1 L1760.0,659.1 L1763.0,655.0 L1766.0,659.0 L1769.0,641.7 L1772.0,640.9 L1775.0,653.0 L1778.0,648.5 L1781.0,652.7 L1784.0,654.8 L1787.0,643.2 L1790.0,645.0 L1793.0,660.8 L1796.0,661.1 L1799.0,646.2 L1802.0,639.8 L1805.0,641.9 L1808.0,645.8 L1811.0,661.0 L1814.0,632.1 L1817.0,628.4 L1820.0,631.2 L1823.0,617.2 L1826.0,639.4 L1829.0,633.6 L1832.0,638.6 L1835.0,651.0 L1838.0,646.8 L1841.0,644.2 L1844.0,648.2 L1847.0,649.0 L1850.0,652.3 L1853.0,655.7 L1856.0,658.9 L1859.0,648.3 L1862.0,629.7 L1865.0,632.7 L1868.0,649.0 L1871.0,651.5 L1874.0,657.3 L1877.0,658.9 L1877.0,669.4 Z" fill="#e24d42" fill-opacity="0.035"/><path d="M1424.0,669.4 L1424.0,659.6 L1427.0,656.1 L1430.0,658.3 L1433.0,662.0 L1436.0,656.0 L1439.0,657.8 L1442.0,655.3 L1445.0,660.3 L1448.0,658.8 L1451.0,649.2 L1454.0,656.8 L1457.0,659.1 L1460.0,655.6 L1463.0,650.0 L1466.0,658.5 L1469.0,656.0 L1472.0,659.6 L1475.0,655.2 L1478.0,653.5 L1481.0,651.3 L1484.0,658.1 L1487.0,648.1 L1490.0,645.3 L1493.0,653.5 L1496.0,626.1 L1499.0,635.2 L1502.0,641.1 L1505.0,645.8 L1508.0,651.0 L1511.0,636.4 L1514.0,641.7 L1517.0,637.6 L1520.0,657.5 L1523.0,650.7 L1526.0,642.3 L1529.0,634.9 L1532.0,655.4 L1535.0,661.0 L1538.0,643.8 L1541.0,651.3 L1544.0,646.3 L1547.0,640.7 L1550.0,643.5 L1553.0,638.4 L1556.0,639.9 L1559.0,652.2 L1562.0,652.1 L1565.0,646.7 L1568.0,651.3 L1571.0,653.7 L1574.0,652.7 L1577.0,651.0 L1580.0,646.5 L1583.0,643.3 L1586.0,645.0 L1589.0,651.5 L1592.0,655.9 L1595.0,662.2 L1598.0,657.3 L1601.0,658.2 L1604.0,664.6 L1607.0,657.0 L1610.0,660.9 L1613.0,663.0 L1616.0,658.0 L1619.0,655.9 L1622.0,651.5 L1625.0,654.2 L1628.0,641.7 L1631.0,652.5 L1634.0,658.3 L1637.0,662.9 L1640.0,656.4 L1643.0,660.7 L1646.0,667.2 L1649.0,661.1 L1652.0,657.4 L1655.0,640.5 L1658.0,653.8 L1661.0,650.5 L1664.0,652.5 L1667.0,658.7 L1670.0,651.6 L1673.0,660.3 L1676.0,652.6 L1679.0,648.8 L1682.0,658.8 L1685.0,661.6 L1688.0,659.2 L1691.0,650.1 L1694.0,660.8 L1697.0,661.8 L1700.0,665.5 L1703.0,654.0 L1706.0,653.5 L1709.0,659.6 L1712.0,648.4 L1715.0,649.6 L1718.0,639.0 L1721.0,651.9 L1724.0,652.6 L1727.0,656.9 L1730.0,653.0 L1733.0,657.5 L1736.0,653.7 L1739.0,656.1 L1742.0,650.3 L1745.0,659.6 L1748.0,653.2 L1751.0,654.2 L1754.0,663.0 L1757.0,656.1 L1760.0,639.3 L1763.0,644.7 L1766.0,648.2 L1769.0,642.5 L1772.0,648.6 L1775.0,655.9 L1778.0,651.9 L1781.0,651.6 L1784.0,658.5 L1787.0,648.8 L1790.0,647.3 L1793.0,601.9 L1796.0,648.6 L1799.0,655.6 L1802.0,650.3 L1805.0,651.1 L1808.0,649.6 L1811.0,636.7 L1814.0,652.7 L1817.0,648.2 L1820.0,634.3 L1823.0,606.5 L1826.0,628.2 L1829.0,640.3 L1832.0,645.2 L1835.0,649.2 L1838.0,660.3 L1841.0,659.0 L1844.0,652.9 L1847.0,659.2 L1850.0,656.9 L1853.0,650.7 L1856.0,649.3 L1859.0,634.4 L1862.0,632.6 L1865.0,636.7 L1868.0,648.2 L1871.0,650.0 L1874.0,644.2 L1877.0,653.4 L1877.0,669.4 Z" fill="#1f78c1" fill-opacity="0.035"/><path d="M1424.0,669.4 L1424.0,648.6 L1427.0,658.0 L1430.0,651.4 L1433.0,655.6 L1436.0,658.3 L1439.0,660.7 L1442.0,658.6 L1445.0,656.9 L1448.0,654.8 L1451.0,655.9 L1454.0,650.7 L1457.0,650.8 L1460.0,653.2 L1463.0,657.3 L1466.0,663.4 L1469.0,662.2 L1472.0,661.2 L1475.0,654.2 L1478.0,643.6 L1481.0,664.3 L1484.0,661.7 L1487.0,645.9 L1490.0,639.0 L1493.0,638.6 L1496.0,620.8 L1499.0,634.2 L1502.0,631.5 L1505.0,647.4 L1508.0,656.7 L1511.0,659.6 L1514.0,653.8 L1517.0,649.6 L1520.0,650.7 L1523.0,641.6 L1526.0,653.7 L1529.0,649.1 L1532.0,645.2 L1535.0,645.6 L1538.0,653.7 L1541.0,647.3 L1544.0,636.9 L1547.0,643.7 L1550.0,631.4 L1553.0,638.6 L1556.0,622.5 L1559.0,635.8 L1562.0,647.9 L1565.0,648.9 L1568.0,657.2 L1571.0,639.4 L1574.0,645.6 L1577.0,649.6 L1580.0,659.9 L1583.0,659.9 L1586.0,653.8 L1589.0,649.3 L1592.0,650.9 L1595.0,658.6 L1598.0,650.8 L1601.0,658.7 L1604.0,664.7 L1607.0,662.2 L1610.0,663.8 L1613.0,659.7 L1616.0,656.3 L1619.0,668.4 L1622.0,662.1 L1625.0,662.8 L1628.0,644.2 L1631.0,651.1 L1634.0,661.1 L1637.0,662.4 L1640.0,652.3 L1643.0,660.4 L1646.0,667.1 L1649.0,665.0 L1652.0,656.5 L1655.0,656.6 L1658.0,658.6 L1661.0,658.4 L1664.0,655.9 L1667.0,652.4 L1670.0,657.3 L1673.0,659.4 L1676.0,667.3 L1679.0,650.4 L1682.0,659.3 L1685.0,646.2 L1688.0,658.0 L1691.0,652.5 L1694.0,660.9 L1697.0,656.8 L1700.0,651.9 L1703.0,653.1 L1706.0,647.0 L1709.0,658.6 L1712.0,657.1 L1715.0,656.6 L1718.0,645.3 L1721.0,652.7 L1724.0,653.6 L1727.0,655.7 L1730.0,650.6 L1733.0,656.5 L1736.0,655.0 L1739.0,658.7 L1742.0,644.1 L1745.0,643.7 L1748.0,652.2 L1751.0,655.1 L1754.0,661.5 L1757.0,657.5 L1760.0,657.7 L1763.0,649.2 L1766.0,658.5 L1769.0,647.2 L1772.0,641.8 L1775.0,650.4 L1778.0,644.7 L1781.0,645.3 L1784.0,649.6 L1787.0,654.0 L1790.0,637.2 L1793.0,647.1 L1796.0,650.2 L1799.0,647.1 L1802.0,650.2 L1805.0,652.8 L1808.0,649.0 L1811.0,618.3 L1814.0,649.4 L1817.0,643.5 L1820.0,649.2 L1823.0,644.2 L1826.0,638.2 L1829.0,642.6 L1832.0,640.1 L1835.0,638.4 L1838.0,645.5 L1841.0,650.8 L1844.0,643.2 L1847.0,653.0 L1850.0,632.5 L1853.0,643.1 L1856.0,651.8 L1859.0,629.8 L1862.0,611.4 L1865.0,613.6 L1868.0,612.1 L1871.0,644.0 L1874.0,650.9 L1877.0,649.5 L1877.0,669.4 Z" fill="#447ebc" fill-opacity="0.035"/><path d="M1424.0,669.4 L1424.0,658.8 L1427.0,663.5 L1430.0,660.3 L1433.0,656.7 L1436.0,659.5 L1439.0,655.9 L1442.0,656.9 L1445.0,654.7 L1448.0,646.8 L1451.0,639.7 L1454.0,639.7 L1457.0,642.5 L1460.0,650.1 L1463.0,655.7 L1466.0,657.0 L1469.0,650.5 L1472.0,660.9 L1475.0,661.7 L1478.0,655.9 L1481.0,650.1 L1484.0,662.1 L1487.0,652.3 L1490.0,645.7 L1493.0,657.2 L1496.0,627.7 L1499.0,644.7 L1502.0,630.0 L1505.0,642.3 L1508.0,642.2 L1511.0,652.2 L1514.0,638.0 L1517.0,617.8 L1520.0,639.4 L1523.0,639.6 L1526.0,636.7 L1529.0,660.7 L1532.0,667.2 L1535.0,648.5 L1538.0,628.0 L1541.0,611.7 L1544.0,625.1 L1547.0,634.1 L1550.0,642.0 L1553.0,620.6 L1556.0,629.9 L1559.0,631.1 L1562.0,649.6 L1565.0,654.6 L1568.0,648.3 L1571.0,645.8 L1574.0,662.5 L1577.0,658.2 L1580.0,656.1 L1583.0,652.6 L1586.0,662.2 L1589.0,650.2 L1592.0,659.5 L1595.0,658.5 L1598.0,661.0 L1601.0,659.3 L1604.0,660.7 L1607.0,661.7 L1610.0,661.5 L1613.0,658.7 L1616.0,652.0 L1619.0,653.0 L1622.0,664.7 L1625.0,650.6 L1628.0,640.6 L1631.0,646.2 L1634.0,648.1 L1637.0,663.7 L1640.0,656.3 L1643.0,660.6 L1646.0,667.6 L1649.0,661.8 L1652.0,652.2 L1655.0,654.0 L1658.0,654.5 L1661.0,639.5 L1664.0,637.7 L1667.0,641.1 L1670.0,653.4 L1673.0,650.5 L1676.0,650.7 L1679.0,652.1 L1682.0,648.5 L1685.0,656.3 L1688.0,650.7 L1691.0,648.5 L1694.0,652.8 L1697.0,655.7 L1700.0,655.3 L1703.0,650.5 L1706.0,647.3 L1709.0,642.5 L1712.0,647.5 L1715.0,640.4 L1718.0,632.7 L1721.0,647.4 L1724.0,644.8 L1727.0,646.2 L1730.0,657.4 L1733.0,661.2 L1736.0,651.0 L1739.0,653.1 L1742.0,652.6 L1745.0,653.1 L1748.0,637.0 L1751.0,645.4 L1754.0,652.9 L1757.0,657.9 L1760.0,644.7 L1763.0,640.3 L1766.0,643.0 L1769.0,637.0 L1772.0,634.6 L1775.0,645.5 L1778.0,654.7 L1781.0,640.5 L1784.0,644.3 L1787.0,645.5 L1790.0,647.2 L1793.0,647.1 L1796.0,632.4 L1799.0,621.7 L1802.0,634.6 L1805.0,646.2 L1808.0,636.2 L1811.0,626.6 L1814.0,619.9 L1817.0,634.8 L1820.0,634.7 L1823.0,623.1 L1826.0,636.1 L1829.0,631.8 L1832.0,625.0 L1835.0,633.3 L1838.0,640.9 L1841.0,653.5 L1844.0,660.1 L1847.0,652.7 L1850.0,654.5 L1853.0,651.6 L1856.0,624.4 L1859.0,626.2 L1862.0,597.4 L1865.0,599.5 L1868.0,642.5 L1871.0,638.9 L1874.0,611.9 L1877.0,646.8 L1877.0,669.4 Z" fill="#c15c17" fill-opacity="0.035"/><path d="M1424.0,669.4 L1424.0,642.8 L1427.0,660.3 L1430.0,655.3 L1433.0,653.3 L1436.0,652.9 L1439.0,654.8 L1442.0,659.7 L1445.0,657.3 L1448.0,652.1 L1451.0,657.8 L1454.0,653.7 L1457.0,652.1 L1460.0,660.0 L1463.0,652.4 L1466.0,646.7 L1469.0,655.6 L1472.0,665.6 L1475.0,660.4 L1478.0,656.8 L1481.0,658.7 L1484.0,656.7 L1487.0,653.8 L1490.0,646.6 L1493.0,651.2 L1496.0,632.6 L1499.0,629.7 L1502.0,636.7 L1505.0,644.3 L1508.0,649.9 L1511.0,648.4 L1514.0,651.6 L1517.0,642.7 L1520.0,648.4 L1523.0,625.6 L1526.0,636.6 L1529.0,646.6 L1532.0,648.1 L1535.0,639.0 L1538.0,634.9 L1541.0,640.9 L1544.0,648.0 L1547.0,638.0 L1550.0,628.5 L1553.0,646.6 L1556.0,639.3 L1559.0,626.4 L1562.0,626.9 L1565.0,643.0 L1568.0,644.8 L1571.0,629.2 L1574.0,621.9 L1577.0,641.9 L1580.0,641.4 L1583.0,651.6 L1586.0,654.9 L1589.0,650.7 L1592.0,655.6 L1595.0,659.4 L1598.0,652.0 L1601.0,659.4 L1604.0,661.8 L1607.0,659.6 L1610.0,663.7 L1613.0,662.1 L1616.0,652.0 L1619.0,647.7 L1622.0,641.3 L1625.0,653.9 L1628.0,638.1 L1631.0,644.8 L1634.0,657.4 L1637.0,664.4 L1640.0,660.4 L1643.0,661.4 L1646.0,667.9 L1649.0,662.5 L1652.0,661.5 L1655.0,659.8 L1658.0,652.5 L1661.0,641.6 L1664.0,651.2 L1667.0,662.4 L1670.0,658.5 L1673.0,649.9 L1676.0,652.9 L1679.0,649.5 L1682.0,641.4 L1685.0,643.1 L1688.0,654.5 L1691.0,652.5 L1694.0,662.4 L1697.0,659.9 L1700.0,655.2 L1703.0,652.1 L1706.0,642.9 L1709.0,634.4 L1712.0,650.5 L1715.0,635.4 L1718.0,628.4 L1721.0,660.6 L1724.0,648.7 L1727.0,655.1 L1730.0,662.5 L1733.0,660.6 L1736.0,658.7 L1739.0,660.1 L1742.0,654.9 L1745.0,649.9 L1748.0,656.3 L1751.0,651.2 L1754.0,657.1 L1757.0,651.2 L1760.0,643.6 L1763.0,634.1 L1766.0,658.4 L1769.0,652.3 L1772.0,620.4 L1775.0,650.3 L1778.0,642.6 L1781.0,643.3 L1784.0,651.3 L1787.0,648.1 L1790.0,641.5 L1793.0,657.5 L1796.0,647.1 L1799.0,641.5 L1802.0,636.7 L1805.0,635.9 L1808.0,651.0 L1811.0,650.4 L1814.0,637.1 L1817.0,603.7 L1820.0,617.2 L1823.0,635.9 L1826.0,635.3 L1829.0,634.1 L1832.0,646.5 L1835.0,649.5 L1838.0,666.0 L1841.0,655.2 L1844.0,655.3 L1847.0,660.9 L1850.0,661.0 L1853.0,652.2 L1856.0,642.9 L1859.0,640.4 L1862.0,635.3 L1865.0,634.3 L1868.0,637.5 L1871.0,635.2 L1874.0,641.5 L1877.0,657.5 L1877.0,669.4 Z" fill="#508642" fill-opacity="0.035"/><path d="M1424.0,669.4 L1424.0,649.4 L1427.0,658.3 L1430.0,664.9 L1433.0,654.5 L1436.0,656.4 L1439.0,655.7 L1442.0,654.2 L1445.0,656.7 L1448.0,656.8 L1451.0,653.2 L1454.0,649.8 L1457.0,633.4 L1460.0,645.3 L1463.0,654.5 L1466.0,665.7 L1469.0,659.6 L1472.0,660.9 L1475.0,660.3 L1478.0,654.3 L1481.0,660.0 L1484.0,657.2 L1487.0,660.7 L1490.0,657.5 L1493.0,644.1 L1496.0,634.2 L1499.0,638.7 L1502.0,647.1 L1505.0,648.4 L1508.0,658.7 L1511.0,654.6 L1514.0,642.8 L1517.0,635.5 L1520.0,647.3 L1523.0,646.9 L1526.0,647.0 L1529.0,642.1 L1532.0,627.0 L1535.0,633.1 L1538.0,637.9 L1541.0,629.3 L1544.0,633.4 L1547.0,634.3 L1550.0,637.0 L1553.0,636.8 L1556.0,637.0 L1559.0,632.4 L1562.0,650.2 L1565.0,653.5 L1568.0,646.3 L1571.0,639.4 L1574.0,642.4 L1577.0,650.2 L1580.0,658.6 L1583.0,656.8 L1586.0,648.6 L1589.0,648.7 L1592.0,652.9 L1595.0,661.7 L1598.0,657.5 L1601.0,657.8 L1604.0,661.5 L1607.0,662.5 L1610.0,662.4 L1613.0,661.4 L1616.0,661.6 L1619.0,642.7 L1622.0,641.7 L1625.0,648.3 L1628.0,648.0 L1631.0,656.4 L1634.0,650.5 L1637.0,661.0 L1640.0,651.8 L1643.0,657.1 L1646.0,667.0 L1649.0,665.4 L1652.0,661.6 L1655.0,661.5 L1658.0,650.5 L1661.0,655.5 L1664.0,653.2 L1667.0,652.1 L1670.0,658.4 L1673.0,647.2 L1676.0,642.1 L1679.0,652.2 L1682.0,653.1 L1685.0,659.9 L1688.0,657.7 L1691.0,648.2 L1694.0,660.2 L1697.0,661.7 L1700.0,652.2 L1703.0,653.6 L1706.0,642.9 L1709.0,650.0 L1712.0,654.2 L1715.0,643.6 L1718.0,642.4 L1721.0,659.8 L1724.0,653.0 L1727.0,661.3 L1730.0,658.3 L1733.0,662.9 L1736.0,661.6 L1739.0,652.8 L1742.0,653.0 L1745.0,645.3 L1748.0,626.9 L1751.0,653.9 L1754.0,661.9 L1757.0,657.8 L1760.0,657.6 L1763.0,650.1 L1766.0,651.4 L1769.0,639.1 L1772.0,630.3 L1775.0,647.4 L1778.0,639.8 L1781.0,625.1 L1784.0,639.5 L1787.0,645.3 L1790.0,641.3 L1793.0,623.9 L1796.0,653.8 L1799.0,645.7 L1802.0,651.2 L1805.0,631.4 L1808.0,637.1 L1811.0,645.8 L1814.0,625.8 L1817.0,638.7 L1820.0,638.5 L1823.0,610.1 L1826.0,628.3 L1829.0,623.2 L1832.0,650.5 L1835.0,656.1 L1838.0,648.9 L1841.0,643.2 L1844.0,641.5 L1847.0,645.5 L1850.0,657.1 L1853.0,645.5 L1856.0,655.2 L1859.0,632.9 L1862.0,617.7 L1865.0,646.2 L1868.0,628.7 L1871.0,623.7 L1874.0,640.6 L1877.0,645.4 L1877.0,669.4 Z" fill="#cca300" fill-opacity="0.035"/><path d="M1424.0,669.4 L1424.0,645.4 L1427.0,657.6 L1430.0,650.3 L1433.0,659.7 L1436.0,654.5 L1439.0,663.4 L1442.0,656.9 L1445.0,662.9 L1448.0,660.8 L1451.0,636.0 L1454.0,650.7 L1457.0,650.5 L1460.0,658.9 L1463.0,656.3 L1466.0,655.3 L1469.0,657.3 L1472.0,667.6 L1475.0,664.7 L1478.0,665.7 L1481.0,658.3 L1484.0,652.1 L1487.0,651.7 L1490.0,647.7 L1493.0,649.2 L1496.0,653.8 L1499.0,640.1 L1502.0,634.4 L1505.0,648.9 L1508.0,644.1 L1511.0,654.1 L1514.0,643.9 L1517.0,648.5 L1520.0,654.1 L1523.0,648.9 L1526.0,657.6 L1529.0,658.2 L1532.0,649.3 L1535.0,645.7 L1538.0,638.8 L1541.0,626.9 L1544.0,651.0 L1547.0,655.1 L1550.0,650.2 L1553.0,654.1 L1556.0,652.6 L1559.0,640.5 L1562.0,646.7 L1565.0,653.1 L1568.0,641.1 L1571.0,637.8 L1574.0,643.0 L1577.0,647.1 L1580.0,654.1 L1583.0,658.2 L1586.0,652.7 L1589.0,651.4 L1592.0,659.6 L1595.0,659.0 L1598.0,659.2 L1601.0,656.0 L1604.0,661.8 L1607.0,663.8 L1610.0,665.3 L1613.0,664.0 L1616.0,658.4 L1619.0,655.0 L1622.0,642.4 L1625.0,651.5 L1628.0,651.9 L1631.0,652.8 L1634.0,663.3 L1637.0,661.9 L1640.0,664.8 L1643.0,662.2 L1646.0,667.5 L1649.0,663.2 L1652.0,661.1 L1655.0,653.6 L1658.0,654.0 L1661.0,657.3 L1664.0,657.5 L1667.0,656.4 L1670.0,659.1 L1673.0,653.0 L1676.0,656.1 L1679.0,654.7 L1682.0,650.0 L1685.0,653.8 L1688.0,658.7 L1691.0,653.4 L1694.0,663.2 L1697.0,663.7 L1700.0,655.0 L1703.0,650.0 L1706.0,654.8 L1709.0,653.2 L1712.0,656.4 L1715.0,644.1 L1718.0,629.9 L1721.0,641.0 L1724.0,647.0 L1727.0,658.0 L1730.0,657.9 L1733.0,658.5 L1736.0,655.1 L1739.0,661.3 L1742.0,657.9 L1745.0,643.9 L1748.0,647.4 L1751.0,655.9 L1754.0,656.7 L1757.0,657.0 L1760.0,644.5 L1763.0,650.2 L1766.0,665.0 L1769.0,665.1 L1772.0,651.4 L1775.0,651.1 L1778.0,641.6 L1781.0,651.7 L1784.0,654.1 L1787.0,655.8 L1790.0,648.9 L1793.0,638.1 L1796.0,650.9 L1799.0,651.2 L1802.0,650.7 L1805.0,653.5 L1808.0,652.3 L1811.0,649.9 L1814.0,631.2 L1817.0,639.4 L1820.0,644.5 L1823.0,644.4 L1826.0,627.1 L1829.0,642.8 L1832.0,653.0 L1835.0,649.8 L1838.0,648.5 L1841.0,663.0 L1844.0,659.3 L1847.0,655.6 L1850.0,655.4 L1853.0,661.4 L1856.0,651.8 L1859.0,649.5 L1862.0,635.9 L1865.0,624.5 L1868.0,641.0 L1871.0,651.8 L1874.0,636.7 L1877.0,651.2 L1877.0,669.4 Z" fill="#70dbed" fill-opacity="0.035"/><path d="M1424.0,669.4 L1424.0,646.3 L1427.0,651.8 L1430.0,653.0 L1433.0,658.5 L1436.0,640.4 L1439.0,659.9 L1442.0,660.9 L1445.0,661.6 L1448.0,651.0 L1451.0,658.8 L1454.0,665.7 L1457.0,663.2 L1460.0,657.9 L1463.0,656.8 L1466.0,656.0 L1469.0,659.6 L1472.0,661.7 L1475.0,655.5 L1478.0,649.5 L1481.0,655.8 L1484.0,660.6 L1487.0,651.9 L1490.0,647.6 L1493.0,654.4 L1496.0,632.5 L1499.0,634.6 L1502.0,624.3 L1505.0,641.4 L1508.0,642.9 L1511.0,645.5 L1514.0,654.2 L1517.0,637.5 L1520.0,659.9 L1523.0,635.6 L1526.0,649.4 L1529.0,648.0 L1532.0,646.1 L1535.0,662.1 L1538.0,640.0 L1541.0,624.8 L1544.0,618.2 L1547.0,619.3 L1550.0,641.7 L1553.0,635.3 L1556.0,652.3 L1559.0,644.9 L1562.0,645.2 L1565.0,652.8 L1568.0,649.3 L1571.0,631.4 L1574.0,648.3 L1577.0,636.3 L1580.0,652.9 L1583.0,656.3 L1586.0,652.6 L1589.0,656.3 L1592.0,652.5 L1595.0,659.9 L1598.0,656.1 L1601.0,657.2 L1604.0,660.9 L1607.0,660.2 L1610.0,664.9 L1613.0,666.1 L1616.0,654.7 L1619.0,661.4 L1622.0,646.1 L1625.0,651.4 L1628.0,664.4 L1631.0,655.7 L1634.0,660.3 L1637.0,663.6 L1640.0,666.7 L1643.0,660.4 L1646.0,666.4 L1649.0,650.5 L1652.0,655.7 L1655.0,659.2 L1658.0,652.0 L1661.0,650.8 L1664.0,652.2 L1667.0,648.3 L1670.0,655.8 L1673.0,653.6 L1676.0,660.2 L1679.0,658.8 L1682.0,659.8 L1685.0,654.1 L1688.0,653.0 L1691.0,659.0 L1694.0,657.9 L1697.0,655.8 L1700.0,658.8 L1703.0,654.0 L1706.0,654.2 L1709.0,648.8 L1712.0,659.2 L1715.0,659.7 L1718.0,657.3 L1721.0,653.5 L1724.0,652.8 L1727.0,652.0 L1730.0,651.2 L1733.0,655.7 L1736.0,657.0 L1739.0,652.8 L1742.0,656.7 L1745.0,651.2 L1748.0,655.8 L1751.0,663.4 L1754.0,664.7 L1757.0,665.1 L1760.0,645.5 L1763.0,644.8 L1766.0,652.6 L1769.0,661.5 L1772.0,629.1 L1775.0,644.6 L1778.0,652.6 L1781.0,655.2 L1784.0,645.9 L1787.0,644.6 L1790.0,642.6 L1793.0,646.3 L1796.0,645.0 L1799.0,631.1 L1802.0,638.2 L1805.0,638.8 L1808.0,662.2 L1811.0,650.2 L1814.0,642.6 L1817.0,650.3 L1820.0,631.8 L1823.0,615.6 L1826.0,630.7 L1829.0,652.8 L1832.0,638.8 L1835.0,643.3 L1838.0,648.6 L1841.0,646.4 L1844.0,652.7 L1847.0,661.0 L1850.0,653.6 L1853.0,653.6 L1856.0,655.8 L1859.0,626.7 L1862.0,636.0 L1865.0,643.9 L1868.0,635.9 L1871.0,637.9 L1874.0,652.7 L1877.0,646.3 L1877.0,669.4 Z" fill="#e0752d" fill-opacity="0.035"/><path d="M1424.0,669.4 L1424.0,657.3 L1427.0,655.9 L1430.0,655.5 L1433.0,657.8 L1436.0,665.1 L1439.0,661.4 L1442.0,657.4 L1445.0,653.2 L1448.0,659.0 L1451.0,657.7 L1454.0,660.3 L1457.0,655.2 L1460.0,663.4 L1463.0,652.2 L1466.0,654.6 L1469.0,658.1 L1472.0,659.2 L1475.0,661.1 L1478.0,651.1 L1481.0,650.3 L1484.0,637.1 L1487.0,656.4 L1490.0,643.1 L1493.0,650.4 L1496.0,651.3 L1499.0,659.4 L1502.0,633.9 L1505.0,654.5 L1508.0,650.7 L1511.0,654.0 L1514.0,649.4 L1517.0,642.8 L1520.0,652.0 L1523.0,636.6 L1526.0,645.0 L1529.0,646.2 L1532.0,648.9 L1535.0,648.5 L1538.0,640.0 L1541.0,625.2 L1544.0,648.2 L1547.0,647.1 L1550.0,656.9 L1553.0,654.2 L1556.0,641.3 L1559.0,628.2 L1562.0,637.4 L1565.0,651.0 L1568.0,653.2 L1571.0,639.1 L1574.0,645.2 L1577.0,656.0 L1580.0,652.2 L1583.0,657.9 L1586.0,658.4 L1589.0,656.0 L1592.0,654.3 L1595.0,655.4 L1598.0,656.2 L1601.0,658.3 L1604.0,663.9 L1607.0,661.3 L1610.0,664.1 L1613.0,662.8 L1616.0,654.9 L1619.0,644.4 L1622.0,649.5 L1625.0,654.9 L1628.0,648.7 L1631.0,659.7 L1634.0,665.4 L1637.0,664.8 L1640.0,660.9 L1643.0,656.9 L1646.0,667.1 L1649.0,661.3 L1652.0,657.0 L1655.0,661.3 L1658.0,656.5 L1661.0,658.0 L1664.0,658.1 L1667.0,652.6 L1670.0,654.4 L1673.0,654.9 L1676.0,644.6 L1679.0,647.9 L1682.0,660.8 L1685.0,656.4 L1688.0,660.3 L1691.0,659.2 L1694.0,665.2 L1697.0,665.7 L1700.0,658.6 L1703.0,655.2 L1706.0,639.6 L1709.0,649.2 L1712.0,661.5 L1715.0,641.4 L1718.0,640.7 L1721.0,654.6 L1724.0,647.6 L1727.0,652.7 L1730.0,654.5 L1733.0,656.8 L1736.0,660.2 L1739.0,658.1 L1742.0,657.2 L1745.0,660.8 L1748.0,641.3 L1751.0,659.3 L1754.0,662.9 L1757.0,660.6 L1760.0,648.6 L1763.0,649.5 L1766.0,646.3 L1769.0,651.2 L1772.0,641.2 L1775.0,646.5 L1778.0,648.0 L1781.0,647.2 L1784.0,655.1 L1787.0,656.1 L1790.0,655.0 L1793.0,645.0 L1796.0,650.9 L1799.0,649.7 L1802.0,644.4 L1805.0,644.7 L1808.0,653.2 L1811.0,642.4 L1814.0,658.2 L1817.0,664.4 L1820.0,639.7 L1823.0,625.2 L1826.0,648.5 L1829.0,633.5 L1832.0,642.8 L1835.0,637.2 L1838.0,640.9 L1841.0,629.8 L1844.0,640.8 L1847.0,647.5 L1850.0,653.4 L1853.0,645.8 L1856.0,648.5 L1859.0,631.9 L1862.0,645.4 L1865.0,635.1 L1868.0,629.8 L1871.0,648.6 L1874.0,651.0 L1877.0,652.1 L1877.0,669.4 Z" fill="#bf1b00" fill-opacity="0.035"/><path d="M1424.0,669.4 L1424.0,654.9 L1427.0,659.2 L1430.0,659.6 L1433.0,655.2 L1436.0,658.2 L1439.0,659.5 L1442.0,663.7 L1445.0,661.3 L1448.0,659.7 L1451.0,645.8 L1454.0,660.1 L1457.0,659.8 L1460.0,660.8 L1463.0,654.0 L1466.0,657.0 L1469.0,661.7 L1472.0,663.2 L1475.0,658.0 L1478.0,655.7 L1481.0,661.9 L1484.0,655.7 L1487.0,631.8 L1490.0,601.0 L1493.0,635.2 L1496.0,638.3 L1499.0,647.8 L1502.0,642.0 L1505.0,641.8 L1508.0,651.8 L1511.0,651.7 L1514.0,655.0 L1517.0,642.1 L1520.0,655.1 L1523.0,650.0 L1526.0,647.6 L1529.0,662.2 L1532.0,641.7 L1535.0,644.9 L1538.0,650.5 L1541.0,639.4 L1544.0,636.5 L1547.0,642.0 L1550.0,640.3 L1553.0,622.9 L1556.0,636.6 L1559.0,645.7 L1562.0,649.4 L1565.0,661.3 L1568.0,637.1 L1571.0,655.5 L1574.0,658.8 L1577.0,655.3 L1580.0,656.8 L1583.0,660.4 L1586.0,660.4 L1589.0,661.4 L1592.0,653.7 L1595.0,656.7 L1598.0,652.3 L1601.0,661.0 L1604.0,662.8 L1607.0,660.7 L1610.0,663.0 L1613.0,664.8 L1616.0,657.7 L1619.0,650.9 L1622.0,624.0 L1625.0,656.8 L1628.0,647.1 L1631.0,658.6 L1634.0,660.7 L1637.0,662.7 L1640.0,660.7 L1643.0,665.2 L1646.0,668.0 L1649.0,664.3 L1652.0,661.9 L1655.0,662.4 L1658.0,667.8 L1661.0,660.1 L1664.0,656.3 L1667.0,655.5 L1670.0,658.7 L1673.0,659.9 L1676.0,657.2 L1679.0,656.2 L1682.0,656.2 L1685.0,658.4 L1688.0,653.9 L1691.0,659.9 L1694.0,664.9 L1697.0,660.2 L1700.0,656.7 L1703.0,648.8 L1706.0,655.5 L1709.0,661.7 L1712.0,661.6 L1715.0,659.9 L1718.0,649.7 L1721.0,653.9 L1724.0,655.9 L1727.0,660.2 L1730.0,660.3 L1733.0,659.9 L1736.0,654.2 L1739.0,653.6 L1742.0,657.7 L1745.0,645.8 L1748.0,649.1 L1751.0,653.6 L1754.0,660.5 L1757.0,654.4 L1760.0,652.9 L1763.0,651.5 L1766.0,653.1 L1769.0,656.0 L1772.0,648.5 L1775.0,658.5 L1778.0,660.2 L1781.0,631.8 L1784.0,647.7 L1787.0,656.6 L1790.0,650.7 L1793.0,645.3 L1796.0,657.8 L1799.0,655.0 L1802.0,646.7 L1805.0,642.1 L1808.0,654.5 L1811.0,653.9 L1814.0,648.5 L1817.0,620.8 L1820.0,635.9 L1823.0,641.3 L1826.0,659.1 L1829.0,644.4 L1832.0,654.2 L1835.0,653.6 L1838.0,657.2 L1841.0,649.6 L1844.0,649.0 L1847.0,656.9 L1850.0,663.2 L1853.0,658.2 L1856.0,654.3 L1859.0,651.6 L1862.0,645.4 L1865.0,653.1 L1868.0,642.0 L1871.0,647.9 L1874.0,667.7 L1877.0,664.5 L1877.0,669.4 Z" fill="#705da0" fill-opacity="0.035"/><path d="M1424.0,669.4 L1424.0,649.9 L1427.0,653.5 L1430.0,650.5 L1433.0,655.1 L1436.0,659.8 L1439.0,655.6 L1442.0,659.8 L1445.0,651.8 L1448.0,648.5 L1451.0,650.6 L1454.0,658.8 L1457.0,644.8 L1460.0,650.7 L1463.0,649.7 L1466.0,655.6 L1469.0,657.8 L1472.0,660.7 L1475.0,655.2 L1478.0,658.6 L1481.0,649.4 L1484.0,649.7 L1487.0,634.2 L1490.0,649.7 L1493.0,663.2 L1496.0,625.9 L1499.0,640.9 L1502.0,642.6 L1505.0,643.8 L1508.0,654.3 L1511.0,657.8 L1514.0,637.1 L1517.0,624.5 L1520.0,641.7 L1523.0,616.8 L1526.0,573.8 L1529.0,621.6 L1532.0,631.0 L1535.0,640.5 L1538.0,626.4 L1541.0,614.5 L1544.0,643.0 L1547.0,639.6 L1550.0,642.3 L1553.0,633.5 L1556.0,641.0 L1559.0,624.6 L1562.0,641.4 L1565.0,651.5 L1568.0,645.4 L1571.0,641.4 L1574.0,656.5 L1577.0,646.8 L1580.0,655.7 L1583.0,650.7 L1586.0,656.5 L1589.0,645.3 L1592.0,653.1 L1595.0,658.3 L1598.0,653.8 L1601.0,654.8 L1604.0,660.2 L1607.0,658.6 L1610.0,664.4 L1613.0,659.0 L1616.0,630.5 L1619.0,638.3 L1622.0,651.7 L1625.0,650.9 L1628.0,643.2 L1631.0,653.8 L1634.0,652.3 L1637.0,662.2 L1640.0,650.2 L1643.0,659.8 L1646.0,665.6 L1649.0,663.3 L1652.0,653.9 L1655.0,652.9 L1658.0,649.7 L1661.0,644.2 L1664.0,648.1 L1667.0,650.2 L1670.0,643.2 L1673.0,638.5 L1676.0,663.1 L1679.0,663.5 L1682.0,656.1 L1685.0,654.6 L1688.0,659.6 L1691.0,652.8 L1694.0,657.6 L1697.0,650.9 L1700.0,648.3 L1703.0,636.6 L1706.0,636.3 L1709.0,644.7 L1712.0,665.4 L1715.0,658.7 L1718.0,649.4 L1721.0,649.2 L1724.0,649.0 L1727.0,659.3 L1730.0,652.3 L1733.0,636.2 L1736.0,651.6 L1739.0,656.9 L1742.0,663.1 L1745.0,646.9 L1748.0,632.6 L1751.0,649.9 L1754.0,655.4 L1757.0,654.4 L1760.0,652.0 L1763.0,637.8 L1766.0,650.9 L1769.0,632.9 L1772.0,641.5 L1775.0,647.7 L1778.0,647.1 L1781.0,642.0 L1784.0,649.6 L1787.0,646.3 L1790.0,654.7 L1793.0,638.6 L1796.0,646.5 L1799.0,635.6 L1802.0,648.3 L1805.0,646.8 L1808.0,650.8 L1811.0,642.9 L1814.0,638.9 L1817.0,642.6 L1820.0,631.4 L1823.0,634.7 L1826.0,644.1 L1829.0,642.1 L1832.0,638.2 L1835.0,627.0 L1838.0,632.1 L1841.0,646.0 L1844.0,650.5 L1847.0,651.2 L1850.0,654.6 L1853.0,664.2 L1856.0,648.9 L1859.0,631.3 L1862.0,622.8 L1865.0,638.3 L1868.0,639.2 L1871.0,659.0 L1874.0,636.0 L1877.0,654.9 L1877.0,669.4 Z" fill="#ba43a9" fill-opacity="0.035"/><path d="M1424.0,669.4 L1424.0,653.3 L1427.0,648.9 L1430.0,651.4 L1433.0,657.5 L1436.0,659.2 L1439.0,659.4 L1442.0,659.7 L1445.0,660.6 L1448.0,651.4 L1451.0,656.3 L1454.0,650.1 L1457.0,639.4 L1460.0,650.2 L1463.0,644.2 L1466.0,657.3 L1469.0,655.2 L1472.0,665.1 L1475.0,664.0 L1478.0,659.3 L1481.0,659.8 L1484.0,662.4 L1487.0,655.8 L1490.0,634.3 L1493.0,655.4 L1496.0,629.7 L1499.0,639.9 L1502.0,647.3 L1505.0,637.3 L1508.0,663.9 L1511.0,647.0 L1514.0,646.7 L1517.0,644.3 L1520.0,655.5 L1523.0,653.6 L1526.0,656.9 L1529.0,654.5 L1532.0,657.8 L1535.0,639.7 L1538.0,638.7 L1541.0,652.7 L1544.0,651.8 L1547.0,651.4 L1550.0,639.1 L1553.0,635.9 L1556.0,647.3 L1559.0,622.4 L1562.0,646.2 L1565.0,639.6 L1568.0,646.2 L1571.0,645.7 L1574.0,641.3 L1577.0,654.2 L1580.0,647.9 L1583.0,661.5 L1586.0,658.9 L1589.0,658.2 L1592.0,651.8 L1595.0,656.4 L1598.0,657.9 L1601.0,663.0 L1604.0,662.3 L1607.0,662.5 L1610.0,663.2 L1613.0,662.4 L1616.0,653.9 L1619.0,651.6 L1622.0,668.3 L1625.0,650.4 L1628.0,651.6 L1631.0,647.6 L1634.0,654.1 L1637.0,663.8 L1640.0,658.6 L1643.0,663.5 L1646.0,656.5 L1649.0,665.8 L1652.0,663.7 L1655.0,662.7 L1658.0,654.8 L1661.0,653.8 L1664.0,658.8 L1667.0,656.2 L1670.0,659.3 L1673.0,656.4 L1676.0,650.0 L1679.0,657.3 L1682.0,658.7 L1685.0,648.3 L1688.0,658.1 L1691.0,654.9 L1694.0,663.3 L1697.0,660.6 L1700.0,660.3 L1703.0,652.1 L1706.0,654.9 L1709.0,653.1 L1712.0,653.7 L1715.0,641.1 L1718.0,633.9 L1721.0,653.0 L1724.0,656.8 L1727.0,651.1 L1730.0,652.8 L1733.0,659.2 L1736.0,658.8 L1739.0,656.0 L1742.0,652.8 L1745.0,658.4 L1748.0,648.4 L1751.0,652.6 L1754.0,657.3 L1757.0,654.4 L1760.0,647.5 L1763.0,632.2 L1766.0,650.6 L1769.0,641.4 L1772.0,648.8 L1775.0,648.9 L1778.0,638.7 L1781.0,646.5 L1784.0,658.8 L1787.0,663.0 L1790.0,651.6 L1793.0,650.2 L1796.0,651.2 L1799.0,652.4 L1802.0,652.4 L1805.0,636.2 L1808.0,647.7 L1811.0,651.0 L1814.0,643.4 L1817.0,629.5 L1820.0,641.6 L1823.0,641.6 L1826.0,636.0 L1829.0,638.0 L1832.0,641.1 L1835.0,644.7 L1838.0,639.7 L1841.0,643.0 L1844.0,638.4 L1847.0,662.3 L1850.0,658.8 L1853.0,652.6 L1856.0,651.1 L1859.0,637.8 L1862.0,624.9 L1865.0,640.7 L1868.0,633.0 L1871.0,644.0 L1874.0,642.5 L1877.0,652.9 L1877.0,669.4 Z" fill="#6d1f62" fill-opacity="0.035"/><path d="M1424.0,669.4 L1424.0,660.3 L1427.0,660.3 L1430.0,656.1 L1433.0,658.8 L1436.0,656.4 L1439.0,657.9 L1442.0,658.9 L1445.0,660.1 L1448.0,653.8 L1451.0,658.1 L1454.0,650.1 L1457.0,648.3 L1460.0,651.4 L1463.0,656.4 L1466.0,665.5 L1469.0,660.7 L1472.0,661.8 L1475.0,664.0 L1478.0,650.6 L1481.0,658.4 L1484.0,660.4 L1487.0,657.1 L1490.0,651.8 L1493.0,641.4 L1496.0,619.4 L1499.0,617.0 L1502.0,640.4 L1505.0,641.4 L1508.0,627.7 L1511.0,644.4 L1514.0,638.9 L1517.0,627.9 L1520.0,639.1 L1523.0,627.0 L1526.0,638.4 L1529.0,636.4 L1532.0,652.6 L1535.0,653.4 L1538.0,650.2 L1541.0,645.9 L1544.0,628.2 L1547.0,624.2 L1550.0,624.3 L1553.0,628.5 L1556.0,653.8 L1559.0,623.3 L1562.0,641.3 L1565.0,653.2 L1568.0,647.7 L1571.0,637.0 L1574.0,657.4 L1577.0,665.8 L1580.0,657.8 L1583.0,666.6 L1586.0,665.1 L1589.0,667.5 L1592.0,657.2 L1595.0,647.4 L1598.0,652.1 L1601.0,651.8 L1604.0,661.3 L1607.0,654.7 L1610.0,658.7 L1613.0,660.1 L1616.0,634.0 L1619.0,650.5 L1622.0,653.2 L1625.0,644.1 L1628.0,647.0 L1631.0,662.6 L1634.0,656.9 L1637.0,643.2 L1640.0,656.7 L1643.0,657.7 L1646.0,667.6 L1649.0,662.4 L1652.0,664.7 L1655.0,659.4 L1658.0,649.0 L1661.0,653.6 L1664.0,653.0 L1667.0,654.8 L1670.0,650.7 L1673.0,646.9 L1676.0,648.9 L1679.0,650.9 L1682.0,660.7 L1685.0,658.5 L1688.0,654.3 L1691.0,648.4 L1694.0,654.5 L1697.0,650.1 L1700.0,656.2 L1703.0,660.1 L1706.0,643.3 L1709.0,654.0 L1712.0,651.9 L1715.0,637.3 L1718.0,619.7 L1721.0,659.3 L1724.0,658.0 L1727.0,655.9 L1730.0,654.8 L1733.0,656.7 L1736.0,653.4 L1739.0,654.1 L1742.0,664.8 L1745.0,643.6 L1748.0,646.7 L1751.0,654.5 L1754.0,651.6 L1757.0,651.8 L1760.0,656.0 L1763.0,646.6 L1766.0,652.4 L1769.0,656.8 L1772.0,655.8 L1775.0,642.0 L1778.0,629.5 L1781.0,645.5 L1784.0,644.1 L1787.0,657.6 L1790.0,647.2 L1793.0,631.9 L1796.0,630.5 L1799.0,645.1 L1802.0,636.7 L1805.0,642.8 L1808.0,633.8 L1811.0,625.8 L1814.0,622.3 L1817.0,628.7 L1820.0,625.9 L1823.0,636.3 L1826.0,628.6 L1829.0,625.7 L1832.0,635.4 L1835.0,643.0 L1838.0,645.5 L1841.0,635.8 L1844.0,637.9 L1847.0,643.4 L1850.0,644.8 L1853.0,651.8 L1856.0,651.1 L1859.0,606.8 L1862.0,618.8 L1865.0,624.9 L1868.0,635.5 L1871.0,643.1 L1874.0,647.8 L1877.0,644.2 L1877.0,669.4 Z" fill="#962d82" fill-opacity="0.035"/><path d="M1424.0,669.4 L1424.0,665.7 L1427.0,661.6 L1430.0,653.2 L1433.0,656.4 L1436.0,653.0 L1439.0,661.7 L1442.0,659.0 L1445.0,651.5 L1448.0,660.0 L1451.0,650.1 L1454.0,658.6 L1457.0,647.8 L1460.0,650.6 L1463.0,634.3 L1466.0,652.2 L1469.0,662.0 L1472.0,664.9 L1475.0,655.5 L1478.0,659.3 L1481.0,657.5 L1484.0,655.6 L1487.0,645.4 L1490.0,640.3 L1493.0,649.8 L1496.0,620.6 L1499.0,634.5 L1502.0,640.8 L1505.0,644.5 L1508.0,653.6 L1511.0,654.3 L1514.0,642.6 L1517.0,645.9 L1520.0,645.0 L1523.0,639.5 L1526.0,634.7 L1529.0,632.8 L1532.0,638.7 L1535.0,641.9 L1538.0,625.5 L1541.0,638.7 L1544.0,625.6 L1547.0,643.1 L1550.0,616.1 L1553.0,627.7 L1556.0,634.7 L1559.0,657.9 L1562.0,644.5 L1565.0,649.6 L1568.0,645.6 L1571.0,638.9 L1574.0,645.2 L1577.0,630.5 L1580.0,663.2 L1583.0,659.3 L1586.0,652.4 L1589.0,655.4 L1592.0,653.9 L1595.0,653.6 L1598.0,652.1 L1601.0,658.0 L1604.0,660.6 L1607.0,654.8 L1610.0,661.8 L1613.0,664.5 L1616.0,660.1 L1619.0,638.0 L1622.0,645.0 L1625.0,650.8 L1628.0,655.6 L1631.0,657.7 L1634.0,650.6 L1637.0,660.2 L1640.0,649.6 L1643.0,659.5 L1646.0,664.6 L1649.0,659.6 L1652.0,652.8 L1655.0,663.2 L1658.0,659.8 L1661.0,662.5 L1664.0,656.4 L1667.0,648.5 L1670.0,655.6 L1673.0,663.4 L1676.0,638.8 L1679.0,647.9 L1682.0,648.6 L1685.0,653.4 L1688.0,641.6 L1691.0,646.7 L1694.0,659.0 L1697.0,659.2 L1700.0,659.1 L1703.0,652.6 L1706.0,652.0 L1709.0,644.1 L1712.0,654.4 L1715.0,621.5 L1718.0,615.2 L1721.0,650.8 L1724.0,651.7 L1727.0,652.2 L1730.0,652.1 L1733.0,657.0 L1736.0,649.5 L1739.0,650.7 L1742.0,653.1 L1745.0,646.2 L1748.0,651.9 L1751.0,654.4 L1754.0,662.0 L1757.0,657.4 L1760.0,651.9 L1763.0,656.2 L1766.0,656.0 L1769.0,657.2 L1772.0,641.8 L1775.0,646.7 L1778.0,648.7 L1781.0,648.7 L1784.0,656.6 L1787.0,657.3 L1790.0,645.5 L1793.0,628.6 L1796.0,642.4 L1799.0,647.4 L1802.0,650.3 L1805.0,661.1 L1808.0,659.6 L1811.0,666.0 L1814.0,645.2 L1817.0,635.0 L1820.0,652.4 L1823.0,644.0 L1826.0,623.4 L1829.0,609.5 L1832.0,650.3 L1835.0,644.6 L1838.0,646.5 L1841.0,651.4 L1844.0,662.1 L1847.0,645.4 L1850.0,655.4 L1853.0,652.3 L1856.0,644.4 L1859.0,617.7 L1862.0,618.0 L1865.0,657.0 L1868.0,649.1 L1871.0,647.0 L1874.0,655.9 L1877.0,655.5 L1877.0,669.4 Z" fill="#614d93" fill-opacity="0.035"/><path d="M1424.0,651.3 L1427.0,652.8 L1430.0,650.2 L1433.0,655.7 L1436.0,656.7 L1439.0,661.5 L1442.0,659.8 L1445.0,656.4 L1448.0,652.3 L1451.0,656.5 L1454.0,650.5 L1457.0,646.1 L1460.0,651.7 L1463.0,644.9 L1466.0,654.0 L1469.0,658.8 L1472.0,662.5 L1475.0,658.1 L1478.0,658.0 L1481.0,660.2 L1484.0,648.3 L1487.0,645.7 L1490.0,626.5 L1493.0,630.0 L1496.0,625.2 L1499.0,623.0 L1502.0,647.6 L1505.0,651.6 L1508.0,655.5 L1511.0,652.7 L1514.0,642.2 L1517.0,642.8 L1520.0,654.8 L1523.0,651.2 L1526.0,654.8 L1529.0,640.6 L1532.0,648.9 L1535.0,631.8 L1538.0,628.7 L1541.0,623.2 L1544.0,622.0 L1547.0,635.6 L1550.0,642.7 L1553.0,640.0 L1556.0,639.3 L1559.0,627.6 L1562.0,650.4 L1565.0,647.2 L1568.0,650.6 L1571.0,640.1 L1574.0,638.7 L1577.0,647.6 L1580.0,662.0 L1583.0,664.7 L1586.0,660.4 L1589.0,655.6 L1592.0,655.7 L1595.0,658.8 L1598.0,649.9 L1601.0,656.9 L1604.0,662.6 L1607.0,659.2 L1610.0,665.1 L1613.0,664.9 L1616.0,652.2 L1619.0,644.3 L1622.0,650.9 L1625.0,644.4 L1628.0,649.7 L1631.0,651.9 L1634.0,656.4 L1637.0,661.0 L1640.0,654.6 L1643.0,644.9 L1646.0,668.4 L1649.0,666.0 L1652.0,655.9 L1655.0,660.0 L1658.0,652.3 L1661.0,654.6 L1664.0,647.1 L1667.0,646.7 L1670.0,657.4 L1673.0,659.1 L1676.0,640.2 L1679.0,652.7 L1682.0,654.1 L1685.0,660.8 L1688.0,655.9 L1691.0,652.4 L1694.0,635.4 L1697.0,649.6 L1700.0,657.7 L1703.0,654.1 L1706.0,640.5 L1709.0,640.5 L1712.0,661.5 L1715.0,647.7 L1718.0,634.3 L1721.0,648.1 L1724.0,648.0 L1727.0,655.6 L1730.0,652.7 L1733.0,657.1 L1736.0,658.6 L1739.0,659.1 L1742.0,660.8 L1745.0,651.8 L1748.0,645.2 L1751.0,661.6 L1754.0,657.9 L1757.0,661.5 L1760.0,645.1 L1763.0,637.0 L1766.0,664.7 L1769.0,649.8 L1772.0,645.8 L1775.0,643.1 L1778.0,639.8 L1781.0,638.4 L1784.0,663.3 L1787.0,664.1 L1790.0,648.4 L1793.0,632.9 L1796.0,648.9 L1799.0,645.8 L1802.0,646.7 L1805.0,654.3 L1808.0,649.3 L1811.0,637.4 L1814.0,647.8 L1817.0,629.0 L1820.0,627.7 L1823.0,592.7 L1826.0,629.0 L1829.0,649.0 L1832.0,644.3 L1835.0,654.5 L1838.0,659.6 L1841.0,663.5 L1844.0,661.0 L1847.0,657.0 L1850.0,660.2 L1853.0,658.8 L1856.0,654.0 L1859.0,652.1 L1862.0,636.6 L1865.0,633.1 L1868.0,624.5 L1871.0,637.5 L1874.0,638.6 L1877.0,658.1" fill="none" stroke="#7eb26d" stroke-width="1.2" stroke-opacity="0.9" stroke-linejoin="round"/><path d="M1424.0,656.1 L1427.0,660.4 L1430.0,656.2 L1433.0,659.7 L1436.0,661.4 L1439.0,662.8 L1442.0,664.1 L1445.0,668.4 L1448.0,661.8 L1451.0,663.9 L1454.0,663.8 L1457.0,659.0 L1460.0,659.4 L1463.0,655.5 L1466.0,656.2 L1469.0,659.5 L1472.0,661.6 L1475.0,662.1 L1478.0,662.3 L1481.0,655.7 L1484.0,657.4 L1487.0,661.5 L1490.0,644.2 L1493.0,655.9 L1496.0,637.3 L1499.0,611.1 L1502.0,640.2 L1505.0,655.1 L1508.0,662.3 L1511.0,653.2 L1514.0,653.1 L1517.0,643.6 L1520.0,651.3 L1523.0,644.5 L1526.0,635.7 L1529.0,634.4 L1532.0,642.5 L1535.0,651.6 L1538.0,651.7 L1541.0,649.1 L1544.0,628.9 L1547.0,639.4 L1550.0,638.4 L1553.0,645.0 L1556.0,640.1 L1559.0,630.0 L1562.0,646.5 L1565.0,649.4 L1568.0,643.7 L1571.0,640.5 L1574.0,644.4 L1577.0,637.5 L1580.0,658.5 L1583.0,657.9 L1586.0,656.9 L1589.0,658.9 L1592.0,655.5 L1595.0,659.8 L1598.0,657.4 L1601.0,658.5 L1604.0,665.6 L1607.0,662.9 L1610.0,648.7 L1613.0,663.1 L1616.0,657.0 L1619.0,652.1 L1622.0,653.8 L1625.0,655.2 L1628.0,659.5 L1631.0,658.1 L1634.0,657.5 L1637.0,665.4 L1640.0,656.8 L1643.0,665.5 L1646.0,668.0 L1649.0,665.5 L1652.0,661.1 L1655.0,656.0 L1658.0,658.4 L1661.0,655.0 L1664.0,655.8 L1667.0,654.0 L1670.0,659.1 L1673.0,656.7 L1676.0,647.3 L1679.0,654.8 L1682.0,653.1 L1685.0,662.8 L1688.0,657.0 L1691.0,652.1 L1694.0,658.8 L1697.0,660.3 L1700.0,654.9 L1703.0,658.5 L1706.0,653.5 L1709.0,666.1 L1712.0,659.6 L1715.0,650.2 L1718.0,645.3 L1721.0,651.6 L1724.0,648.0 L1727.0,657.3 L1730.0,654.1 L1733.0,655.7 L1736.0,660.5 L1739.0,657.2 L1742.0,662.2 L1745.0,664.2 L1748.0,655.0 L1751.0,664.8 L1754.0,649.6 L1757.0,654.1 L1760.0,644.1 L1763.0,652.0 L1766.0,645.1 L1769.0,643.1 L1772.0,645.7 L1775.0,645.2 L1778.0,650.8 L1781.0,647.4 L1784.0,657.1 L1787.0,650.5 L1790.0,652.2 L1793.0,641.5 L1796.0,650.0 L1799.0,653.0 L1802.0,657.2 L1805.0,655.6 L1808.0,659.5 L1811.0,654.2 L1814.0,665.1 L1817.0,626.1 L1820.0,643.1 L1823.0,644.3 L1826.0,634.5 L1829.0,633.3 L1832.0,646.2 L1835.0,653.7 L1838.0,649.6 L1841.0,657.9 L1844.0,654.2 L1847.0,662.4 L1850.0,660.1 L1853.0,653.1 L1856.0,634.0 L1859.0,636.2 L1862.0,616.9 L1865.0,622.8 L1868.0,621.3 L1871.0,655.7 L1874.0,640.6 L1877.0,651.9" fill="none" stroke="#eab839" stroke-width="1.2" stroke-opacity="0.9" stroke-linejoin="round"/><path d="M1424.0,648.5 L1427.0,651.7 L1430.0,650.0 L1433.0,658.2 L1436.0,660.1 L1439.0,661.6 L1442.0,665.2 L1445.0,655.2 L1448.0,650.9 L1451.0,658.4 L1454.0,657.9 L1457.0,659.9 L1460.0,646.9 L1463.0,655.3 L1466.0,653.5 L1469.0,653.1 L1472.0,662.5 L1475.0,654.2 L1478.0,658.3 L1481.0,657.4 L1484.0,656.4 L1487.0,658.9 L1490.0,656.3 L1493.0,651.6 L1496.0,645.5 L1499.0,651.4 L1502.0,653.9 L1505.0,641.1 L1508.0,647.2 L1511.0,643.8 L1514.0,647.9 L1517.0,631.2 L1520.0,651.1 L1523.0,639.3 L1526.0,630.8 L1529.0,647.0 L1532.0,649.2 L1535.0,650.7 L1538.0,632.3 L1541.0,649.5 L1544.0,635.7 L1547.0,648.7 L1550.0,626.9 L1553.0,637.9 L1556.0,644.9 L1559.0,640.3 L1562.0,644.3 L1565.0,631.9 L1568.0,619.1 L1571.0,619.2 L1574.0,645.5 L1577.0,642.5 L1580.0,641.9 L1583.0,652.6 L1586.0,657.5 L1589.0,659.7 L1592.0,655.7 L1595.0,656.5 L1598.0,653.4 L1601.0,646.0 L1604.0,658.3 L1607.0,658.9 L1610.0,661.6 L1613.0,663.6 L1616.0,658.4 L1619.0,645.5 L1622.0,643.1 L1625.0,644.3 L1628.0,642.9 L1631.0,647.0 L1634.0,649.3 L1637.0,663.1 L1640.0,658.0 L1643.0,649.7 L1646.0,666.4 L1649.0,662.6 L1652.0,658.2 L1655.0,659.8 L1658.0,656.4 L1661.0,633.3 L1664.0,649.4 L1667.0,660.7 L1670.0,660.5 L1673.0,659.4 L1676.0,645.4 L1679.0,656.2 L1682.0,644.3 L1685.0,644.9 L1688.0,645.5 L1691.0,652.1 L1694.0,663.0 L1697.0,658.6 L1700.0,650.5 L1703.0,649.9 L1706.0,645.9 L1709.0,653.0 L1712.0,651.1 L1715.0,633.9 L1718.0,626.5 L1721.0,652.2 L1724.0,651.2 L1727.0,659.2 L1730.0,656.2 L1733.0,658.8 L1736.0,656.4 L1739.0,650.2 L1742.0,657.1 L1745.0,645.3 L1748.0,641.6 L1751.0,650.5 L1754.0,644.9 L1757.0,655.3 L1760.0,647.5 L1763.0,658.7 L1766.0,646.7 L1769.0,639.7 L1772.0,625.9 L1775.0,646.0 L1778.0,647.5 L1781.0,650.7 L1784.0,657.3 L1787.0,654.0 L1790.0,651.2 L1793.0,637.8 L1796.0,648.1 L1799.0,646.6 L1802.0,641.6 L1805.0,649.6 L1808.0,656.6 L1811.0,653.6 L1814.0,644.7 L1817.0,628.2 L1820.0,641.4 L1823.0,627.0 L1826.0,629.3 L1829.0,621.2 L1832.0,643.5 L1835.0,649.1 L1838.0,646.2 L1841.0,653.4 L1844.0,651.3 L1847.0,655.8 L1850.0,663.1 L1853.0,657.1 L1856.0,649.2 L1859.0,638.5 L1862.0,640.8 L1865.0,643.5 L1868.0,642.0 L1871.0,649.6 L1874.0,652.0 L1877.0,652.0" fill="none" stroke="#6ed0e0" stroke-width="1.2" stroke-opacity="0.9" stroke-linejoin="round"/><path d="M1424.0,638.1 L1427.0,657.9 L1430.0,657.7 L1433.0,658.2 L1436.0,656.0 L1439.0,658.4 L1442.0,659.9 L1445.0,660.1 L1448.0,658.1 L1451.0,654.2 L1454.0,655.9 L1457.0,646.2 L1460.0,646.7 L1463.0,647.0 L1466.0,656.0 L1469.0,663.9 L1472.0,661.8 L1475.0,655.2 L1478.0,651.2 L1481.0,653.0 L1484.0,653.2 L1487.0,655.2 L1490.0,638.7 L1493.0,655.8 L1496.0,640.0 L1499.0,636.5 L1502.0,647.9 L1505.0,626.0 L1508.0,657.1 L1511.0,653.6 L1514.0,655.3 L1517.0,640.4 L1520.0,644.3 L1523.0,650.4 L1526.0,634.5 L1529.0,648.6 L1532.0,635.2 L1535.0,649.3 L1538.0,640.6 L1541.0,626.6 L1544.0,630.0 L1547.0,619.9 L1550.0,660.5 L1553.0,639.2 L1556.0,629.0 L1559.0,596.0 L1562.0,632.7 L1565.0,655.4 L1568.0,645.5 L1571.0,636.0 L1574.0,647.8 L1577.0,641.9 L1580.0,655.0 L1583.0,654.8 L1586.0,651.8 L1589.0,650.9 L1592.0,652.9 L1595.0,662.5 L1598.0,654.8 L1601.0,659.4 L1604.0,660.6 L1607.0,662.2 L1610.0,666.4 L1613.0,660.6 L1616.0,661.1 L1619.0,650.2 L1622.0,638.5 L1625.0,648.0 L1628.0,645.2 L1631.0,646.2 L1634.0,661.1 L1637.0,663.4 L1640.0,659.6 L1643.0,666.5 L1646.0,667.6 L1649.0,663.4 L1652.0,654.1 L1655.0,659.3 L1658.0,659.7 L1661.0,653.4 L1664.0,655.2 L1667.0,658.2 L1670.0,656.4 L1673.0,660.6 L1676.0,655.7 L1679.0,652.4 L1682.0,656.9 L1685.0,656.2 L1688.0,658.8 L1691.0,653.4 L1694.0,658.8 L1697.0,656.9 L1700.0,662.7 L1703.0,645.7 L1706.0,655.1 L1709.0,664.0 L1712.0,644.8 L1715.0,637.3 L1718.0,612.4 L1721.0,651.1 L1724.0,658.0 L1727.0,659.3 L1730.0,650.7 L1733.0,658.0 L1736.0,650.5 L1739.0,660.0 L1742.0,660.9 L1745.0,649.6 L1748.0,649.6 L1751.0,653.8 L1754.0,659.6 L1757.0,656.9 L1760.0,646.9 L1763.0,666.5 L1766.0,661.1 L1769.0,644.6 L1772.0,643.5 L1775.0,649.3 L1778.0,634.1 L1781.0,653.4 L1784.0,653.3 L1787.0,648.5 L1790.0,644.8 L1793.0,632.5 L1796.0,651.9 L1799.0,620.7 L1802.0,655.7 L1805.0,668.2 L1808.0,663.4 L1811.0,651.6 L1814.0,646.0 L1817.0,641.1 L1820.0,618.7 L1823.0,624.5 L1826.0,640.1 L1829.0,623.0 L1832.0,636.9 L1835.0,636.1 L1838.0,638.2 L1841.0,652.1 L1844.0,645.4 L1847.0,646.6 L1850.0,653.9 L1853.0,647.9 L1856.0,651.6 L1859.0,633.4 L1862.0,637.6 L1865.0,596.6 L1868.0,636.2 L1871.0,644.9 L1874.0,646.1 L1877.0,655.1" fill="none" stroke="#ef843c" stroke-width="1.2" stroke-opacity="0.9" stroke-linejoin="round"/><path d="M1424.0,656.4 L1427.0,652.2 L1430.0,653.1 L1433.0,654.3 L1436.0,655.1 L1439.0,659.3 L1442.0,657.4 L1445.0,657.9 L1448.0,659.7 L1451.0,654.5 L1454.0,663.2 L1457.0,655.4 L1460.0,653.7 L1463.0,655.7 L1466.0,662.4 L1469.0,660.7 L1472.0,662.1 L1475.0,657.5 L1478.0,663.3 L1481.0,658.4 L1484.0,656.7 L1487.0,662.3 L1490.0,657.4 L1493.0,650.8 L1496.0,633.4 L1499.0,642.9 L1502.0,645.3 L1505.0,628.8 L1508.0,651.2 L1511.0,648.9 L1514.0,650.2 L1517.0,646.2 L1520.0,656.7 L1523.0,646.1 L1526.0,645.0 L1529.0,654.1 L1532.0,647.0 L1535.0,646.8 L1538.0,653.2 L1541.0,617.1 L1544.0,620.8 L1547.0,637.1 L1550.0,646.2 L1553.0,660.9 L1556.0,635.6 L1559.0,638.0 L1562.0,640.4 L1565.0,644.3 L1568.0,639.7 L1571.0,630.8 L1574.0,641.2 L1577.0,639.1 L1580.0,652.2 L1583.0,657.9 L1586.0,660.7 L1589.0,634.5 L1592.0,650.4 L1595.0,658.8 L1598.0,658.9 L1601.0,662.1 L1604.0,663.5 L1607.0,658.1 L1610.0,666.3 L1613.0,668.1 L1616.0,660.9 L1619.0,653.3 L1622.0,659.6 L1625.0,656.4 L1628.0,648.2 L1631.0,645.4 L1634.0,657.1 L1637.0,661.4 L1640.0,654.7 L1643.0,662.3 L1646.0,666.9 L1649.0,660.1 L1652.0,653.3 L1655.0,658.4 L1658.0,650.7 L1661.0,650.6 L1664.0,649.6 L1667.0,648.9 L1670.0,660.2 L1673.0,655.1 L1676.0,640.5 L1679.0,658.5 L1682.0,651.9 L1685.0,651.9 L1688.0,660.6 L1691.0,654.9 L1694.0,665.3 L1697.0,660.9 L1700.0,657.0 L1703.0,646.1 L1706.0,639.1 L1709.0,651.7 L1712.0,648.9 L1715.0,638.1 L1718.0,649.3 L1721.0,634.6 L1724.0,654.9 L1727.0,652.3 L1730.0,651.9 L1733.0,656.2 L1736.0,657.5 L1739.0,655.6 L1742.0,653.9 L1745.0,648.5 L1748.0,641.0 L1751.0,649.0 L1754.0,659.0 L1757.0,661.1 L1760.0,659.1 L1763.0,655.0 L1766.0,659.0 L1769.0,641.7 L1772.0,640.9 L1775.0,653.0 L1778.0,648.5 L1781.0,652.7 L1784.0,654.8 L1787.0,643.2 L1790.0,645.0 L1793.0,660.8 L1796.0,661.1 L1799.0,646.2 L1802.0,639.8 L1805.0,641.9 L1808.0,645.8 L1811.0,661.0 L1814.0,632.1 L1817.0,628.4 L1820.0,631.2 L1823.0,617.2 L1826.0,639.4 L1829.0,633.6 L1832.0,638.6 L1835.0,651.0 L1838.0,646.8 L1841.0,644.2 L1844.0,648.2 L1847.0,649.0 L1850.0,652.3 L1853.0,655.7 L1856.0,658.9 L1859.0,648.3 L1862.0,629.7 L1865.0,632.7 L1868.0,649.0 L1871.0,651.5 L1874.0,657.3 L1877.0,658.9" fill="none" stroke="#e24d42" stroke-width="1.2" stroke-opacity="0.9" stroke-linejoin="round"/><path d="M1424.0,659.6 L1427.0,656.1 L1430.0,658.3 L1433.0,662.0 L1436.0,656.0 L1439.0,657.8 L1442.0,655.3 L1445.0,660.3 L1448.0,658.8 L1451.0,649.2 L1454.0,656.8 L1457.0,659.1 L1460.0,655.6 L1463.0,650.0 L1466.0,658.5 L1469.0,656.0 L1472.0,659.6 L1475.0,655.2 L1478.0,653.5 L1481.0,651.3 L1484.0,658.1 L1487.0,648.1 L1490.0,645.3 L1493.0,653.5 L1496.0,626.1 L1499.0,635.2 L1502.0,641.1 L1505.0,645.8 L1508.0,651.0 L1511.0,636.4 L1514.0,641.7 L1517.0,637.6 L1520.0,657.5 L1523.0,650.7 L1526.0,642.3 L1529.0,634.9 L1532.0,655.4 L1535.0,661.0 L1538.0,643.8 L1541.0,651.3 L1544.0,646.3 L1547.0,640.7 L1550.0,643.5 L1553.0,638.4 L1556.0,639.9 L1559.0,652.2 L1562.0,652.1 L1565.0,646.7 L1568.0,651.3 L1571.0,653.7 L1574.0,652.7 L1577.0,651.0 L1580.0,646.5 L1583.0,643.3 L1586.0,645.0 L1589.0,651.5 L1592.0,655.9 L1595.0,662.2 L1598.0,657.3 L1601.0,658.2 L1604.0,664.6 L1607.0,657.0 L1610.0,660.9 L1613.0,663.0 L1616.0,658.0 L1619.0,655.9 L1622.0,651.5 L1625.0,654.2 L1628.0,641.7 L1631.0,652.5 L1634.0,658.3 L1637.0,662.9 L1640.0,656.4 L1643.0,660.7 L1646.0,667.2 L1649.0,661.1 L1652.0,657.4 L1655.0,640.5 L1658.0,653.8 L1661.0,650.5 L1664.0,652.5 L1667.0,658.7 L1670.0,651.6 L1673.0,660.3 L1676.0,652.6 L1679.0,648.8 L1682.0,658.8 L1685.0,661.6 L1688.0,659.2 L1691.0,650.1 L1694.0,660.8 L1697.0,661.8 L1700.0,665.5 L1703.0,654.0 L1706.0,653.5 L1709.0,659.6 L1712.0,648.4 L1715.0,649.6 L1718.0,639.0 L1721.0,651.9 L1724.0,652.6 L1727.0,656.9 L1730.0,653.0 L1733.0,657.5 L1736.0,653.7 L1739.0,656.1 L1742.0,650.3 L1745.0,659.6 L1748.0,653.2 L1751.0,654.2 L1754.0,663.0 L1757.0,656.1 L1760.0,639.3 L1763.0,644.7 L1766.0,648.2 L1769.0,642.5 L1772.0,648.6 L1775.0,655.9 L1778.0,651.9 L1781.0,651.6 L1784.0,658.5 L1787.0,648.8 L1790.0,647.3 L1793.0,601.9 L1796.0,648.6 L1799.0,655.6 L1802.0,650.3 L1805.0,651.1 L1808.0,649.6 L1811.0,636.7 L1814.0,652.7 L1817.0,648.2 L1820.0,634.3 L1823.0,606.5 L1826.0,628.2 L1829.0,640.3 L1832.0,645.2 L1835.0,649.2 L1838.0,660.3 L1841.0,659.0 L1844.0,652.9 L1847.0,659.2 L1850.0,656.9 L1853.0,650.7 L1856.0,649.3 L1859.0,634.4 L1862.0,632.6 L1865.0,636.7 L1868.0,648.2 L1871.0,650.0 L1874.0,644.2 L1877.0,653.4" fill="none" stroke="#1f78c1" stroke-width="1.2" stroke-opacity="0.9" stroke-linejoin="round"/><path d="M1424.0,648.6 L1427.0,658.0 L1430.0,651.4 L1433.0,655.6 L1436.0,658.3 L1439.0,660.7 L1442.0,658.6 L1445.0,656.9 L1448.0,654.8 L1451.0,655.9 L1454.0,650.7 L1457.0,650.8 L1460.0,653.2 L1463.0,657.3 L1466.0,663.4 L1469.0,662.2 L1472.0,661.2 L1475.0,654.2 L1478.0,643.6 L1481.0,664.3 L1484.0,661.7 L1487.0,645.9 L1490.0,639.0 L1493.0,638.6 L1496.0,620.8 L1499.0,634.2 L1502.0,631.5 L1505.0,647.4 L1508.0,656.7 L1511.0,659.6 L1514.0,653.8 L1517.0,649.6 L1520.0,650.7 L1523.0,641.6 L1526.0,653.7 L1529.0,649.1 L1532.0,645.2 L1535.0,645.6 L1538.0,653.7 L1541.0,647.3 L1544.0,636.9 L1547.0,643.7 L1550.0,631.4 L1553.0,638.6 L1556.0,622.5 L1559.0,635.8 L1562.0,647.9 L1565.0,648.9 L1568.0,657.2 L1571.0,639.4 L1574.0,645.6 L1577.0,649.6 L1580.0,659.9 L1583.0,659.9 L1586.0,653.8 L1589.0,649.3 L1592.0,650.9 L1595.0,658.6 L1598.0,650.8 L1601.0,658.7 L1604.0,664.7 L1607.0,662.2 L1610.0,663.8 L1613.0,659.7 L1616.0,656.3 L1619.0,668.4 L1622.0,662.1 L1625.0,662.8 L1628.0,644.2 L1631.0,651.1 L1634.0,661.1 L1637.0,662.4 L1640.0,652.3 L1643.0,660.4 L1646.0,667.1 L1649.0,665.0 L1652.0,656.5 L1655.0,656.6 L1658.0,658.6 L1661.0,658.4 L1664.0,655.9 L1667.0,652.4 L1670.0,657.3 L1673.0,659.4 L1676.0,667.3 L1679.0,650.4 L1682.0,659.3 L1685.0,646.2 L1688.0,658.0 L1691.0,652.5 L1694.0,660.9 L1697.0,656.8 L1700.0,651.9 L1703.0,653.1 L1706.0,647.0 L1709.0,658.6 L1712.0,657.1 L1715.0,656.6 L1718.0,645.3 L1721.0,652.7 L1724.0,653.6 L1727.0,655.7 L1730.0,650.6 L1733.0,656.5 L1736.0,655.0 L1739.0,658.7 L1742.0,644.1 L1745.0,643.7 L1748.0,652.2 L1751.0,655.1 L1754.0,661.5 L1757.0,657.5 L1760.0,657.7 L1763.0,649.2 L1766.0,658.5 L1769.0,647.2 L1772.0,641.8 L1775.0,650.4 L1778.0,644.7 L1781.0,645.3 L1784.0,649.6 L1787.0,654.0 L1790.0,637.2 L1793.0,647.1 L1796.0,650.2 L1799.0,647.1 L1802.0,650.2 L1805.0,652.8 L1808.0,649.0 L1811.0,618.3 L1814.0,649.4 L1817.0,643.5 L1820.0,649.2 L1823.0,644.2 L1826.0,638.2 L1829.0,642.6 L1832.0,640.1 L1835.0,638.4 L1838.0,645.5 L1841.0,650.8 L1844.0,643.2 L1847.0,653.0 L1850.0,632.5 L1853.0,643.1 L1856.0,651.8 L1859.0,629.8 L1862.0,611.4 L1865.0,613.6 L1868.0,612.1 L1871.0,644.0 L1874.0,650.9 L1877.0,649.5" fill="none" stroke="#447ebc" stroke-width="1.2" stroke-opacity="0.9" stroke-linejoin="round"/><path d="M1424.0,658.8 L1427.0,663.5 L1430.0,660.3 L1433.0,656.7 L1436.0,659.5 L1439.0,655.9 L1442.0,656.9 L1445.0,654.7 L1448.0,646.8 L1451.0,639.7 L1454.0,639.7 L1457.0,642.5 L1460.0,650.1 L1463.0,655.7 L1466.0,657.0 L1469.0,650.5 L1472.0,660.9 L1475.0,661.7 L1478.0,655.9 L1481.0,650.1 L1484.0,662.1 L1487.0,652.3 L1490.0,645.7 L1493.0,657.2 L1496.0,627.7 L1499.0,644.7 L1502.0,630.0 L1505.0,642.3 L1508.0,642.2 L1511.0,652.2 L1514.0,638.0 L1517.0,617.8 L1520.0,639.4 L1523.0,639.6 L1526.0,636.7 L1529.0,660.7 L1532.0,667.2 L1535.0,648.5 L1538.0,628.0 L1541.0,611.7 L1544.0,625.1 L1547.0,634.1 L1550.0,642.0 L1553.0,620.6 L1556.0,629.9 L1559.0,631.1 L1562.0,649.6 L1565.0,654.6 L1568.0,648.3 L1571.0,645.8 L1574.0,662.5 L1577.0,658.2 L1580.0,656.1 L1583.0,652.6 L1586.0,662.2 L1589.0,650.2 L1592.0,659.5 L1595.0,658.5 L1598.0,661.0 L1601.0,659.3 L1604.0,660.7 L1607.0,661.7 L1610.0,661.5 L1613.0,658.7 L1616.0,652.0 L1619.0,653.0 L1622.0,664.7 L1625.0,650.6 L1628.0,640.6 L1631.0,646.2 L1634.0,648.1 L1637.0,663.7 L1640.0,656.3 L1643.0,660.6 L1646.0,667.6 L1649.0,661.8 L1652.0,652.2 L1655.0,654.0 L1658.0,654.5 L1661.0,639.5 L1664.0,637.7 L1667.0,641.1 L1670.0,653.4 L1673.0,650.5 L1676.0,650.7 L1679.0,652.1 L1682.0,648.5 L1685.0,656.3 L1688.0,650.7 L1691.0,648.5 L1694.0,652.8 L1697.0,655.7 L1700.0,655.3 L1703.0,650.5 L1706.0,647.3 L1709.0,642.5 L1712.0,647.5 L1715.0,640.4 L1718.0,632.7 L1721.0,647.4 L1724.0,644.8 L1727.0,646.2 L1730.0,657.4 L1733.0,661.2 L1736.0,651.0 L1739.0,653.1 L1742.0,652.6 L1745.0,653.1 L1748.0,637.0 L1751.0,645.4 L1754.0,652.9 L1757.0,657.9 L1760.0,644.7 L1763.0,640.3 L1766.0,643.0 L1769.0,637.0 L1772.0,634.6 L1775.0,645.5 L1778.0,654.7 L1781.0,640.5 L1784.0,644.3 L1787.0,645.5 L1790.0,647.2 L1793.0,647.1 L1796.0,632.4 L1799.0,621.7 L1802.0,634.6 L1805.0,646.2 L1808.0,636.2 L1811.0,626.6 L1814.0,619.9 L1817.0,634.8 L1820.0,634.7 L1823.0,623.1 L1826.0,636.1 L1829.0,631.8 L1832.0,625.0 L1835.0,633.3 L1838.0,640.9 L1841.0,653.5 L1844.0,660.1 L1847.0,652.7 L1850.0,654.5 L1853.0,651.6 L1856.0,624.4 L1859.0,626.2 L1862.0,597.4 L1865.0,599.5 L1868.0,642.5 L1871.0,638.9 L1874.0,611.9 L1877.0,646.8" fill="none" stroke="#c15c17" stroke-width="1.2" stroke-opacity="0.9" stroke-linejoin="round"/><path d="M1424.0,642.8 L1427.0,660.3 L1430.0,655.3 L1433.0,653.3 L1436.0,652.9 L1439.0,654.8 L1442.0,659.7 L1445.0,657.3 L1448.0,652.1 L1451.0,657.8 L1454.0,653.7 L1457.0,652.1 L1460.0,660.0 L1463.0,652.4 L1466.0,646.7 L1469.0,655.6 L1472.0,665.6 L1475.0,660.4 L1478.0,656.8 L1481.0,658.7 L1484.0,656.7 L1487.0,653.8 L1490.0,646.6 L1493.0,651.2 L1496.0,632.6 L1499.0,629.7 L1502.0,636.7 L1505.0,644.3 L1508.0,649.9 L1511.0,648.4 L1514.0,651.6 L1517.0,642.7 L1520.0,648.4 L1523.0,625.6 L1526.0,636.6 L1529.0,646.6 L1532.0,648.1 L1535.0,639.0 L1538.0,634.9 L1541.0,640.9 L1544.0,648.0 L1547.0,638.0 L1550.0,628.5 L1553.0,646.6 L1556.0,639.3 L1559.0,626.4 L1562.0,626.9 L1565.0,643.0 L1568.0,644.8 L1571.0,629.2 L1574.0,621.9 L1577.0,641.9 L1580.0,641.4 L1583.0,651.6 L1586.0,654.9 L1589.0,650.7 L1592.0,655.6 L1595.0,659.4 L1598.0,652.0 L1601.0,659.4 L1604.0,661.8 L1607.0,659.6 L1610.0,663.7 L1613.0,662.1 L1616.0,652.0 L1619.0,647.7 L1622.0,641.3 L1625.0,653.9 L1628.0,638.1 L1631.0,644.8 L1634.0,657.4 L1637.0,664.4 L1640.0,660.4 L1643.0,661.4 L1646.0,667.9 L1649.0,662.5 L1652.0,661.5 L1655.0,659.8 L1658.0,652.5 L1661.0,641.6 L1664.0,651.2 L1667.0,662.4 L1670.0,658.5 L1673.0,649.9 L1676.0,652.9 L1679.0,649.5 L1682.0,641.4 L1685.0,643.1 L1688.0,654.5 L1691.0,652.5 L1694.0,662.4 L1697.0,659.9 L1700.0,655.2 L1703.0,652.1 L1706.0,642.9 L1709.0,634.4 L1712.0,650.5 L1715.0,635.4 L1718.0,628.4 L1721.0,660.6 L1724.0,648.7 L1727.0,655.1 L1730.0,662.5 L1733.0,660.6 L1736.0,658.7 L1739.0,660.1 L1742.0,654.9 L1745.0,649.9 L1748.0,656.3 L1751.0,651.2 L1754.0,657.1 L1757.0,651.2 L1760.0,643.6 L1763.0,634.1 L1766.0,658.4 L1769.0,652.3 L1772.0,620.4 L1775.0,650.3 L1778.0,642.6 L1781.0,643.3 L1784.0,651.3 L1787.0,648.1 L1790.0,641.5 L1793.0,657.5 L1796.0,647.1 L1799.0,641.5 L1802.0,636.7 L1805.0,635.9 L1808.0,651.0 L1811.0,650.4 L1814.0,637.1 L1817.0,603.7 L1820.0,617.2 L1823.0,635.9 L1826.0,635.3 L1829.0,634.1 L1832.0,646.5 L1835.0,649.5 L1838.0,666.0 L1841.0,655.2 L1844.0,655.3 L1847.0,660.9 L1850.0,661.0 L1853.0,652.2 L1856.0,642.9 L1859.0,640.4 L1862.0,635.3 L1865.0,634.3 L1868.0,637.5 L1871.0,635.2 L1874.0,641.5 L1877.0,657.5" fill="none" stroke="#508642" stroke-width="1.2" stroke-opacity="0.9" stroke-linejoin="round"/><path d="M1424.0,649.4 L1427.0,658.3 L1430.0,664.9 L1433.0,654.5 L1436.0,656.4 L1439.0,655.7 L1442.0,654.2 L1445.0,656.7 L1448.0,656.8 L1451.0,653.2 L1454.0,649.8 L1457.0,633.4 L1460.0,645.3 L1463.0,654.5 L1466.0,665.7 L1469.0,659.6 L1472.0,660.9 L1475.0,660.3 L1478.0,654.3 L1481.0,660.0 L1484.0,657.2 L1487.0,660.7 L1490.0,657.5 L1493.0,644.1 L1496.0,634.2 L1499.0,638.7 L1502.0,647.1 L1505.0,648.4 L1508.0,658.7 L1511.0,654.6 L1514.0,642.8 L1517.0,635.5 L1520.0,647.3 L1523.0,646.9 L1526.0,647.0 L1529.0,642.1 L1532.0,627.0 L1535.0,633.1 L1538.0,637.9 L1541.0,629.3 L1544.0,633.4 L1547.0,634.3 L1550.0,637.0 L1553.0,636.8 L1556.0,637.0 L1559.0,632.4 L1562.0,650.2 L1565.0,653.5 L1568.0,646.3 L1571.0,639.4 L1574.0,642.4 L1577.0,650.2 L1580.0,658.6 L1583.0,656.8 L1586.0,648.6 L1589.0,648.7 L1592.0,652.9 L1595.0,661.7 L1598.0,657.5 L1601.0,657.8 L1604.0,661.5 L1607.0,662.5 L1610.0,662.4 L1613.0,661.4 L1616.0,661.6 L1619.0,642.7 L1622.0,641.7 L1625.0,648.3 L1628.0,648.0 L1631.0,656.4 L1634.0,650.5 L1637.0,661.0 L1640.0,651.8 L1643.0,657.1 L1646.0,667.0 L1649.0,665.4 L1652.0,661.6 L1655.0,661.5 L1658.0,650.5 L1661.0,655.5 L1664.0,653.2 L1667.0,652.1 L1670.0,658.4 L1673.0,647.2 L1676.0,642.1 L1679.0,652.2 L1682.0,653.1 L1685.0,659.9 L1688.0,657.7 L1691.0,648.2 L1694.0,660.2 L1697.0,661.7 L1700.0,652.2 L1703.0,653.6 L1706.0,642.9 L1709.0,650.0 L1712.0,654.2 L1715.0,643.6 L1718.0,642.4 L1721.0,659.8 L1724.0,653.0 L1727.0,661.3 L1730.0,658.3 L1733.0,662.9 L1736.0,661.6 L1739.0,652.8 L1742.0,653.0 L1745.0,645.3 L1748.0,626.9 L1751.0,653.9 L1754.0,661.9 L1757.0,657.8 L1760.0,657.6 L1763.0,650.1 L1766.0,651.4 L1769.0,639.1 L1772.0,630.3 L1775.0,647.4 L1778.0,639.8 L1781.0,625.1 L1784.0,639.5 L1787.0,645.3 L1790.0,641.3 L1793.0,623.9 L1796.0,653.8 L1799.0,645.7 L1802.0,651.2 L1805.0,631.4 L1808.0,637.1 L1811.0,645.8 L1814.0,625.8 L1817.0,638.7 L1820.0,638.5 L1823.0,610.1 L1826.0,628.3 L1829.0,623.2 L1832.0,650.5 L1835.0,656.1 L1838.0,648.9 L1841.0,643.2 L1844.0,641.5 L1847.0,645.5 L1850.0,657.1 L1853.0,645.5 L1856.0,655.2 L1859.0,632.9 L1862.0,617.7 L1865.0,646.2 L1868.0,628.7 L1871.0,623.7 L1874.0,640.6 L1877.0,645.4" fill="none" stroke="#cca300" stroke-width="1.2" stroke-opacity="0.9" stroke-linejoin="round"/><path d="M1424.0,645.4 L1427.0,657.6 L1430.0,650.3 L1433.0,659.7 L1436.0,654.5 L1439.0,663.4 L1442.0,656.9 L1445.0,662.9 L1448.0,660.8 L1451.0,636.0 L1454.0,650.7 L1457.0,650.5 L1460.0,658.9 L1463.0,656.3 L1466.0,655.3 L1469.0,657.3 L1472.0,667.6 L1475.0,664.7 L1478.0,665.7 L1481.0,658.3 L1484.0,652.1 L1487.0,651.7 L1490.0,647.7 L1493.0,649.2 L1496.0,653.8 L1499.0,640.1 L1502.0,634.4 L1505.0,648.9 L1508.0,644.1 L1511.0,654.1 L1514.0,643.9 L1517.0,648.5 L1520.0,654.1 L1523.0,648.9 L1526.0,657.6 L1529.0,658.2 L1532.0,649.3 L1535.0,645.7 L1538.0,638.8 L1541.0,626.9 L1544.0,651.0 L1547.0,655.1 L1550.0,650.2 L1553.0,654.1 L1556.0,652.6 L1559.0,640.5 L1562.0,646.7 L1565.0,653.1 L1568.0,641.1 L1571.0,637.8 L1574.0,643.0 L1577.0,647.1 L1580.0,654.1 L1583.0,658.2 L1586.0,652.7 L1589.0,651.4 L1592.0,659.6 L1595.0,659.0 L1598.0,659.2 L1601.0,656.0 L1604.0,661.8 L1607.0,663.8 L1610.0,665.3 L1613.0,664.0 L1616.0,658.4 L1619.0,655.0 L1622.0,642.4 L1625.0,651.5 L1628.0,651.9 L1631.0,652.8 L1634.0,663.3 L1637.0,661.9 L1640.0,664.8 L1643.0,662.2 L1646.0,667.5 L1649.0,663.2 L1652.0,661.1 L1655.0,653.6 L1658.0,654.0 L1661.0,657.3 L1664.0,657.5 L1667.0,656.4 L1670.0,659.1 L1673.0,653.0 L1676.0,656.1 L1679.0,654.7 L1682.0,650.0 L1685.0,653.8 L1688.0,658.7 L1691.0,653.4 L1694.0,663.2 L1697.0,663.7 L1700.0,655.0 L1703.0,650.0 L1706.0,654.8 L1709.0,653.2 L1712.0,656.4 L1715.0,644.1 L1718.0,629.9 L1721.0,641.0 L1724.0,647.0 L1727.0,658.0 L1730.0,657.9 L1733.0,658.5 L1736.0,655.1 L1739.0,661.3 L1742.0,657.9 L1745.0,643.9 L1748.0,647.4 L1751.0,655.9 L1754.0,656.7 L1757.0,657.0 L1760.0,644.5 L1763.0,650.2 L1766.0,665.0 L1769.0,665.1 L1772.0,651.4 L1775.0,651.1 L1778.0,641.6 L1781.0,651.7 L1784.0,654.1 L1787.0,655.8 L1790.0,648.9 L1793.0,638.1 L1796.0,650.9 L1799.0,651.2 L1802.0,650.7 L1805.0,653.5 L1808.0,652.3 L1811.0,649.9 L1814.0,631.2 L1817.0,639.4 L1820.0,644.5 L1823.0,644.4 L1826.0,627.1 L1829.0,642.8 L1832.0,653.0 L1835.0,649.8 L1838.0,648.5 L1841.0,663.0 L1844.0,659.3 L1847.0,655.6 L1850.0,655.4 L1853.0,661.4 L1856.0,651.8 L1859.0,649.5 L1862.0,635.9 L1865.0,624.5 L1868.0,641.0 L1871.0,651.8 L1874.0,636.7 L1877.0,651.2" fill="none" stroke="#70dbed" stroke-width="1.2" stroke-opacity="0.9" stroke-linejoin="round"/><path d="M1424.0,646.3 L1427.0,651.8 L1430.0,653.0 L1433.0,658.5 L1436.0,640.4 L1439.0,659.9 L1442.0,660.9 L1445.0,661.6 L1448.0,651.0 L1451.0,658.8 L1454.0,665.7 L1457.0,663.2 L1460.0,657.9 L1463.0,656.8 L1466.0,656.0 L1469.0,659.6 L1472.0,661.7 L1475.0,655.5 L1478.0,649.5 L1481.0,655.8 L1484.0,660.6 L1487.0,651.9 L1490.0,647.6 L1493.0,654.4 L1496.0,632.5 L1499.0,634.6 L1502.0,624.3 L1505.0,641.4 L1508.0,642.9 L1511.0,645.5 L1514.0,654.2 L1517.0,637.5 L1520.0,659.9 L1523.0,635.6 L1526.0,649.4 L1529.0,648.0 L1532.0,646.1 L1535.0,662.1 L1538.0,640.0 L1541.0,624.8 L1544.0,618.2 L1547.0,619.3 L1550.0,641.7 L1553.0,635.3 L1556.0,652.3 L1559.0,644.9 L1562.0,645.2 L1565.0,652.8 L1568.0,649.3 L1571.0,631.4 L1574.0,648.3 L1577.0,636.3 L1580.0,652.9 L1583.0,656.3 L1586.0,652.6 L1589.0,656.3 L1592.0,652.5 L1595.0,659.9 L1598.0,656.1 L1601.0,657.2 L1604.0,660.9 L1607.0,660.2 L1610.0,664.9 L1613.0,666.1 L1616.0,654.7 L1619.0,661.4 L1622.0,646.1 L1625.0,651.4 L1628.0,664.4 L1631.0,655.7 L1634.0,660.3 L1637.0,663.6 L1640.0,666.7 L1643.0,660.4 L1646.0,666.4 L1649.0,650.5 L1652.0,655.7 L1655.0,659.2 L1658.0,652.0 L1661.0,650.8 L1664.0,652.2 L1667.0,648.3 L1670.0,655.8 L1673.0,653.6 L1676.0,660.2 L1679.0,658.8 L1682.0,659.8 L1685.0,654.1 L1688.0,653.0 L1691.0,659.0 L1694.0,657.9 L1697.0,655.8 L1700.0,658.8 L1703.0,654.0 L1706.0,654.2 L1709.0,648.8 L1712.0,659.2 L1715.0,659.7 L1718.0,657.3 L1721.0,653.5 L1724.0,652.8 L1727.0,652.0 L1730.0,651.2 L1733.0,655.7 L1736.0,657.0 L1739.0,652.8 L1742.0,656.7 L1745.0,651.2 L1748.0,655.8 L1751.0,663.4 L1754.0,664.7 L1757.0,665.1 L1760.0,645.5 L1763.0,644.8 L1766.0,652.6 L1769.0,661.5 L1772.0,629.1 L1775.0,644.6 L1778.0,652.6 L1781.0,655.2 L1784.0,645.9 L1787.0,644.6 L1790.0,642.6 L1793.0,646.3 L1796.0,645.0 L1799.0,631.1 L1802.0,638.2 L1805.0,638.8 L1808.0,662.2 L1811.0,650.2 L1814.0,642.6 L1817.0,650.3 L1820.0,631.8 L1823.0,615.6 L1826.0,630.7 L1829.0,652.8 L1832.0,638.8 L1835.0,643.3 L1838.0,648.6 L1841.0,646.4 L1844.0,652.7 L1847.0,661.0 L1850.0,653.6 L1853.0,653.6 L1856.0,655.8 L1859.0,626.7 L1862.0,636.0 L1865.0,643.9 L1868.0,635.9 L1871.0,637.9 L1874.0,652.7 L1877.0,646.3" fill="none" stroke="#e0752d" stroke-width="1.2" stroke-opacity="0.9" stroke-linejoin="round"/><path d="M1424.0,657.3 L1427.0,655.9 L1430.0,655.5 L1433.0,657.8 L1436.0,665.1 L1439.0,661.4 L1442.0,657.4 L1445.0,653.2 L1448.0,659.0 L1451.0,657.7 L1454.0,660.3 L1457.0,655.2 L1460.0,663.4 L1463.0,652.2 L1466.0,654.6 L1469.0,658.1 L1472.0,659.2 L1475.0,661.1 L1478.0,651.1 L1481.0,650.3 L1484.0,637.1 L1487.0,656.4 L1490.0,643.1 L1493.0,650.4 L1496.0,651.3 L1499.0,659.4 L1502.0,633.9 L1505.0,654.5 L1508.0,650.7 L1511.0,654.0 L1514.0,649.4 L1517.0,642.8 L1520.0,652.0 L1523.0,636.6 L1526.0,645.0 L1529.0,646.2 L1532.0,648.9 L1535.0,648.5 L1538.0,640.0 L1541.0,625.2 L1544.0,648.2 L1547.0,647.1 L1550.0,656.9 L1553.0,654.2 L1556.0,641.3 L1559.0,628.2 L1562.0,637.4 L1565.0,651.0 L1568.0,653.2 L1571.0,639.1 L1574.0,645.2 L1577.0,656.0 L1580.0,652.2 L1583.0,657.9 L1586.0,658.4 L1589.0,656.0 L1592.0,654.3 L1595.0,655.4 L1598.0,656.2 L1601.0,658.3 L1604.0,663.9 L1607.0,661.3 L1610.0,664.1 L1613.0,662.8 L1616.0,654.9 L1619.0,644.4 L1622.0,649.5 L1625.0,654.9 L1628.0,648.7 L1631.0,659.7 L1634.0,665.4 L1637.0,664.8 L1640.0,660.9 L1643.0,656.9 L1646.0,667.1 L1649.0,661.3 L1652.0,657.0 L1655.0,661.3 L1658.0,656.5 L1661.0,658.0 L1664.0,658.1 L1667.0,652.6 L1670.0,654.4 L1673.0,654.9 L1676.0,644.6 L1679.0,647.9 L1682.0,660.8 L1685.0,656.4 L1688.0,660.3 L1691.0,659.2 L1694.0,665.2 L1697.0,665.7 L1700.0,658.6 L1703.0,655.2 L1706.0,639.6 L1709.0,649.2 L1712.0,661.5 L1715.0,641.4 L1718.0,640.7 L1721.0,654.6 L1724.0,647.6 L1727.0,652.7 L1730.0,654.5 L1733.0,656.8 L1736.0,660.2 L1739.0,658.1 L1742.0,657.2 L1745.0,660.8 L1748.0,641.3 L1751.0,659.3 L1754.0,662.9 L1757.0,660.6 L1760.0,648.6 L1763.0,649.5 L1766.0,646.3 L1769.0,651.2 L1772.0,641.2 L1775.0,646.5 L1778.0,648.0 L1781.0,647.2 L1784.0,655.1 L1787.0,656.1 L1790.0,655.0 L1793.0,645.0 L1796.0,650.9 L1799.0,649.7 L1802.0,644.4 L1805.0,644.7 L1808.0,653.2 L1811.0,642.4 L1814.0,658.2 L1817.0,664.4 L1820.0,639.7 L1823.0,625.2 L1826.0,648.5 L1829.0,633.5 L1832.0,642.8 L1835.0,637.2 L1838.0,640.9 L1841.0,629.8 L1844.0,640.8 L1847.0,647.5 L1850.0,653.4 L1853.0,645.8 L1856.0,648.5 L1859.0,631.9 L1862.0,645.4 L1865.0,635.1 L1868.0,629.8 L1871.0,648.6 L1874.0,651.0 L1877.0,652.1" fill="none" stroke="#bf1b00" stroke-width="1.2" stroke-opacity="0.9" stroke-linejoin="round"/><path d="M1424.0,654.9 L1427.0,659.2 L1430.0,659.6 L1433.0,655.2 L1436.0,658.2 L1439.0,659.5 L1442.0,663.7 L1445.0,661.3 L1448.0,659.7 L1451.0,645.8 L1454.0,660.1 L1457.0,659.8 L1460.0,660.8 L1463.0,654.0 L1466.0,657.0 L1469.0,661.7 L1472.0,663.2 L1475.0,658.0 L1478.0,655.7 L1481.0,661.9 L1484.0,655.7 L1487.0,631.8 L1490.0,601.0 L1493.0,635.2 L1496.0,638.3 L1499.0,647.8 L1502.0,642.0 L1505.0,641.8 L1508.0,651.8 L1511.0,651.7 L1514.0,655.0 L1517.0,642.1 L1520.0,655.1 L1523.0,650.0 L1526.0,647.6 L1529.0,662.2 L1532.0,641.7 L1535.0,644.9 L1538.0,650.5 L1541.0,639.4 L1544.0,636.5 L1547.0,642.0 L1550.0,640.3 L1553.0,622.9 L1556.0,636.6 L1559.0,645.7 L1562.0,649.4 L1565.0,661.3 L1568.0,637.1 L1571.0,655.5 L1574.0,658.8 L1577.0,655.3 L1580.0,656.8 L1583.0,660.4 L1586.0,660.4 L1589.0,661.4 L1592.0,653.7 L1595.0,656.7 L1598.0,652.3 L1601.0,661.0 L1604.0,662.8 L1607.0,660.7 L1610.0,663.0 L1613.0,664.8 L1616.0,657.7 L1619.0,650.9 L1622.0,624.0 L1625.0,656.8 L1628.0,647.1 L1631.0,658.6 L1634.0,660.7 L1637.0,662.7 L1640.0,660.7 L1643.0,665.2 L1646.0,668.0 L1649.0,664.3 L1652.0,661.9 L1655.0,662.4 L1658.0,667.8 L1661.0,660.1 L1664.0,656.3 L1667.0,655.5 L1670.0,658.7 L1673.0,659.9 L1676.0,657.2 L1679.0,656.2 L1682.0,656.2 L1685.0,658.4 L1688.0,653.9 L1691.0,659.9 L1694.0,664.9 L1697.0,660.2 L1700.0,656.7 L1703.0,648.8 L1706.0,655.5 L1709.0,661.7 L1712.0,661.6 L1715.0,659.9 L1718.0,649.7 L1721.0,653.9 L1724.0,655.9 L1727.0,660.2 L1730.0,660.3 L1733.0,659.9 L1736.0,654.2 L1739.0,653.6 L1742.0,657.7 L1745.0,645.8 L1748.0,649.1 L1751.0,653.6 L1754.0,660.5 L1757.0,654.4 L1760.0,652.9 L1763.0,651.5 L1766.0,653.1 L1769.0,656.0 L1772.0,648.5 L1775.0,658.5 L1778.0,660.2 L1781.0,631.8 L1784.0,647.7 L1787.0,656.6 L1790.0,650.7 L1793.0,645.3 L1796.0,657.8 L1799.0,655.0 L1802.0,646.7 L1805.0,642.1 L1808.0,654.5 L1811.0,653.9 L1814.0,648.5 L1817.0,620.8 L1820.0,635.9 L1823.0,641.3 L1826.0,659.1 L1829.0,644.4 L1832.0,654.2 L1835.0,653.6 L1838.0,657.2 L1841.0,649.6 L1844.0,649.0 L1847.0,656.9 L1850.0,663.2 L1853.0,658.2 L1856.0,654.3 L1859.0,651.6 L1862.0,645.4 L1865.0,653.1 L1868.0,642.0 L1871.0,647.9 L1874.0,667.7 L1877.0,664.5" fill="none" stroke="#705da0" stroke-width="1.2" stroke-opacity="0.9" stroke-linejoin="round"/><path d="M1424.0,649.9 L1427.0,653.5 L1430.0,650.5 L1433.0,655.1 L1436.0,659.8 L1439.0,655.6 L1442.0,659.8 L1445.0,651.8 L1448.0,648.5 L1451.0,650.6 L1454.0,658.8 L1457.0,644.8 L1460.0,650.7 L1463.0,649.7 L1466.0,655.6 L1469.0,657.8 L1472.0,660.7 L1475.0,655.2 L1478.0,658.6 L1481.0,649.4 L1484.0,649.7 L1487.0,634.2 L1490.0,649.7 L1493.0,663.2 L1496.0,625.9 L1499.0,640.9 L1502.0,642.6 L1505.0,643.8 L1508.0,654.3 L1511.0,657.8 L1514.0,637.1 L1517.0,624.5 L1520.0,641.7 L1523.0,616.8 L1526.0,573.8 L1529.0,621.6 L1532.0,631.0 L1535.0,640.5 L1538.0,626.4 L1541.0,614.5 L1544.0,643.0 L1547.0,639.6 L1550.0,642.3 L1553.0,633.5 L1556.0,641.0 L1559.0,624.6 L1562.0,641.4 L1565.0,651.5 L1568.0,645.4 L1571.0,641.4 L1574.0,656.5 L1577.0,646.8 L1580.0,655.7 L1583.0,650.7 L1586.0,656.5 L1589.0,645.3 L1592.0,653.1 L1595.0,658.3 L1598.0,653.8 L1601.0,654.8 L1604.0,660.2 L1607.0,658.6 L1610.0,664.4 L1613.0,659.0 L1616.0,630.5 L1619.0,638.3 L1622.0,651.7 L1625.0,650.9 L1628.0,643.2 L1631.0,653.8 L1634.0,652.3 L1637.0,662.2 L1640.0,650.2 L1643.0,659.8 L1646.0,665.6 L1649.0,663.3 L1652.0,653.9 L1655.0,652.9 L1658.0,649.7 L1661.0,644.2 L1664.0,648.1 L1667.0,650.2 L1670.0,643.2 L1673.0,638.5 L1676.0,663.1 L1679.0,663.5 L1682.0,656.1 L1685.0,654.6 L1688.0,659.6 L1691.0,652.8 L1694.0,657.6 L1697.0,650.9 L1700.0,648.3 L1703.0,636.6 L1706.0,636.3 L1709.0,644.7 L1712.0,665.4 L1715.0,658.7 L1718.0,649.4 L1721.0,649.2 L1724.0,649.0 L1727.0,659.3 L1730.0,652.3 L1733.0,636.2 L1736.0,651.6 L1739.0,656.9 L1742.0,663.1 L1745.0,646.9 L1748.0,632.6 L1751.0,649.9 L1754.0,655.4 L1757.0,654.4 L1760.0,652.0 L1763.0,637.8 L1766.0,650.9 L1769.0,632.9 L1772.0,641.5 L1775.0,647.7 L1778.0,647.1 L1781.0,642.0 L1784.0,649.6 L1787.0,646.3 L1790.0,654.7 L1793.0,638.6 L1796.0,646.5 L1799.0,635.6 L1802.0,648.3 L1805.0,646.8 L1808.0,650.8 L1811.0,642.9 L1814.0,638.9 L1817.0,642.6 L1820.0,631.4 L1823.0,634.7 L1826.0,644.1 L1829.0,642.1 L1832.0,638.2 L1835.0,627.0 L1838.0,632.1 L1841.0,646.0 L1844.0,650.5 L1847.0,651.2 L1850.0,654.6 L1853.0,664.2 L1856.0,648.9 L1859.0,631.3 L1862.0,622.8 L1865.0,638.3 L1868.0,639.2 L1871.0,659.0 L1874.0,636.0 L1877.0,654.9" fill="none" stroke="#ba43a9" stroke-width="1.2" stroke-opacity="0.9" stroke-linejoin="round"/><path d="M1424.0,653.3 L1427.0,648.9 L1430.0,651.4 L1433.0,657.5 L1436.0,659.2 L1439.0,659.4 L1442.0,659.7 L1445.0,660.6 L1448.0,651.4 L1451.0,656.3 L1454.0,650.1 L1457.0,639.4 L1460.0,650.2 L1463.0,644.2 L1466.0,657.3 L1469.0,655.2 L1472.0,665.1 L1475.0,664.0 L1478.0,659.3 L1481.0,659.8 L1484.0,662.4 L1487.0,655.8 L1490.0,634.3 L1493.0,655.4 L1496.0,629.7 L1499.0,639.9 L1502.0,647.3 L1505.0,637.3 L1508.0,663.9 L1511.0,647.0 L1514.0,646.7 L1517.0,644.3 L1520.0,655.5 L1523.0,653.6 L1526.0,656.9 L1529.0,654.5 L1532.0,657.8 L1535.0,639.7 L1538.0,638.7 L1541.0,652.7 L1544.0,651.8 L1547.0,651.4 L1550.0,639.1 L1553.0,635.9 L1556.0,647.3 L1559.0,622.4 L1562.0,646.2 L1565.0,639.6 L1568.0,646.2 L1571.0,645.7 L1574.0,641.3 L1577.0,654.2 L1580.0,647.9 L1583.0,661.5 L1586.0,658.9 L1589.0,658.2 L1592.0,651.8 L1595.0,656.4 L1598.0,657.9 L1601.0,663.0 L1604.0,662.3 L1607.0,662.5 L1610.0,663.2 L1613.0,662.4 L1616.0,653.9 L1619.0,651.6 L1622.0,668.3 L1625.0,650.4 L1628.0,651.6 L1631.0,647.6 L1634.0,654.1 L1637.0,663.8 L1640.0,658.6 L1643.0,663.5 L1646.0,656.5 L1649.0,665.8 L1652.0,663.7 L1655.0,662.7 L1658.0,654.8 L1661.0,653.8 L1664.0,658.8 L1667.0,656.2 L1670.0,659.3 L1673.0,656.4 L1676.0,650.0 L1679.0,657.3 L1682.0,658.7 L1685.0,648.3 L1688.0,658.1 L1691.0,654.9 L1694.0,663.3 L1697.0,660.6 L1700.0,660.3 L1703.0,652.1 L1706.0,654.9 L1709.0,653.1 L1712.0,653.7 L1715.0,641.1 L1718.0,633.9 L1721.0,653.0 L1724.0,656.8 L1727.0,651.1 L1730.0,652.8 L1733.0,659.2 L1736.0,658.8 L1739.0,656.0 L1742.0,652.8 L1745.0,658.4 L1748.0,648.4 L1751.0,652.6 L1754.0,657.3 L1757.0,654.4 L1760.0,647.5 L1763.0,632.2 L1766.0,650.6 L1769.0,641.4 L1772.0,648.8 L1775.0,648.9 L1778.0,638.7 L1781.0,646.5 L1784.0,658.8 L1787.0,663.0 L1790.0,651.6 L1793.0,650.2 L1796.0,651.2 L1799.0,652.4 L1802.0,652.4 L1805.0,636.2 L1808.0,647.7 L1811.0,651.0 L1814.0,643.4 L1817.0,629.5 L1820.0,641.6 L1823.0,641.6 L1826.0,636.0 L1829.0,638.0 L1832.0,641.1 L1835.0,644.7 L1838.0,639.7 L1841.0,643.0 L1844.0,638.4 L1847.0,662.3 L1850.0,658.8 L1853.0,652.6 L1856.0,651.1 L1859.0,637.8 L1862.0,624.9 L1865.0,640.7 L1868.0,633.0 L1871.0,644.0 L1874.0,642.5 L1877.0,652.9" fill="none" stroke="#6d1f62" stroke-width="1.2" stroke-opacity="0.9" stroke-linejoin="round"/><path d="M1424.0,660.3 L1427.0,660.3 L1430.0,656.1 L1433.0,658.8 L1436.0,656.4 L1439.0,657.9 L1442.0,658.9 L1445.0,660.1 L1448.0,653.8 L1451.0,658.1 L1454.0,650.1 L1457.0,648.3 L1460.0,651.4 L1463.0,656.4 L1466.0,665.5 L1469.0,660.7 L1472.0,661.8 L1475.0,664.0 L1478.0,650.6 L1481.0,658.4 L1484.0,660.4 L1487.0,657.1 L1490.0,651.8 L1493.0,641.4 L1496.0,619.4 L1499.0,617.0 L1502.0,640.4 L1505.0,641.4 L1508.0,627.7 L1511.0,644.4 L1514.0,638.9 L1517.0,627.9 L1520.0,639.1 L1523.0,627.0 L1526.0,638.4 L1529.0,636.4 L1532.0,652.6 L1535.0,653.4 L1538.0,650.2 L1541.0,645.9 L1544.0,628.2 L1547.0,624.2 L1550.0,624.3 L1553.0,628.5 L1556.0,653.8 L1559.0,623.3 L1562.0,641.3 L1565.0,653.2 L1568.0,647.7 L1571.0,637.0 L1574.0,657.4 L1577.0,665.8 L1580.0,657.8 L1583.0,666.6 L1586.0,665.1 L1589.0,667.5 L1592.0,657.2 L1595.0,647.4 L1598.0,652.1 L1601.0,651.8 L1604.0,661.3 L1607.0,654.7 L1610.0,658.7 L1613.0,660.1 L1616.0,634.0 L1619.0,650.5 L1622.0,653.2 L1625.0,644.1 L1628.0,647.0 L1631.0,662.6 L1634.0,656.9 L1637.0,643.2 L1640.0,656.7 L1643.0,657.7 L1646.0,667.6 L1649.0,662.4 L1652.0,664.7 L1655.0,659.4 L1658.0,649.0 L1661.0,653.6 L1664.0,653.0 L1667.0,654.8 L1670.0,650.7 L1673.0,646.9 L1676.0,648.9 L1679.0,650.9 L1682.0,660.7 L1685.0,658.5 L1688.0,654.3 L1691.0,648.4 L1694.0,654.5 L1697.0,650.1 L1700.0,656.2 L1703.0,660.1 L1706.0,643.3 L1709.0,654.0 L1712.0,651.9 L1715.0,637.3 L1718.0,619.7 L1721.0,659.3 L1724.0,658.0 L1727.0,655.9 L1730.0,654.8 L1733.0,656.7 L1736.0,653.4 L1739.0,654.1 L1742.0,664.8 L1745.0,643.6 L1748.0,646.7 L1751.0,654.5 L1754.0,651.6 L1757.0,651.8 L1760.0,656.0 L1763.0,646.6 L1766.0,652.4 L1769.0,656.8 L1772.0,655.8 L1775.0,642.0 L1778.0,629.5 L1781.0,645.5 L1784.0,644.1 L1787.0,657.6 L1790.0,647.2 L1793.0,631.9 L1796.0,630.5 L1799.0,645.1 L1802.0,636.7 L1805.0,642.8 L1808.0,633.8 L1811.0,625.8 L1814.0,622.3 L1817.0,628.7 L1820.0,625.9 L1823.0,636.3 L1826.0,628.6 L1829.0,625.7 L1832.0,635.4 L1835.0,643.0 L1838.0,645.5 L1841.0,635.8 L1844.0,637.9 L1847.0,643.4 L1850.0,644.8 L1853.0,651.8 L1856.0,651.1 L1859.0,606.8 L1862.0,618.8 L1865.0,624.9 L1868.0,635.5 L1871.0,643.1 L1874.0,647.8 L1877.0,644.2" fill="none" stroke="#962d82" stroke-width="1.2" stroke-opacity="0.9" stroke-linejoin="round"/><path d="M1424.0,665.7 L1427.0,661.6 L1430.0,653.2 L1433.0,656.4 L1436.0,653.0 L1439.0,661.7 L1442.0,659.0 L1445.0,651.5 L1448.0,660.0 L1451.0,650.1 L1454.0,658.6 L1457.0,647.8 L1460.0,650.6 L1463.0,634.3 L1466.0,652.2 L1469.0,662.0 L1472.0,664.9 L1475.0,655.5 L1478.0,659.3 L1481.0,657.5 L1484.0,655.6 L1487.0,645.4 L1490.0,640.3 L1493.0,649.8 L1496.0,620.6 L1499.0,634.5 L1502.0,640.8 L1505.0,644.5 L1508.0,653.6 L1511.0,654.3 L1514.0,642.6 L1517.0,645.9 L1520.0,645.0 L1523.0,639.5 L1526.0,634.7 L1529.0,632.8 L1532.0,638.7 L1535.0,641.9 L1538.0,625.5 L1541.0,638.7 L1544.0,625.6 L1547.0,643.1 L1550.0,616.1 L1553.0,627.7 L1556.0,634.7 L1559.0,657.9 L1562.0,644.5 L1565.0,649.6 L1568.0,645.6 L1571.0,638.9 L1574.0,645.2 L1577.0,630.5 L1580.0,663.2 L1583.0,659.3 L1586.0,652.4 L1589.0,655.4 L1592.0,653.9 L1595.0,653.6 L1598.0,652.1 L1601.0,658.0 L1604.0,660.6 L1607.0,654.8 L1610.0,661.8 L1613.0,664.5 L1616.0,660.1 L1619.0,638.0 L1622.0,645.0 L1625.0,650.8 L1628.0,655.6 L1631.0,657.7 L1634.0,650.6 L1637.0,660.2 L1640.0,649.6 L1643.0,659.5 L1646.0,664.6 L1649.0,659.6 L1652.0,652.8 L1655.0,663.2 L1658.0,659.8 L1661.0,662.5 L1664.0,656.4 L1667.0,648.5 L1670.0,655.6 L1673.0,663.4 L1676.0,638.8 L1679.0,647.9 L1682.0,648.6 L1685.0,653.4 L1688.0,641.6 L1691.0,646.7 L1694.0,659.0 L1697.0,659.2 L1700.0,659.1 L1703.0,652.6 L1706.0,652.0 L1709.0,644.1 L1712.0,654.4 L1715.0,621.5 L1718.0,615.2 L1721.0,650.8 L1724.0,651.7 L1727.0,652.2 L1730.0,652.1 L1733.0,657.0 L1736.0,649.5 L1739.0,650.7 L1742.0,653.1 L1745.0,646.2 L1748.0,651.9 L1751.0,654.4 L1754.0,662.0 L1757.0,657.4 L1760.0,651.9 L1763.0,656.2 L1766.0,656.0 L1769.0,657.2 L1772.0,641.8 L1775.0,646.7 L1778.0,648.7 L1781.0,648.7 L1784.0,656.6 L1787.0,657.3 L1790.0,645.5 L1793.0,628.6 L1796.0,642.4 L1799.0,647.4 L1802.0,650.3 L1805.0,661.1 L1808.0,659.6 L1811.0,666.0 L1814.0,645.2 L1817.0,635.0 L1820.0,652.4 L1823.0,644.0 L1826.0,623.4 L1829.0,609.5 L1832.0,650.3 L1835.0,644.6 L1838.0,646.5 L1841.0,651.4 L1844.0,662.1 L1847.0,645.4 L1850.0,655.4 L1853.0,652.3 L1856.0,644.4 L1859.0,617.7 L1862.0,618.0 L1865.0,657.0 L1868.0,649.1 L1871.0,647.0 L1874.0,655.9 L1877.0,655.5" fill="none" stroke="#614d93" stroke-width="1.2" stroke-opacity="0.9" stroke-linejoin="round"/></svg>
<div class="t" style="top:676.34px;font-size:12px;color:#d8d9da;left:887.70px;width:1200px;text-align:center;">19:55</div>
<div class="t" style="top:676.34px;font-size:12px;color:#d8d9da;left:963.50px;width:1200px;text-align:center;">20:00</div>
<div class="t" style="top:676.34px;font-size:12px;color:#d8d9da;left:1038.60px;width:1200px;text-align:center;">20:05</div>
<div class="t" style="top:676.34px;font-size:12px;color:#d8d9da;left:1114.00px;width:1200px;text-align:center;">20:10</div>
<div class="t" style="top:676.34px;font-size:12px;color:#d8d9da;left:1190.00px;width:1200px;text-align:center;">20:15</div>
<div class="t" style="top:676.34px;font-size:12px;color:#d8d9da;left:1265.00px;width:1200px;text-align:center;">20:20</div>
<div class="t" style="top:701.84px;font-size:12px;color:#33b1e5;font-weight:700;left:617.50px;width:1200px;text-align:right;">avg</div>
<div class="t" style="top:701.84px;font-size:12px;color:#33b1e5;font-weight:700;left:667.00px;width:1200px;text-align:right;">current</div>
<svg style="left:1867px;top:705px" width="8" height="5" viewBox="0 0 8 5"><path d="M0,0 L8,0 L4,4Z" fill="#33b1e5"/></svg>
<div class="b" style="left:1404px;top:731.7px;width:13px;height:3.4px;background:#eab839;border-radius:1px"></div>
<div class="t" style="top:724.84px;font-size:12px;color:#d8d9da;left:1424.00px;">Core 17</div>
<div class="t" style="top:724.84px;font-size:12px;color:#d8d9da;left:617.50px;width:1200px;text-align:right;">21%</div>
<div class="t" style="top:724.84px;font-size:12px;color:#d8d9da;left:675.00px;width:1200px;text-align:right;">51%</div>
<div class="b" style="left:1404px;top:757.7px;width:13px;height:3.4px;background:#7eb26d;border-radius:1px"></div>
<div class="t" style="top:750.84px;font-size:12px;color:#d8d9da;left:1424.00px;">Core 16</div>
<div class="t" style="top:750.84px;font-size:12px;color:#d8d9da;left:617.50px;width:1200px;text-align:right;">19%</div>
<div class="t" style="top:750.84px;font-size:12px;color:#d8d9da;left:675.00px;width:1200px;text-align:right;">47%</div>
<div class="b" style="left:1886px;top:701px;width:5px;height:34px;background:rgba(200,205,210,0.35);border-radius:3px"></div>
<div class="rh" style="left:1892.4px;top:763.6px"></div>
<div class="p" style="left:84.0px;top:828px;width:751.4px;height:252.6px;background:rgba(0,0,0,0.27)"></div>
<div class="t" style="top:837.13px;font-size:13.2px;color:#ffffff;font-weight:700;left:-140.30px;width:1200px;text-align:center;">Network</div>
<div class="t" style="left:425.0px;top:837.87px;width:400px;text-align:right;font-size:12.2px;color:#33b1e5;-webkit-text-stroke:0.45px #33b1e5"><svg style="position:relative;display:inline-block;vertical-align:-1px;margin-right:3px" width="11" height="11" viewBox="0 0 12 12"><circle cx="6" cy="6" r="4.9" fill="none" stroke="#33b1e5" stroke-width="1.7"/><path d="M6,3 L6,6.6 L4,6.6" fill="none" stroke="#33b1e5" stroke-width="1.5"/></svg>Last 30 minutes</div>
<div class="b" style="left:142.4px;top:875.9px;width:667.6px;height:1px;background:rgba(255,255,255,0.13)"></div>
<div class="b" style="left:142.4px;top:909.5px;width:667.6px;height:1px;background:rgba(255,255,255,0.13)"></div>
<div class="b" style="left:142.4px;top:943.1px;width:667.6px;height:1px;background:rgba(255,255,255,0.13)"></div>
<div class="b" style="left:236.0px;top:876.4px;width:1px;height:70.6px;background:rgba(255,255,255,0.13)"></div>
<div class="b" style="left:347.3px;top:876.4px;width:1px;height:70.6px;background:rgba(255,255,255,0.13)"></div>
<div class="b" style="left:458.5px;top:876.4px;width:1px;height:70.6px;background:rgba(255,255,255,0.13)"></div>
<div class="b" style="left:569.5px;top:876.4px;width:1px;height:70.6px;background:rgba(255,255,255,0.13)"></div>
<div class="b" style="left:681.0px;top:876.4px;width:1px;height:70.6px;background:rgba(255,255,255,0.13)"></div>
<div class="b" style="left:792.3px;top:876.4px;width:1px;height:70.6px;background:rgba(255,255,255,0.13)"></div>
<div class="t" style="top:870.54px;font-size:12px;color:#d8d9da;left:-1063.50px;width:1200px;text-align:right;">6.0 MBs</div>
<div class="t" style="top:904.14px;font-size:12px;color:#d8d9da;left:-1063.50px;width:1200px;text-align:right;">4.0 MBs</div>
<div class="t" style="top:937.74px;font-size:12px;color:#d8d9da;left:-1063.50px;width:1200px;text-align:right;">2.0 MBs</div>
<svg style="left:0;top:0" width="1918" height="947"><path d="M142.4,1000.0 L142.4,960.0 L400.0,960.0 L400.0,956.4 L439.0,956.4 L441.3,936.9 L444.7,943.7 L448.2,942.6 L450.9,956.4 L507.8,956.4 L512.0,923.8 L515.9,930.7 L522.7,914.6 L526.6,932.3 L530.3,894.4 L534.2,921.9 L537.6,932.3 L544.5,930.0 L549.1,924.2 L552.6,921.9 L556.5,914.6 L560.6,919.2 L564.0,919.6 L567.5,928.8 L570.9,927.7 L574.8,933.9 L578.9,933.4 L583.5,935.2 L589.3,933.0 L593.9,939.1 L601.9,956.4 L607.6,956.4 L609.9,944.9 L613.4,942.6 L619.1,941.4 L622.5,944.9 L629.4,942.6 L636.3,943.7 L642.0,939.8 L646.6,940.8 L650.1,944.4 L654.6,943.0 L660.4,944.4 L663.8,938.5 L667.3,942.6 L671.9,938.0 L675.3,923.1 L678.7,933.4 L682.6,911.6 L686.8,919.6 L690.2,933.4 L693.6,941.4 L698.2,934.6 L701.7,935.7 L705.1,941.4 L708.6,939.1 L712.0,931.6 L716.6,935.7 L720.0,940.3 L723.5,933.4 L726.9,939.1 L730.4,931.6 L734.9,933.9 L739.5,938.5 L743.0,939.8 L746.4,933.4 L749.9,932.3 L755.6,938.5 L760.2,933.4 L764.8,933.9 L768.2,928.8 L771.6,928.8 L775.1,938.0 L780.8,933.0 L784.3,928.8 L787.7,928.8 L790.0,941.4 L793.4,943.7 L797.6,936.2 L801.5,944.9 L804.9,943.0 L808.4,944.9 L808.4,1000.0 Z" fill="#46302e"/><path d="M142.4,960.0 L400.0,960.0 L400.0,956.4 L439.0,956.4 L441.3,936.9 L444.7,943.7 L448.2,942.6 L450.9,956.4 L507.8,956.4 L512.0,923.8 L515.9,930.7 L522.7,914.6 L526.6,932.3 L530.3,894.4 L534.2,921.9 L537.6,932.3 L544.5,930.0 L549.1,924.2 L552.6,921.9 L556.5,914.6 L560.6,919.2 L564.0,919.6 L567.5,928.8 L570.9,927.7 L574.8,933.9 L578.9,933.4 L583.5,935.2 L589.3,933.0 L593.9,939.1 L601.9,956.4 L607.6,956.4 L609.9,944.9 L613.4,942.6 L619.1,941.4 L622.5,944.9 L629.4,942.6 L636.3,943.7 L642.0,939.8 L646.6,940.8 L650.1,944.4 L654.6,943.0 L660.4,944.4 L663.8,938.5 L667.3,942.6 L671.9,938.0 L675.3,923.1 L678.7,933.4 L682.6,911.6 L686.8,919.6 L690.2,933.4 L693.6,941.4 L698.2,934.6 L701.7,935.7 L705.1,941.4 L708.6,939.1 L712.0,931.6 L716.6,935.7 L720.0,940.3 L723.5,933.4 L726.9,939.1 L730.4,931.6 L734.9,933.9 L739.5,938.5 L743.0,939.8 L746.4,933.4 L749.9,932.3 L755.6,938.5 L760.2,933.4 L764.8,933.9 L768.2,928.8 L771.6,928.8 L775.1,938.0 L780.8,933.0 L784.3,928.8 L787.7,928.8 L790.0,941.4 L793.4,943.7 L797.6,936.2 L801.5,944.9 L804.9,943.0 L808.4,944.9" fill="none" stroke="#c42a0c" stroke-width="1.6" stroke-linejoin="round"/></svg>
<div class="p" style="left:845.4px;top:828px;width:294.6px;height:252.6px;background:#299c46"></div>
<div class="t" style="top:837.13px;font-size:13.2px;color:#ffffff;font-weight:700;left:392.70px;width:1200px;text-align:center;">Uptime</div>
<div class="t" style="top:928.06px;font-size:39.5px;color:#ffffff;font-weight:700;left:391.70px;width:1200px;text-align:center;">1 month, 1</div>
<div class="p" style="left:1150.0px;top:828px;width:751.4px;height:252.6px;background:rgba(0,0,0,0.27)"></div>
<div class="t" style="top:837.13px;font-size:13.2px;color:#ffffff;font-weight:700;left:925.70px;width:1200px;text-align:center;">Memory</div>
<div class="t" style="left:1490.0px;top:837.87px;width:400px;text-align:right;font-size:12.2px;color:#33b1e5;-webkit-text-stroke:0.45px #33b1e5"><svg style="position:relative;display:inline-block;vertical-align:-1px;margin-right:3px" width="11" height="11" viewBox="0 0 12 12"><circle cx="6" cy="6" r="4.9" fill="none" stroke="#33b1e5" stroke-width="1.7"/><path d="M6,3 L6,6.6 L4,6.6" fill="none" stroke="#33b1e5" stroke-width="1.5"/></svg>Last 30 minutes</div>
<div class="b" style="left:1263.3px;top:877.0px;width:359.7px;height:1px;background:rgba(255,255,255,0.13)"></div>
<div class="b" style="left:1263.3px;top:905.4px;width:359.7px;height:1px;background:rgba(255,255,255,0.13)"></div>
<div class="b" style="left:1263.3px;top:933.7px;width:359.7px;height:1px;background:rgba(255,255,255,0.13)"></div>
<div class="t" style="top:869.98px;font-size:11.6px;color:#d8d9da;left:56.00px;width:1200px;text-align:right;">70.000000 GB</div>
<div class="t" style="top:898.38px;font-size:11.6px;color:#d8d9da;left:56.00px;width:1200px;text-align:right;">60.000000 GB</div>
<div class="t" style="top:926.68px;font-size:11.6px;color:#d8d9da;left:56.00px;width:1200px;text-align:right;">50.000000 GB</div>
<svg style="left:0;top:0" width="1918" height="947"><rect x="1263.3" y="882" width="356.7" height="65" fill="#a5693d"/><rect x="1263.3" y="882" width="356.7" height="3.6" fill="#ef843c"/><path d="M1263.3,888.0 L1264.8,887.9 L1266.3,887.9 L1267.8,887.8 L1269.3,887.8 L1270.8,887.7 L1272.3,887.7 L1273.7,887.6 L1275.2,887.6 L1276.7,887.7 L1278.2,887.8 L1279.7,887.9 L1281.2,887.9 L1282.7,888.0 L1284.2,888.1 L1285.7,888.2 L1287.2,888.3 L1288.7,888.3 L1290.2,888.2 L1291.7,888.2 L1293.1,888.2 L1294.6,888.1 L1296.1,888.1 L1297.6,888.1 L1299.1,888.0 L1300.6,888.0 L1302.1,887.9 L1303.6,887.9 L1305.1,887.9 L1306.6,887.8 L1308.1,887.8 L1309.6,887.8 L1311.1,887.7 L1312.6,887.9 L1314.0,888.4 L1315.5,888.2 L1317.0,887.8 L1318.5,887.3 L1320.0,886.9 L1321.5,886.5 L1323.0,886.2 L1324.5,885.9 L1326.0,885.5 L1327.5,885.7 L1329.0,885.9 L1330.5,886.5 L1332.0,888.1 L1333.4,889.2 L1334.9,889.1 L1336.4,888.9 L1337.9,888.7 L1339.4,888.5 L1340.9,888.3 L1342.4,888.1 L1343.9,887.9 L1345.4,887.8 L1346.9,887.6 L1348.4,887.4 L1349.9,887.2 L1351.4,888.9 L1352.8,889.8 L1354.3,890.0 L1355.8,890.2 L1357.3,890.4 L1358.8,890.6 L1360.3,890.6 L1361.8,890.3 L1363.3,890.1 L1364.8,889.8 L1366.3,889.6 L1367.8,889.3 L1369.3,889.3 L1370.8,889.3 L1372.3,889.2 L1373.7,889.2 L1375.2,889.2 L1376.7,889.2 L1378.2,889.2 L1379.7,889.2 L1381.2,889.1 L1382.7,889.1 L1384.2,889.1 L1385.7,889.1 L1387.2,889.1 L1388.7,889.0 L1390.2,889.0 L1391.7,889.0 L1393.1,888.7 L1394.6,888.3 L1396.1,887.8 L1397.6,887.6 L1399.1,887.5 L1400.6,887.4 L1402.1,887.3 L1403.6,887.1 L1405.1,887.5 L1406.6,886.8 L1408.1,887.1 L1409.6,887.3 L1411.1,886.7 L1412.5,887.0 L1414.0,886.9 L1415.5,886.5 L1417.0,886.6 L1418.5,886.8 L1420.0,886.6 L1421.5,886.7 L1423.0,886.2 L1424.5,886.2 L1426.0,886.1 L1427.5,886.3 L1429.0,886.5 L1430.5,886.2 L1431.9,886.3 L1433.4,885.9 L1434.9,886.1 L1436.4,885.6 L1437.9,885.7 L1439.4,885.9 L1440.9,885.9 L1442.4,885.6 L1443.9,885.3 L1445.4,885.3 L1446.9,885.2 L1448.4,885.2 L1449.9,885.5 L1451.4,885.1 L1452.8,885.6 L1454.3,885.6 L1455.8,885.0 L1457.3,885.2 L1458.8,885.3 L1460.3,885.0 L1461.8,885.3 L1463.3,885.6 L1464.8,885.1 L1466.3,885.4 L1467.8,885.1 L1469.3,885.4 L1470.8,885.7 L1472.2,885.2 L1473.7,885.1 L1475.2,885.1 L1476.7,885.4 L1478.2,885.1 L1479.7,885.1 L1481.2,885.4 L1482.7,885.7 L1484.2,885.4 L1485.7,885.4 L1487.2,885.5 L1488.7,885.2 L1490.2,885.5 L1491.6,885.2 L1493.1,885.5 L1494.6,885.8 L1496.1,885.2 L1497.6,885.5 L1499.1,885.6 L1500.6,885.3 L1502.1,885.3 L1503.6,885.8 L1505.1,885.8 L1506.6,885.2 L1508.1,885.6 L1509.6,885.8 L1511.0,885.3 L1512.5,885.6 L1514.0,885.2 L1515.5,885.4 L1517.0,885.6 L1518.5,885.5 L1520.0,885.7 L1521.5,885.2 L1523.0,885.3 L1524.5,885.7 L1526.0,885.5 L1527.5,885.4 L1529.0,885.4 L1530.5,885.8 L1531.9,885.5 L1533.4,885.1 L1534.9,885.6 L1536.4,885.3 L1537.9,885.4 L1539.4,885.2 L1540.9,885.4 L1542.4,885.3 L1543.9,885.1 L1545.4,885.5 L1546.9,885.1 L1548.4,885.6 L1549.9,885.1 L1551.3,885.6 L1552.8,885.6 L1554.3,885.4 L1555.8,885.5 L1557.3,885.2 L1558.8,885.6 L1560.3,885.3 L1561.8,885.2 L1563.3,885.7 L1564.8,885.3 L1566.3,885.3 L1567.8,885.7 L1569.3,885.3 L1570.7,885.5 L1572.2,885.2 L1573.7,885.6 L1575.2,885.2 L1576.7,885.1 L1578.2,885.7 L1579.7,885.2 L1581.2,885.7 L1582.7,885.7 L1584.2,885.5 L1585.7,885.1 L1587.2,885.1 L1588.7,885.2 L1590.2,885.3 L1591.6,885.5 L1593.1,885.7 L1594.6,885.3 L1596.1,885.1 L1597.6,885.4 L1599.1,885.1 L1600.6,885.1 L1602.1,886.9 L1603.6,888.9 L1605.1,889.0 L1606.6,889.4 L1608.1,889.6 L1609.6,889.7 L1611.0,889.3 L1612.5,889.4 L1614.0,888.7 L1615.5,888.8 L1617.0,888.6 L1618.5,888.5 L1620.0,888.0" fill="none" stroke="#c99466" stroke-width="1"/><path d="M1263.3,947.0 L1263.3,889.3 L1264.8,889.2 L1266.3,889.2 L1267.8,889.1 L1269.3,889.1 L1270.8,889.0 L1272.3,889.0 L1273.7,888.9 L1275.2,888.9 L1276.7,889.0 L1278.2,889.1 L1279.7,889.2 L1281.2,889.2 L1282.7,889.3 L1284.2,889.4 L1285.7,889.5 L1287.2,889.6 L1288.7,889.6 L1290.2,889.5 L1291.7,889.5 L1293.1,889.5 L1294.6,889.4 L1296.1,889.4 L1297.6,889.4 L1299.1,889.3 L1300.6,889.3 L1302.1,889.2 L1303.6,889.2 L1305.1,889.2 L1306.6,889.1 L1308.1,889.1 L1309.6,889.1 L1311.1,889.0 L1312.6,889.2 L1314.0,889.7 L1315.5,889.5 L1317.0,889.1 L1318.5,888.6 L1320.0,888.2 L1321.5,887.8 L1323.0,887.5 L1324.5,887.2 L1326.0,886.8 L1327.5,887.0 L1329.0,887.2 L1330.5,887.8 L1332.0,889.4 L1333.4,890.5 L1334.9,890.4 L1336.4,890.2 L1337.9,890.0 L1339.4,889.8 L1340.9,889.6 L1342.4,889.4 L1343.9,889.2 L1345.4,889.1 L1346.9,888.9 L1348.4,888.7 L1349.9,888.5 L1351.4,890.2 L1352.8,891.1 L1354.3,891.3 L1355.8,891.5 L1357.3,891.7 L1358.8,891.9 L1360.3,891.9 L1361.8,891.6 L1363.3,891.4 L1364.8,891.1 L1366.3,890.9 L1367.8,890.6 L1369.3,890.6 L1370.8,890.6 L1372.3,890.5 L1373.7,890.5 L1375.2,890.5 L1376.7,890.5 L1378.2,890.5 L1379.7,890.5 L1381.2,890.4 L1382.7,890.4 L1384.2,890.4 L1385.7,890.4 L1387.2,890.4 L1388.7,890.3 L1390.2,890.3 L1391.7,890.3 L1393.1,890.0 L1394.6,889.6 L1396.1,889.1 L1397.6,888.9 L1399.1,888.8 L1400.6,888.7 L1402.1,888.6 L1403.6,888.4 L1405.1,888.8 L1406.6,888.1 L1408.1,888.4 L1409.6,888.6 L1411.1,888.0 L1412.5,888.3 L1414.0,888.2 L1415.5,887.8 L1417.0,887.9 L1418.5,888.1 L1420.0,887.9 L1421.5,888.0 L1423.0,887.5 L1424.5,887.5 L1426.0,887.4 L1427.5,887.6 L1429.0,887.8 L1430.5,887.5 L1431.9,887.6 L1433.4,887.2 L1434.9,887.4 L1436.4,886.9 L1437.9,887.0 L1439.4,887.2 L1440.9,887.2 L1442.4,886.9 L1443.9,886.6 L1445.4,886.6 L1446.9,886.5 L1448.4,886.5 L1449.9,886.8 L1451.4,886.4 L1452.8,886.9 L1454.3,886.9 L1455.8,886.3 L1457.3,886.5 L1458.8,886.6 L1460.3,886.3 L1461.8,886.6 L1463.3,886.9 L1464.8,886.4 L1466.3,886.7 L1467.8,886.4 L1469.3,886.7 L1470.8,887.0 L1472.2,886.5 L1473.7,886.4 L1475.2,886.4 L1476.7,886.7 L1478.2,886.4 L1479.7,886.4 L1481.2,886.7 L1482.7,887.0 L1484.2,886.7 L1485.7,886.7 L1487.2,886.8 L1488.7,886.5 L1490.2,886.8 L1491.6,886.5 L1493.1,886.8 L1494.6,887.1 L1496.1,886.5 L1497.6,886.8 L1499.1,886.9 L1500.6,886.6 L1502.1,886.6 L1503.6,887.1 L1505.1,887.1 L1506.6,886.5 L1508.1,886.9 L1509.6,887.1 L1511.0,886.6 L1512.5,886.9 L1514.0,886.5 L1515.5,886.7 L1517.0,886.9 L1518.5,886.8 L1520.0,887.0 L1521.5,886.5 L1523.0,886.6 L1524.5,887.0 L1526.0,886.8 L1527.5,886.7 L1529.0,886.7 L1530.5,887.1 L1531.9,886.8 L1533.4,886.4 L1534.9,886.9 L1536.4,886.6 L1537.9,886.7 L1539.4,886.5 L1540.9,886.7 L1542.4,886.6 L1543.9,886.4 L1545.4,886.8 L1546.9,886.4 L1548.4,886.9 L1549.9,886.4 L1551.3,886.9 L1552.8,886.9 L1554.3,886.7 L1555.8,886.8 L1557.3,886.5 L1558.8,886.9 L1560.3,886.6 L1561.8,886.5 L1563.3,887.0 L1564.8,886.6 L1566.3,886.6 L1567.8,887.0 L1569.3,886.6 L1570.7,886.8 L1572.2,886.5 L1573.7,886.9 L1575.2,886.5 L1576.7,886.4 L1578.2,887.0 L1579.7,886.5 L1581.2,887.0 L1582.7,887.0 L1584.2,886.8 L1585.7,886.4 L1587.2,886.4 L1588.7,886.5 L1590.2,886.6 L1591.6,886.8 L1593.1,887.0 L1594.6,886.6 L1596.1,886.4 L1597.6,886.7 L1599.1,886.4 L1600.6,886.4 L1602.1,888.2 L1603.6,890.2 L1605.1,890.3 L1606.6,890.7 L1608.1,890.9 L1609.6,891.0 L1611.0,890.6 L1612.5,890.7 L1614.0,890.0 L1615.5,890.1 L1617.0,889.9 L1618.5,889.8 L1620.0,889.3 L1620.0,947.0 Z" fill="#52909b"/><path d="M1263.3,889.3 L1264.8,889.2 L1266.3,889.2 L1267.8,889.1 L1269.3,889.1 L1270.8,889.0 L1272.3,889.0 L1273.7,888.9 L1275.2,888.9 L1276.7,889.0 L1278.2,889.1 L1279.7,889.2 L1281.2,889.2 L1282.7,889.3 L1284.2,889.4 L1285.7,889.5 L1287.2,889.6 L1288.7,889.6 L1290.2,889.5 L1291.7,889.5 L1293.1,889.5 L1294.6,889.4 L1296.1,889.4 L1297.6,889.4 L1299.1,889.3 L1300.6,889.3 L1302.1,889.2 L1303.6,889.2 L1305.1,889.2 L1306.6,889.1 L1308.1,889.1 L1309.6,889.1 L1311.1,889.0 L1312.6,889.2 L1314.0,889.7 L1315.5,889.5 L1317.0,889.1 L1318.5,888.6 L1320.0,888.2 L1321.5,887.8 L1323.0,887.5 L1324.5,887.2 L1326.0,886.8 L1327.5,887.0 L1329.0,887.2 L1330.5,887.8 L1332.0,889.4 L1333.4,890.5 L1334.9,890.4 L1336.4,890.2 L1337.9,890.0 L1339.4,889.8 L1340.9,889.6 L1342.4,889.4 L1343.9,889.2 L1345.4,889.1 L1346.9,888.9 L1348.4,888.7 L1349.9,888.5 L1351.4,890.2 L1352.8,891.1 L1354.3,891.3 L1355.8,891.5 L1357.3,891.7 L1358.8,891.9 L1360.3,891.9 L1361.8,891.6 L1363.3,891.4 L1364.8,891.1 L1366.3,890.9 L1367.8,890.6 L1369.3,890.6 L1370.8,890.6 L1372.3,890.5 L1373.7,890.5 L1375.2,890.5 L1376.7,890.5 L1378.2,890.5 L1379.7,890.5 L1381.2,890.4 L1382.7,890.4 L1384.2,890.4 L1385.7,890.4 L1387.2,890.4 L1388.7,890.3 L1390.2,890.3 L1391.7,890.3 L1393.1,890.0 L1394.6,889.6 L1396.1,889.1 L1397.6,888.9 L1399.1,888.8 L1400.6,888.7 L1402.1,888.6 L1403.6,888.4 L1405.1,888.8 L1406.6,888.1 L1408.1,888.4 L1409.6,888.6 L1411.1,888.0 L1412.5,888.3 L1414.0,888.2 L1415.5,887.8 L1417.0,887.9 L1418.5,888.1 L1420.0,887.9 L1421.5,888.0 L1423.0,887.5 L1424.5,887.5 L1426.0,887.4 L1427.5,887.6 L1429.0,887.8 L1430.5,887.5 L1431.9,887.6 L1433.4,887.2 L1434.9,887.4 L1436.4,886.9 L1437.9,887.0 L1439.4,887.2 L1440.9,887.2 L1442.4,886.9 L1443.9,886.6 L1445.4,886.6 L1446.9,886.5 L1448.4,886.5 L1449.9,886.8 L1451.4,886.4 L1452.8,886.9 L1454.3,886.9 L1455.8,886.3 L1457.3,886.5 L1458.8,886.6 L1460.3,886.3 L1461.8,886.6 L1463.3,886.9 L1464.8,886.4 L1466.3,886.7 L1467.8,886.4 L1469.3,886.7 L1470.8,887.0 L1472.2,886.5 L1473.7,886.4 L1475.2,886.4 L1476.7,886.7 L1478.2,886.4 L1479.7,886.4 L1481.2,886.7 L1482.7,887.0 L1484.2,886.7 L1485.7,886.7 L1487.2,886.8 L1488.7,886.5 L1490.2,886.8 L1491.6,886.5 L1493.1,886.8 L1494.6,887.1 L1496.1,886.5 L1497.6,886.8 L1499.1,886.9 L1500.6,886.6 L1502.1,886.6 L1503.6,887.1 L1505.1,887.1 L1506.6,886.5 L1508.1,886.9 L1509.6,887.1 L1511.0,886.6 L1512.5,886.9 L1514.0,886.5 L1515.5,886.7 L1517.0,886.9 L1518.5,886.8 L1520.0,887.0 L1521.5,886.5 L1523.0,886.6 L1524.5,887.0 L1526.0,886.8 L1527.5,886.7 L1529.0,886.7 L1530.5,887.1 L1531.9,886.8 L1533.4,886.4 L1534.9,886.9 L1536.4,886.6 L1537.9,886.7 L1539.4,886.5 L1540.9,886.7 L1542.4,886.6 L1543.9,886.4 L1545.4,886.8 L1546.9,886.4 L1548.4,886.9 L1549.9,886.4 L1551.3,886.9 L1552.8,886.9 L1554.3,886.7 L1555.8,886.8 L1557.3,886.5 L1558.8,886.9 L1560.3,886.6 L1561.8,886.5 L1563.3,887.0 L1564.8,886.6 L1566.3,886.6 L1567.8,887.0 L1569.3,886.6 L1570.7,886.8 L1572.2,886.5 L1573.7,886.9 L1575.2,886.5 L1576.7,886.4 L1578.2,887.0 L1579.7,886.5 L1581.2,887.0 L1582.7,887.0 L1584.2,886.8 L1585.7,886.4 L1587.2,886.4 L1588.7,886.5 L1590.2,886.6 L1591.6,886.8 L1593.1,887.0 L1594.6,886.6 L1596.1,886.4 L1597.6,886.7 L1599.1,886.4 L1600.6,886.4 L1602.1,888.2 L1603.6,890.2 L1605.1,890.3 L1606.6,890.7 L1608.1,890.9 L1609.6,891.0 L1611.0,890.6 L1612.5,890.7 L1614.0,890.0 L1615.5,890.1 L1617.0,889.9 L1618.5,889.8 L1620.0,889.3" fill="none" stroke="#5fcde3" stroke-width="1.7"/></svg>
<div class="b" style="left:1313.5px;top:877.5px;width:1px;height:69.5px;background:rgba(255,255,255,0.13)"></div>
<div class="b" style="left:1373.1px;top:877.5px;width:1px;height:69.5px;background:rgba(255,255,255,0.13)"></div>
<div class="b" style="left:1433.5px;top:877.5px;width:1px;height:69.5px;background:rgba(255,255,255,0.13)"></div>
<div class="b" style="left:1493.2px;top:877.5px;width:1px;height:69.5px;background:rgba(255,255,255,0.13)"></div>
<div class="b" style="left:1554.2px;top:877.5px;width:1px;height:69.5px;background:rgba(255,255,255,0.13)"></div>
<div class="b" style="left:1613.1px;top:877.5px;width:1px;height:69.5px;background:rgba(255,255,255,0.13)"></div>
<div class="b" style="left:1263.3px;top:905.4px;width:359.7px;height:1px;background:rgba(255,255,255,0.13)"></div>
<div class="b" style="left:1263.3px;top:933.7px;width:359.7px;height:1px;background:rgba(255,255,255,0.13)"></div>
<div class="t" style="top:876.84px;font-size:12px;color:#33b1e5;font-weight:700;left:602.70px;width:1200px;text-align:right;">max</div>
<div class="t" style="top:876.84px;font-size:12px;color:#33b1e5;font-weight:700;left:674.00px;width:1200px;text-align:right;">current</div>
<div class="b" style="left:1654px;top:907.0px;width:13px;height:3.4px;background:#7eb26d;border-radius:1px"></div>
<div class="t" style="top:900.14px;font-size:12px;color:#d8d9da;left:1674.70px;">Used</div>
<div class="t" style="top:900.14px;font-size:12px;color:#d8d9da;left:602.70px;width:1200px;text-align:right;">14.7 GB</div>
<div class="t" style="top:900.14px;font-size:12px;color:#d8d9da;left:674.00px;width:1200px;text-align:right;">14.7 GB</div>
<div class="b" style="left:1654px;top:933.0px;width:13px;height:3.4px;background:#eab839;border-radius:1px"></div>
<div class="t" style="top:926.14px;font-size:12px;color:#d8d9da;left:1674.70px;">Buffered</div>
<div class="t" style="top:926.14px;font-size:12px;color:#d8d9da;left:602.70px;width:1200px;text-align:right;">3 MB</div>
<div class="t" style="top:926.14px;font-size:12px;color:#d8d9da;left:674.00px;width:1200px;text-align:right;">3 MB</div>
</body></html>
